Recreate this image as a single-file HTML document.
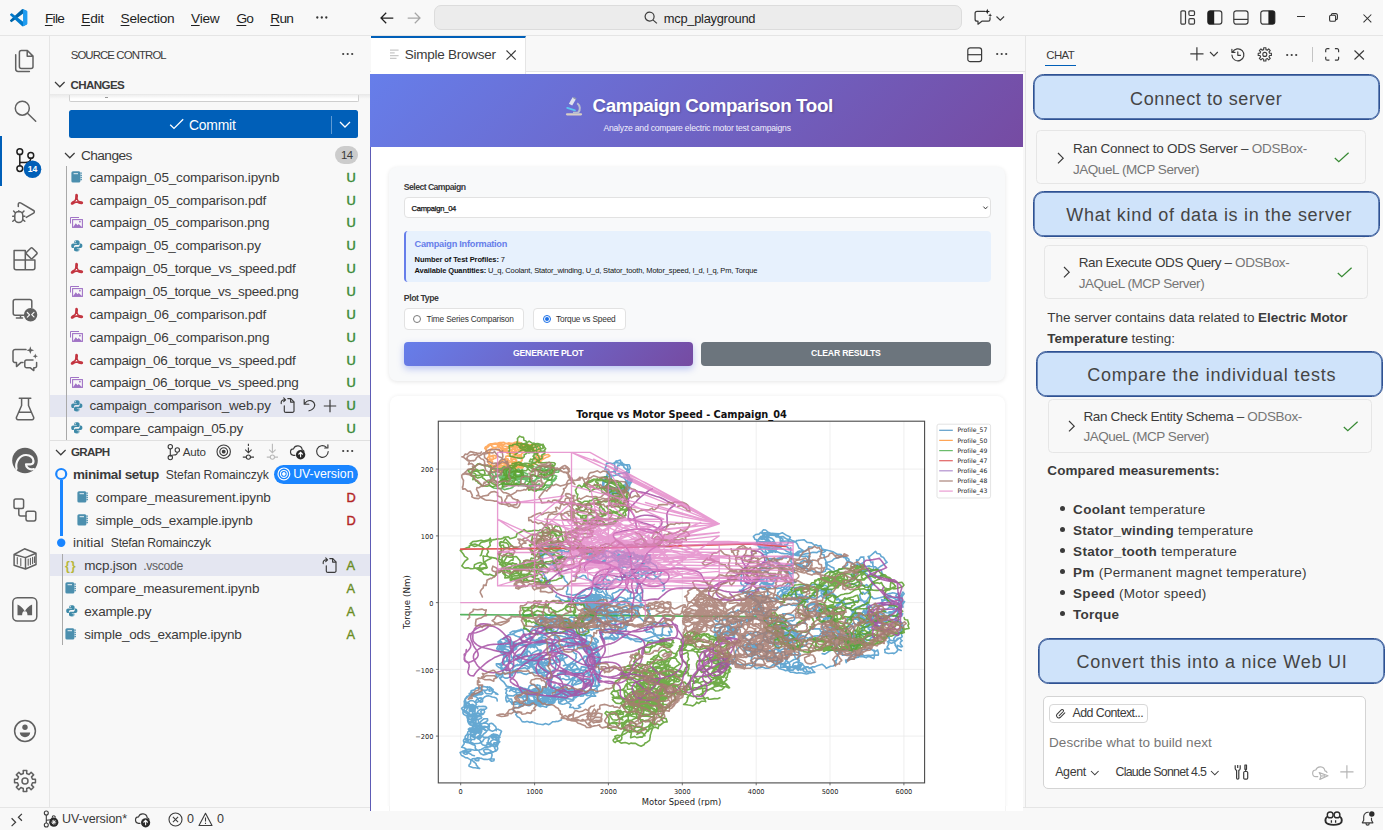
<!DOCTYPE html>
<html lang="en">
<head>
<meta charset="utf-8">
<title>mcp_playground - Visual Studio Code</title>
<style>
*{box-sizing:border-box;margin:0;padding:0}
html,body{width:1387px;height:830px;overflow:hidden;background:#fff}
body{font-family:"Liberation Sans",sans-serif;font-size:13.5px;color:#3b3b3b;position:relative}
.abs{position:absolute}
.t{position:absolute;white-space:pre;display:block}
svg{display:block;overflow:visible}
#win{position:absolute;left:0;top:0;width:1383px;height:830px;background:#f8f8f8}
/* ---------- title bar ---------- */
#title{position:absolute;left:0;top:0;width:1383px;height:36px;background:#f8f8f8;border-bottom:1px solid #e5e5e5}
#title .mi{position:absolute;top:9px;height:18px;line-height:18px;font-size:13.7px;color:#1e1e1e;white-space:pre}
.mu::first-letter{text-decoration:underline;text-decoration-thickness:1px;text-underline-offset:1.5px}
#cc{position:absolute;left:434px;top:5px;width:528px;height:25px;border:1px solid #dcdcdc;border-radius:7px;background:#ececec}
/* ---------- activity bar ---------- */
#act{position:absolute;left:0;top:36px;width:50px;height:771px;background:#f8f8f8;border-right:1px solid #e5e5e5}
#act svg{position:absolute}
/* ---------- side bar ---------- */
#side{position:absolute;left:50px;top:36px;width:320px;height:771px;background:#f8f8f8;overflow:hidden}
/* ---------- editor ---------- */
#ed{position:absolute;left:370px;top:36px;width:656px;height:775px;background:#f8f8f8;overflow:hidden}
/* ---------- chat ---------- */
#chat{position:absolute;left:1025px;top:36px;width:358px;height:771px;background:#f8f8f8;border-left:1px solid #e5e5e5}
/* ---------- status ---------- */
#status{position:absolute;left:0;top:807px;width:1383px;height:23px;background:#f8f8f8;border-top:1px solid #e5e5e5;font-size:13px;color:#3b3b3b}
</style>
</head>
<body>
<div id="win">

<!-- TITLE BAR -->
<div id="title">
<svg class="abs" style="left:9.8px;top:9px" width="17.4" height="17.4" viewBox="0 0 100 100">
<path fill="#0065A9" d="M96.46 10.8L75.86.88a6.23 6.23 0 0 0-7.11 1.2L1.3 63.58a4.17 4.17 0 0 0 0 6.17l5.51 5a2.78 2.78 0 0 0 3.55.16l83-61.54A4.17 4.17 0 0 1 100 16.67v-.24a6.25 6.25 0 0 0-3.54-5.63z"/>
<path fill="#007ACC" d="M96.46 89.2l-20.6 9.92a6.23 6.23 0 0 1-7.11-1.2L1.3 36.42a4.17 4.17 0 0 1 0-6.17l5.51-5a2.78 2.78 0 0 1 3.55-.16l83 61.54A4.17 4.17 0 0 0 100 83.33v.24a6.25 6.25 0 0 1-3.54 5.63z"/>
<path fill="#1F9CF0" d="M75.86 99.13a6.23 6.23 0 0 1-7.11-1.21c2.31 2.3 6.25.67 6.25-2.59V4.67c0-3.26-3.94-4.89-6.25-2.59a6.23 6.23 0 0 1 7.11-1.2l20.6 9.9A6.25 6.25 0 0 1 100 16.41v67.18a6.25 6.25 0 0 1-3.54 5.63z"/>
</svg>
<span class="t mu" style="left:44.90px;top:10.00px;line-height:18px;font-size:13.7px;letter-spacing:-0.666px;color:#1f1f1f;">File</span>
<span class="t mu" style="left:81.30px;top:10.00px;line-height:18px;font-size:13.7px;letter-spacing:-0.298px;color:#1f1f1f;">Edit</span>
<span class="t mu" style="left:120.60px;top:10.00px;line-height:18px;font-size:13.7px;letter-spacing:-0.279px;color:#1f1f1f;">Selection</span>
<span class="t mu" style="left:191.00px;top:10.00px;line-height:18px;font-size:13.7px;letter-spacing:-0.230px;color:#1f1f1f;">View</span>
<span class="t mu" style="left:236.40px;top:10.00px;line-height:18px;font-size:13.7px;letter-spacing:-0.783px;color:#1f1f1f;">Go</span>
<span class="t mu" style="left:270.30px;top:10.00px;line-height:18px;font-size:13.7px;letter-spacing:-0.736px;color:#1f1f1f;">Run</span>
<svg class="abs" style="left:316px;top:16px" width="12" height="3" viewBox="0 0 12 3"><circle cx="1.3" cy="1.5" r="1.15" fill="#333"/><circle cx="5.8" cy="1.5" r="1.15" fill="#333"/><circle cx="10.3" cy="1.5" r="1.15" fill="#333"/></svg>
<svg class="abs" style="left:379.5px;top:11.5px" width="14" height="12" viewBox="0 0 14 12"><path d="M13.3 6H1M6.2 0.8L1 6l5.2 5.2" fill="none" stroke="#1f1f1f" stroke-width="1.25"/></svg>
<svg class="abs" style="left:406.5px;top:11.5px" width="14" height="12" viewBox="0 0 14 12"><path d="M0.7 6H13M7.8 0.8L13 6l-5.2 5.2" fill="none" stroke="#a6a6a6" stroke-width="1.25"/></svg>
<div id="cc"></div>
<svg class="abs" style="left:644px;top:11px" width="14" height="13" viewBox="0 0 14 13"><circle cx="5.6" cy="5.6" r="4.5" fill="none" stroke="#3b3b3b" stroke-width="1.2"/><path d="M8.9 8.9L12.9 12.4" stroke="#3b3b3b" stroke-width="1.2" fill="none"/></svg>
<span class="t" style="left:663.80px;top:10.00px;line-height:17px;font-size:12.9px;letter-spacing:-0.279px;color:#1f1f1f;">mcp_playground</span>
<svg class="abs" style="left:974px;top:8px" width="20" height="18" viewBox="0 0 20 18">
<path d="M11.2 3.3H3.1a2 2 0 0 0-2 2v5.9a2 2 0 0 0 2 2h0.9v3l3.9-3h6.4a1.7 1.7 0 0 0 1.7-1.7V9.2" fill="none" stroke="#3b3b3b" stroke-width="1.25" stroke-linejoin="round"/>
<path d="M13.3 0.8l.75 2 2 .75-2 .75-.75 2-.75-2-2-.75 2-.75zM16.1 5.2l.55 1.5 1.5.55-1.5.55-.55 1.5-.55-1.5-1.5-.55 1.5-.55z" fill="#1f1f1f"/>
</svg>
<svg class="abs" style="left:996px;top:15.5px" width="9" height="5" viewBox="0 0 9 5"><path d="M0.5 0.5l3.8 3.7L8.1 0.5" fill="none" stroke="#3b3b3b" stroke-width="1.1"/></svg>
<svg class="abs" style="left:1179.5px;top:10.3px" width="16" height="15" viewBox="0 0 16 15">
<rect x="0.9" y="0.9" width="4.6" height="13.2" rx="1.2" fill="none" stroke="#3b3b3b" stroke-width="1.2"/>
<rect x="8.9" y="0.9" width="5.6" height="4.6" rx="1.2" fill="none" stroke="#3b3b3b" stroke-width="1.2"/>
<rect x="8.9" y="8.7" width="5.6" height="5.4" rx="1.2" fill="none" stroke="#3b3b3b" stroke-width="1.2"/></svg>
<svg class="abs" style="left:1206.5px;top:10.3px" width="16" height="15" viewBox="0 0 16 15">
<rect x="0.8" y="0.8" width="14" height="13.4" rx="2.4" fill="none" stroke="#3b3b3b" stroke-width="1.2"/>
<path d="M3 0.8h4.2v13.4H3A2.2 2.2 0 0 1 .8 12V3A2.2 2.2 0 0 1 3 .8z" fill="#1f1f1f"/></svg>
<svg class="abs" style="left:1233px;top:10.3px" width="16" height="15" viewBox="0 0 16 15">
<rect x="0.8" y="0.8" width="14.2" height="13.4" rx="2.4" fill="none" stroke="#3b3b3b" stroke-width="1.2"/>
<path d="M0.8 9.4H15" stroke="#3b3b3b" stroke-width="1.2"/></svg>
<svg class="abs" style="left:1260px;top:10.3px" width="16" height="15" viewBox="0 0 16 15">
<rect x="0.8" y="0.8" width="14" height="13.4" rx="2.4" fill="none" stroke="#3b3b3b" stroke-width="1.2"/>
<path d="M12.6 0.8H8.4v13.4h4.2a2.2 2.2 0 0 0 2.2-2.2V3A2.2 2.2 0 0 0 12.600.8z" fill="#1f1f1f"/></svg>
<div class="abs" style="left:1297px;top:16.4px;width:7.5px;height:1.1px;background:#333"></div>
<svg class="abs" style="left:1329px;top:13px" width="9" height="9" viewBox="0 0 9 9">
<rect x="0.6" y="2.2" width="6" height="6" rx="1.3" fill="none" stroke="#333" stroke-width="1.1"/>
<path d="M2.4 2.2V1.9A1.3 1.3 0 0 1 3.7.6h3.200A1.500 1.500 0 0 1 8.400 2.100v3.200A1.300 1.300 0 0 1 7.100 6.600H6.600" fill="none" stroke="#333" stroke-width="1.1"/></svg>
<svg class="abs" style="left:1362.5px;top:13.5px" width="9" height="9" viewBox="0 0 9 9"><path d="M0.5 0.5l7.8 7.8M8.300.5L0.500 8.300" stroke="#333" stroke-width="1.050" fill="none"/></svg>
</div>

<!-- ACTIVITY BAR -->
<div id="act">
<div class="abs" style="left:0;top:100px;width:2px;height:50px;background:#005fb8"></div>
<svg class="abs" style="left:0;top:0" width="50" height="771" viewBox="0 36 50 771" fill="none" stroke="#616161" stroke-width="1.5" stroke-linejoin="round" stroke-linecap="round">
<path d="M21.4 50.5H27.4L33 56.1V66.4a2 2 0 0 1-2 2H21.400a2 2 0 0 1-2-2V52.500a2 2 0 0 1 2-2zM27.200 50.700V56.300H32.800"/>
<path d="M15.700 54.800V69a2.400 2.400 0 0 0 2.400 2.400H29.400"/>
<circle cx="22.300" cy="108.200" r="7"/><path d="M27.500 113.300L35.700 121.200"/>
<g stroke="#1f1f1f"><circle cx="19.800" cy="151.700" r="2.900"/><circle cx="30.800" cy="155.400" r="2.900"/><circle cx="19.800" cy="168.600" r="2.900"/><path d="M19.800 154.600V165.700M30.800 158.300c0 3.200-2.500 4.300-5.500 4.300h-5.500"/></g>
<circle cx="32.500" cy="169.300" r="8.800" fill="#005fb8" stroke="none"/>
<path d="M18.300 206.500V204.200a1.500 1.500 0 0 1 2.300-1.300l13 7.600a1.500 1.500 0 0 1 0 2.600l-7.300 4.300"/>
<path d="M14.800 215.400a4 4 0 0 1 8 0v3.200a4 4 0 0 1-8 0zM14.800 216.200h-2.100M22.800 216.200h2.100M14.800 219.600l-2 1.700M22.800 219.600l2 1.700M15.300 212.800l-1.700-1.800M22.300 212.800l1.700-1.800M18.800 211.700v-1"/>
<path d="M14.100 250.500H25.300V269.700H16.100a2 2 0 0 1-2-2zM14.100 260.100H34.900V267.700a2 2 0 0 1-2 2H25.300"/>
<rect x="27.400" y="249" width="8.400" height="8.400" rx="1.300" transform="rotate(45 31.600 253.200)"/>
<path d="M23.500 315.200H15.200a2 2 0 0 1-2-2V301.500a2 2 0 0 1 2-2H29.800a2 2 0 0 1 2 2V307.500M20.500 315.400v2.400M16.400 318H22.500"/>
<circle cx="30.600" cy="314.800" r="6.700" fill="#616161" stroke="none"/><path d="M27.300 312.500l2.300 2.300-2.300 2.300M34 312.300l-2.300 2.300 2.300 2.300" stroke="#f8f8f8" stroke-width="1.200"/>
<path d="M26 349.400H15.200a2.200 2.200 0 0 0-2.200 2.200v8.800a2.200 2.200 0 0 0 2.200 2.200h1.300v4l4.300-4h2.200"/>
<path d="M36.600 362.400v3.600a1.800 1.800 0 0 1-1.800 1.800h-1v2.800l-3.400-2.800h-3.800a1.800 1.800 0 0 1-1.800-1.800v-4.200a1.800 1.800 0 0 1 1.800-1.800h6.400"/>
<path d="M30.300 346.300l1 2.900 2.900 1-2.900 1-1 2.900-1-2.900-2.900-1 2.900-1zM35.300 353.600l.7 1.900 1.900.7-1.900.7-.7 1.900-.7-1.900-1.900-.7 1.900-.7z" fill="#616161" stroke="none"/>
<path d="M19.300 398.200H30.800M21.600 398.200V405.500L16.500 417.200a1.800 1.800 0 0 0 1.600 2.600H32a1.800 1.800 0 0 0 1.600-2.600L28.500 405.500V398.200M18.700 412.300H31.400"/>
<circle cx="25" cy="460.500" r="12.800" fill="#616161" stroke="none"/>
<path d="M16.500 468.800c-1.500-7 3-13.800 9.500-13.800 4.700 0 7.500 3 7.500 6 0 2.200-1.600 3.300-3 3.300h-4.500c0 3 2.600 5.900 7.800 4.700" stroke="#f8f8f8" stroke-width="2.200"/>
<rect x="14" y="498.900" width="9.600" height="9.600" rx="1.800"/><rect x="26" y="511.300" width="9.800" height="9.600" rx="1.800"/><path d="M18.800 508.500V514a2 2 0 0 0 2 2H26"/>
<path d="M14.100 554.500L24.500 548.800L36 553.200V564.500L25.500 569L14.100 565.300zM14.100 554.500L25.500 557.600L36 553.200M25.500 557.600V569"/>
<path d="M17.300 557.500v6.500M20.800 558.500v7M28.200 559v6.300M30.400 558.200v6.200M32.600 557.400v6.200M34.500 556.700v5.800" stroke-width="1.100"/>
<rect x="12.800" y="597.800" width="24" height="23.200" rx="4.500"/>
<path d="M17.500 615.300V604.600c3.300 1.500 5.800 4 7.300 6.800 1.500-2.800 4-5.300 7.300-6.800v10.700h-4.600c0-2.700-1.100-4.200-2.700-4.200s-2.700 1.500-2.700 4.200z" fill="#616161" stroke="none"/>
<circle cx="25" cy="731" r="10.400"/><circle cx="25" cy="727.300" r="2.700" fill="#616161" stroke="none"/><path d="M19.800 732.600h10.400a5.200 4.600 0 0 1-10.400 0z" fill="#616161" stroke="none"/>
<path d="M23.21 770.55L26.79 770.55L26.68 773.49L29.13 774.50L31.12 772.34L33.66 774.88L31.50 776.87L32.51 779.32L35.45 779.21L35.45 782.79L32.51 782.68L31.50 785.13L33.66 787.12L31.12 789.66L29.13 787.50L26.68 788.51L26.79 791.45L23.21 791.45L23.32 788.51L20.87 787.50L18.88 789.66L16.34 787.12L18.50 785.13L17.49 782.68L14.55 782.79L14.55 779.21L17.49 779.32L18.50 776.87L16.34 774.88L18.88 772.34L20.87 774.50L23.32 773.49z" stroke-linejoin="round"/><circle cx="25" cy="781" r="3"/>
</svg>
<span class="t" style="left:27.72px;top:128.00px;line-height:11px;font-size:8.6px;font-weight:700;color:#fff;">14</span>
</div>

<!-- SIDE BAR -->
<div id="side">
<div class="abs" style="left:-50px;top:-36px;width:0;height:0">
<span class="t" style="left:70.70px;top:48.00px;line-height:15px;font-size:11.4px;letter-spacing:-0.892px;color:#3b3b3b;">SOURCE CONTROL</span>
<svg class="abs" style="left:342.00px;top:52.00px" width="13.0" height="4" viewBox="0 0 13.0 4"><circle cx="1.20" cy="2" r="1.1" fill="#3b3b3b"/><circle cx="5.70" cy="2" r="1.1" fill="#3b3b3b"/><circle cx="10.20" cy="2" r="1.1" fill="#3b3b3b"/></svg>
<svg class="abs" style="left:54.20px;top:80.60px" width="11.60" height="6.80" viewBox="-1 -1 11.60 6.80"><path d="M0 0L4.80 4.80L9.60 0" fill="none" stroke="#3b3b3b" stroke-width="1.2"/></svg>
<span class="t" style="left:70.60px;top:77.00px;line-height:15px;font-size:11.6px;letter-spacing:-0.641px;font-weight:700;color:#3b3b3b;">CHANGES</span>
<div class="abs" style="left:69px;top:95px;width:289.500px;height:6.700px;background:#fff;border:1px solid #cecece;border-top:none;border-radius:0 0 2px 2px"></div>
<div class="abs" style="left:50px;top:94px;width:320px;height:5px;background:linear-gradient(#dddddd99,#dddddd00)"></div>
<div class="abs" style="left:105px;top:97px;width:3px;height:1px;background:#999"></div>
<div class="abs" style="left:69px;top:110.300px;width:289.300px;height:27.700px;background:#005fb8;border-radius:2.500px"></div>
<div class="abs" style="left:331.300px;top:116px;width:1px;height:17.500px;background:#5f9ad3"></div>
<svg class="abs" style="left:169px;top:118px" width="16" height="12" viewBox="0 0 16 12"><path d="M1.200 6.800L5 10.400L14.200 1.200" fill="none" stroke="#fff" stroke-width="1.300"/></svg>
<span class="t" style="left:189.00px;top:116.00px;line-height:18px;font-size:13.9px;letter-spacing:-0.210px;color:#fff;">Commit</span>
<svg class="abs" style="left:338.80px;top:121.20px" width="12.00" height="7.00" viewBox="-1 -1 12.00 7.00"><path d="M0 0L5.00 5.00L10.00 0" fill="none" stroke="#fff" stroke-width="1.3"/></svg>
<svg class="abs" style="left:63.80px;top:151.80px" width="11.60" height="6.80" viewBox="-1 -1 11.60 6.80"><path d="M0 0L4.80 4.80L9.60 0" fill="none" stroke="#3b3b3b" stroke-width="1.2"/></svg>
<span class="t" style="left:80.90px;top:147.00px;line-height:18px;font-size:13.7px;letter-spacing:-0.542px;color:#3b3b3b;">Changes</span>
<div class="abs" style="left:335px;top:145.800px;width:23.200px;height:17.800px;border-radius:9px;background:#cccccc"></div>
<span class="t" style="left:341.00px;top:148.00px;line-height:15px;font-size:11.4px;letter-spacing:-0.536px;color:#3b3b3b;">14</span>
<div class="abs" style="left:50px;top:395.200px;width:320px;height:22.300px;background:#e4e6f1"></div>
<div class="abs" style="left:66px;top:166px;width:1px;height:274px;background:#a9a9a9"></div>
<svg class="abs" style="left:71.10px;top:171.00px" width="12" height="12" viewBox="0 0 12 12"><rect x="0.400" y="0.200" width="9" height="11.400" rx="1.600" fill="#4c8fae"/><path d="M9.400 2.100h1.500M9.400 4.300h1.500M9.400 6.500h1.500M9.400 8.700h1.500" stroke="#4c8fae" stroke-width="1.300"/><path d="M2.600 2.700h4.400" stroke="#e8f1f5" stroke-width="1"/></svg>
<span class="t" style="left:89.50px;top:169.00px;line-height:18px;font-size:13.5px;letter-spacing:-0.163px;color:#3b3b3b;">campaign_05_comparison.ipynb</span>
<span class="t" style="left:346.40px;top:169.00px;line-height:17px;font-size:12.8px;letter-spacing:-1.150px;color:#388a34;-webkit-text-stroke:.45px #388a34;">U</span>
<svg class="abs" style="left:70.70px;top:194.14px" width="12" height="11" viewBox="0 0 12 11"><path d="M5.300 0.600c.9-.3 1.200.9.800 2.600-.3 1.400-.2 2.400.9 3.500 1 .9 2.300 1.200 3.600 1.300 1 .1 1.200 1.300 0 1.400-1.400.1-3.300-.5-4.700-1.500-1.400.3-2.800.900-3.800 1.700-.9.800-1.900.4-1.500-.5.500-1 1.700-1.500 3.400-2.300.700-1.400 1-2.600.9-4.200-.1-1.200 0-1.900.4-2z" fill="none" stroke="#c3343f" stroke-width="1.500" stroke-linejoin="round"/></svg>
<span class="t" style="left:89.50px;top:192.00px;line-height:18px;font-size:13.5px;letter-spacing:-0.161px;color:#3b3b3b;">campaign_05_comparison.pdf</span>
<span class="t" style="left:346.40px;top:192.00px;line-height:17px;font-size:12.8px;letter-spacing:-1.150px;color:#388a34;-webkit-text-stroke:.45px #388a34;">U</span>
<svg class="abs" style="left:70.30px;top:217.18px" width="13" height="11" viewBox="0 0 13 11"><path d="M0.500 6.500V0.500H9" fill="none" stroke="#a173c6" stroke-width="1"/><rect x="2.600" y="2.600" width="9.800" height="7.800" fill="none" stroke="#a173c6" stroke-width="1.100"/><path d="M3.200 9.900l2.600-3.600 1.700 2 1.300-1.200 3 2.800z" fill="#a173c6"/><circle cx="9.900" cy="4.700" r="0.900" fill="#a173c6"/></svg>
<span class="t" style="left:89.50px;top:214.00px;line-height:18px;font-size:13.5px;letter-spacing:-0.189px;color:#3b3b3b;">campaign_05_comparison.png</span>
<span class="t" style="left:346.40px;top:214.00px;line-height:17px;font-size:12.8px;letter-spacing:-1.150px;color:#388a34;-webkit-text-stroke:.45px #388a34;">U</span>
<svg class="abs" style="left:71.00px;top:239.62px" width="12" height="12" viewBox="0 0 12 12"><path d="M5.700.2c-2.300 0-2.500.9-2.500 1.700v1.200h2.600v.5H2.100C1 3.600.2 4.400.2 5.800s.7 2.300 1.700 2.300h1V6.700c0-1 .8-1.800 1.800-1.800h2.400c.8 0 1.500-.7 1.500-1.500V1.900C8.600.9 7.600.2 5.700.2zM4.300 1.100a.55.55 0 1 1 0 1.100.55.55 0 0 1 0-1.100z" fill="#3e8aa8"/><path d="M5.900 11.400c2.300 0 2.500-.9 2.500-1.700V8.500H5.800V8h3.700c1.100 0 1.900-.8 1.900-2.200s-.7-2.300-1.700-2.300h-1v1.400c0 1-.8 1.800-1.800 1.800H4.500c-.8 0-1.500.7-1.500 1.500v1.500c0 1 1 1.700 2.900 1.700zM7.300 10.500a.55.55 0 1 1 0-1.100.55.55 0 0 1 0 1.100z" fill="#3e8aa8"/></svg>
<span class="t" style="left:89.50px;top:237.00px;line-height:18px;font-size:13.5px;letter-spacing:-0.206px;color:#3b3b3b;">campaign_05_comparison.py</span>
<span class="t" style="left:346.40px;top:237.00px;line-height:17px;font-size:12.8px;letter-spacing:-1.150px;color:#388a34;-webkit-text-stroke:.45px #388a34;">U</span>
<svg class="abs" style="left:70.70px;top:262.66px" width="12" height="11" viewBox="0 0 12 11"><path d="M5.300 0.600c.9-.3 1.200.9.800 2.600-.3 1.400-.2 2.400.9 3.500 1 .9 2.300 1.200 3.600 1.300 1 .1 1.200 1.300 0 1.400-1.400.1-3.300-.5-4.700-1.500-1.400.3-2.800.900-3.800 1.700-.9.800-1.900.4-1.500-.5.500-1 1.700-1.500 3.400-2.300.700-1.400 1-2.600.9-4.200-.1-1.200 0-1.900.4-2z" fill="none" stroke="#c3343f" stroke-width="1.500" stroke-linejoin="round"/></svg>
<span class="t" style="left:89.50px;top:260.00px;line-height:18px;font-size:13.5px;letter-spacing:-0.283px;color:#3b3b3b;">campaign_05_torque_vs_speed.pdf</span>
<span class="t" style="left:346.40px;top:260.00px;line-height:17px;font-size:12.8px;letter-spacing:-1.150px;color:#388a34;-webkit-text-stroke:.45px #388a34;">U</span>
<svg class="abs" style="left:70.30px;top:285.70px" width="13" height="11" viewBox="0 0 13 11"><path d="M0.500 6.500V0.500H9" fill="none" stroke="#a173c6" stroke-width="1"/><rect x="2.600" y="2.600" width="9.800" height="7.800" fill="none" stroke="#a173c6" stroke-width="1.100"/><path d="M3.200 9.900l2.600-3.600 1.700 2 1.300-1.200 3 2.800z" fill="#a173c6"/><circle cx="9.900" cy="4.700" r="0.900" fill="#a173c6"/></svg>
<span class="t" style="left:89.50px;top:283.00px;line-height:18px;font-size:13.5px;letter-spacing:-0.307px;color:#3b3b3b;">campaign_05_torque_vs_speed.png</span>
<span class="t" style="left:346.40px;top:283.00px;line-height:17px;font-size:12.8px;letter-spacing:-1.150px;color:#388a34;-webkit-text-stroke:.45px #388a34;">U</span>
<svg class="abs" style="left:70.70px;top:308.34px" width="12" height="11" viewBox="0 0 12 11"><path d="M5.300 0.600c.9-.3 1.200.9.800 2.600-.3 1.400-.2 2.400.9 3.500 1 .9 2.300 1.200 3.600 1.300 1 .1 1.200 1.300 0 1.400-1.400.1-3.300-.5-4.700-1.500-1.400.3-2.800.900-3.800 1.700-.9.800-1.900.4-1.500-.5.500-1 1.700-1.500 3.400-2.300.700-1.400 1-2.600.9-4.200-.1-1.200 0-1.900.4-2z" fill="none" stroke="#c3343f" stroke-width="1.500" stroke-linejoin="round"/></svg>
<span class="t" style="left:89.50px;top:306.00px;line-height:18px;font-size:13.5px;letter-spacing:-0.161px;color:#3b3b3b;">campaign_06_comparison.pdf</span>
<span class="t" style="left:346.40px;top:306.00px;line-height:17px;font-size:12.8px;letter-spacing:-1.150px;color:#388a34;-webkit-text-stroke:.45px #388a34;">U</span>
<svg class="abs" style="left:70.30px;top:331.38px" width="13" height="11" viewBox="0 0 13 11"><path d="M0.500 6.500V0.500H9" fill="none" stroke="#a173c6" stroke-width="1"/><rect x="2.600" y="2.600" width="9.800" height="7.800" fill="none" stroke="#a173c6" stroke-width="1.100"/><path d="M3.200 9.900l2.600-3.600 1.700 2 1.300-1.200 3 2.800z" fill="#a173c6"/><circle cx="9.900" cy="4.700" r="0.900" fill="#a173c6"/></svg>
<span class="t" style="left:89.50px;top:329.00px;line-height:18px;font-size:13.5px;letter-spacing:-0.189px;color:#3b3b3b;">campaign_06_comparison.png</span>
<span class="t" style="left:346.40px;top:329.00px;line-height:17px;font-size:12.8px;letter-spacing:-1.150px;color:#388a34;-webkit-text-stroke:.45px #388a34;">U</span>
<svg class="abs" style="left:70.70px;top:354.02px" width="12" height="11" viewBox="0 0 12 11"><path d="M5.300 0.600c.9-.3 1.200.9.800 2.600-.3 1.400-.2 2.400.9 3.500 1 .9 2.300 1.200 3.600 1.300 1 .1 1.200 1.300 0 1.400-1.400.1-3.300-.5-4.700-1.500-1.400.3-2.800.900-3.800 1.700-.9.800-1.900.4-1.500-.5.500-1 1.700-1.500 3.400-2.300.700-1.400 1-2.600.9-4.200-.1-1.200 0-1.900.4-2z" fill="none" stroke="#c3343f" stroke-width="1.500" stroke-linejoin="round"/></svg>
<span class="t" style="left:89.50px;top:352.00px;line-height:18px;font-size:13.5px;letter-spacing:-0.283px;color:#3b3b3b;">campaign_06_torque_vs_speed.pdf</span>
<span class="t" style="left:346.40px;top:352.00px;line-height:17px;font-size:12.8px;letter-spacing:-1.150px;color:#388a34;-webkit-text-stroke:.45px #388a34;">U</span>
<svg class="abs" style="left:70.30px;top:377.06px" width="13" height="11" viewBox="0 0 13 11"><path d="M0.500 6.500V0.500H9" fill="none" stroke="#a173c6" stroke-width="1"/><rect x="2.600" y="2.600" width="9.800" height="7.800" fill="none" stroke="#a173c6" stroke-width="1.100"/><path d="M3.200 9.900l2.600-3.600 1.700 2 1.300-1.200 3 2.800z" fill="#a173c6"/><circle cx="9.900" cy="4.700" r="0.900" fill="#a173c6"/></svg>
<span class="t" style="left:89.50px;top:374.00px;line-height:18px;font-size:13.5px;letter-spacing:-0.307px;color:#3b3b3b;">campaign_06_torque_vs_speed.png</span>
<span class="t" style="left:346.40px;top:374.00px;line-height:17px;font-size:12.8px;letter-spacing:-1.150px;color:#388a34;-webkit-text-stroke:.45px #388a34;">U</span>
<svg class="abs" style="left:71.00px;top:399.50px" width="12" height="12" viewBox="0 0 12 12"><path d="M5.700.2c-2.300 0-2.500.9-2.500 1.700v1.200h2.600v.5H2.100C1 3.600.2 4.400.2 5.800s.7 2.300 1.700 2.300h1V6.700c0-1 .8-1.800 1.800-1.800h2.400c.8 0 1.500-.7 1.500-1.500V1.900C8.600.9 7.600.2 5.700.2zM4.300 1.100a.55.55 0 1 1 0 1.100.55.55 0 0 1 0-1.100z" fill="#3e8aa8"/><path d="M5.900 11.400c2.300 0 2.500-.9 2.500-1.700V8.500H5.800V8h3.700c1.100 0 1.900-.8 1.900-2.200s-.7-2.300-1.700-2.300h-1v1.400c0 1-.8 1.800-1.800 1.800H4.500c-.8 0-1.500.7-1.500 1.500v1.500c0 1 1 1.700 2.900 1.700zM7.300 10.500a.55.55 0 1 1 0-1.100.55.55 0 0 1 0 1.100z" fill="#3e8aa8"/></svg>
<span class="t" style="left:89.50px;top:397.00px;line-height:18px;font-size:13.5px;letter-spacing:-0.189px;color:#3b3b3b;">campaign_comparison_web.py</span>
<span class="t" style="left:346.40px;top:397.00px;line-height:17px;font-size:12.8px;letter-spacing:-1.150px;color:#388a34;-webkit-text-stroke:.45px #388a34;">U</span>
<svg class="abs" style="left:71.00px;top:422.34px" width="12" height="12" viewBox="0 0 12 12"><path d="M5.700.2c-2.300 0-2.500.9-2.500 1.700v1.200h2.600v.5H2.100C1 3.600.2 4.400.2 5.800s.7 2.300 1.700 2.300h1V6.700c0-1 .8-1.800 1.800-1.800h2.400c.8 0 1.500-.7 1.500-1.500V1.900C8.600.9 7.600.2 5.700.2zM4.300 1.100a.55.55 0 1 1 0 1.100.55.55 0 0 1 0-1.100z" fill="#3e8aa8"/><path d="M5.900 11.400c2.300 0 2.500-.9 2.500-1.700V8.500H5.800V8h3.700c1.100 0 1.900-.8 1.900-2.200s-.7-2.300-1.700-2.300h-1v1.400c0 1-.8 1.800-1.800 1.800H4.500c-.8 0-1.500.7-1.500 1.500v1.500c0 1 1 1.700 2.900 1.700zM7.300 10.500a.55.55 0 1 1 0-1.100.55.55 0 0 1 0 1.100z" fill="#3e8aa8"/></svg>
<span class="t" style="left:89.50px;top:420.00px;line-height:18px;font-size:13.5px;letter-spacing:-0.250px;color:#3b3b3b;">compare_campaign_05.py</span>
<span class="t" style="left:346.40px;top:420.00px;line-height:17px;font-size:12.8px;letter-spacing:-1.150px;color:#388a34;-webkit-text-stroke:.45px #388a34;">U</span>
<svg class="abs" style="left:280.00px;top:396.90px" width="16" height="17" viewBox="0 0 16 17" fill="none" stroke="#3b3b3b" stroke-width="1.150" stroke-linejoin="round" stroke-linecap="round"><path d="M7.800 1.600h3l3.200 3.300v9a1.500 1.500 0 0 1-1.500 1.500H5.800a1.500 1.500 0 0 1-1.500-1.500V8.800"/><path d="M10.600 1.800v3.300h3.200"/><path d="M1.200 6.600V5.400a2.600 2.600 0 0 1 2.600-2.600h1.600M3.700 0.900l1.900 1.900-1.900 1.900"/></svg>
<svg class="abs" style="left:302px;top:398.40px" width="15" height="14" viewBox="0 0 15 14" fill="none" stroke="#3b3b3b" stroke-width="1.150" stroke-linecap="round" stroke-linejoin="round"><path d="M2.200 1.500V6.200H6.900M2.400 6c1.600-2.600 4-3.900 6.500-3.400 2.800.6 4.400 3.400 3.500 6-.7 2-2.700 3.400-5.400 4.200"/></svg>
<svg class="abs" style="left:322.500px;top:398.60px" width="14" height="14" viewBox="0 0 14 14"><path d="M7 0.800V13.200M0.800 7H13.200" stroke="#3b3b3b" stroke-width="1.200" fill="none"/></svg>
<div class="abs" style="left:50px;top:440px;width:320px;height:1px;background:#e0e0e0"></div>
<svg class="abs" style="left:54.60px;top:448.60px" width="11.60" height="6.80" viewBox="-1 -1 11.60 6.80"><path d="M0 0L4.80 4.80L9.60 0" fill="none" stroke="#3b3b3b" stroke-width="1.2"/></svg>
<span class="t" style="left:70.90px;top:444.00px;line-height:15px;font-size:11.6px;letter-spacing:-0.635px;font-weight:700;color:#3b3b3b;">GRAPH</span>
<svg class="abs" style="left:166px;top:442.500px" width="15" height="18" viewBox="166 442.500 15 18" fill="none" stroke="#3b3b3b" stroke-width="1.100"><circle cx="170.300" cy="446.200" r="2.200"/><circle cx="177.300" cy="449.500" r="2.200"/><circle cx="170.300" cy="457.100" r="2.200"/><path d="M170.300 448.400V454.900M177.300 451.700c0 2.300-1.700 2.800-3.500 2.800-1.900 0-3.500.3-3.500 1.600"/></svg>
<span class="t" style="left:182.70px;top:444.00px;line-height:15px;font-size:11.6px;letter-spacing:-0.165px;color:#3b3b3b;">Auto</span>
<svg class="abs" style="left:215.60px;top:443.70px" width="15.40" height="15.40" viewBox="-7.70 -7.70 15.40 15.40" fill="none" stroke="#3b3b3b" stroke-width="1.1"><circle r="6.70"/><circle r="3.89"/><circle r="1.34" fill="#3b3b3b"/></svg>
<svg class="abs" style="left:241.500px;top:443px" width="13" height="17" viewBox="0 0 13 17" fill="none" stroke="#3b3b3b" stroke-width="1.100"><path d="M6.400 0.800V3M6.400 4.600V9.500M3.200 6.600L6.400 9.800L9.600 6.600M0.800 14.100H4.200M8.600 14.100H12"/><circle cx="6.400" cy="14.100" r="2.100"/></svg>
<svg class="abs" style="left:265.800px;top:443px" width="13" height="17" viewBox="0 0 13 17" fill="none" stroke="#b9b9b9" stroke-width="1.100"><path d="M6.400 0.800V9.500M3.200 6.600L6.400 9.800L9.600 6.600M0.800 14.100H4.200M8.600 14.100H12"/><circle cx="6.400" cy="14.100" r="2.100"/></svg>
<svg class="abs" style="left:290px;top:444.500px" width="16" height="15" viewBox="0 0 16 15"><path d="M5 10.300H3.900a3.200 3.200 0 0 1-.4-6.400 4.500 4.500 0 0 1 8.700.9 2.600 2.600 0 0 1 1.800 1.500" fill="none" stroke="#3b3b3b" stroke-width="1.150" stroke-linecap="round"/><circle cx="10.600" cy="9.800" r="4.700" fill="#2b2b2b"/><path d="M10.600 12.300V7.600M8.500 9.500l2.100-2.100 2.100 2.100" fill="none" stroke="#fff" stroke-width="1.100"/></svg>
<svg class="abs" style="left:315px;top:443.500px" width="15" height="15" viewBox="0 0 15 15" fill="none" stroke="#3b3b3b" stroke-width="1.150" stroke-linecap="round" stroke-linejoin="round"><path d="M13.200 7.600a5.800 5.800 0 1 1-2-4.500M12.900 0.800V4H9.700"/></svg>
<svg class="abs" style="left:342.30px;top:449.40px" width="13.0" height="4" viewBox="0 0 13.0 4"><circle cx="1.20" cy="2" r="1.1" fill="#3b3b3b"/><circle cx="5.70" cy="2" r="1.1" fill="#3b3b3b"/><circle cx="10.20" cy="2" r="1.1" fill="#3b3b3b"/></svg>
<div class="abs" style="left:59.800px;top:480px;width:2.900px;height:55.500px;background:#1a85ff"></div>
<svg class="abs" style="left:54px;top:467px" width="14" height="14" viewBox="54 467 14 14"><circle cx="61.200" cy="474" r="5" fill="#f8f8f8" stroke="#1a85ff" stroke-width="2.200"/></svg>
<span class="t" style="left:72.90px;top:466.00px;line-height:18px;font-size:13.5px;letter-spacing:-0.368px;font-weight:700;color:#3b3b3b;">minimal setup</span>
<span class="t" style="left:165.80px;top:467.00px;line-height:16px;font-size:12.2px;letter-spacing:-0.124px;color:#3b3b3b;">Stefan Romainczyk</span>
<div class="abs" style="left:274.200px;top:465px;width:84px;height:18.700px;border-radius:9.500px;background:#1a85ff"></div>
<svg class="abs" style="left:277.30px;top:467.40px" width="13.80" height="13.80" viewBox="-6.90 -6.90 13.80 13.80" fill="none" stroke="#fff" stroke-width="1.2"><circle r="5.90"/><circle r="3.42"/><circle r="1.18" fill="#fff"/></svg>
<span class="t" style="left:293.20px;top:466.00px;line-height:16px;font-size:12.3px;letter-spacing:0.016px;color:#fff;">UV-version</span>
<svg class="abs" style="left:76.80px;top:491.00px" width="12" height="12" viewBox="0 0 12 12"><rect x="0.400" y="0.200" width="9" height="11.400" rx="1.600" fill="#4c8fae"/><path d="M9.400 2.100h1.500M9.400 4.300h1.500M9.400 6.500h1.500M9.400 8.700h1.500" stroke="#4c8fae" stroke-width="1.300"/><path d="M2.600 2.700h4.400" stroke="#e8f1f5" stroke-width="1"/></svg>
<span class="t" style="left:95.70px;top:489.00px;line-height:18px;font-size:13.5px;letter-spacing:-0.144px;color:#3b3b3b;">compare_measurement.ipynb</span>
<span class="t" style="left:346.60px;top:489.00px;line-height:17px;font-size:12.8px;letter-spacing:-1.250px;color:#b32424;-webkit-text-stroke:.4px #b32424;">D</span>
<svg class="abs" style="left:76.80px;top:513.80px" width="12" height="12" viewBox="0 0 12 12"><rect x="0.400" y="0.200" width="9" height="11.400" rx="1.600" fill="#4c8fae"/><path d="M9.400 2.100h1.500M9.400 4.300h1.500M9.400 6.500h1.500M9.400 8.700h1.500" stroke="#4c8fae" stroke-width="1.300"/><path d="M2.600 2.700h4.400" stroke="#e8f1f5" stroke-width="1"/></svg>
<span class="t" style="left:95.70px;top:512.00px;line-height:18px;font-size:13.5px;letter-spacing:-0.252px;color:#3b3b3b;">simple_ods_example.ipynb</span>
<span class="t" style="left:346.60px;top:512.00px;line-height:17px;font-size:12.8px;letter-spacing:-1.250px;color:#b32424;-webkit-text-stroke:.4px #b32424;">D</span>
<svg class="abs" style="left:56px;top:537px" width="11" height="11" viewBox="56 537 11 11"><circle cx="61.200" cy="542.700" r="4.200" fill="#1a85ff"/></svg>
<span class="t" style="left:72.90px;top:534.00px;line-height:18px;font-size:13.5px;letter-spacing:0.005px;color:#3b3b3b;">initial</span>
<span class="t" style="left:110.80px;top:535.00px;line-height:16px;font-size:12.2px;letter-spacing:-0.294px;color:#3b3b3b;">Stefan Romainczyk</span>
<div class="abs" style="left:50px;top:554.400px;width:320px;height:22px;background:#e4e6f1"></div>
<div class="abs" style="left:61.600px;top:554.400px;width:1px;height:91px;background:#a9a9a9"></div>
<span class="t" style="left:65.00px;top:558.00px;line-height:16px;font-size:12.5px;letter-spacing:0.933px;font-weight:700;color:#b7b73b;">{}</span>
<span class="t" style="left:84.30px;top:557.00px;line-height:18px;font-size:13.5px;letter-spacing:-0.179px;color:#3b3b3b;">mcp.json</span>
<span class="t" style="left:143.20px;top:558.00px;line-height:16px;font-size:12.2px;letter-spacing:-0.317px;color:#5f5f5f;">.vscode</span>
<svg class="abs" style="left:321.50px;top:557.30px" width="16" height="17" viewBox="0 0 16 17" fill="none" stroke="#3b3b3b" stroke-width="1.150" stroke-linejoin="round" stroke-linecap="round"><path d="M7.800 1.600h3l3.200 3.300v9a1.500 1.500 0 0 1-1.500 1.500H5.800a1.500 1.500 0 0 1-1.500-1.500V8.800"/><path d="M10.600 1.800v3.300h3.200"/><path d="M1.200 6.600V5.400a2.600 2.600 0 0 1 2.600-2.600h1.600M3.700 0.900l1.900 1.900-1.900 1.900"/></svg>
<span class="t" style="left:346.60px;top:557.00px;line-height:17px;font-size:12.8px;letter-spacing:-0.547px;color:#6a8c1f;-webkit-text-stroke:.35px #6a8c1f;">A</span>
<svg class="abs" style="left:65.40px;top:582.10px" width="12" height="12" viewBox="0 0 12 12"><rect x="0.400" y="0.200" width="9" height="11.400" rx="1.600" fill="#4c8fae"/><path d="M9.400 2.100h1.500M9.400 4.300h1.500M9.400 6.500h1.500M9.400 8.700h1.500" stroke="#4c8fae" stroke-width="1.300"/><path d="M2.600 2.700h4.400" stroke="#e8f1f5" stroke-width="1"/></svg>
<span class="t" style="left:84.30px;top:580.00px;line-height:18px;font-size:13.5px;letter-spacing:-0.144px;color:#3b3b3b;">compare_measurement.ipynb</span>
<span class="t" style="left:346.60px;top:580.00px;line-height:17px;font-size:12.8px;letter-spacing:-0.547px;color:#6a8c1f;-webkit-text-stroke:.35px #6a8c1f;">A</span>
<svg class="abs" style="left:65.50px;top:605.00px" width="12" height="12" viewBox="0 0 12 12"><path d="M5.700.2c-2.300 0-2.500.9-2.500 1.700v1.200h2.600v.5H2.100C1 3.600.2 4.400.2 5.800s.7 2.300 1.700 2.300h1V6.700c0-1 .8-1.800 1.800-1.800h2.400c.8 0 1.500-.7 1.500-1.500V1.900C8.600.9 7.600.2 5.700.2zM4.300 1.100a.55.55 0 1 1 0 1.100.55.55 0 0 1 0-1.100z" fill="#3e8aa8"/><path d="M5.900 11.400c2.300 0 2.500-.9 2.500-1.700V8.500H5.800V8h3.700c1.100 0 1.900-.8 1.900-2.200s-.7-2.300-1.700-2.300h-1v1.400c0 1-.8 1.800-1.800 1.800H4.500c-.8 0-1.500.7-1.500 1.500v1.500c0 1 1 1.700 2.900 1.700zM7.300 10.500a.55.55 0 1 1 0-1.100.55.55 0 0 1 0 1.100z" fill="#3e8aa8"/></svg>
<span class="t" style="left:84.30px;top:603.00px;line-height:18px;font-size:13.5px;letter-spacing:-0.205px;color:#3b3b3b;">example.py</span>
<span class="t" style="left:346.60px;top:603.00px;line-height:17px;font-size:12.8px;letter-spacing:-0.547px;color:#6a8c1f;-webkit-text-stroke:.35px #6a8c1f;">A</span>
<svg class="abs" style="left:65.40px;top:627.70px" width="12" height="12" viewBox="0 0 12 12"><rect x="0.400" y="0.200" width="9" height="11.400" rx="1.600" fill="#4c8fae"/><path d="M9.400 2.100h1.500M9.400 4.300h1.500M9.400 6.500h1.500M9.400 8.700h1.500" stroke="#4c8fae" stroke-width="1.300"/><path d="M2.600 2.700h4.400" stroke="#e8f1f5" stroke-width="1"/></svg>
<span class="t" style="left:84.30px;top:626.00px;line-height:18px;font-size:13.5px;letter-spacing:-0.231px;color:#3b3b3b;">simple_ods_example.ipynb</span>
<span class="t" style="left:346.60px;top:626.00px;line-height:17px;font-size:12.8px;letter-spacing:-0.547px;color:#6a8c1f;-webkit-text-stroke:.35px #6a8c1f;">A</span>
</div>
</div>

<!-- EDITOR -->
<div id="ed">
<div class="abs" style="left:-370px;top:-36px;width:0;height:0">
<div class="abs" style="left:370px;top:36px;width:656px;height:36px;background:#f8f8f8;border-bottom:1px solid #e5e5e5"></div>
<div class="abs" style="left:371.400px;top:36px;width:154.400px;height:38px;background:#fff;border-right:1px solid #e5e5e5;border-top:2px solid #005fb8"></div>
<div class="abs" style="left:370px;top:72px;width:1.400px;height:2px;background:#fff"></div>
<div class="abs" style="left:525.800px;top:72px;width:497.500px;height:2px;background:#fff"></div>
<svg class="abs" style="left:389.500px;top:49px" width="10" height="11" viewBox="0 0 10 11"><path d="M0 1.200H8.600M0 3.900H4.700M0 6.600H8.600M0 9.300H6.500" stroke="#c8c8c8" stroke-width="1.300" fill="none"/></svg>
<span class="t" style="left:404.70px;top:46.00px;line-height:18px;font-size:13.5px;letter-spacing:-0.252px;color:#3b3b3b;">Simple Browser</span>
<svg class="abs" style="left:506px;top:49.800px" width="11" height="11" viewBox="0 0 11 11"><path d="M0.500 0.500l9.200 9.200M9.700.5L0.500 9.700" stroke="#3b3b3b" stroke-width="1.150" fill="none"/></svg>
<svg class="abs" style="left:967px;top:46.800px" width="16" height="16" viewBox="0 0 16 16" fill="none" stroke="#3b3b3b" stroke-width="1.200"><rect x="0.800" y="0.800" width="13.800" height="13.800" rx="2.400"/><path d="M0.800 7.700H14.600"/></svg>
<svg class="abs" style="left:995.50px;top:52.30px" width="13.0" height="4" viewBox="0 0 13.0 4"><circle cx="1.20" cy="2" r="1.1" fill="#3b3b3b"/><circle cx="5.70" cy="2" r="1.1" fill="#3b3b3b"/><circle cx="10.20" cy="2" r="1.1" fill="#3b3b3b"/></svg>
<div class="abs" style="left:370px;top:74px;width:653.300px;height:736.500px;background:#fff"></div>
<div class="abs" style="left:369.700px;top:74px;width:1.700px;height:736.500px;background:#5d5bb5"></div>
<div class="abs" style="left:370px;top:74px;width:653.300px;height:73px;background:linear-gradient(135deg,#667eea 0%,#764ba2 100%)"></div>
<svg class="abs" style="left:564px;top:95.500px" width="20" height="20" viewBox="0 0 20 20">
<path d="M3 18.300H17" stroke="#d9cfc4" stroke-width="2.200" stroke-linecap="round"/>
<path d="M13.200 7.300a6.200 6.200 0 0 1 .8 9.500H9" fill="none" stroke="#b9bfd0" stroke-width="2"/>
<path d="M8.600 1.300l3.300 1.900-3.700 6.400-3.300-1.900z" fill="#dfe3ee"/>
<path d="M9.700 0.700l2.900 1.700-.8 1.400-2.900-1.700z" fill="#8f96ad"/>
<path d="M3.200 11.800l7.800 2.500" stroke="#5cc6f2" stroke-width="1.800" stroke-linecap="round"/>
</svg>
<span class="t" style="left:592.60px;top:94.00px;line-height:24px;font-size:18.8px;letter-spacing:-0.364px;font-weight:700;color:#fff;text-shadow:1px 1px 2px rgba(0,0,0,.22);">Campaign Comparison Tool</span>
<span class="t" style="left:603.40px;top:123.00px;line-height:11px;font-size:8.6px;letter-spacing:-0.202px;color:#f1eefb;">Analyze and compare electric motor test campaigns</span>
<div class="abs" style="left:389.200px;top:166.800px;width:616.200px;height:214px;background:#f8f9fa;border-radius:8px;box-shadow:0 1px 4px rgba(0,0,0,.10)"></div>
<span class="t" style="left:403.80px;top:182.00px;line-height:11px;font-size:8.7px;letter-spacing:-0.561px;font-weight:700;color:#3a3a3a;">Select Campaign</span>
<div class="abs" style="left:403.800px;top:197.400px;width:586.800px;height:21px;background:#fff;border:1px solid #e2e2e2;border-radius:4px"></div>
<span class="t" style="left:411.60px;top:204.00px;line-height:10px;font-size:7.6px;letter-spacing:-0.254px;color:#111;-webkit-text-stroke:.25px #111;">Campaign_04</span>
<svg class="abs" style="left:983px;top:206.300px" width="5" height="4" viewBox="0 0 5 4"><path d="M0.400 0.600L2.500 2.900L4.600 0.600" fill="none" stroke="#222" stroke-width="0.900"/></svg>
<div class="abs" style="left:403.800px;top:230.800px;width:586.800px;height:51px;background:#e7f1fd;border-left:2px solid #667eea;border-radius:4px"></div>
<span class="t" style="left:414.60px;top:238.00px;line-height:12px;font-size:9.2px;letter-spacing:-0.250px;font-weight:700;color:#667eea;">Campaign Information</span>
<span class="t" style="left:414.60px;top:255.00px;line-height:10px;font-size:7.5px;letter-spacing:-0.098px;font-weight:700;color:#111;">Number of Test Profiles:</span>
<span class="t" style="left:498.80px;top:255.00px;line-height:10px;font-size:7.5px;letter-spacing:-0.133px;color:#111;"> 7</span>
<span class="t" style="left:414.60px;top:266.00px;line-height:10px;font-size:7.5px;letter-spacing:-0.115px;font-weight:700;color:#111;">Available Quantities:</span>
<span class="t" style="left:486.10px;top:266.00px;line-height:10px;font-size:7.5px;letter-spacing:-0.132px;color:#111;"> U_q, Coolant, Stator_winding, U_d, Stator_tooth, Motor_speed, I_d, I_q, Pm, Torque</span>
<span class="t" style="left:403.80px;top:293.00px;line-height:11px;font-size:8.7px;letter-spacing:-0.417px;font-weight:700;color:#3a3a3a;">Plot Type</span>
<div class="abs" style="left:403.800px;top:307.900px;width:120px;height:22.400px;background:#fff;border:1px solid #e2e2e2;border-radius:4px"></div>
<div class="abs" style="left:533.200px;top:307.900px;width:92.400px;height:22.400px;background:#fff;border:1px solid #e2e2e2;border-radius:4px"></div>
<div class="abs" style="left:412.900px;top:315px;width:8.400px;height:8.400px;border:1px solid #7a7a7a;border-radius:50%;background:#fff"></div>
<div class="abs" style="left:542.800px;top:315px;width:8.400px;height:8.400px;border:1px solid #1a6fe8;border-radius:50%;background:#fff"></div>
<div class="abs" style="left:544.700px;top:316.900px;width:4.600px;height:4.600px;border-radius:50%;background:#1a6fe8"></div>
<span class="t" style="left:426.60px;top:314.00px;line-height:11px;font-size:8.3px;letter-spacing:-0.177px;color:#333;">Time Series Comparison</span>
<span class="t" style="left:556.00px;top:314.00px;line-height:11px;font-size:8.3px;letter-spacing:-0.185px;color:#333;">Torque vs Speed</span>
<div class="abs" style="left:403.900px;top:341.500px;width:289.400px;height:24.500px;background:linear-gradient(135deg,#667eea 0%,#764ba2 100%);border-radius:4px;box-shadow:0 3px 7px rgba(102,126,234,.42)"></div>
<span class="t" style="left:513.00px;top:348.00px;line-height:11px;font-size:8.7px;letter-spacing:-0.223px;font-weight:700;color:#fff;">GENERATE PLOT</span>
<div class="abs" style="left:701.200px;top:341.500px;width:289.400px;height:24.500px;background:#6c757d;border-radius:4px"></div>
<span class="t" style="left:811.10px;top:348.00px;line-height:11px;font-size:8.7px;letter-spacing:-0.212px;font-weight:700;color:#fff;">CLEAR RESULTS</span>
<div class="abs" style="left:389.600px;top:395.700px;width:615.400px;height:430px;background:#fff;border-radius:8px;box-shadow:0 0 4px rgba(0,0,0,.07)"></div>
<svg class="abs" style="left:395px;top:400px" width="612" height="412" viewBox="395 400 612 412" fill="none">
<path d="M460.7 421.2V782.9M534.6 421.2V782.9M608.4 421.2V782.9M682.3 421.2V782.9M756.2 421.2V782.9M830.0 421.2V782.9M903.9 421.2V782.9M438.3 469.1H924.6M438.3 535.9H924.6M438.3 602.6H924.6M438.3 669.4H924.6M438.3 736.1H924.6" stroke="#ebebeb" stroke-width="0.800"/>
<clipPath id="axc"><rect x="438.3" y="421.2" width="486.3" height="361.7"/></clipPath>
<g clip-path="url(#axc)" stroke-linejoin="round" stroke-linecap="round">
<path d="M497.2 701l-.1-1.5-1-1.6-2-.7-1.9-.2-1.9-.8-1.9-.4-1.9 .3-2 .9-1.2 1.3-1.5 1-1.6 1.2-1.2 .7-1.5 1.1-2.4 0-1.5-1.3-2.1-.6-1.8 .6-1.2 .9-1.3 1-1.2 .9-.5 1.4 1.1 1.4 2.1-.2 .7-.8-.1-1.8-1-1.5-2.5 0-.7 1.4 1.9 1.3 2.7 .1 1.9 .5 .9 1.2-1.5 1.1-2-.4-1.6-1 1.4-1.1 1.7-.5 1.9-.3 1.2 1.9-1.3 1.2-1.7-.5-.8-1.3 1-.9 1.9-.5 2.1 1.2 1.2 .6-.5 1.9-.8 1.3 .4 1.1-.1 1.6-.2 1.5-.7 1.2-1.6 .8-1.4 .4-2 .6-1.7 1.1 .4 1.1-.2 1 .1 1.1 .5 1.4 .8 1.6 1.1 1 2.2 .5 1.8 .4 2.5-1.2 2.6 .4 1.9-.1 .9 1.3-1.5 1.6-2.2 .5-1.3-1.2-.8-.9-1-1.2-.7-1.3 .6-1 1-1.4-.5-1.4-.8-1-2-.4-1.7 1.1 .6 1.5 2.3-.3 2.4-.9-.1-.8-.6-1.1-2.1-1.2-2.1 .1-2.6 0-1 1.3 .5 1.1 2.2-.2 1.7-.9-.2-1.6-1.8-.7-1.7 0-1.9 .7 .8 1.4 2.1 .8 1.6 .5 1.4 .8 1 1 .2 1.5-.3 1.1-.6 1.3-2.1 0-.4-1-.7-1.6 2-1.1 1.9 .6 .7 1.3-.1 1.5-1.7 .7-2-.9-.8-1.5 .2-1.4 2.3-.9 1.6-.4 .5-1.3 .3-1.7 .9-1.1 .9-1.7 .6-.9 .2-1 .6-1.4 .8-.6 1.7-1.3 1.9 0 1.8 .7 .6 1.7-.6 1.2-1.4 1.4-1.2 .7-1.8 .5-1.5 1-1.4 1.1-.9 1.3 1.8 .3 1.8-.2 1.8-.8 .6-.8-1.1-1.2-2.1 .3-2.1 .6 .1 1.4 .9 .6 .7 1.2 .4 1.8 1.3 1 2.3 .5 1.8-.9 1.8-.9 1.9-1.4-.2-1.7-2-.1-1.7 .2-1.5 1.3-1.7 1.5-1.5 1.5-2.2-.1-2.3-.2-2.2 0-2.3 .2-.9-1.3-.9-1.1-.1-.9-.4-1.5 0-1.7-.2-1.5 .8-1.3 .5-1.1 .3-1 .2-1.5 .9-.9 1.4-1 2-.1 .7 1.5-1.1 1.4-1.8 .3-1.7-.7 .7-1.9 1.8-.8 1.8 .7 .6 1.4-2 1.1-2.4 .2-1.1-1 .3-1.3 .9-.8 2.6 .3-.4 1.4-1.7 .8-1.5-1.3-.4-1.4 1.9-1.2 1.4-.3 1.9 .6 .2 1.4-2 .1-1.6-1.4-.2-1.1 1.6-.5 2.1 .3 2.1 .7 1.1 1 .2 1M495.5 693.8l2.4 .6-1.6-1.3-1.7-.9-1.7-1 0-1.2-1.9-1-1-1-2.1-1.1-1.9 .2-2.3-.7-2.2 .2-1.2 1.2-1.9 0-2.3 .2-1.3 1.7-2 .5-1.6 .6-.4 1.7-.9 1.3 .9 1.4 1.3 .3 2.4-.5-.7-.9-2.1-.6-.9 1.2 .7 .9 2.5 .1 1.7-.3 2.3-.4 1.3-.8 .6-1.6 2.5 0 .5 1.1-1.5 .9-2 0-2-1-2.1-.4-2-.5-2.3 .4-1.8 .4 1.4 .9 1.4 1.1 2 1 1.8 .3 1.5 .8 .8 1.2 .3 2 1.9 1.3 2.2-.5 .2-2.3-.7-1.2-2.2-.2-2.6 1-.5 .7-1.1 1.6-.7 .9 .8 .7 .8 1.4-1.1 1.6-1.7 1-2.2 .1-2.1-.9-.2-1.1-.4-1.5-1.9-.7-1.2-.9-.2-1.7-.6-.8 1-1.2 1-1.7 1.8-.7 2-.2 1.7-.7 2.1 0 2.5-.5 1.4-1.3 2-1.5 1.7-.3 1.1-.9 2.5 .1 1.7-.7 .2-2.2 2-.6 1.6 1 1.4 1.4-1.2 1.5-2.1 .3-.5-1.2 1.6-1.1 2.2 .3 .6 .7-.5 1.6-.1 1.1-1.3 1.5-2.4-.3-2.5-.1-1.2-.9-.5-1-.8-1.4-1.8-.5-1.4-.8-2-.7-2.6-.1-1 .9-1.2 1.2-2.3 .6-.3 1.1-1.2 1.2-.8 1.6-.2 .7-1.2 .9-1.2 1.6-1.3 1.1-.3 .8-.9 1.4 .2 1.6 0 1.2-.3 1.5 1.3 .8 1 1.1-1.7 .8-.7 1.2 .3 1.8 .4 1 1.8 1.1 2.1-.1 2 1.1 1.5 1.3 .9 1.4-.5 1.5-2.2 .8-1.9 .1-1-1 1-1.5 1.1-.7 1.1-1.2 2-1.5 2.3 .1 2-.5 2.7 .4 1.1 1-1.1 1.6-1.9-.2-1.9-.2-2.7 0-2.1-.8-1.9-.4-1.6 1-2.1-.2-1.7-1-.8-1.5 .2-1.2 .1-1.1-.9-1-.7-1.3 .9-.8 2.3-.9 1.6 .4 1 1.3-.8 1.8-1.1 .8 1.6 .8 .9 1.5 1.3 1.2 .4 1.4-1.1 1.1-.9 1.5 1.2 1.1 1.7-.1 2.4 0 2.5-.5 .2-.7-.6-1.1-1-1.7 .3-1 1.6-1.1 2.3-.1 1.6 .6-.5 1.7-2.2-.2-1.8-.9 1-1.2 1.8-.2 2 .8-1.5 1.4-2.3 .7-2.3-.3-1.7-.8 0-1.2 .4-1.3 1.2-1 .9-1.5 .7-1.5 1-1 1.6-.9 2.3 .1 2.6-.1 2.5 .2 1.1 1.4-1.3 1.3-1.8 0-1.3 .6-1.5 1.6 .5 1.7 2.2 .8M468.3 739.4l-1.7 .8-1.4 1.3-1 1.4-.1 1-.8 1.1-.7 1.1-.9 1.2 2.2 .5 1.9 .9 .7 1.1-.8 1.2-.6 1.3-1.7 1.1-.3-1.4 .7-1.2 1-.4 .9-.8 3.2 .3 1.9 .2-.1 .9-2.1 .9-1.9-.3-.3-1.6 1.6-.7 2.3 .1 2.2 .3 2.1 .6 1.8-.1 2.6-.1 2.2-.6 1.8-1.1 1.9-1 2.1-.2 2-.2 1.6-.9 .8-.9 .1-1-.9-1.3-2.1-.3-1.5 .2 .3 1.2 1.8 .7 1.9 .5 2.4-.4 2 .1 1.6-.7 1.7-1.3 1.1-1.1-1.5-1.3-1.2-.9-.6-1.4 .7-1.2-.6-1.3-1.9-.4-2.3 .4 .3 1.3 2.6 .4 .8-.7-1.7-1.1-1.9-.2-1.3 .6-.3 1.2 1.8 1.3 1.2 .8 1.8 .7 1.3 1.2 1.4 1.2-.3 1.6-.6 1-.3 1.5 .5 1.9-.3 1-1 1.3-1 .6-1.7 .4-2.1 0-2.2 .8-1.3 .9-2.5 1-2.2 .5-2.6-1.1-.8-1.1-.7-1.1-.7-1.4-1.8-.3-1.3-1.2-.3-.9 .2-1.6-.7-.9-2.3-.7-1.4-.9-2.4-.9-1.4-.9 .6-1.5 2.1-.9 1.3 1.3-1.3 1.4-1.9 .5-2.4-.4-1.9-.3-.2-1.7 .9-1.2 2.3-.4 1.2-.9 0-1.3 .3-1.1 .9-1.2 2.1-.3 1.7 1 1 1.1 1.6 1 2 .5 1.5-.1 2.3-.9 1.4-1 .7-1.3 1.6-1.2 1.3-1.2-.6-1.9-1.3-.7-1.9-.5-1.9-.4-1.9 0-2.8-.3-2 .4-1.8-.5-1.3 .7-1.3 .9-.3 1.3-1.5 1.2 .1 1.2-1.1 1.6-.9 .8-.7 1.3 0 1 .9 1.4 1.3 1.3 1.3 1.5 1.9 .3 1.5 .4 2.2 .9 2.7-.2 2.1-.2 2-.9 1.6-.8 .7-1.4 .9-1.4 1.4-.8 2.3-.5 1.5 1-.9 1.3-.5 1.2 .4 1.2-.1 1.7-1.2 1-2.3 .7-2.3-.9-1.3-1.4-.5-1.7-.2-1-1.1-1.1-1.4-.7-2-1.4-2.4 0-1.5-.9-.4-.8 .9-.9 2-.7 1.4-.6 2.2-.7 1.4-1.3-.3-1.3-2.3-.4-1.8 .2-.5 1.5 1.5 .9 2.4 .3 1.5-1.6-.1-.8 .1-1.4-.3-1.1-.3-1.9 .2-.7-.4-1.2 1.7 0 2.1-.7 1.8-.3 1.6 .3 1.5 .8 1 1.1 .5 1.3-.5 1.3 0 1.3 1.4 1.5 2 .6 2-.7 1.5-1.2 2.2 0 1.3 .7 1.3 .6 .8 .8-.8 1.7-.6 1.8-1 1.6-1 1.3-1.8 .7-1.4 1.3-1.8 0-1.7 .8-1.2 1.9 0 .8 1.3 1.1 .5 1.2-1.5 1-2.5 .4-1.6-.8-.3-1 1.5-.9 1.9-.1 2.1 .2M474.4 755.7l-2-.4-1.5-1.1-1.5-.6-1.9-1-1.7-.9-2.3 .5 0 1.2 1.8 .9 1.9-.3-.5-1.5-1.6-1.5-2.1 0-1.3 .7-1.6 .7 .8 1.9 .8 1.3 2.2 1 1.8 1.2 1.8 .1 1 .7 1.5 .8 1.9 .7 1.5 1.4 1.3 1 1.3 1.3 .4 1.5 1.2 1.1 .3 .9 1.7 1.2-1.9-.3-2.5-.4-1.9 0-1.4-.5-2.1-.8-.9-.5 .3-1.3 1.2-1 .4-2.3 0-1 1.6-1.6 2.5-.3 1.8-.1 2.2 .8-.2 1.5-2 .1-1.7-.8 .9-1.5 1.5-.8 2.5 .4 1.3 .1 2.5 1.2 1.7-.1 2.1 .2 2.3-.5 2.1-.1 2.3 .1-.3 1.7-2.2 .5-1.6-1 .6-1 .4-.8 .6-1.8 .4-1.3-.3-1.5-1.2-1.4 .4-1 0-.7-1.7-.8-1.3-.8-2.8 .3-1.7 .8 .5 1.1 .6 1.1 .8 .7 2.8 0 2 .2 2.2-.8 2.3-1.1 .7-1.2 0-.8-.7-1 .4-1.4 .6-1.9-1.1-.8-2.2 .3-.3 .9 2 1.3 2.4-.9 1.2-.7 .1-1.7-1.4-.8-2.5 .2-.4 1.1 2 1.7 1.8-.4 .3-1.6 1.4-1.4-.7-.8 .6-1.5-.1-1.9 1.2-.8-.9-1.1-1.4-1.2-2.5-.6-1.6-.5-1.8 .8-1.2 .9-2 1.4-2.2 .4-2.6-.2-1.5-.6-1.8-1.2-1-1.4-.5-.5-1.3-1.8-.8-1-1-.7-2.1-.6-2.5-.3-2.1 .8 .4 1.3 .8 1.1 .4 1.5-.1 1.7-.2 1.1-.1 .9 .5 1.8 1.7 .2 1.8 0 .8-1.5-.4-.8-.1-1.3 1.3-2 .9-1.2 .1-1.3-1.4-1-2.2-1.1-1.9 .9-.7 1.7 2.2 .7 2 .1 2.3-.9 2.2 .1 1.4 .8-.4 1.3-.2 1.3-1.8 .6-1.5 1.3 1.3 1.6 2-.5 .9-1.1-.4-1.4-.2-1.8 .6-1.2 .6-1.4-.6-.9-1.2-1.3-.6-.5 .1-1.5 2.1-1 1.1 1.8-1.3 1-1.4 .3-2.2 .4-2.3 .4-1.9-1.3-1.7-.6-2.1-.1-1.4 1.1 1 1.5 2.1-.1 1.4-.7 .4-1.3-1-1 1.1-1.2 1.7-.1 2-1.1-.1-.9-1.8 0-1.2 .8-.7 .8-1.1 1.4 1.9 1.2 1.4 .4 1.1 1.6 2.3 .1 2 .2 1.1-.7-.9-1.1-2.3 .3-1.8 1.1-1.8 .9-2.2-.1-.7-1.2 .1-1.1 .4-.6 .4-2 2.4 .2 1.6-.1 2.5 0 2.1 .5 1.9-.5 2.1 .2 2 1.6 .9 1.1-1.3 1.3-2.3-.3-1.7-1.1 .5-1.4 2-.6 2-.8 1.2-1.1 .5-1.5 1.9-.6 1.8 1 1.2 1.5 1.2 1 .5 1.5 .1 1.1 0 1.4M542.8 644.1l-2.6 1-2.6-.2-3.1-1-1.9 .5-1.4 2.6-.9 .6-1.2-1.6-2.7 4-1.7-.1-1.4 1.7-1.7 4.1 .8 .1 .9-1.4 4.7 2 3 .8-1.5-.3 2.8 .4 3.5-2.5 2.3-.2-.1-.1 2-1.8 .2-2.3-1.8-.1-1.6-2.8-2.4-1.8-3-.3 1.4-.4-3.5 .1-3.2 1-2 0-3.3-.9-3.6-1.6-2.5 .5-.7 .6-2.2-1.1-3.9-2.6-2.5-1.1-1.4-.7-.2-1.1 3-1.4-.2-.6 2.3-1.3 3.4-.5 3.9-2.4 1.6-.6 1.5-.3 3-1.3 1.9-.7 2-.5 1.6 2.6 2.8 1-.1 1.5-1.4 2.2 3.4 2 .5 1.6-.8-1 .2 1 2.3 1.8 2.9 .9 1.9-.4 .8 .2 3.1-.3 2.5-1 .3-1.8-.9-1.4-3.9 .6-.3 1.1 0 1.1-.1 3.1 3.7 .2 1.4-.9 1.5 1.6 1.8 1.1 1.5 .6 4.8 0 1.5 .1 3.4 2.1-1.2 .9 1.6 2 1.8 1.3-2.2 2-.8 4.1 2.4 2 1.7-.9-.4 .7 1.5 2.7 1 1.5-2.5 1.4 3-1.1 2.6 .6 1.8 3.2 1 2.5 2.5 .2 1.8-2.5 2.7 1 4.7 .9 1.8 0 1.3 1 2 1.5 3.3-4.3 2.6-2.7 .7 .6 .9-.3 1.1-2.3 2.8-2.4-.5-1.5 .1-1.1-1.1-2 .7-.7-2.7-1-2.1-1.6-2.9 .4-1.3-1.9-2.3-.1-1.2-.8-1.5-.3-1.8-1.8-1.6-1.9 .5-3.3 .1-1.2 3.8-.8 .7-.6 3.3 1.2 2-.5 1.9 .8 2.9 3-1.3 2.5 .6 0 2.1 .8-1.1 1.5-1.2 1.2-2.8 1.5-1.3 .8-2.1 1.4-3.7 .5-2.2 .2-.4 2-1.6 .7-1.2 .1-2.3 2.4-2.4 .9-.7 .1-.8 2.2-1.2 .9-1.7 2.2-.2 1.1 1.3 2.7-.8 .5 .8 1.2 2.5-.9 2 .7 2.5-1.8-.1-.1 .2-1.7-1.5-1.1-.3-.3-3.2-4.2-2.8-.4-2.7 2-1 1.3-3 1.4-2.4 1.7-.4 2.9-2.5-2.4 .5 2.6-3 .6-.2 3.1 1.2 1.3 1.4-1.4 .1 2.7 3.1-.8 2.5 1.3 5.3-.7 1.7-1.7 .3 .3M598.3 683.3l1.4 2-.2-.8-1.1 1.7-2.2 2.1-3.6 2.3-.1-.3-2.4 2.2-2 .8-1.3 .4-2.4 .8-2.9-.1-2.4 1.1-3.5 1.7-.6-.8-3.5-.9-2-1.6-2.2 .6-1.6 .5-2.4 1.9-2.2 .1-2.7-.8-2.6 .9-.5 2-.5 1.7-2.1 1.3-3.8-.5-3.7 0-1.5 1.9-4.9-2.8-.5 1.8-.7-3-2.6 .7-1.8-3.9-1-1.2-1 .9-3.5-.8-3.3 1-2.5 1.5-4.1-.7 .8-1.5-.9-.9-.8 .4-.8-2.1-.6-3.1 0 .8 2.9-1.7 1.9-1.9 1.1 .5 2.2 .9 1.4 .1 2.4 1.3-.2 2.7-.6 1.9 1 1.5-1.1 1.9-.7 2.1 2.3 1.2-1-.4 2.4 3 1.2-.8 1.8 .2 2.8-2.9 3.9 1 3.1 .3 4.4-.7-.6-3 .2 .1-.2 .1-3.1-2.2-3.3-.9-2.3 .6 .5 2.7-.3 1.3 3.4 1 2.6 .2 3.8-2.8 .5-1.3-.3-1.5-1.8-2.8 0-.9-.1-.8-1.5 .1 1.5-.6 2.4-2.5 .8-1.9 1.5-.7 .2-.7 .3-2.8 .9-2 .6-3.5-.5 .1-.9-.6 .8-2.3-1.1-1-.6 1.1-3.5-1-1.3-.7-3.2-2.8-.3-1.5-3-.7-.7-2.2 1.4-1.9 1.9-1 2.3 1.3 1.4-2.2 3.3-2.3 1.1 1.7 .1 .2-1.9 3.2-.4 .5-.6 1.2-1.1-1.4-3.6-1-3.4-.6-.3-1-4.3 .1 .6-1-4 .7-4.3-.2-2 1.7-1.6 .8 .1 2.2-1.7-.6-2.4 .4-2.3 .3-3.3 2-.3 1.8-.1 .8 .1 2-.4 3.5-1.1-.7-.9 2.2-2.9 1-2.5 0-2.8-1.8-2.9-.9-2.3 2-.9-1.1 0-2.7 .9 1.1 2.4-.2 3.6-.9 2.4-.3 2.7 .3 2.7 .5 2.8-1.1 3.2-2.4 .5 2 3-.3 3.6 1.6 2.4 .5 1.3-.6 4.1-1.3 2.3-.2 2.5 1 1.7-1.3 3.5 .9 2.2-.8 2-.1 2.7 .1 3-.7 1.2-.6 2.5-1.3 .3-2.9 .6-2.3-2.2-2-.9 1.7-.8-.1-1.5-.8-3-.6-4.3 .4-1.8 1.4-3.1-1.8-3.6 1.3-3 .7M574 689.2l-2.3 1.4-2.8-1.4-3-.2-2.7 .2-4.7-.4-1.4 1.6-.3 1.1-1.2 2.6-2.1 .9-.7 .6 1.1 2.8-1.2 .2-.2 2.1-1.1 1.8-2.3-1.1-1.9-1.2-2.5-.9-.3-3.2-1.8 .9-.2-3-.5-.9 2.8-.9 .6-1.6-.4-3.2 .2-.9 .7-.5-.1-1.6 .8-2.7 1.2-1.2 1.3-.1 2.5-.9 .7-3 2.6-.9 .7 .2 1.7 .1 3.7-2.2 2.6-.1 1.4-2 1.1-2 3 .2 1.8 .8 3.2-1.2 1.3 .3 5.4-.1 .6-2.7 1.3 0 3.8 .5 .7 .6 2.2 .1 2.6 .4 2.4 1.5 2.7 1.9 0 1.6-.4 1.1 .1 2.1-.9 4.5-2.5-.8-.4 1.8-.9-.8 .7 2-4 1.5 2.1 1.7 .9 3.6 1.9 2-1.8 1.4-1.4 1.6-3.4 .4-3.3-2.4-.3 2.8-2.7 .3-2.1-1.5-2.9 2.8-2.1 .5 .4 1.5-3-.3-5.3-.9-2.7 .5-1.8-.1-2.5 .6 0 3.5 1.4-.6 3.9-2.6 1.1-.8 2.4-1.7 1.5-2.5 1.3-1.1 1.2 1.1 1.9 1.8 2-1.4 2.7-.7 2.6 .8 1.9-.9 2.6-1.6 4.6 .3 3.9-.3 1.1 .3 3-.5-.6-2.1-.2-1.7-.6-3-1.4-1.1 .5-2.8-.6-2.8-2 1.1-.4-.6-3.1-.3-2.7 .5-.6 1.8-.1 0-3.8-.1-1.7 1.9-1.3 .1-3.1 1.2-.6 .1-3.8-.4-.1 .7 .2-1.1 .9-1.7 .2-1.3-1.4-1.2 1.8-.4 1.3-1.2 2.9-2.1 1.4-2.1 1-.9 3.3-.5-.2-2.1 2.7-.8-.2-1.7 2.7-1.4 3.7-2.1 .2 .9 2.2-1.5 4.1-.7-.6-2.2-1.8-.1-1.9-.4-.7-2.1-1.6-2.3-1.3 .1-3 2.3-1.9 2.2-.4 1.9-.1 1.6 2.1 .5-.3 .8 2.1-.3 3.6 1.1 2.5-3.6-.5-.5 3.4-1.6 2.1-2.3-2.9 .9-2.7-1.3-1.9-1.1-3.3-3.2-.3-1 .4 .9-1.1-1.8 .4-2.9 1.1-1.5 1.3-1.7 1.6-1.7 2.7-.2 2-1.6 .7 .1-.3-1.4 .5 .2-2.5-2.5-1.9-.1-1.1-1.1-2.6-2.3-1.8 .9-2.5 .2-1.6-.4M547.8 622.8l-2.4-.2-.8-1.5-2.4-1.9 3.1-1.4-.1-1.2 4 3 1.9 1.3 2.6 2.5 2.7-2.1 .5 .2 3.8 .2 3.5-.6 2.2-.7 1.7-1.1 2.1 .9 1.7 1 2.9 .7 1.1 1.1 .7 .9 .3 .7 .6 1.1-.3 1.8-1.8-.6-1.1 1-.9 1.9-.5 3.1-1.7 1.7-1.4 2.6-.2 1.1-1.1 .6-.9 .6-2.3 .6-5.3 1-2.7-3.9-1.4 .6-1.3-.4 .6-1.7-.7-.8 1-2.4 0-1.1 1.2-.2 1.2-1.6 .7-2.6 .9-3.6 .6-.7 0-1.1-2.4-.7-.5-1.2-3.4-1.1-1.9 .4-2.4-.4-3.2-1.9-1.7 1.7-1.5 1.8-2.2-.7-.1 2.3-.7 2.7 .5 1 1.9 .7 2.4 1.4 1.1-1.4 4.4 .3 2-.1 2.3 .3 2.3-.1 3.5 .4 2.5 1.6 3.2-.8 1.6 .8 3.1 0 2.2-.1 2-.5 4-1.3 2.6-.6 2.9-1.2 1-.9 1.6 .8 2.6-1.4-.2-1 2-2.5 3.4-.1 2.3 1.4 1.2-2.5-2.9-.9-1.1 .2-1.7 .7-4.5-1.3-1.1 .6-2.7 1.3-1.7-.5-.7 2.7-.7 2.3-.8 1.6 .1 1.7 1.9 1.9 .2 1.6-.2 .4 .5 1.9 .9 .9 1.5 .7 1.3 3.5-1.3 2.3-.2 .7 1-.3 1.9 2 .2 1.6 .1 1.3-.3 2.5 .6 .5 .6 .4 1.6 4.4-1.8 1.9-2 .9-.8 .4 .9 2.3 .2 1.6-1.6 3.1 .8 .5 3.7 .8 3.8-.1 .5-2.1 1.4-.3 2.7-1.5-.1 .1-.5-3 1.9-1.8-2.3-.6-.4-3.3-2.9-2-.9-.5 .3-.3-3.1-.8-2 .4-3.8-2.3-.6 1-1.7-1.2-1.1-1.7-2.9-1.6-4.2-2.2-2.7 2.4-.2 0-2.7-1-.9 3.8 1.8 1.1 2.7-.8 2.1-.1-1.4-3.3 .3 1.1-3.7-.6-2.1 .3 0 1.2 .5 2.1 .9-.1 2.4-1 2.4-1.9-.5-1.7-1.2-.5-.7-.5-2.9-2.8-.7-1.3 .2-2.2-1.5-2.4-3-.3-3.1-.8-3.5 1.7-3.3-1.4-2.7 .5-1.7 .3-1.7 1.2-2.4 .8-1.9 .3-2.7-.8-3.5-1.5-1.4-.7-.3 1.6M506.1 666.3l-2.2 2-2.4 .2-2.5-.9-2.5-2.1-.2-1.6 3.8-.1 .8-.3 1.9-1.6 4.4-.6 2.1-.6 .9 .7 2.3-2.9 1.2-1.5 2.5-1.1 2.9 1.6 3 .7-1.2 2.9 .6 2.9-1.5 .3-2.3 1.4-.2-1.3-3.5 1.6-2.5-2.7-3-.1 .1-3.1-1.3-1.4 .2-1.4-3.9-1.3-1-2.5-1.5-.5-.9-1.4-2-1.6 .5-1.9 4.2 1.1 2.5-2.9-1.4-1-.7-1-1.2-1.1-2.1-2.9-2 1.5 .4 2 .7 .9 .4 1.9 .9 1.1 .9 1 .9 .8 2.3 3.2 .8 1.7 1.4 1.1-.2 1.4 .4 1.9-.2 1.7-1.8 1.5-.8 1.5-1.8 1.6-1.8-.9-3.6-.5 2.7 .7 1.2 .3 1.3 3.3 3.9 2.4 2.5 0 .8 .4-.2-.4 1.5 .5 3 .1 4-2.3 3.1 0 4.3-1.1 2.2 1.6-.1-.8 2.1 0 1.4-1.9 4-2.6 1.3-.6 2.4 .7 3.5-.1 3 1.7 2-.5 1.6 .6 .6-2.7-2-1.9-3.2-3.5-1.8-2.3-1 0 .4 1.3-3.6 2-3.2 .4-2.8-1.4-2.2-.8 .2 1.1-.9 2.3 1.1 .1-1.2 3.4 0-.4 2.3 1.5 1.6 1 1.4 1 1.2 1.1 1.9 2.4-.5 2.5 2.2 .5 2.8 .4 1.9 2.9 3.4-2.5 2.1-2.2-.9-.5-.1-.9-2.9 0-3.8-2.5-3.1 2.7-2.3 .9-1.5-1.6-.3 .1-1.5-2.7-2.4-1.3-.2-.6 .7-2.8 1.2-2.4 2.7 0 1.7-1.9 .9 1.1 2.2-.2 2.1 .6 .5-.5 1.2-2.6 2.3-1.4 1.5-1.3 3.7-3.3-.4-.7 1.3-1.7 1.9 1 1.1 0 .9-5.2-1.1 .2 1.4-1.5 2.8-1.9 .8-.6 3.9-.9 1.4 .2 1.5 0 4.7-.7 3.6-1.3 .2 0 2.4-1.7-.2-3.4-1.7-.9-.2-.1-1.7-.8-1.5-4.1-1.5-1.1-1.3-1.7-.4 .5-1.3-1.4-1.8-3.1-1-1.7-1.9 .3-3-1.8-.2 1.9-2.1 1.5-2.4 .7-2.1 1.4-1.4 0-.7 .9-4.7-1.1-1.6-1.3 3.3-1.5 1.5-1.5 2-.5 3.7 1.3 .7 2.5-1.6 2.4-1 1.3-1.7 .3-2.2 1.6M588.1 675.5l1.8-.4 2.9-.9 3.7 .1 2 1.8 2.4 2.4-1.2 .5-2.7 .1-1.3 .1-2.6 1-2.2 .7-2.6 2.1-2.3 3-.5 1.2-1.4 1.8-2.4 1.1-3.4 .3-.6 1.5-1.2 .6-.3-2.1-3.4 2.8-3.5 1-2.2-1.3-2.5-.3-.8 .5-5-.7-1.7 1.1-3.4 2.6-1.6-.3-2.5 1.2-2.7 1.3-3.3-.1-.9-2.2-2-1.9-1.8-1.1 0-1.6 2.1-.2 2.7-.6 4-.3 4.6-2.3 3.2-.5 2.4-.4 2.2 1 1.7-.5 .5-1.2 2.4-.9 1.7-.2 2.1-1.9 .6-.6 2-2.2-.1-.5 .8-1.7 2.7-.9-.1-3.8 2.5 .8 3.4-2.3 3.9 3.8 .6-1.4 2.1-1.1 3 .7 2.1 .5 3.3 2.4 1.4 .8 1.1 1.7 1.1 .8-.7 2.1 .8-.2 0 2.8-3 1-3.7 0-.7-.5-3.5-.8-1.2-.5-2-1.2-2.7-2.7-2.9 .6-1.6 .4-1.3-.1-3.2-1.9-4.1-.6-.2-2.4-2.3-.3-1.4-.5 0-2.2 .6-1 .5-2 .6-.7 1-2.3-.8-1.2-.3-1 3.4-1.6 .3-.4 2-.9 2.7-2.7 1.2-2.2-.4-.3 .1-3 .5 0-2.1-.9-2.2-2.3 1.3-1.4 .6-1.3-1-1.6-.3-.8 2-1.8 3.5-2.3 1-.5 1.9-1.3 0-2.8-1.8 .7 .7-2.8-1.4-.9-.6-.4-1-.7-2.2-.5-2.7-.8-2.9-.8-3.9 .2 2.1 2-2 1.4 2.4 1.1 3 1.3 1.9 1-.8 2.4 .6 .4 1.8 1.7-.7 .2-1.8 .8-4.8 0-2 1 .2 1.1-2.4-.3-1.8-1-2.5 1.4-2 1.1-3.2-2.6-2.3 1.9-1.4-.6-.1 .7 .3 2.2 1.9 2.2 1.4 .7 .5-.6 4.6 1.9 1.3 .3 2.4 1.9 2.7-.3 2.7 2.3-.9 .8-2 .6-3 1-1.3 2.6-3.8 .5-.4-2.3-.6-3.1 2.1-.4 1-.5 2.6-.7 1.8 .9-1.1 1.5-1.4 2.4-3.7-.3-2.2 1.4-2-1.2-2.4 .1-2.2-1-2.2 .4-1.4-.8-1.3-1.3-3.5-.3-2.9 .3-2.4 .9-2.9 .9-1.1 1.2-2.7-.3-2.4 1.1M530.2 632.7l.2-2.1 1.9-2 2.3-2.5 1 0 1.5-1.2 1.2 .1 .8 1 2.8-1.1 2.4 1.4-.3 4.2-1 .8-3.3 1.8-3.1-1.1-1.7-2.6 1.5-.9 2.2 0 .4-1.6 2.7-4 .9-.9 .6 .5 .6-1.8-.9-2.6-2.4-.2-2.5 2.7-.8 1-1.7-.7 1 2.1-.8 2.7 1.6 .4 2.7 .9 2.5 2.4 2.5 .6 1.2-2.7 3-2 .6 .1 1.9-3.2 2.4 .4 3.2-1.7 3.9-1.3 1.8 1.3 2.2 .9 .5 4.3 .8 .8 1.4-.9 3.2 .7 2.6-1.2 2.7-.5 1.1-.4 2.9-1.4 2.9-2.8 .7 .5 1.2-1.3 2.6 .6 3.5 .4 .7-2 3.2 .3 4-.9-.5 1.8 .1 2.1 1.6 0-.1 2.5-.9 1-1.8 1.8-.6 1-3.3 .9-2 .8-2.5-.4-1 1.7-2.6 .7-2-.9-.1 2.3-1.7 2.6-2.1 .7 2.5 2.8 .7 3.4-1.1 .2 2.5-.4 .7 1 .8 2.8 1.9 3.5 0 .2 3.3-1.9 2 .3 .7-.9-1.7-3.5-.6-1.4-2.4-.6-2.5 1-4-1.4-1.9-.7-4.2 1.5-1-.1 .5 .9 1.4 1.7 3.8 1 3.1 .6 1.6 0 1-1.1 0-2.1-1.6 .7-4.1-1.9-2.1 .7-.5 1.9-1.2 2.2 1.8 1.7 .7-.3 5.1 0 2.1 .4 2.1 .5 .4-2.9-2.9-2.7-1.1 .2-1 .1-2.2 1.3 .5 1.7 2.7 2.5 .2-1.5 3.4 1.8 2.4 .5 3.1-1.7 1.1-3 .8-1.3 .1-1.7-1.8-1.8 .1-2 .1 .1-1.1-.1-1.6-2.4-3.5-.8-2.9-.1-1.6-.3-4.7-1.1-2.5 1.4-2.1 1-.1-2.8-2.8-1.3-.9-2.2-3.2-2.9 .2 .6-1.3-1.5-.3-2.1-3.8-2.5-1.9-.4-1-1.4-1-.7-.1-1.2-1.6-2-4.6-.1-3.2 1.5-3 .2-2.1 1-1.3 1.9-.8 0-.2 .9-1 2.8-1.6 1.2 .9 .8 2.4 2.8 1.3 .2 1.1 1.5 .5-.3 1-1.2 3.2 .9 3.6-3 .5-.9-2-1.6-2.1 1.4-4.4 1.9-1.1 1.6-1.1-.6 2.7 .1 1.6 1.1 2.4-.1 2 .8 2.1-1.1M579.6 689.9l-1.4 1.7-3.2-1-2.2 1.6-2.7 1.4-3.3 1.2-2 3.1-.7 .6-1.3 1.4-1.6-.7-.3 1-1.2 3.4 2.7 .7 1.9-.3 3.2-1.2 2.5-1.7 3.1-.5-.1-.8 .4-2 2.2-2.8-.9-2.8 .3-1.3-1.2-2-2.1 .4 .1-1.7 1.9-2.7 1.2-1.4 3.3-2.7 .1 0-.9-1.8 3.5 .8 4.4-.8 3-.6 3.5 1 1.4 1.3 .3-2.8 3.8-.6 1.5-2 1.4-2.5-1.2 .1 0-.5 .3-1.5-.4-1.3-.2-2.8 0-1.7 1-.9 .7-1.5-1-1.3-.7-2.4 .3-2.2-.7-1.1 1.1-1.2-1.2-1.4-.4-.9-.9-1.5-.7-1.3-.4-3.6 1 .8-.8-1.8-3.4-.8-3-1.9-3-1.2-.7-1.5-1.9 .1-2.2-1.8-.8-1.7-1.7 .1 .5-1-1.1-4.6 .7-1.9 .7-2.6 1.2-.6 .9-.3 .4 .2 3.6-1.8 3.4 .3 2.8-2.1 .3-1-1.5-1.5-4.4 .4-2.1-1.3-1.9-.8-1.5 .7-2.7-.2-3.7-.3-3.7-.8-.8 .3-3.5 2.4-1.1 2-1.5 .9 .2 1.3-.2 .7 .7 2.1 1 1 4.2 .1 2.1-.6 2.9-2.2-.1-.6-.6-1.5-2.8 .3-1.4 .4-3.2 .4-1.7 2.5 4.8-.3 2.6-.1 .4-2.9 .3 1-1.2-3-1.9-1.3-3.1 .3-2.5-.9 0-.6-1.8 1.7-2.8 1.7-3.9 3.2-.3-1-.9 0-2 2-.4 1.8-2.3 1.3 .7 1.9 .7 2.1 1.9 1.8 4.8 .8 1.8-.1 2.8 .8 2.2 .3 1.5 1.1-.2 1.6 0 .8-.2 2.2-.8 2.3-.4 1.3-2.1-.7-3.9-.6-.8 .5-3.6-.4-1.2-1.4-3.4-.8-4.2-1.2-2 .1-3 2.2-1.8-.3-1.7-.3-2.5 .5-2.4 1.2-2.7-.9-2.9 2.4 0 2 .6 2.2-.8 2.4-.2 .9 1.5 2.9 1.3 .1 .6 2.2-.1 1.4-2 1.7-3.4-1.2-1.9 1.1-2.3-.1-.8 0-3.4-2.5-1.8-2.5-3.1 .1 0-2.3-1.4-1.9-2.9-.6-3.1-.4-2.3-1-.6-1.4-.5-4.3-1 .1 .8-1.8 1.7-1.3M537.3 684.8l-.6 2.1-.8 1.6-2.3 .5-2.4 1.5-2.4-.9-.9 .7-3.5 .3-2.4 .9-3.3-2.1-1.5-.8-5-.4-1.2-1.5-2.7-.1-2.2-.7 .7 .2-.4-.3-2.6-3.8-2.8-2.2-1.5-2 1 .2 1.3-.9 .9-1.4 0-4 .4-1-2.3-2.3 .6 1.3-1.2-2.1 1.2-.1-.5-2.7-1.5 .1 1.2-1.3 3.4-2.4-1.1-2 .9-2.1 2.7-.8-2.8-2.6 1.1 .6-1.7-3.2-1.2-3.6 .9 0-1.4-2.4-.8-2 .3 0-2.2-1.2 2.1-2.5 .7-.2 1.9-.4 1.1-1.2 3.5 1.3 2.8 1.3 1.1 1.6 2.9 1.2 2.7 .8 1 .1 2.4-.8 2.6 1.5 3.7 .3 .9 .9 2.4 .3 3.8 1.5 1.7-3.3 1-.9 1.4-.8 .2-1.4 1-1.6-1-1.3 4.1-1.8-1.2 0 1.1-1.1 2.7-1.9 2.3-1 3.5 .3 1 1.6 1.4 1 1.8 .9-.7 2.9-1 2.8-4 1.5-2.8 .2 .7 0-1.7-.6-3.1-2.6-1-1.2-4.9 1.1-4.2 0-.9-1.5-2.9-.8-1.1 1.4-1.5 2.4-3.3-.1-1.6 2-1.1-.8-1.2 0-2.5 1.7-1.9-.6-1.8 1-3.5 1.6-2.5-.1-2.8-.5-2.9-.2-2.8-.4-1.5 2.9 .5 1.2 2.3-.3 2-.1 2.2 0 4.3 .7 1.4 2 2.4-2.4 1.7-.5 .2-.8 .8-1.3 .9-.7-2.3-2.6-3.4-.9-3.1-1.2-2.7 1.5-1.1 1.1 .5 3.1-.3 .3-1.2 2.3 .3 1.7 4.2 .8 .6-.3 4.3 .7 2-1.9-.1 .1 3.4-2-.2-2-4-.9-.9-1.7-1 1.6-1.6 .7 1.8 2.5 1.3 0 3.2-2.4 .1-1.2 .4-.2-1.7-1.2-1.4 .3-3.8-.4-3.3 .8-.5 .9-.2 3.1 2 .7 2.1 1.2 2.9 .4 .5-1.9 3.9-1.6 3.2-2.6 1.4-.9 1.5-.7 .2 0 .1-1-.8-1.3-1.9-4-2.4-.6-2-.7-1.6-1.1-2.8-.4-1.1-1.4 2.4-1.5 4-.6 .4-.1 3.3-.9 1.3-.5 1.9 1.7 .3 2.5 .8 1 1.4 2.8 .5 .5 3.4 1.3 1 1.1 4.4 .5 2.3-1.2M555 684.9l-1 1.3-1.4 2-.1 .6-1.3 4-1.4-.2-2.5 .9 1.8 1.7-2.3-.7-1 2.7-2.1 2.4-1.1-.3 .7 2.1-2.3 .2-1.7-.2-2-.8-.4-2.1-2.5-2 1.2-1.1 1.1-2 .2 0 3.2-.8 2.9-.4 1.9 .1 4.5 2.2 .5 .5-1 3.8-2.1 .8-2.9-1.4-3.1-2-1.8-1.3-.4-1.7 2.4-.4 1.7-1.9-1.6-1.8-.1-.3-.5 .2-.7-3.5-2.2-.4-1.8 .3-1.9-.5-2-.2-2.7 1.5-.8 2.8-2.1 0 .5 2.3 1.7 1.6 2.8 2.4 1.9-1.3 2.8-.8 1.6 .6 2.3-2.2-.7-1.2-1.9-1.8-2.5 1.3-1.3 .8 1.8 1.2 .7 1.7 1.7 .8 1.8-1.2 2.3-.5 1 .3-2.3-3.9-2.3-1.1-2.4 .2 0 2.2-3.8-.1-2.7 .8 .3 2.2-.7 .7-1.1 .8 1.3 3.9-.1 1 .7 1.5 1.6 .2 3 .4 1.3-2.2 3 .6 2-1.3 2.7-.2 1.8-1.3 1.6-2.2 2.8-1.7 2.1-.5 1.9-.5-1.2-2.5-.5-1.7-1.1-.7-1.2-1.1 1.2-1 .3-1.2 .2-3.6-1.4 0-2-1.8-1.1-1.9-1.2-1.2-1.5-.5 .3-3.9 .5-1.5 1.9 .8-.7-1.2-.6-.8-.7-1.6-.4 .9-2.1-2.5-3.1-1.6-1.5-1.2-3.4-2.3-1.5-1-1.5-2.6-.6-.3 1.3-2.6 1.3-1.3 2-1 2.9-1.3 2.2-.2 1.1 .5-.5 1.7-.6 2.1-.1-.5-1.1 3.1-2.2 1.9-.7 2-3 .9-.8 .6-.4 2.4-3 2-1.1-.2-4.9-2.1-2.3 .7-.7-1.2 .5 .4 1.5-1 2.9-2.5 1.5-.5 2-1.8 1.9-1.2 1.3-2.1-1.2-2.2-1-1.7-4.3 .6-1.6-.5-3.1 3.6-1.3-.7-2 .9 1.2 2.1 3 .4 4.1-1.7 1.9-1.8-.8-1.8-2.4 1.5-2.5 .4-2.8 .4-1.3 2.5-.1 .2 .4 1.7 3.2 1 .3 1.3 1.4 2.1 1-.3 3.4-.2 4.2 .2 2.3 1.5 2-1.3 2.1-.9-1.6-2.5-3.2-1-3.9 3-1.5-1.6 1.9 3.9 1.9 2.3 2.5 1.6 1.9 .1 3.7 2.4 2.2 .2M561.6 719.8l-3.8 1.7-1.8-.3-.5 .6-2.7-.1-2.2 1.8-1.8 1.2-3.3-1.1-2.2 1-2.7-.3-2.2-.3-2.1-.4-4.2-1.7-2.2 .5-2.3-.8-.7-.2-2.1 .6-2.6-.4-2.5-3.7-2.3-1.2-1.6-2.1 1.1-1.4-2.6-1.7-1.4-1.8 2.2-2.5 3.2 .6 1.6-2.8 1.6 .1 1.9 .1 1.5-.9 1.7-.1 2.5 .6 2.6-.1 1.5-1.1 2.2-.4 4.6 2.1 3.2-2.2 2.5-1.4 3.3 .6 2.4-.6-.6-.6 2.4-.2 3.7-1.4 2.2-2.6 2.8-2.4 .9-.3 2.2-.8-.2 .5 1.9-3.7 .5-2.8-3.2 2.1-3.5 1.2-.6 2.4 .6-.5-2.1 1-2.6 2-1.9 1.5-3.4 2.6-1.4-.3-.2 .6-1.5 1.8-2.1 .9-2 .3-3.4 .6-4.3-1.5-1.6 .3-2.2-1.7-.9 1.7-2.4-.3-2.3 1.9-2-3.6-1.2-1.6-.3-1.1 1.6-2.3 2.5-.6 .8-.3 1.5-1.3 3.7-.7 3.7 1.2 1.6 .4 .1-.1 1.1 2.6-1 3.3-1.5 1.2-.8 .2-1.1-.5-.9 1.3-4.3 3.5-1.3 .1-4.2-1.5-1.9 2.1-2.6 .4-.3-3.6-3.2-1.2-2.6 .9-1.1-.6-1-3.1-3.1-.3-1.3-2.4 .3-1.4-1.6-1.8 1.1-2.8-1.5-1 2.3-1.7 3.1 .3 2-.3 1.2 .2 4 1.8 3.4 2.3 1-2 2.5 1.5 2.7 3.6-.3-.3-.2 2.7 .9 .1-2.8 2.7-2.3 2.5-1.1 1.2-4.1-.2-2.4 .6-3.2-.3-.6-1.2-2.3-2.4-2.3 1.5-.8-1.6-.3-2.6 .6-2.3 2.8 .1 4 .4 1.8-1.2 2.5-.1 2.4-.4-.2 .2 3.1 2.1 3.2 .6 .9 .2 1 0 1.6 1.7-1.3 .5 3 .9 1.6 .2 1.9 3.4 2 .9 3.8 1.8 1.8-.7 4.1 1.2 .8-1.6 .8-.2 3.7-1.3 1.5-1 1.4-.6 1.1-3.5-2.5-.4-.1-2.5-2.4-1.3-1.1-.8-3.7-1.6-1.4-2.4-.1 .5-2.2-1 1-1.4 1.8-.7 2.2 2.4 3.2 .4 3.1 .1-.1 1.6 2.9 .7 .2 .4 3.1 .7 1.2 1.2 2.1 1.7-.2 2.1 3.4 1.6 .5 .7 1.1 1.5 3.3 2-1.3 2.8 1.7 .1 1.7-.1 1.3 1.4 4-.5 1.5-.9 .8 0-1.5-1.1-.9-.6 2.2-1.4 3.1-1 2.1-3.6 3.2-2.1 3.1-1.7 1.6 .3 2.1-.1-1.6-1.4-1-3.6-.3 .2 .4-1.5-2.6 .2-2.6 1.7-.5-.1-2.7-.5-2.6-2.5-2 .3-3.5 2.1-4.4 .7-2.2-1.2-.4-.3-2.3 1.3-4.3-1.4-3.5-1.7-3.1 1.4-1.5-1.5-3.4-.2-1.7 1.7-1.4 .1-3.7 2.3-.2-.3-3.1 1.4-2.6 .4-2.9-1-2.5 1.1-2.8 .3-2.4-1-2 .4-3-1.4-1.5 1-1-.4 .2-2.1 2.6-1.4 3.4 1.4 1.5-.8 3.9 1.3 3.2 .9 3.2 .7 2.2-.7 3.4-.3 .4 1.5 3.2-.8 1-1 1.2 .3 3.6-1 4.3-.6 3.5 .4 .5 1 3.5 1 .9 .3 3.4 .7 4.6 .6 .8 .5 3.3-1.3 .6-.8 2.7-1.7-3-.5-2.2-.6-1.4 3.1-1.3-1.4-4.6 .9-5.2 0-2.6 1.4-2.7-.9-1.7-.5-1.7-.9-.1-.8-3.3-.5-2.5-.6-3.3-.1-2.9 1.8-1.8-1.4-3.8 .8-1.3 .5-1.7 1.7-.9 2.2-.6 1.8 .3-1 .6 3.3 .2 2.4 2.1 .2 3.6 .6 2.2 .2 1.7 1.5 2 .6 3.4-1.1 3.3-.8-.2 .2 .9-4.1 2.5-1 .6-2.1 2.6-1.5-.8-2.7-1.6-.9-1.9 .1-2.8-1-2.3-.7-2.9 .8-2.6 .7-1.2 0-3.2-.7-3 1.2-2.5-.1-.5 .3-3.6 .2-2.3 1.4-3.5-.5-1.8 1.1-2.4-1.2-3.4 .4-3.2-1.2-2.4-1.3-1.7 1.1 1.7-2.2 1.6 .3 3.2 0 3.7-.7 3 1.4 1.7 1.6 1 1.7 1.4-1.2 3.2 1.2 2 2.7 5.2-.9 1.3-.5 3.3 2.2 3.3-.4 4.2-1.3 .6 2.4 2.4-.4 2.8-.5M553.2 569.3l1.7-1-.3-.7-.9-3.2-.7-.8-.5 .1 1.3-2.6-.7-2.5-1.1-1.7-1-2.2-1.6-2-.4-.3-1.7 .1-2.5-1.8-1.2-1.6-1.9 .5-1.9 .8 .3 3.3-.6 .3 2 1.9-1.7 1.7 .2-.2 .9 2.6 .2 2.2 2 1.2 2.5-.6 3.1 1.8 3.3 .4 2.2-.5 1.3-2.7 1.1 .3 3.3-3.4 .8-.9 1.5 .7 1.8-2.2 2.3 1.2 3.7 .9 4.2 .2 .3-1.3 1.8-1.5 3.5 .2 2-1.2 3.1-.5-.5-.8 1-1.1-2.6-2.3-2.1-2.1-2.5 .8-.9 0-2.9-.8-1.2-.2-1.9 .5-2.1-.6-3.5-.4-1.2-.4-1.9-1-3.3 .2-1.4-.5-4.4 .5-1.7 1.6-1.9-.5-.5 .8-2.5 1.1-3.2 .5-2.9 1.4 .2 2.5 1.3 .4 .3 .3 2.5 .2 1.8 0 3-.9 1.8-.1 .6 1.8 2.5-2.6 3.1-1.8 5.9-.2 1 1.2 2.4-.2 .8 .7 1.6-3 3.7-.5 2.1-1.1 2.7-.3 1.8 .8 1.8 .9 1.6 .1 2.2 .1 3.4-.2 1.6 2.8 2.1 2.7 .4 1.1 2.1-1.4 .7 2 3.8 2.4 1.1-.3 2.2-2.1 .7-.7 .5-2.9 1.2-1.7 1.8-.1 1.4 .6 3.1 .8 .8 .1 2.3 1.6 .3-.3 .8 1.2 2.4 .8 .6 2.7 .6 2.6 .6 1.3-1.4 2.1 3.9-.2 2 .4 1.4-.7 2.8 .8 1.1 .2 2.5-1.2 3.6-.7 1.7-1.4 .2-.5 .2-1.4-2.2-.2-1.6-2.5-.2 .9-3.2-.2-1.4 2.4-3.4-1.2-2.5 0-3.3-.6-2.5 .9 2.1-2.9 2.3-1 3.1 .1 2.3 .4 .8-.5-2.3 1.9-.7 .4-2.4 .5-3.4-1.9 .1-1 3.7-.1 2.8 .3 2.1 2 1.7 1.6-1.3 .8-2 1.7-1.4-.3-2.9-.8-2.6-.3-1.5-.4-1.1-2.9-1.9 .3-.9-1.6 .5-2.3-1.4-1.1 3.3-1.6 1.3 .3 1.9 .6 3.7-.1 2.2 2.3 2 .5 2.6-1 1 .2-.1 2.3-1.2 2.6-2.1 2.4-2.4 2.6-3.4-1.3-2.3 .4-1.8-.1-2.5-2.2 0-.6-2.8-2.1-1.9-.5-2 .1-3.2 .6M609.4 638.1l.5-1.8 1.5-1.3 1.9-2.8 .3-.2 3.6-1.4 2.7-2.9-2.5-.7-1.1-1.2-.4-.6-2.7-1.1-2.3-1.1-1.9-1.5-1.9 2.4-2.1 .2-1.2 1.4 1-.5-.8 .5 .2 .9 .6 1.6 1.3 2.4 3.1 2.3 2.6 1.7 1.6 1.6 1.3 1.2 2.1 1.7 1.8-1.2-3.1 .2-3.6 .1-1.9-.7-.4 .2-3.7-.3-2.8 2.5-.7-2-1-2.1-1.4-2.6 .2-.2 1.2-.7 1.2-.9 3.7-1.6 2.5-.5 2.3 .1 1.5 2.7 2 .2 2 2.5 .1-.6 .9 .1 3.8-.2 1.3 3.1 3.1 .6 1.7 .1 3.3 2 2.5-.5 2.9-.5 1.5 .3 2.2 .1 3.8 .3 3.5-1 3-1 .7-.1 3.6-1.3 3-.6 2.2 0 1.9 1 1-2.1 1 .7 4.1 .8 2.6-.6-1.8-3.7 .7 .5 2.7-.1-1.5-3.4-.8-2.1-2.3-2.5-1.8-1-1.7 .3-3.5 1-1.9-1.1-3 1.3-3.4-1.7-2.5 1.8-1.5 .6-.1 .4-.3 .9-1.3 2.5 .7 1.1-2.6-.3 2.3 2.5 4-.6 3.1 2.2 0 .5 3.2 .7 3.9-.2 1.4-1.5 .1-4.4 1.4-2.6-.3-.4-1.7-2-2.1-.9-1.9 .1-2.9-1.5-1.4 1.9-1.8 2-.9 1.4 .7 .8 1.7 2.2 .6-.9-.2 3.9 2 1.4-.5-.8 .7 1.9 1.5 1.9 3.5 2.2 2.1 1.3-2.4-1.1-1.2 1.3-3.7 0-3.5-.1 0-1-3.8 1.4-5.2-1-1.5 .6-.8 1-3.7-.7-1.5 .2-2.6-2.1-3.4-1-2.4-1.9 0-.9-2.3 0-1.7-1.3-3-2.6-2.5 .3-.3-.6-3.9-1.1-1.6-1.2-2-2-.3-.6-.8-1.1-2.7-2.1 .6-1.2-1.5-1.3-.5-2.6-.8-.9-1.2-2.9-.3-1.7-1.2 .2 1.1 .9-4.3-1.9-1.8-1.5-1.2-.1-.1-3.1-1.6-2.5-1.6 0-2.5-1.2-2.4-1.6-2.8-.9-2.2 1-2.2 1.8-1.4 1.1-1.4-2.8-.9-.8-1.7-1.5-2.3-.5-2.7 .4-1-.7 0-2 1.1 2 2.2-.2 1.5 3 2.5 3.2 2.5-.1 .2 .1 2.2-2.3 4.1-1.8 3.6 1.3M630.1 597.9l3.8 .1 2.9-1.8 .1-.3 1.1-.9 2.1-1.1 1.3-1.2 1.3-.6 .1-2.1-1-2-1.4-2.9-1.4-1.6-.5-.5-1.5-.4-3.5-1.7 .1-2.2-3.4 .4-1.9 .2-3.4 .6-1.6 .1-2.9 .5-2.8-1.1-1.7-.6-3.2 1.9 .3 1.1-1.5 2-.8 .5-3.3 2.8-.9-.3 .1 1.9-.7 2.5 1.6 2.9-1.7 .6 .1 2.5-1 0 2 1.9 .1 2.1 .6 .7-1.8 1.8 1.8 1.2-1.3 1.2 2.7-.8 3.8 1.7 2.2 3-.6 1.2 1.4 1.9-.3 1.3-1.5-.6-4.6 .3-2.7 .2-1.7-.8-.4-1.2-.6-1.3 .1-3 2.3-1.1 2.1-1.9 2.6 1.8 4.3-.3 2.5-1.3 1-.6 2.4 .4 3.6-.9 .2-2.8 2.4 1.6 2.8 1.7 1 .9 2.3-.4 3.5 2.2 .6 1.3 .5 3.8-1.3 .9-1.2 .5-.6 .1-3 1.9-3.1-.7-3.5-.5-2.2 0-2.2-1.4-2.5 .7-.8 .3-3.2-1.3-4.5-1.1-.4-2.4-1.4 1.6-5.9-.3-.9 1.4-4-1.3-1.6 .7-1.6 .4-2.3 1.9 1.3 2.1 2.3 .9 2.6 2 2 .2 2.4-.4 3.2-.1 .5-1.7 3 2 2.4 1.3 3.3 0 2.4 .4 5.2-.8 1.7-.1 2-1.8 3-.3 .8 .3-.1-1.8 .1 .7-1.1-3.7 .1-.6-4.2-.7-3 .4-4.3-.8-3.2 .6-1.8-.1-.4-.7-4.4-1-.4-1-2.2 1.7-2.2 .2-4-4-.2 .9-1.9-1.2-.3-3 1.5-1.1 1.7-1.6 2.3 .9 3 1.3-.4 2.4 .3-.7 2.4 1.8-2.7 1.2-.2 1.9-2.9 1.9-1.8 2.5-1.5-.2-1.2-1-1.7 1.2-2-.4-1.2 1.3-1.9 .2-.2-2.4 2.4-2.2-1.3-2.8 .1-1.1 .8-2.2 .9-1.1-.6-1.1 1.8 0 .5-2.7 0-1.5 2.9-.9 3-.4 .2 .2 1.1 .1 3.1-.7 5 1.9 3.6 1.6 3-.4 .1 .6 2.1 2.2 3.9-.9 2.6 .1 2.1 .2 1.8-.2 .3 0 2.3 2.3 1.4 1.2 1.8 .9-1.2 2.2-.2 0 1.2 .7 1 3.7 1.5 1.8-.5 1.9 2.1 1.2M540.4 580.6l1.6-.3-1.9 2.5 .5 1.6 3.7 .3 3.7 .7 1.6-1.6 .3-1.9 .2-1.6-1.7 .2-1.4-.3-1.2-2.9-.5 1.2-1.3-4.2-.6-.1-.5-2.1-3.2-1.5 2.5-.9 .7-.5-2-.5 1.2-2.1 2.9-2.8-.5-.7-1.4-2.1-2.1-.1 1.8-2.8-1-2.4 .9 .6 1.7-1.8 .3-1.6 0-2.3-.7-1.3-1.6-1.4-.5-2.2 2.8 .1 3.7 1.2 1.4-2.2 2.6-1.4 4.2 1.9 .6 1.1 2.1 .5 1.4 2.1 .2 2.1 1.4 1.5-.6 .9 .1 3.6-1 .4-1.3 .8-1.1-.6-.1 1.8-.2 1.3-1.8 1.5-.3 4 .3 1.7-.2 1.2 1.6 1.2 1.1 .8 .1 1.9 2.5 3.4 2.4-.1-.5 .3 1.9 4 1.7 1.4 1 1.5 .4 .7-.3 .2-.4 1.9 .2 2.5-.9 2.6-.4 .1 .2 2.7 .6 .2 2.8-.1 2.4 .9 4.5-.9 2.7 0 .1-.3 .9-.8 3.2-2 2.6-2.5 3.1 .6 2.7-1.4 1.9 .6 2 .1 1.3 .4 2.6 .9 4.1-3.7 .4-1.8-1.5-1.4-.1 .8 .4-2.6 .4-1.8-.1-1.7 1.7-.4 1.4-1.2 .6-2.5 1.1-1.4 1.5-.2 1.6-.6 3.6-4.1 .6 .8 2.8-1.3 .3 .4 2-2.2-.3-2.8-1.9-.8-.9-.2-4-1-3 1.3-1.8 .6-3.3 1.5-1.3-3.9-4 2.8-2.1-1.9-1.7-1.2-.8-.2-3.6 0-.5-3.3 1.8-1 3.5 .8 2.3-1.1 3.2-1 0 3.2 1.7-.6 3.5 1.6 4-2.3 2.2 0-2.1-2.3-2.7-1.8-3.6-.5-2.9-.6 1.3 1.2-2.5 1.7-1.7 1.2-1 1.7-3.5 .3-1.5 2 .5 1.7-.1-.5 .7 2.9 1.5-.3 2.5 .3 3.3-.3 2.3-.8 .5 .9 1.3-4 .2-2.4-1.6-2.6 .5-2.3-2.9 .7-2.6 .2-1.4 0-3 2-1.7-2.5-4.1 1.3-.1 1.5 .1 .6-1.5 3.7-1.6 .9 1.1 .6 2.3 .2 2.2 .4 1.5-1.5-.4-1-2.2-2-3.4 .7 .9 1 .9 2.8 1.5 .7 2.6 .2 2-.5-.3-1.9-2.1-2.1-1.9-2.5-3.5-1.1-1.3-1.1M556.6 594.8l-.8 1.8 3 1 2.7 2.6 0-.4 .9 .3 3.8 1.3 4.1-1.6 1.6 .4 .9 2 2.3 .8 2.4 1.4 3.1 0 4-.5-.3-2 .8-1.3 1.7-.1-.2-1.8 .6-2.5-2.2-1.1-3.1 .7-3.4 .8-1 .5 1.1 2.2 2.1 1.2 2.6 1 .2 1 2.8 1.4 4.6-1.1 2.4 1.9-.4 1.4 1.1 1.2-2.2-.5-2.8-.5-1.6-.8-3.6-.1-.7-1.2-.5 .3 1.2-1.5-.3-1.7 4.4-1.1 1.6 1.1 1.5 1.6-.3 1.4-.2 .1-3.4 1.9-2-.8-1.1-3.1 1.4 .4 3.6-1.9 .7 .2 4.9 1.1-.8 1.5-2.4 .7-1.9-.3-.4-1.8-3-.3 .2-3.2 2.3 1.3 2.4 .4 2.1-1.1 2.8-.4 .1-.3 .9 2.7-1.5 2.4-1.6 .8-4.7-2.7-2-1.9 .6 .4-.1-2.9 2.3-.8 3.7 0 1.6-1.7 4.3-.6 1.9 .6 1.2 1 1.2 2.2-.4 2.8 .5 1.3-2 2.5-.8-.5-5.2 .6-2.2-1.2-2.7-1.1-1 .1-1.1-.7 1.2-1.1 2.3-1 1.7-1.9 2.5 1.3 .9-1.9 3.5 1.3-.6 .6-.9 .7-2.6 .8-3.4-1.8-3.4 .6 .2-2.2 1.5-3.6 2.4 2.2 5.5 .1 .8 2.3 .2 .9 2.3 1.3 .8 1.9 0 2.1-2.9-.9-.8 3.1-2 2.1-1.4-1.2-1.4 1.6-3.7-1-3.8 .5-1.4-2.3 .5-1.7 0-1.8-1.3-.7 .8-.5-1.1-3.2 3.3-.7-.2 .6 2.2-.3 2.2-1.2 2.1-.6 2 2.7 2.3 .3-.5 3.6-.4 2.2 1.2 .2-.1 1.2 1.5 .1 1.3 .5 4.9-1.7 1.5-1.1 1.8 .2 2.1-2.9 .7 .5 .1-3.7-.5-2-.2-.7-.7-1.6 .9-1 2.5-.8 2.9-1.3 1.4-1.5 3-.1 2.6 .2 1.8 .5 .7 1.5 3.7 .6-1 2.6 .1 2.7 .3 .1-2.8 1.2-2.8 1-3.9 1.9-1.7 1.4-2.5-.7-1.3 .1-1.1-2.4-2.5-.9 .5-.3-3-3.4-1.7-.3-3.2-1.2-2.3-3.2-1.2 1.2-2.2 .1-1.2-.7-2.4-1.9-1.3 .3 .5-.3 .8-2.9 3.2-1.6 1.5 .4 .4 .7M651.6 573.9l-4.6-.9 .7-.9-2-.8-2.7-1.5-1.8 .1-1.2-1.5 1.5-1.9 3-.1 3.1 .3 2.9 1.9-1.6 .4-.5 1.3-1.2 1.5-1.8 1.9-3.2 1.8-3.5-1.4-.2 2.1-1.9-.3-3.8-.3-2.3-1.2-.9-2.2 1-1.9 3-.9 2.3-.7 2.8 .4 1.1-2.7 1.8-.8 2-2.6 1.9-.3 1.6-.1 1 1 2.5-1.6 1 .9 2.3 1.4 2.4 1.6 1.1 3.2-.3 1.2 1.7 .4 .9-.3 1.9 1.9-1.3 1.2 .1 1.9-3.9 2.2-2 1.4-1 .5-3.6-.8-3.5-1.9-1.4-2.5-1.1-.5-2.4-1.7-1.6-1.4-4.1-1.1-.7-1.6 1.3-2.6-1.3 1-.2-.7-1.1-.6-1.4-2.7-.7-1-1.9-2-1.7-2.9-2.5-.2-2.8-.2-1.8-.2-2.1-1.9-1.1-.8-1.8-1.8 2.2-1.1 3.1 1.8 2.8 1 1.6 0 3.1-.8 1.4 .5 2.7 .3 1.1 2.3 3.4-.6 1.8 2.4 3.2 2.5 1.6 1.1 1.4-.8 3.5-1.1 .7 2.2 1.3-1.6-.7-2.2-.4-.8 .4-1.7-2.9 1-3.2 3-.7-.5-4.8-2.8-1.7 1.5-1.1-1.4-2.4-3.4 2.2 4.5 3 .9 2-1.1 1.8 .6 1.9 .2-.5 2.1-1.3 3.2-3.4 2.4-1.9-.4 1.2 3.4 .1 .7 .9-.8 1 2.1-2.5 2.4 .6 1.3-4-.9-1.2 2.2-1.7-1.2-2.1 1.9-1.3-.3-4 0-3-3.8 1.4-2.2-2.4-1.9-1.4-.6 .3-1.7 1.7 .1 3.2-2 2.4-.8 .9 .1 2.1-.6 1.6 2.5 .7 1.7-2.7 .9-2.4 .7-1.9-1-1.7 .5-.6-1.3-2.2-3.1-1.9-.8-.8-2.2-2.3 .3 .1-1.5 2-1.9 1.2-1.6-.6-.4 3.3 .5 2.4-.3 3.5 .1 .2-.2 2.8 2.9 .4 .1 3 .8 2.7-.2 .9 1.3 2.4-.2 .6-2.9 1.5-1.4 3.3 1.1 1.9-1.8 2.6 .9 .1 1.2 .3 1.5 .3 2.2-1.8 1.9-2.1-.7-2.2 2.8-1.7 .7-2.4 .4-1.8 .4-.8-.1-1.8 3-2.6 3.2-2.6 2.1-.8-2-2.4 .8-1.7-.1-.9 3.5-2 2.1-1.2-1.6-3.8-.1-1.7 .1M662.6 591l2-1.3-.3-2.3-.6-3.3 .2-.3-2.3-1.3-1.7-2.4 .9-.5-1.6-.2-.7-1-2-1.4-2.2-1.7-.7-.4 1.4-2-.3-.2-2.5-1.5-.1-.8-3.9-.2-1.5 .6-3 1.5-1.5 1.3-.2 3.2-1.3 .5-1.9 1.1-2.4 1.2 1.6 2-2-.1 1 1.1 .7 3-1.7 3.5-.4 1.4 .3-.6 .1 1 1.3 2.2 .8 .6 1.4 1.1 1.8 3.1-1.3 0 .9 3.6 .2-.7-.8 1.6 .6 1.7-3 3.6-.8 1.3 1.3 .9 0 .3-1 1.4 2.4 3.4-.3 2.2 1 .9 2.9 2.7 .8 .7 2.2-.9-.3-1.2 2.2-1.2 1.4-1 .1-1.6 .3-1.9-1.9-1 1.4-2.2-2.4-.3 .7-1.6 .7-1.7-2.6-.2-3.7-1.8-4.1 .7-2.9 0-1 .4-2.7 .4-.9 2.6-2 .7-.5 .1-1.8 .1-2.8 .1-3.4 1.5-.7-.6-5.4 2.1-.7-.3-2.2 1.4-1.3-1-2.5 .1-1-2.1-.9-1.3 .9-3.4 .8-2.6 .4-1.3 4.5 1.2 0-3.5 .6 1.3 3.6-1.4 2.9-2.9 1.7 .1 3.2 .9 3.2 2.2 .5-2.4 .2 .8 3.4-.5 2.5-.4 3.4 2.2 2.8 1.6 2.2 2.8-1.5 3.1-3.9-.1-3.7 .5-2 .6-3 .7-2.2-2.6-3 1.1-2.6 .9-1.9-.3-2.8 1.8-.5 .7 .8 .1-1 3.2-1.1 .8 2.3-.3 .9 2.3 0 3-3.3 .1 1.5 1.8-.3 1.2 2.3 3.1 2.4 .7 1.8 2.5 3.7-1.6 1.1-.6 1.6-1.7 1.3-1.2-1.1 .1-2.6 0-1.7-1.4-1.9 .9-1.1-.1 .2 4.9-.9 1.1 .4 2.5-.6 .5-1 .3-2.5 1.1 1.5 1.3 .2 .7-.2 1.8-3.9 2-1.7-.8-2.6-.7-3.8 .5-4.2-.8-1.6-1.8 2.9-2-.2-.2-2.3-2.9 .6-.9 .1-1.6-1 .6-3.7-2.5 .5-2.4 .2-.2 .6-3.3-.1 .6 1.8-2.4-3.4-.5-1.8-.2-1.7-2.8-1.7-.6-.3-1.1-1.2-2.4-.7-1.9 1.4-1.8 .9-1.7-2.6-1 .4-.1 1.2 .2 1.6-2.8 1.2-2.1 4.9-.6 2.5 1.4M573.6 576.3l2.9 .3 .6 1.5 3-1 2.7-1.8 2.5 .5 1 2.1 2.3 1.3 2.9 1.6 1.7 2.4 1.1 .8 2.9 1 2.9-.7 1.8-.1 3.7 .3 1.7-1 2.8-.5 1.3-.6-2.4-2.4-2.4 .1-2.1-2.5 .8-.5-4-.7-1.1 1-.7 1.3-2.5 3.3-.7 .4-.8 4.1 3.5 1.6-.3 .9-2.2 1.4-.9 2.4 .9 1.3-2.6 .8-3.4 .3-.3 .2-2.6 .5-2 2.2-3.6-.1-1.4 .3-1.6 .8-1.8-.5 .2 1.4 .1 1.2 1.7 3.1 3.2-.4 1-.6 2.1-1.4 2.5 .1 2.5-1.2 1.7 .9 2.6-1.9 1.2 1 2.5-.2-.9 1.4 0 2.5-3.8 1.9-2.8-.7-2.9 2.8 2.8 .9 .2 3.3-.5 .5 2.6-1.7 1.3 .4 3 1.2 1.3 .7 3-1 2.2 2.1 3.1-1.6 2.7 2.3 1.6 .7 .8 0 .6 2.8 .7 .9-1.3 .6-.9 .2-3.8 2.4-4.8 0-4.2-3 1.2 .1-4.2-.6-2.5-1.1-2.5-1 0 .1-.1-.8-2-1.6-1.2-2.1-2.1-1.1 0-1.1-1.3-1.3 1.4-.8 1.2-1.7 1.2 1.3 4.3-.8 4.5-.7 2 2.5 2.1 .9-.1 1.2 1.6-.5 2.2 .2 1.2-.5 2 1.5 4.1 1.8 .4 1.7 2.7 2.7-.5 .4 .9 1.3 1.3 1.6-1.3 1.7-.2 3.3 .6 1.9-.6 .3 2.4 2.4 2.4 1.6 6-1.9 .7-1.5-1-2.4-.7-1.9 2.3-.1 .8-2.9-.7-1.1-1.2-.8-1.6-2.8-2.2-.4-1.2 .2-3.2 1.3-3.2-2.7-.9 2.1-4 .2-1.6-1.6-3.4-.4-.2 .6-5.2 1.3-.7-.9-1.8 1.8-2.7 2.7-2-1.4 .9-2.6 .4-.8-.1-2.3 .2-1.7 1.2-1.3-.8-1.1 1.4-2 .7 .5 .1-.6-1.6-2-3.7-2.2-3.1 1.8-.8-.8-2 1.2-.2 .3 2.3 2.3 1.8 .8 .9 1.4 2.7 1.1 .5 2 1.5 1.7-.9 .1 .9 .5-1.8 .5-1.3-1.7 .1-.4 .1-2.2 1.8-2.8 .3 1.4 .3-3.3-1-1.3 .4-2-2.3-.5-1.6 0-2.4 1.3 1.4 1.3 1.1 1.3 .5 1.8 3.2 3M606.6 471.4l1.2 .6 0 1.2-.8 3.2-1.6 1.2-1-.8 1.9 0 1.6-4.6 .3 1.2 3-1.5 2.8-.2 .4-2 2.3 .6-.6-.2-1.1-2.6-.4-1.9 0-2.7 1.7-2.1-.8 1.6 4.2 .9 2.3-.9 .8 1.3 3 1.2 2 1.6-.1 1.8-.7 1.2 .1 .8-.6 1.9 1.1 2 .5 1.2 1 2.1 .2-.8-1.5 2.9-.1 3-1.4 0-.8-1.2-.1 3.4-2 .6 1.3 2.4-1.9 .8 1 2.4-1.7-.8-2.7 2.2-3.2-.7-2.3 1.9-3.4 .8-1.2-.5 .2-2.4 .5-2.9 .6-1.3 .9 .2 4.1 .5 2.4-.5 3.2-.2 .6 1.1 2.7 1.8 3.6 1 1.1-2.5 .2-1 .3-3 2.1-3.2-.3-.8 .7-.7-2.4-1.6-1.7-1.5 1.2-.2-2.7-1.4-1.3-2.4 2.2-2.2 2.1-1.5-3.7-.1-2.1-1.9 .1-1.3-2.3-.8-.6-3.1-.7-2-2.2 .7-3.2 1.7-.3 .2-1.5 1.1-3.1-.7-3.5 .4-.2 2.9-.6 .5-.8 2.8 2.1-.4 1.4 .9 1 2.1 .1 2.3 3 1.3-1.6 1.6 .9 3.2 .2 2-2.7 .3-2.5 3.7-1.1 1.6-3.2-.8 .2-3.2 .2-2.4 .5-2.1 1.6-.3 1.3-.6 .3-1.3 4.5-2.1 2.9 .2 1.6-.3 2.7-1.6 1.2 0 3.7-.8 3.7-.3 2.4 .2-.4-3 1.5-1.5-1-3-.2-.5-5-.2-2.4-1.1-2.3 1.9-1.6-.3-.7 3 0 1.3-1.8 1.2 .1-.9-.2 3.1 1 2 2.3 .4 2 1.4 2.2 .8 1.4 .6 1.8-.9 4 2.9 1 1.6-1.5 .4-1.8 2.6 .3 1.6-.4 1.7-2 1-3.8 1.1-3.1 1.1-.5 1.2-.9-.1 .4 1.5-4-.8-2.5-.1-1.6-2.3 2.1-1.6-1.7-2.5-1.2 .1-1.7-1.4 .2 0 .1-2.4-2.1-.8-1.6 1.5 .2 3.5 3.3 2.9-.4 .1 1-1.1 1.7 2.1 1.8-.3-.2 1.9 2.7 .3 2.3-.4 .7 1.4 2.5 1.1 2.4-3.1 2.6 .5 .5-4.1-.3 .6 1.7-1.1-.3-1.9 2-3.1 .6-.7-.9-.1-1.7-1.6-2-2.6 .3-.4M823.9 590.5l1.6 .3 4.6 1.2-.7 2.8-.6 1.1-2.5 1.2 1.2 1.1-1.8 .3-3.5-1.5-1.1-1.6 2.3-1.2 .2 1.1 1.1-3.2 4.4 .6 .9 1.5 1.2-.8 2.7 .9 1.8 3 1 2.7 1.5-.7 2.8 1.1 1.7 .1 .8 .6 .9 1.9 1 1.3 .8 3.3 1.7 .4 2.6 1 2.3 3.8 2 .4 1.6-.1 .5-.2 3 2.2 1.7 .6 2.1 2 1.5 .9 .3 2.2 1.2-1.2-.6 2.5 .1-1.1 3.9 .7 4.1 4.3 2.9-1.1 1.9 1.1 1.6-.3 3.1-.8 1.4 .3 .7-1.1 .5-2-.1-2.3-.5-1.6-2-1.1-2 2.1-2.4-1.6-2.8 .7-1.2 1.3-2 .1-1.4 1.1-2.3 3.8-1.2 1.7-2.4 .9-1.2 0-1.3 .8-1.8 1.3 1.3 2.1-2.2-.2-1.3 2.2 .2 0-4.6 2.6-3.1 1.2-1.9 2.4-2.3-.9-3.5-1.1 0-.1-2.1-1.3-4.7-.3-1.9 1.2-1.1-1.9-2.8 .8-3.3 .1-1.2-1.1-4-1.1-2.2-.8-1.7 3-1.5-.4-3.2 .4-2.6 .7-2.6 1 3.4 1 1.7 .8 2.8 2 3-1.4 1.6-.4-.6-.8 0-2 3-2.2-1.4-2.6-2.3-1.1-.9-2.4-2 .2-3.2 0-1.9-.1-1.9 .1-.5 1-2.1 3-1.9 2.3-.7 .2-.7 3.1-2.1 0-3.1 1.4-.3 .3-2.6 .9-1.5 .2-1.3 1.4-4.3-1.1-1.8-1.1-3.4-1.2-1.9-1.7 1.8-3.2-1.9-2.8 2.4 .8 3.7-.4 2.1 .9 .8-.5 4.6 .4 1.1 2.3 1.4-.8 2.6 1.7 2.4-.1 1.9 .9 .6 .7 2.1 .8-.4 2.3-1.4 2.9 0 1.4-1.6 1-3.7 1.4-1.3-.5-1.2 2.3 .6 2.2-.5 1.2 1.6 1.6-.6 2.1-1.2 .8-.1 .1 0 1.7-4.4 .7-3.8 2.4-2.2 .8-2.5 1.5 .2 1.2-3.1 1.7 3.2 .2 2.2-.2 3.3 .2 1.5 .3 3.9-1.5 2.4-.9 3.1-1.4 2.7 3.3 3.3-.4 1.1 1.9 2.1-.6 1.4 2.4 2.1 2-1.7-.2-2.3 .7-3.5-1.4-1.4-2.7-1-1.6-2.6 1.6-2.9 .6-2.7-2.6-1.6-1-4.9 2.3-1.4 1.9-3.1 .7-2.6-1.2-.7 0-3.1-1.1-1.5-2-2.6-.9-.6-.3-1.2-3 .6-1.9 3.2 .8M747 591.4l-.1-.2 1 .9 1 .5 1.3 2.1 1.2 3.3 3.4 2.1 1.1-1.4 1.5 3.1 3.5 1 2.7-.6 .8 .6 2.6-.6 1-.4 3.9-.7 1.6 .1 3.1-.3 0-2 3-.8-.6-.8 2.3-2.7 2.4-2 4.2 1.4 2.5 .3 2.2-.2 3.4-.2 2.3 .7 3.6-.4 .9 1.9 3.2 .1 2.2 1 2.1 .8 2.3-.5 3.4 .7 .8-.4 1.8-.6 3.1-2.3 1.4-1.1 .6-1.6 3.3 0 1.2 1.8-.6-1.8-2.6-2.7-3 1.6-.9 2 2 1.4 1.3 .3 2.7-1.3 .9-.2-1.1-2.9-.2-1.5-2.5-.7-1.4 1.7-1.4 .2-.8 .6 5 .7 2.6-.8 .3-.7-1.1-3.3-1.8-1-1-.3-1.6 .8-2.8-.1 .3-.7-2.6-.8-4.2 0-2.1 .6-2.6 1.3-2.8-1.9-3.8 1.7-2.3 .2-1.2 .9-4.6 .6-1.3-.1-2.9-.6-1.7 2.6-2.5-1.3-1.9-.1-1.1 2.5-1 .5 .5 1.1 .3 .2 6 .7 1.6 2.4 1.8 .2-.1 2.1 1.4 .6 4.2-1.6 2.7-1.2 3.9 2.8 3.1 1.4-.2 1.3 .9 .2-.1 .5-1.2-.3-5.1-2.4-3 .9-.7-1.9-2.6-1.3-.5 .8 2.3 .2-1.7-1.9 1.1-3.3 .4-2.1 1.4-.1-4 .6-2.9-1.4-2.2-.2-1.5-.4-5.5 .4-1.9 1-1 1.1-1.7 1.2 .5 1.3-1.5 1.5 .8 2.4-1.5 .3 .4 .5 2.9 .2 1.4-2.3 .6 .2 2.3-2.8 1.6 .4-.1-3 1.8-.5 1.1-.2-1.1-1.4-.4-2.1 2.4-1.1 1.5-2.1-1.5-1.7-1.2-1.4-2.7-2.9-1.7-.8-1.7 .2-.5 1.5-1.8-1.7-3.1-1-4.4-.7-1.4-1.3-3-2.4-2.4-1.4-2-.4-3.4-.2-.5-1.2 1.1-.5 .2-1.7 .1-1.6 2.1-1.8 1.1-.3 2.9-.9 1.3 2.5 2.3-.1-.6 .9 1.2 1.4-1.7 1.6-.2 .2-2.6-.2-2.4-.1-1.4-.3-1.1-1.4-.8-1.1 .2-1.3 .7 .4 3-3 2-1.6 .6-.4 2-.7 4.3-.1 3.3 .4 1.3-1 5-1.8 1.1 .9 2-.2 1.7-.5 3.8 1.4 1.6-3.1 1.4-.5 3.3-2.8 2-.7 1.5 1.1 4.3-1.3 1.7-1.4 1.3-.6 .1-2 3.9 .5M746 622.6l.8-1 5.3-1.6 1-1 3.2-1.8 1.8 2.1 3.7 1.3 2-.1 1.9 1.2 3.2 2.1 .6 .5 2.1-1.4 2.6 .7 .9 2.4 1 .4 4.7-.4 3.1 .6 3.2-.4 2.4-1.4 4.3 .3 2.3-.2 1.2-2.2 1.9 0 2 .6 2.2-.2 2.2 .6 .2-.1-1.4-2.9 2.6-2.5 1.5-.5-.9-2.9-.3 .3-2-2.5-.6-1.2 .8-1-.2-2.4 1.7-2.7 1.9 .1 2.4-.4 1.5-.6 2.2-.3 1.1 1.8 1.5 .9 1.7 1.8-.6 1.8-3.3 .3-2 .3-3 .7-3.1-1.7 .6-3 .8-.3 1.7-2.8 1.2-.8 3 .4 1.7 1.8 2.6 1.6 1.5 1.9 .8 1.7-2 .9-1.9-.2-3.8-1.4-1.1-2 .2 .8 1.8 .4 1.1-4.3 2.1-.6 2.9 .2 2.1 3 2 .7 2.8 .9 1.3 1.5 1.4 2.6-.3 1.1 .3 .2 0 2-2.5 .5-4.1 1.9 0 2.6-2.4 1.1 1.5 .9-.3 1.6 .2 2.9 1.7 2 1.3 .9 1.9 .6 .7 .5 4-.9 1.1 4.2 1.6 .2 .3-.2 1.7 2.2 .9 1 4.3 .6 1.2-1 1.1 1.6 3.2 .4 3.2 1.5 2.3-.4 3.9-.4 2.5 1.9 3.1 .3 1.3-2.9 1.6-1.7 .7-.3 2.4-2.5-1-2.8 1.8-.7 .8-2.1-2-1 .8-1.3-.6-.5-.1-1.7-.2-2.4-1-1.6-2.8-2.1-1.5-1.8-.6-.2-2.4 .4-.8-1.8-3.5-.1-2.9 1-.8 .6-1.2-.9-1.8 1.1-2.1 2.3-1 1.7-.1 1.2 .6 .6 3 1.1 2.2 .4 2.4-2 3.1 2.1 1.5-.1 1.8-3 3.4 .2 .9-1.7 4-.7 1.5 3-2.4 1.6-.6 .8-1.2 1.7-2.9 .6-.7-.5-1.7-1.3 .3-3.4-1.1-1.4-.5-1-.7-1.5 2.3-1.8 1.3-1.6 .1-1.2 1.8-3.7 1.8 1.5 3.4 .1 3.3 .7 .7 2.4 3.4 1.1 2.3 .6 3 1.3 2.2 1.4 3.1 1.1 2.6 1.6 1.2-.6 0-1.6 4.4 .6 2.1 1 2.5 .4 2.3 1.7-1.3 1.5 1 3.1-.6 .2-.7 1.2-.7 2.8-.4 1.2-.8 2-2 .2-1.6 1.5-1.4 1.8 .7 3.3 .1 .7 1 2.1-.4 .3 1.4 2.2 1.2 2.1 1.6 .3 1.9 .7M763.3 637l.1 1.6 2.5 3 3 1.4 2.5 .1 4.7 0 1.8 0 .7-1.6 1.3 .3 3.9 .6 3 .3 3.1 .6 .9 1.4 .5 2 1.9-.4-.2 2.3 1.4 3.9 .3 .8 1.2 1.2 2 .7 1.1 2.4-.8 2.7 1.2 0-.6 1.6-.6 2.4 .4 2-1.3 .9-.4 2.2 1.5 1.1-.6-1 2.7-2.1 1-2.3 .3 0 .7-1.3-3.9-1.9-1.8 .2-3.2 1.2-1 2.6 1.6 1.1-.1 1.6 1.7-1.1 3.2-.3 1.3-2.5-1.4-.1-.2-2.7-.9-2.7-2.5-1.3-.1-.1-.6-2.2-2.4-1.8-4.2 .5-1.7 3.5-1.1 0-.3 1.1 1.3 1.8 2 1.3 1.7 2.5-.4 1.4 2.3 1.3 2.3 1.2 .8-.6 1.8 .8 3.8 .6 2.9 .5-.2 1.1 2.2 1.3 5-.8-1.7 2.2-2.4 .5-4.4-1-3.5-.2-1.3 .4-2.5-.6-1.4-.3-2.5 0-2.6-2-.2-2.3-.8 1.1-.4-2.3-1.7-2.2-2.2 .4-2.5-1.7 1.6-2.3 .2-4.1 .3-1.2 0 .5-1.7-2.6-.1-3.1 .2-.4 3.3-1.5 2.2 .4 2.9 .1 2.6-1.6 1.6 .7 2.2-1.3 2.4-1.7 1.6 .6 2.6-2.1-.4-1.9-1.2-1.4-1-.7-.2-.2-2.6-2.1-1.6-1.8-2-.3-2.2-.4-1.6-.7-3.8 1.3-2.1 .7-1.5 .7 .8 1.9 2.6 .1 1.9 2 4.9 0 1-1.3-.8-2.4-2.5-2.7-3 .8-.3 1.3 1.1 3.4 2.8 .7 1 .5 2.8-2.7 1.2-1-3-.9-3.3-1.3-3.2 2.1-2.6 1.5 1.9 2.2 4.1 0-.4-1.5 2.9 1.4 2.2-.9 2.8-1.3 2.9-1.7 1.3-1.9-.3-1.9-4.3 1.1-2.6-2.7-1.8 .4-3.8 1-1.6 1.2-1.8-.6 1.5 2.7 0 1.5 3.5 1.5 3.6-1.7 2.3 .4 2.7-2.1-.8 .8-2.7-2.9-.4 .1-1.6-1-.1-.6-2.3-2.4-2.4 0-1-.8-2.3-1.9-2.1 .8 0-1.9-2.8-2.4 1.6-2.8-1-1.5 .2-.2 3.4-.6-1.4-4.9 4.4 .1 5.1 1.3 1.4 .2-.3 .3 1.3 2.1-.1 1.8-2.3 1.5-.9-.6-3.1 .7-2.6-.7-1 1.8-2.9-.6-2.5-3.1-1.3 0-.8-.7-3.2 .3-3.2-.1-2-2.1-2.8-.8 1.4-2M887.2 602l0-1.8 0-3.8 2.7-.9 3.6 2.7 2.7-.9 1.8-.4 2.8-.3-.5 .4 1.5 2.7 1.1 1.6 1.7 .2-1.5 2.2-1.7 2.5-2.1 .7-1.3 .8-2.8 2.6-2 .7-1.9 2.3-4.9-.5-1.7-.8-2.2 2.5-3.3-1.1-2.9 .2 .5-.9-2.7 1.4-1.4 2.2-2.5 .4-2 1.9-1.3-.2 .7 .9-1.7 2.1 .6 2.6-.5 1.4 2.4 2.1 2.9-.6 2.6-1.2 1.6 1.1 2.3 1.3 3.8 2.8 1.7 1.1 .7 2.5 2.4 .6 1.3 .8 1.5 1.5-1-.4 1.6 2.5-1.2 1.7-.4 2.6 .5 .5-1.7 2.9 2.2 1.8-1.8-.2-2.7 .8 .5 2.8-.3 .1 3.4 1 4.9-.5 .6 .7 2.1-1.4 .7-.4 1.4-2.4-.7-1.8 .1-2.4 3.7 1.7 1.3-.6-2.1-2.7 .1-1.6 1.8-1.4-1-.5-.9-2.4-3.1 .8-1 1.5-1.8 1-3.7-.9-3.3 1.6 3.9 1.4 3.1-.9 1.6-1.5 3.4-2.6 2.2-.9 .6-1.2-.1 .3-.9-2.8 .1-1.6 .4-1.9-.8-.6 1.4 .3-.3-1.3 1.7-2.6-2.1-1.6-2.5-1.3-.7-1.6-2.3-1.9-.4-2.1 .1 .7-.1-.9 1.4-2.8 .1-.3 .5-1.9 .1-2 3.4-1.5 0-.8 .3-2.6 .8-1.6 .7-1.1-.7-2.5-.9-2-2.3 1.3 1.7-2.5 0-1 2-3.9 1.4 1.7-2 2.5-.2 1.7-3 1.6 .5 1.2-1.4 2.8-1.7 2.5-1.8-.1-.6 2.6-2.4-1.1-1.7 .1-.5-.3-2.6 2.4-2.5 .7-3 1-1.5 .3-1.5 1.8-1.9-.5-3.5 2.8 1 1.2-1.9 1.9-2.5 1.4 0 1.9-2.5 1.4-2.9-1.3-1.8-.3-1.3 1-2.6-2.1-.7-1.5-1.9-.4-5.6 1.3 1.2-3 .1-2.4 2.1-3.1 5.3 1.9 3.3 0-.7 1.5-.3 .7 .5 1.8 2.3 1.3 3.3 1 2.9 1.1 .3-.4 3.6 1.4 2.4 1.4 3.5-1.8 2.1-.2 2.8 0 1.8-2.7 1-.7 2.4-2.7 .6 1.3 3.2-1.1 2.7 .6 3.2 .6 2.2-1-.1-.6 .8-1.2-3.3-.1-1.3 .1 .2-2.1 1.7-1.7 .6-4.4 2.4 1.4-.7-3.2-1.1-.7 2.4-.9-1.8-2.2-2.2 .2-1.6-2.3-2.2-2.2 .6-1 1.2-1.3 .9-.5M720.7 629l-.8 3.9-1.3 0-2.1-1.3-2.2-.8 .4-2.1 .7-2.7 .2-.8 3.4-.7 3.7-.1 2.9 1.5 .9-.1 1.9 3.5-1.3 3.7-.8 1.1-.6 .4-4.4-.6-1.6 .8-5.2 .8 1.1-3.3 3.7-2.3 .7-1.2 1.3-1.3 2.7-.6 1.7-.2 3.2-.1 2.1-.2 1.8 1.6 3 .7 2.1 1.3-.5 2.1-.5 .3-1.6 .4-2.9-1.6-3.4-.2-.1-.2-.1 .1 .6-2.9 2.5 .8 3.7 1.2 .3 1.1-1.4 2.2-4.2-.9-2.3 1.1-1.8-.1 .6-1.8 4.1-3.7 1.6 1.2 1.4 0 2.4 1.3 0 2.7-1.7 1.1-2.5 .2-3.3 .8-1.4 .2-4.5-1.2-1.5 1-3.2 3.1-2.9-.4 .2 .9 .5 0 0-1-.5-4.6 .9-1.4 2.5-.6 1.9-2.9-1.7-.3 1.6-1 3 0 2.7-.9 3-1.4 .8 2.4 1.3 1 1.9 2.1-.5 2.1 .2 3.8 1.5-.4-.2 1.7-4.4 .3-2.1 1.1-2.2 1-2.8 .2-2.7-.7-2.3 .3 .9-3.2 1.4-1.1 .1-1.6 1.5-.6 2.3 .4 2.7-1.8 1.6-2.1 2.5 .1 4 1.7 2-2.8 .6-1.5 3.3 .5 .6-.7 .8-2.2-1.7-1 .7-1.8-.1-1.5-3.4-.7-4.2-.8-.9-2.6-3.2 1.4-2.2 1.6-3.1 .6-2.2 .7-1.9-.2-1.3 1.6-3.3-1.5-.7-1.2 1.2-1.7 4.4-1.4 1.2 .1 3-.1 2.5-.4 2.1-1.9 1.8-1.8 2.8 .4 3.2-1.8 1.1-.7 4.5 2.4 3.5-1.2 2.7 1.1 1.2 .4 3.8-2.2 1.6 1.3-.3-1.4 3.3-1.3 .2-2.2 2.5-1.2-1.7-1.1 1.7-.6 .5-1.3-2.7-.2-.5-2-2.6-.9-.4-1.1-3.2-2.2-3.5 .3-3-.2 2.3 1.1 2.6 .5 1.6 1.1 3.1 2.3 1.3-1.1-.1 1.3 2.4 3.1 1.2 1.1 1.4 .7 .1 1.9-.7 1.6 .5 0 1.5 2.1 .8 1.2 .1 .6 .9 2.8 1.9 1.7-.9 2 2 1.1 3.1 2 .8 2.7 1.6 0 1.1 1.6 1.3 1.6 0 .5 2.9 2.1 3.2 .4 1.9 1.9-.5 1.3 1.3 1.4 2.1 .4 1.1-1.2 1.9 2.1 1.9 1.5 2.3-1.2 2.1 .2 1.7-2.6 .1-2.6-.8-1.4-.9-1.5 0-.8-2.4-.4-2.5-1.8-2.2 .6M780.3 539l-.2 1.3 1.1 4.3 .3-.2 0 2.1-2.6 1.5-2.5 .1-2.8-.4-1.8 2.7-2.7-2.7-1.6-.7-2.8-2.8-1.2-.3 .5-.3 1.1-1.5 1.4-2.8 2.5-2.9 0-1.1 1-.4 2.5-1 .8 .5 2.4 .6 2.4-.1 .9 2.6 1.7 0 1.6 1.2 .7 .3-.7 1.7-1.8 1.9-.7 1.7-1.2 .5-2.7 .8-.3 1.9-2.9 .5-1.6 1.3-2.9 0-3.2-.9-3.7-.9-2.3-.5-.8-.8-.3-1.9-1.7-.9 .4-1.2 1.9-2.4 1.2-1.1 2.6 .7 2.8-2.4 1.6-.6 1.1-.9 2.5-.9-2.3-1.8-3.8-.1-1.1 .9 .3 1.1-2.6-2.3-1.8 1.7-3.3 .4-2.2 1.8-.1 .5 .6 .5 .8 1.9 1.7 .6 1 4.6 4.5-2.4 2.2 1.1 1.2-.4 2.1-1.2 2.4 1.7 1.2 .3 2.9 1.4 2.1 .2-.6 .9 1.8 1 2.8 .9 2.2 1.2 2.3 .6 1.7 1.5 3.4 1.2 2.3 .9 2.4 .9 .8 1 3 .6 2.2-.5 3.7-1 .9-.4 4.1-.5 2.8-.9 1.1-.3 4 .4 1.6-1.2 1.6 0 1.3-.9 2-.2 1.7-.5 3.3 .7 1.1 .2 4.1 1.4 3.9 2.4 1.4-.3 2.2 .4 .1 .6 2.4 2.3 1-.4 2.4 3.7 1.9 .4 2.8 1.4 2.8 2.8 2.7-.5 .7-.6 2.1-.1 3.7-1.6 .3-2.7-.5-2.6 .2-.3-3.2 .1-1.9 3.1-2.2-.3 .3 2.2 .7 2.9 .8-.4 1 0 1.4 2.6 .5-.4 4.9-.3 3.3-.6 1 .6 5 .3 .9 .8 1.7 2.3 2.6 .2 .9 .7 .6 2.7 1 .9-1.2 1.1-.8 .5-2.7 0-2.4 .6-3-.8-2.8-2.1 1.3-3.5 1.5 .3 .9-3.1-1.1-2.2 .1-3.3 0 .5-1.7 .4-1-2.1-1.4-2.9 1 .4-.7-.8-1-.8 2.1-.6 3-2.6 2.3-2.1 1.5 2.2 3 .5 1.1 2.1-.1 .4 2.2 .7 1.1 1.4 1.1 2 .6 .4 .3 1.1 1 .1-2.9 1.9-4.1 2.4-3.2 2.6-1-.1-.9 1-3.9 .2-3.1 .5-1.6-.9-1.5 1.8-2.4-1-1.9 1-1.6 .7-2 1.3-1.5 1.5-1.9 3.6-3.4 .8-.5 1.2-2.1 1.9 1.9 1 2.8 .5 1.2-.4 3 2M822.2 653.6l2.7 .5 1.6-1 2.5-1.7 3-1.4 1.6-.2 3.2 1.5 2.1 .5 1.3 .3 1.8 .6 .3 2.5 5.1-.5 3.8-1.1 2.1-2.5-1.3-.9-1.2-4.1-1.6-.7-.3-1.2-.8-2.2-2.4-.4-3.4 .5-2.6 1.6-1.2 1.3-1.8-.7 .1 2.3 2.1 2.4 1.2 2 1.2 .7-1.2 .8-2.2 1.3-.6 3.6-1 3.5-.3-.4-1.3 .8 1.8 1.7-1.8 1.9-1.6 1.1-2.6 .2-4.2 2-.7-.6-.5-.9-3.1-2.5-4.8 1.5-2.4 1.2-2.1-.1-2.9 1.2-3.9-1.2-1.8 2-3.2 1.3-3.2-1.3-3.1-.6-1.3 1.9-3.6 0-1.4-3.2-1.7-.1-3.7 .5-2.4-.2 .3-1.2-.1-2.8-4.2-.3-.2-2.1 1.6-1.2-.4-1.3-1.5-1.8-.3-2.1-2-1.6-1-2-3.8 1-2 2.2-.8 2 .3 2.9-.5-1.6 1.9 3.4 4.1 .5 2.1-.7 2.2 1 4.3-.2 .2-1.8-2.3-.9-1.9-1.3-3.1 .5-3.4-.2-2.4 .1-1.6-.9-1-.8-3.2 .8-2.7-.5-2.8-1.7-3 1.1-1.2-1.2-1.2-2.1-1.7-2.8 1.5-.4 2.5-3.2-1.1 0 2.2-1.8 1.8 .4 2.2-.4 2.6 .6 2.5 .5-.9 3.3-2.3 3.6-2.5-.9-2.8 1.2-3.6-1.3-4-.6-1.4-.5-.7-1.6 1.5-1.5 2.2-1.2-1.7-1.9 1.8 .1 .3-1.9-.1-.8 1.9-2.3 .5-.6 3.6-2.4 3.7-1.3 3.5-1.2 2 .9-.9 3.1 .8 2.8-1.7 .7-1.2 2.1-3.6 1.7-1.9 1-3.6-.6-1.3-.3-1.6-.6-1.2 .2-3.5 .6-2.8 1.3-.9 0-2.2 1.3-1.7 1.6-1.3 1.8-.6 2.3-.3 1.3 .5 2.5-1.5 2.5-1.9 .1 1.3 1.4 .1 1.5-.1 1.3-.8-1.4-3.3 2.3-2.7 1.6-1.8 1.9-2.9-2.4-2.6-1.3-.9-2.5 .2-2.4 1.2-1.2 2.1-.9 1.8 1.5 2.3 2.7-.5 .6-.4-1-.8 2.4-2.3-1-1.7-1.9 .5 3 .4-1.9 2.6-2.1 1.7-.1 4.3 1.4 3.5 .2 2.4 .7 1.3 1.6 3.2 1 2.1 0 2.7-.4 2 1.2 1.3-1.1 4.5 1.8-.1-4-1.5-1.7 .6-3 .2 .1 .2-1.8 .1 .4 .3-2.5 1.4-2.4 2.6-2.9 1-1.2-1-3.7M827.6 568.9l-2.3 .5 .1 1.9-3.2 1-3.8 .1-2.7-.6-1.8 .3-1.2-1-2.8-.8-2.4 1.2-.5-2.8-1.2-.7-4.2 .1-2.6-2.3-3-1.4-1.7-.6-2-.3-.5-.8-1-1.4 .5-2.2-.1-2.9-.5-4.1-.3 1.5 0-.8 .4-1.9-.1-3.2-1.3 1.4-1.3-1.2-3.2-3-1.8 1.4-4-1.2-3.2 .4-1.5-.4-3.8 1.5-1.5-.7-2.6 .8-2.3 1.5-2.2-.5-3.8 1.7 1.6-.5 2.3 1.5 1.2 1.6 5.2 .8 5.3-1.2 2.2-.4 0-.9 1-1.4-.3-1.9-1.3-.6-1.4-.9-3.1 1.5-2.5-.1-.2 3.3 .4 .2 3.8 2 3-3.8-.1-1.2 .9 1.3 .8-2.1-.5-.6-2.7-2.6-.6-2-2.3 1.1-2-2.6-1.9-.5-3.4-.3-3.1-1.9-1.3 1.5-1.4 1.9 .1-.1-.8 1.9 .4 1.7 1.3 2.3 2.8-.4 2.8-.1 1.5 .5 1.3 .9 4-1.7 1.9-1.8 1.5 1 2.3 1.1-.5-1.2-2.2-3-.5-1.7-2-1.8-2.3-.8-2-.7-.6-1.6 1.4 .1 4.6-.1 3 .4 1.2 .2 3.1 1.1 3.1-.2 1.8 1.4 1.8 1.1 2.2 1-1.1 3.7-1 1-2.4 1.3-2.4-.7-2.1 .9-1.7 .3-3.7-1-1.9-1.7-1.4-.7-2.5-1.1-3.4-1 .6-1.3-1.1-.7-.6 0-3.1-2.1 1.9-1.8 1.1-1.1 3 .4 2.3-1.9 1.8 1.1 3.3 1.2 1.4 1.8 .8 .2 2 0 1 1.1 1.7 3.5 2.4-.4 .6 .2 3.2-.6 5.2 1.7 3.6-1.2 0-.6 1.7-.2 1.4-.2 4.3-.4 .4 .1 2.8 2.5 1.4 .1 3.1 .4 3.1 2.5 1.3-.7 1.9 1.3 2.8-.4 .7 1.8 .7 1.7 2 .4 1.4 1.5-1.6 1.2-2.3 .3-.3 1.4 2.9 1.1 0 2.6 1.2 2.3 .8 1.8-.6 1.2 .4 2.5 0 2.2 1-.9-.3 1.5 .8 .5 2.1 .9 1.7 1.6 1.8 .8 3.7-1.6 2.4-.8 2.6-.7 1.2-1.7 2-.6 2.6-1.8-.3-3.4 1.3-.8 .5-.6-.3-.8-1.4-1.2-3.2-1.6-2.9-.2-3.4 1.8-1.1-.1-2.6 .8-2.4 2.4-2.9 .9-1.3 0-.8 1.9 .9 .5-.9 1.5 .9-1.3 3.9 2.5 2.3 1 .2 1.4M746.1 567.2l-2.5 1.5-1.5 1.4-.3 2.4 0 .2-.3 2.6-.5 .9 1.1 1.6-.8 0-.4 3 0 2.7 1.4 1.8 1.4 .1 0 .6 .5 1.7-2.7 2.4-2.1 .1 1.8 1.9 1.2 .7 4 .3 3 1.5 2 .3 2.5 .5 3.8 .9 2.2-.6 2.1-.1 .2 1.5 2.3-.4 3 .3 2.9 1.9 3.6-.9 2.1 .3 3.9 .7 1.2 .2 3.6-.7 1.5 .5 1.7 .1 3.6 .8-.4-1.1 2.2 .3 3.1 .8 3.1 2.8 4.2-1.2 2 .2 .5-1.5 2.5-.9 1.7-3.4 2.6-.3 1.2-1-.1-.6-.2-1.5 .7 .2 3.1-1.1 2.8-1.7 3-.2 3.6 .6 4.2-1 .3 3.5 1.6 1.8 .1-.6 1.7 1.4 2.1 1.4 .9 1.4 1.3 1.8 .7 1.3-1.4 1.5 0 .7 .2 1.5-.9 .7-1.5 2.6-1.7 1.9-.9-.8-3.3-1.6-1.1 0-3.1 1.1-4 .5-2.2 1.7-1.1 1-2.7-1.1 1.3-.1-1.6 3.6-1.2 .6 1.7 2.5 2.2-1.1 2.9 .7 .1-.2-1.4-1.1 .3-1.9-2.6-2.9-.8-.6-2.2-.7-2.5 1.6-3.4-1-1.5-.6-.8-1.3-3.9-2.2-.8-2-3.3-.7-3.4 2.1-.3-.7-3.2 .4-3-1.6-2.4 1.4-3.5 .2-2.2 1.1-3.7 2-.8 1.1-3.7 .2-2.9-.1-1.6 2.1-2.2 .5-2.2 1.7-2.6-2.4-.6-1.6-3.4 1.3 .3-2 2.9-1.8 3.3 .2 0 .1 .2 2.2-4.2 1.6-2.8 0-1.7-2.4-.9 .8-.6-2.1 1.8-1.9 3-2.2 1.9-.4 .8 .5 .2-3.6 1.9 1 2.9-2-.1-2.5 2-1.9-.6-2.3 .2-1.5 0-1.7 .4-2.5 1.7-1.5-3.1-1.2 .4-1.6-.2 1.3-.1-2-.1-2.8 2.5-.8 2.6-1 3.8 1.6 .5 1.5-1 0-1.3 1.3-.9 2.4-3 0-4 .5-2.9-.7-.6-1.3-2-1.2 .8-1.7 1.7 0 2.7-1.7 3.6-.4 1.9 2.9 2.5 .7 .1 1.9-2.7 1.4-.4-.1-1.3 .4-3.4 1.6-1.9 1-1.4 1.7-3-1.8-.6 .9-4.4 2.5-2.7 .2-3.9 1-5.5-.1 1.1-2.2-.3-1.3 2.7-2.5 1.5-1.9 3.9-.5 3.2-.5 .5-2.1 1.6-1.1 2 .1 2.6-.9 .8-2.2M873.9 650l1.4 1.5 2.3-1.5 .9 3.4-.2 1.8-4.3-.3-3.2 .7-2.5-.4-4.5 .5-1.1-1.1-.6 .4-1.4 .8-3.8-.1-3.1-1.1-2.1 1.1-3 2.5-1.1 1.5-2 .4 .6 2.5 1.9-3 4-.6 1.9 0 .8-.9 2.1-.6 1.4-.2 .5-2.7 1.1-.3 2.1-4.4 2.3-.6 1.1 .6 2.1-.3 1.5-1.4 3.9 2 1.8 1.6-.1 .6-.3 4-.5 2.2-4.2-1.8-2.2-.1-1 1.1-3.3-1.1-3.5 .1-3.5-2.8-1.1 .2 .5 .4 .1-1.4-1-3.5 1.7-1.2-.1-1 2.9-2.1 .5-1.9 1.6-1.5-1.8 .6 .9-1.8-.8-2.5-.3-1.8-.4-1.5 3.6-.6 2.2 0 3.6-1.6 3.6 3 .6 .4 1.4 .4 .1 .4-3.2 .9-.8 1.5-2.3 1-3 1.1-2.4 1.4-2 1.1-2.2 .5-2.3 .8-2.8 .4-3.6-.7-1.1-.8-3.1-3.4-1.1-2.1-.1 .6 2-.7 .8-2.7 .7-2.2-.2-.4 3.3 0 2.5 2.8 3.4-.6 .6 2.1-2.7-.5-3.2 .4-1.9-1.1-2.4-1-1.1-2.1 .6-2.2-1.1-2.3 3.1-2 3.3-.2 1.7-.2 .5 2.6 1.8 1.7-.4 .3 .3 2.3-4.7 .2-1.6 .3-2.9 1.8-2.8-.3-3.1-1.5-.5 .3-.6-2.3-1.5-1.2-1.8-1.4-2.3 .4-3-2.4-2.2 0-2.7-.6-.2-1.9-.8-2.3-.5-.8-.6-2 3.3-.8 .6-.2 3.1-2.1 2.2 1.7 2.2 1.3-2.6 1.4-.2 1.2-3.9 .1 .2-1-1.1-1.6 1.5-1.2 .5-.6 2.5 .7 2.1 2 .7 1.2-.2-.6 .5 2 2.1 3.4-1.2 .7 1.1 3.6 .8 1 1.2 2.8 .9 .5-1.8 2-2.3 .1-2.6-.1-1.3 1.5-2.1-1.4-1.9-1-4.5 .1-.9-2.6-.1-1.9 3.4 .5 2.4-.3 4-.1 1.6 0 .6 1.9-3.3 2.5-.5-.1-1.6-1.3-2.7-.9 1.5-1.5 1.6-2.5 2.4-1.2 .4-1 4.3 2.1 2.3 2.1 .5 .5-1 .1 1.3-1-2.5 3.4-2.3 2.8 .5 1.8-1.9 1.3 1.3 2-.3 1.2-1.5 .7-1.2 1.8 .4 1.5 5.2 .9 1.8 2.1 1.6-1 2.8 .3 2.7-.2 1-.7 4.6 1.4 .6 .4 .7-1.9 1.3-4.1M869.6 595.6l.2-.7-1.1-2.6-.4-1.2-.2-1 .6-3.4-2.2-2.1-2.4 1.7-1.8-1.5 .1-.5-2.5-1.3-2.5-2.2-.4-1-1.6-1.3-1 .1-2-2.7-1.3-.2 1.1-1.8 3.7-1 2.4-1 2.6-1.2 1.3 .7 3 .6-.2 .6 1.2 1 .9 .4 .7 1.8 3 2.3 .4 2.2 2.4 2.1 .6 1.1 .4 1.2-1.8-.5-1.2 1.7-.8 1.7-.7 2.7-2.7 1.5-2.8 2.3-1.5-1.8-2.7 1.5-.8 1.2 .6 1.9 .4 1.7-.6-.6 3.1 3 1.7 2.4 0 .7 1.4 .2 1.7 .6-1.4 2.4-.2 .8 .1 1.7 .9-.1-1.3 2.4 1.3 1.8 3.2 3.5 1.6 1.4 1.6 2.2 3.4 .7 2.2 .8 1.7 .2 2.3-.9 2-1.6 .8-.9 2.3-3.8 1.4-1.4 .6-1 2.8-.4 .1-1.3 2.9-1.3 2.2-1.8 1.8-.2-.5-.7 1.7-.5 1.2-2.5-.2-2.6-1-.8-2.6-.9-1.6-.6-2.1-.4-.9-1.1-3.7-.8-1.4 .3-2.3-.4-2.3 2.2-1.2 1.4-1.2 1.7 .1 2.4 1.4-.3 3.1 .1 4.1 1.1 1.6-.3 1.1 .1 .7-3.7-3.4-1.1-3.8-.9-3.2 .6-2.2-.9 .7 2.3-3.9 3.8 .7-.2-2 1-2.5-.6-.9 1.9-1.1 1.1-3 2.1-2 2 .3 1.5-.7-.1-4.3 .9-2.6 1.5-3.4-1.9-2.6-1-.4-2-1.4-2 0 .4 2.5-1.9 3.1-1.6 1.8-.3 1.8-.8 2.2 0 1.3-2.4-.4-1.2 2.2-1.6 1.7-3 3.3-.6 1.3 1.6 1.6 .3 4.8-1 2.9-.7 1.8-.8 2.5-2 3.4-.8 1.7-.5 2.2 .1 3.2 .9 2.2 2.1 2.4-1.3-.7 1.3-.6 1.3-.8 2.5-.9 1.3-.2 1 0 1.6 .5 2.8-1.5 1.1 0 1.5-.8 1.6-3.4 1-4.6 .1 1 1.9-.9 1.5-.9 .6-2.5-.2-2.1 .9-.9 1.7-2.9 1-3.1 1-3.4-.9-.6 .9 .6-.5-5.5-1.7-.4-1.8-1.2-2.3-.6 .3-1.7-2.1 2.7-.3 .5-.7-.4-3 3.5-.9 1.2 .1-.5-1.3-3-1.9-.5-2.2-4.8-.9-3.8-1-1.2 1.1-1.6-.1-5 2-1.5 1-4.2-.4-2.2-1.1-1.6-.2-1.6 1.8-2.7 .1-2 2.2M762 555.4l1-.9 3.1-.4 2.4-1.3 1.1-2 3.8-.4 2.1 1.9 1.6-.6 4.5 1.7 1 0 1.9 .4 2.8-.1 2.5 .6 4.7 0 3.6 .8 .7-1.5 .1 2.2 4.5 .8 2.7-.5 1.2 .2 2.6 .1-2 1 1.9 2.3-.3 .9-2.2 2.5-.8 2.9-.4 .5-1 .3-4.3-.2-1.6-3 .1 .2 .4 .3 .8-1.9 3.2-1.9 3 1.3 1.2-1.8 4.2 1.5-1.7 1.2-.6 1.3-1.3 1.4-.7 .9-3.2 .6-1.1-.8-3.4-1.9-2.8 .6-3.2-1.2-1.2 0-3.3 1.1-1.7 1.2-3.9 .8-3.8 .5 .5 .7 1.2 0 .5 2.8 2.2 .3 2.2 1.5 2.2 .9 0-.3 3.4 .8 1.9-1.6 .1-1.5 .3 .1-2-2.5-1.2-2.8-2.5 .5-.1-.9-2.3 .9-3.3 .5-1.3-1.3-3.6-1.3-2.9-.7-3-1.2 0 .2-.8-1.2-2.6 .4-.9-2.3-2-.8 .3-2.2 .1-2.2-.8-.8 .4-1-.8-1.4 .8-4.1 .6-.9 .2-1.5 1.1-.8 1.5-.7-2.3-2.4 1.1-1.1-1.4-.7-1.2-2.1-3.7 .7-1.4-.5-3.1 3.7-.6 .9 4.5 .6 4.1 .2 .8-.2 1-.9 .3-1.4-1.4-1.3-1.4-1.8-1.7-1.8-1.1-3.2 1.4-1.6 2.1 .3 3.9 3.3 1.9 .5 .8-.5 2.8 .2 4.2 .4 3.1-1.1 1.9 1.1 2.7 1.7 1.8 .6 1.7 .9-1.1 1.9 3.6 1.9 .8 .2 1.8 .6 1.7 2.3 2 4.3 1.1 .3 1.1 .8 1.6 1.1-1.4 .2-.9 1.4-4.9 2-1.3 .5-1.1 .5-1.9 1.2-2.4 .4-1.4-.7-1.3 2-3.5-.4-2.9 1.5-3.7 .5 0 1.8 1.3 1.5 .8 1.9 .4 1.9 2.4 1.2 1.9 2 1.9 .6 1 1.2 2.9 .1 .6 2.7 1 .3 .8 1.9 1 2.6 .2 .9 2 1 1.2 1.2-4.2 .5-3.1 .2-2.2 2.4-2.1 1.6-2.3 .1-1.3 1.3-1.7-.6-1.5 .5-2.7-.9-3.2-2.4-3.9-2.1-.9-.9-1.6 .5-3.6 .7-1.6 1.3 .8 2.2 1.3 1.5 .5 .3 2.4 .9 2.8-.9 3.1-.5-1-1.3-1.6-.9 .1-1.5-1.1 .5-1.7-2-2.7-2.2-2.4-.4-4.6 2.1-.8 1.8-2-.7-5.2-.2-2.7-.1M725.6 619.9l2.8 1.6 2.1 .7 1.1 2.2 4-.7-.3-2.2 4 .4 3.3-1.5 2.9-.3 .3-.2 5.5-1.1 1.9-2.2-.2-2.3 2.5 .8 1.1-.8 2.4 .2 3.8 1.1 1.8-.1 3.4 .5 2.4 2.5 .8-1.1 1 1 4.2-1.2 1 .1 2.9 1 2.2 .1 1.8 2.7 1 1.4 .1 3.6-1.3 1.3-1.6 1.8-1.1-.2-4.2-.8-1.9-3.3-.5-1.3-.1-.4 .6-3.1 2.1 1.6 3.1-.3 1.6-.1 1.7 4.3 1.2 3.5 2.6-1.8-2 .8-3.8 2.2-.7 1.4-.9 1-2.5 .9-2.7 .1-.1 1.8-2.5 .2-2.4 2.9 3.5-.2 3.6 .6 1.7-3.6 2.1-1-2.7-.4-2.7-.4-4.1 1.9-1 1.7 0 2 .6 2.5 2.1 .8 2.6 1.2 .9 2.7 1.2-1 1.2 1.4-.4 1.2 0 2.2 1.7 .2-3 2.1-1.9 1.6-.4 1.7-2.2 1.5-.7 1.2-2.9-.3-2.4 .8-1.4-.4-2.4 1.1-2.6-1.3-4.2 1.1-.8 2.1 0 1.5-1.1 3.8 2.2 1.8 2.2-1.1 1.8 0 1.8-.6 3.3 1.3 3 0 4.2-3.4 3-.3 3.6-1.1 1.8 .5 3-.6 .6-.6 .8-1.5 2.1-2.8-1.9-3-.7-1.8-.5-2-.7 0-1.9 .4-2.7-.3-.5-1.1-3.1-1.8-2.4 1.9-4.4-.1-2.2 .4-.5 1.5-2.1-1.6-2.8-1.3-2.6 .2-1.4-1-3.5-1.1-2.2 .1-2.4-.7-3.3-.1-2.7 .9 1 2 2.1 2.8 2.1 3.6 3.9 .1 1.6-1 .8-1.6 .5-1.4 .2-3.5 1.4-1.8-2.8-.7-.6 .1-1.7-2.3-2.9-2.8-2.1-1.8-1.1-1.2-2.5-.4-.9-2.5 2.4 1 4.3-2.4 1.5-1.3 2.6 .8 1.2-1.1 3.9-.7 3.2 2 2.7-.9 2.2-1.4 1.3-1.8 1.5 1 2.1 .7 3.8 1.4 1.3 .8 3.4 .3 1.1 .3 2.1-.9 4-.7 1.4-.4 1-.6 2.3-.5 .9-2.7-.1-2.6-1-1.4-2.5-2-2-1.8-3.9 1.9-.1 0-.8 4.2-1.3 .8-2.1 .1-2.2-.2-2.1 1.4-3.7 2.9-.8 1-1.5-1-3.9 3.4-.3 .5 1.2 .2 1.4 1.4 1.1 .8-1.1 1.7 1.3 .2 1.4 3.5 2.3 .2 2 .6 2.6-.7-.6-2.3-.4-.8-.5-2.2" stroke="#4c9acb" stroke-width="1.600" stroke-opacity="0.860"/>
<path d="M491.4 464.6l.8-1.7 .4-1.1-1.4-1.1-2.2 .3-1.4 .8 1 1.3 1.1 1.1 1.5 .7 1.5 1.1 1.9 .6 2.5 .6 1.7-.2 1.6-1.3 1.8-.2 2-.5 2.3-.5 2.1 0 .5 1-1.8 1.1-2.1-.8 0-1.4 2.2-.5 1.7 .8-.6 1.4-1.8 .5-1.6-1.3 .7-1.4 .7-1.1 1.2-1.3 .7-1.3-.4-1.3-2.6 .1-1.4 .9-1.9 .9-1.9 .6-1.2 1.2 1 1.3 1 .9 1.2 1.4 1.5 .7 2 .5 2.7-.8 1.5-.9 1.9-.9 0-1.3 .2-1.1-1-.7-1.6-.8-2.6-.5-.6 1.4 1.1 1.1 2.3-.1 1.3-1.2 .7-1.5 .8-1.1 2.3 .1 2 1.1-.5 1.5-2.1 0-1.2-.5-1.5-1.2-.6-1 .6-1.8 1-1.1 2.1-.5 1.8-.4 2 .2 .9 1.2-1.1 1-1.9-.1-1.9-.4-1-.6 0-1.3 .7-1.5-.2-1 2-.8 1.8 .1-.7 1.2-.6 1.3 .6 .9 1.6 1.2 1.3 .9 2-.7 .1-.6-2-1.3-2.4 .5-1.4-.7-1.5-1.5-.9-1.3-2-.8-.4-1.3 1.4-.9 2.5 .5-.4 1.5-.7 1.6-1.7 .9-2.2 .1-1.8 .4-1.6-1-1.8-1.5-2.6 0-.9-1.4 .4-1 .8-.9-.4-1.4-1.1-1.3-.9-1.5-1.9 .4-2.6-.1-2.1-.1 1.4-.7 1.9-.1 2.5-.2 2.3 1 1.4 .2 .4 1.7 1.7 .2 2.1 .4 2.3 .2 2-.7 2.5 .3 1.9-.1 2.4 .2 1.9 0 2 .6 1.6 .9-.4 1.6-2.6 0-.8-1.1-.2-2.2-.7-1.1-2.4-.2-2-1.1-1.9-.2 1.3-1.2 2.3-.6 2.3 .3 2.1 .7 2 1.3 1.4 .5 2.5 .5 2.1 1-.6 1.4 .6 1.4-.8 1.3-2.5 .2-1.7-1.2-2.5 .3-1.5-.5-2.4 .2-1.2 1-.5 .9-1 1.1-2.3 .3-2.3-.5-2.2-.1-.7-.9-.5-1.5 .3-1.8 2-1.1 2-.5 1.5-1.2 .3-.8 2.5 .3 2.2 .4 2.1-.5 1.8-.2 1.9 .1 2.2 .3 2.2-.1 2.6 .2 2 0 2.1 0 2.1 1.1 .9 .7 1.1 1.4 .5 1.4 0 1.6-2.1 .1-2.4 .1-2.1-.7-.5-1.2-.6-1.6-1.5-1.4-1.7-.4-2.3 0-2-.5-2.4 .5-.5 1.1 .7 1.3 1 1.3 2.2 .1 2.2 1 2-.6 2.1-1.3 1.6-.9-.2-1.6-1.9-.7-2-.2-2.2 .2-1.9-.8-1.7 0-1.8 .7-2 0-2.3 .9-.3 1.1 .7 1.5 .6 1 1.4 1.3 2.1 .2 1.6-.9-.3-.9 1.7-1.6 2.1-.4 1.5-.8 2.2 .5 1.1 .4 2.5 .1-.3 1.7 .1 1.3-2 .4-2.5-.2-1.5-1 .4-1.1 1.3-1.1 2-.7 1.8 1.1 1.6 1.4 .7 1.6 1.1 1.5 1 .6 .4 1.5 1.5 1.1 1.9 .2 1.7 1.2-.5 1.2-.9 .7-1.7 .6-1.8-.7-.7-1.1-1.1-.8 .3-1.9 2.2 0 1 1.5 .2 .8-1.8 1.6-1.2 .7-.5 1.4 1.1 1.2 2.1 .1 1.2-1.1-.1-1.5 1.7-.4 1.7-1 1.7-1 1.8-.5 2.2-1.2-1.8-1.4-1.9 .3-2.2 .6-1 1.2-.4 .5 .5 1.8-1.8 1.1-1.9 .7-2.2-.2-2.5-.7-.8-1.8 2-.9 1.6 .8 1.3 .8-1.1 .8-.4 1.4-1 1.6-1.5 1.1-1.8 1.1-1.7 1-2.7-.5-.1-1.1M486.5 451.9l-.3-1.4-.5-1.1-1-1.1 .8-1.3 1.5-.9 1.4-1.4 1.7-.8 2.2 0 2.4-.5 2.3 .5 1.8 .8 .7 1.7 .5 .8 .8 1.6 1.4 .7 2.5 .7 1.6 .3 2.1 1 2.1-1.2 1.6-.7 2.1-.5 1.2-.7 .2-1.8-.6-.9 .1-.9 1.8-.9 2.5-.5 1.7 .6 1.3 1 1.2 1.9 1.8 .6 1.8 .6 1.9 .3 1.6-.6-1-.7-1.7-1.2-1.9-.2-2.3-.5-1.8 .1-2.2 .2-2.2-.2-2.3-.1-1.9 .6-1.9 .5-2-.3-.2-1.2 1.8 .4 2.3 .9-.4 .6-1.8 .9-1.8 .5-2.1 .1-2.5 .6-2-.2-2.5-.8-1.9-.3-.7-1-.3-1.4-.1-.9-2.4-.5-2.3 .9-1.3 1.1 .6 1 2.1 .8 1.4 1.2 1.3 .8 2.3 .9 1.4 .5 2.2 .1 1.7-.7 .7-1.2-1.2-1-1.7 .2-.6 1.7 1.6 .5 2-.7 1.3-1.2 1.4-1.2 2-.5 2.1 .7 2.3-.4 2.2 0 2.4-.1 1.7-1.4-1.6-1.2-2.2-.6-2.1-.1-2.4-.6-1.4 .2-2.3-.5-2.4 .7-1.7 .7-2.2 .8-1.9 .5-2.1 .8-2 1-2 .3-1.9 .9-1.3 .7-.6 1.3-1.3 1.6-.2 1.1 .2 1.5 .6 1.2 1.6 .6 1.9 .5 1.1 1.5-1.6 1.1-2.4-.6-.8-1 .5-1.5 2-1 2.3-.2 1.8 .7 .2 1-.5 1.1-2.2 .5-1.5 .3-2 .5-1.9 .2-1.2-1 .7-1 1-1.3 1.1-1.1-.3-1.4-1.4-1.2-1-1.5-.9-.9 .1-1.2 .4-1.3 1.4-.8 1.7-1.7 1.5-.4 2.5-.6 2.6-.5 1.5-.7 1.9-.5 2-.1 2.2-.1 1.8 1.1 1.9 .6 2.2 .1 2.3 0 2.5 .1 2-.3 2 .2 1.8-.2 2.2 .1 2.2 .7 1.8 1 2.3 .1 1.9 .9 1.2 .8-1.3 1.2-1.6 1.2-1.4 .5-1.4 .9-1.5 .3-1.4 1-2 1.3-.8 1.4 .1 1.3 1.1 1.2 .2 1.4 0 1.2-1.8 1.3-.5 1-.7 .8-.2 1.5 .2 1.6 0 .8 2.2 .7 1.8-.5 .5-1.3-1.7-.5-2.2-.3-1.8 .1-2.8-.3-1.6 .4-.8 .8 1.9 1.1 2.3 .2 1.6-.5 1.9-.4 1.8-.8 0-1.5-1.5-1-1.9-1.4-2.1-.2-1.6 .6-1.1 1 .5 1.1 1.2 1.7 1.8-.3 1.7-.7-.6-1.5-2.4-.5-1.8 1.3 0 1.6 .8 .8 .5 1.1 .3 1.1 1.6 1.3 .3 1.3-1.1-1.3-1.5-1.5-1.1-.6-2.3-.4-1.3-.8 .2-1.7 .7-1 1.4-1.5 1.2-1 .7-.7 1.6-1.1-.7-1.3-1.1-1.3-1.5-.7-1.7-.4-1.7-.4-1.7-.4-2 .4-.4 1.7-.6 1.2-1.8 .9-1.8 .9-1.9 .6-1.2 1.2-1.3 .9-1.5 1.3-.9 1 1.9 .6 1.6 .8 2.3 .2 1.7 .6 1.8 .7 2.1 1.3-1.5 1.2-1.9 .5-2 0-2.7-.1-2.1-.7-2.1-1-1.2-1-.8-1.2 .5-.9 1-1.1 2.5-.4 2.3 .2 1.1 1.2 1 1.4 2.1 1.2 2.2-.6 2.3 .2 2.2-.2 1.4-.4 2 0 1.2 2.1-.1 1.3-2.2 0-2.1-1-1.4-1.3-1.6-1.1-2.2-.4-2.2-.1-2.3-.5-.1-.9 .1-1 .8-1.4 1.3-.9 2.5-.2 2.2-.2 .1 1.2-.1 1.5-1.3 .7-1.9 .5-1.5 .6 .1 1.3 2.1 .7" stroke="#ff9f4a" stroke-width="1.600" stroke-opacity="0.860"/>
<path d="M539.1 483.6l.2 1.6-1.8 0-1.8 1.7-2.1 1.1-3.1-1.3-2.1 .2-2.7-.6-1.3-2.3-3.3 .2-2.6 1.7-2.2-1.1-2.2 1.3-2.2-1.2-1.7 .3-2.4-1.2-3.3-.5-1.2-.5-.4-1.2 2.2-2.9-1.6-2.7-3.3-1-2.6 1-2.8 1.6-.8 2.4 3.5 2.6 2.4-1.1 1.5-1.5 4.1 1 2-.3 2.3 .5 4.8-2.1 .6-.8-1.3-.4-1.7-1.4-1.8 .9-3-1.5-3.4-.8 .4-3.7-1.9-.3-.1-.9 3.1-2.3 3.4 .1 2.9 1.5-.3 2.3-2.3-.4-2.5-.6-2-.1 3.3-1 1.9-.9 .7 2.3-.4 1.6 .8 .7-2.2 2.2-3.1-1.3-.9 1.6-2.7-1.1-3.5 .2-2.9-.7 .3-.5-.8-2.8 2.4-.1 3.5-2.5 1.8 .9 3.3 .5 1.3 1.9 0 3.1 .7 2.1 1.3 .9 1.5-.5 4.5-.8 2.6 0 2.8-.8 1.6 2 4.6-.9 1.6 1.9 3.5 1.4 1.9 .7 2.9-2.9-.1-1.7-1.5-.5-2.5-.4-2.5 1.6-1.5 1.2-3.3-.4-2.7 .5-1.3-.1-2.6-.8 .6-2.8 1-.5 3.4 1.1 1.3 3-.3-1.2-2.2-.2-2.6-.4-2.4 0-1.8 .6-3.1 1.4-3.9-2.2-1.7 2.2-1.9 1.3-2.9 .8-.3 3.4-.8-.3 1.3 .9 .2 2.1 1.7-1.1 1.2-1 2.5 .1 3.7 .8 3.4-.8 1-1.7 3.3-.4-2.3-2.1-.4 .2-.5-2.1-1.6-1.8-2.4 .6-1-2.8 1-.3 1.3-2.9 4.2-2.2 .5-.2 .9 .4 .4 1.5 1.2 3-1.6 .8-2.6 .4-1.5-.2-2.3-1.4-3.6 2-1.8-3-1.5 .7-2.3-1.3-3.3 2.1-1.5 2 1.2 2.9 2.9 0 3.2-.2-.6-3.1 1.2-.8-.6-.9-.7-1.5 2.2 1.1 1.3 .5 3.7-3.1 3.1 1.1 .2-.1-.9 2.5 .2 .8-2.4-1-3.3-2.2-2.3 .4-.5-.4-3.1-.7 0-1.8-2.2-.1-2.5-.6-3.1-.2-1.6 .3-.7-.4-2.8 1.3 .7 3.2 .8 1.3 1.1 1.4 .9 2.7 1.4-2.4 5.1 1.3 4.7 .1-.9-.4 2.7-3.1 .8 1.2 3.2-2.1 1.8 .9 1.6 1.9-1.1 1.7M552.2 479.2l-.4 1.5-3.3-1-3-1-1.1-2.9-.6-1.5 1.3-1.3 2.6-1.1-2.1-1.6 3.5-1.6 1.1-1.1 2.8-.4-.1 3.5 2.2 1.6 3.2-.1 1.9-2.9-1.8 .5-3.7 .8-3.1 .3-3.7-.7-3.8-1-2.6 1.1-1.7-.4-.5 1.5-2.8-1.6-.6-2.8 2.4 .6 3.3 .5 1.9 1.4 2.7-2.5 1.8 .3 .4 2.5 2.9-.3 .5 4.1-1 2.1-2.7 2.3-3.6 1.1-1-1-2.3-2.7 .5-2.4 1.4-1.9 3 1.5 3.2-.2 1.7 3.5 2.8-.8 2.9 1.1-2.1 2.4-1.8 2.2 1.5-1.2-2.2 2-.3 2.6 .4 .3-1.5 .5-1.5 2.5-2.3-.6-2.5 2.7-1.8 0-3.9 .3-2.9 .3-1.8-2.9-2.3 .6 .9-1.7-1.9-1.1 .5-4.2-1-1.8-.6-2.5 .9-1.3 3.5 .5 3.5 .9 2.8 .1 1.4 .6 3.7 .7 1.7-.8 1.7 2.2 3.5 1.4 4-2.6-2.2 2.6-2.7 1.6 .8 1.3-2.9 1.6-2.2-.3-2-.1-1.9 1.6-3.6-1.4-3.6-.8-3.4 .6-1.6-.9-1 1-5.1-.1-.8 .9-5-.8-.5-.3-1-.5-2.4 .6-2.6 2.5-2.2 .9-4.3 .8-1.4 .7-2.1-1.2-3.6-.2-1.9 .1-3.4-.5-2.8-2.2-1.7-1.4-.5-1.6 1-1.5 2.4-3.3-1.5 0-.8-2.8 .2-.8-1-1.3 2.3-.8 3.6-.6 2.3-.2 .9-.1 3.1-1.3 1.2-2.2 1.6-1.3 1.6 .6 2.6 .5 4.4 .8 2.7 3 5.1-.7 2.1-1.4-.8 1 .4 2 .3 1.8 1.3 .8 3.3 .8 .5 1 .1-2.7-3-1.3-1.8-1.3-.4 1.2 .3 3.4-1.5-.9 .7 2.4-.4 1.3-.8 .8-.6 1.3 .9 3 .3 .3 3.5 .5 .1-2 .6-1.2 1.5-1.4 .6-1.4 .7-.9-2.9-.2-2.9 1-4.4 .5-2.3 .9-1.1-1.1-2.9-.7-2.2 .1-.9 .6-2.4-1.1-2.3-1.3-.5-1.1 2.3-2.4 3.6-1.5 1.9-1.1 2.8 1.6-.8 2.3 3.5 .9-.7 2.1 3.1 1.2 4 .6 2.2 .6 1.5 0 .2 1.1 2.3 .9 2.5-.4 3.3-.3 1.2-2 2.9-1" stroke="#52b152" stroke-width="1.600" stroke-opacity="0.860"/>
<path d="M515.1 454.5l1.8-1.2 3.6-2.4 .4-.5 1.8-.4 2.2-1.5-.5-.2 .8-1.7 2-1.9-1.1-3.6-2.3-1.1 .1-.9-.4-1.8-1.8-.2-2-1-2.3 2.4 .3 1.6-.6 2.4-.5 2.3 2 .6 1 1.6-.1 .6 1.1 .6 5.1-.2 1.8-.1 2.6 1.7 2.4-.4 1.6-2.1 2.7 .2 1.4-1.5 .4-.2 2.3-.4 2.3-.9-.5 1.2 .4 2.9-2.6 .2-3 .9-1.3 .7-3.2 1.3-4.1 1.4-1.9-.5-2.6-2.1-.4 .1-.3-3.1 1.4-1.4 2.7 .5 1.7 0 .1 1.6 2.1 .4 .8 2.3-.3 1.8-2.2-.5-4.7-1.4-2-.8-1.9-1.6-1.5-1.7 2-1.8 2.2-.8 1.2-.6 3.7 2.1 .9 2.2 .6-.4-1.4 1.8-2.9 2-1.9-2.9-2.1-1.4-.8-1.9-.1-1.6 2.3 .7 2.5-.5 3-2.3 4.1 2.7 1.8 1.1 .2 .2 1.3 3.4 .3 3.8 .9 .9 1.4-1.2 2.4-.7 1.9 .2 2.3-2.8-1.4-1.6-.7-1.7-.7-.3-5.1-1.5-2.7 .3-1.4-.9-2.8 2.8-1.6 1-1.3 .2-1.6 1.2 1 1.6-.4 .8-.9 3.2-2 1 .2 1.6-1.1 1.4-2.5 .6-2.9-.5-3.2-.7-2.5-.7-2-.4-.2-1.5 .2-.8-1.2-2.4 .7-1.8-.5-3.6 1.2-.5 2.5 .3 0-1.1 1.8-.5 2.8-.1 1.2-.8 2.7 1.2-.4-.8 2.7 .1 2.6 1 1.7 2 .7 2.7 2.1 2.2 3.6 1.2 .6 2-.8-.4 2.2-1 2.5 3.4 .8 2.4-.8 .9-2.2 1.5-2 .9-2.7-.4-2.5-.7 1.2-2.5 .1 .8 4.7-1.5 1 1 2.6 2 .5-1.7 2.5-1.1-.1-3.5 2.8-1.6 0 .2 .2-2.5-1.2 .2-2.8-.3-.6-2.8-.2-1.2-1.5-1.9-1.3-.4-4.6-.1-.7 1.2-.4 1.7 .2-1 1.2 2.1 .9 3.9 1.2 1.2-2.1 2.5 1.8 1.3-.6-.2-.9 1.5-1 3.1-.6 1.9M510.5 478.1l-3.6 .7-1.2 .6-1.4 3-1.7 2.1-.2 1.4-.3 1.4 2.6-.6 2.4-.8 1.1-1.6 2.5 .2 1.9-3.2 1.7 2 3.2 .9 1.1 .3 2.1-.4-2 .8-3.4 0-3.7 .5-1.3-2.4-3.2-.1-.8-.7-.2-1.2 .4-2.4 1.3-.8-1.6-.9 0-1.9-.1-3.7 .7-1.1 1.4-1.1 .8-1.3 1.9-.2 2.9 .1 2.3-2 1.1-.6 3.5-1 .8-1.2 .5 2.8 1.5-.3 2.4 .5 1.6 2.4 2.9 2.7 2.8 .6 1.6-1.7 4.8-.3 .6 .2 2.5 1.4 4.6-.9 2.7 .5 .2 2.5 1.8 1.3-.4 .3 1.3 1.6-1.3 2.1-.4 1.1-3.8 1 .2-.4-2.4 2.8-1.2 3.4-.8 .8-2.3 1.5-1.6 .4-2.2 .4-1.2 1.6-2.9-.8-1.2-1-3.2 .7-1.2-3.7-.3-1.6-.2-.2 3.4-2.8-.6-1.1 1.1-4.7 .8-1 1.7-.7 3 2.4 1.5-.9 2.4-1.6 2.8 .1 4.7 .6 1.1-.1 .4-.1 1.5-.9 1.1-.8 1-1.3 2.4-1.8 .8 .1-1.7-1.1-1.5-4.1-1.8 .4-3.2 .8-2.2 1.1-3.2-.7-2.7-.2-3.2-1.6-2.5-1.5-2.5 .7-2.7 2 0 .1-2 .8-3.2-.8-1.6-1.2-2.2 .6-3.3-1.7-.4 2.7-1.9-.9-1.4 2.6-2.3-.5 .6 2.4-2.3 2.2 .3 2.9-2.2 .3-1.7 2.9-.7 1.4-2-.7 1.6 2.1-.1 1.2-.3 1.9 3 .7 1.5 .4 3.7-.4 1.7-1.1 .8-2.7-.5 .2 2-2.1-1.2-1.2-2.9-.2-1.3-2-2-.8-1.7 .5-2.9-.2 .3-1.8-1.1-1.2 .4-2.2 1.7-.9 2.2-1.5 2.2-1.8 2.6-.5 2.2 1.9 1.2 2.4 .8 .6-.7 1.7-1.5 1.5-1 3.1-1.2 1.5-2.7 2.4-3.2 .2-.9-1.4-2.5 .3-2.9 1.8-1.1 .9-1.9 2.3-.6 .9-.9-.7-3.1-1.2-.8-1.5-3.1 .3-3.5-2.8-1.3-1.1-.9-.3 0-2.3-1.1-1-.6-.8-.7-.3-2.7-2.4-3.6-.2-3.1 1.1 3.7 1 .5 .5 .9 .8-.2 2.5 2.1 1.1 2.8-.8 2.4-2 5 0 1.9-1.1 .7-2.6 .4-2.3 .1-3-2.2 .5 1.1-1 .5 0-4.1 .2-2.9-.6-3-.8-2.2-.8-1.2 .7-1.3 1.4-2.5 2.1-3.1 1.4-2.3 1 .6 .8 1.9 2.3 1.3 1.6 3.7 1 1.8-.8 1.6 .3 2.6-1.2 2.1 .4 1.6-1.1-.8-3.1-1-.7-4.6 .8-2-1.3-3.1 .3-1.3 1.1-1.7 3.7-.2 .9 2.8 1.5-.3 2.8 1.3-1.4 1.8 2.8 .7-.5 1.7 2.5 2 .8 1.1 1.6 2.3 .4 3.3 .3 2.2-.6 3.1 1.5 3.1-1.4 2.6 .4 .8-1.2 3.5-1.4-1.1-3.3 1.8-.1 2.2-1.3 1.7-3.2 .5 .4 2-2.9 1.4-.3 2.2-1.3 2.3-.7 3.1 1.4 2.7 .5-.2-.5 .6 3.5-2.6 .5-3.2-.1-.1-2-.8-1.8 1.8-.3 4-1.5 1.4 1.8 1.1 .9 .2 3.7-1.3-1.1-3.6 1-2.4 .1-.8-1.5-1-1.1-.2-1 2.9-2.4 2 .5 2.6-.9 4.3 .3 .8-.3 1.6-3.2 2.4-.8 3.2 .1-3.7-2.8-.9-.3-3.4-.2-1.7 .1-2.7 1.8-4-.9-1.4 .3-3.7-1.1 1.5-.2 3.4-.9 1.6-.4 .8 .4 2.4 1.1 1.8 .7 4.1 1.9 2 1.2 1.5 1 .3-1.2 1.8 2.1 1.3 .3 3.1 .6 .6 1.5 2.5 2.1 2.7 1.7 2.5-.1 .5-2.3 1 1.6 2.6 .1 1.6-1.3 1.4-.6-1.6-4.3-.3 .8-.1-2.6 2.9-.7 1-2.1-1.1-1.1-4.4-.3-3.5 0-2.5 .3-4.2-.3-1.2 0M517.7 549l-1.1-1.4-2.7-.3-1.4-1.1-1-.7-.8-.9-2-2.4-3.3-3.6-2.6 3.6-2.4-.3-1 1 .4 2.8 3.6-.7 .4 2.2 4 .8 1.2 1-.4-3.3 0-.7-1.8-2.1-4.1-.5-1.4-.8-1.5 2.8 1.5 3.3 .4 0-.6 2.1 .3 2.6-2.3 2.7-.2-.5 .6 2.6-1.3 1.6 3.5 1.5-.6 2.1 2.5-.2 4.2 .8 3.5-3 1.6 .3 .5-2.8-1.4-3.6-2.3 0-.8-1.8-3.2 2.2-1.5 2.1-1.6 .7-.9 1.9 .8 1.5-1 1.7 2.8 1.4-2-.8-.3 2.6 .4 2.2-1.7 2.6 .1-.3 2.2 2.1 2.3 2.1-.4 .5 4.4 2.3 .8 1.1 1.8 1 2.6-.9 4.3-.3 3.3-.1 1.5 2.1 1.7-1.6 1.1-1.7 1.4-.4 .4-2.4 3.6-3.1-.1-1.2 .3-1.9 1.4-3.1 .6 1.1-1.5 .3-.7-2.2 .4-1.8-3.8-1.4-2.6 .4-1.4 1.2-3.2 1.7-1.3 .7-1.1 1.6 1.4-.2 2 1.9 1.6 1.2 3.3-.7 1.5-1.9 3.4-1.7 .8 .2 .1-1.8 2.6-.9 2.7 .2 3.3-2.3 2.2 2.8 0 1.9 .4 0-.2 1.4-4.1 1.4-1.9 2.6-1.9-2.4-3.2-.3-1.7-.6 .1-1.3 1.2-1.9-1.5 .5 2.6-1.4 .9-1.5 4.2-2.1 .3-1.6 0-1.1 4.4-1.6 1.8-1.8 1.7-.9 2.1-1.9 1.8-1.4 .6-.1 1.9-1.4 2.3 .2 1.9-1.2 1.3-2 1 0-.9-1.8-.6-2.5-.9-1.3-1.2-2.5-.4-.2-2.1-3.3-1-.3-3.4-.9-.8 1.5-3.7 0-2.4-2.1-.7 1.6-3.3 .4-1 .7-2.1 1.4-2.4-.4-.5 2.3-.4 2.5-.8 1.7 1.7 2.5-1.3 1.2-2.1 .3 1.2 1.4 .2 2.1 .1 .9 2.1 1.7 .2 2.2-1.5 1 1.7 0 1 1.6 .4 1.5 .3 4.7-2.8 2.3-1.3 1-2.2 0-.2 1.3-1.5 1.1-3.1 .6-2.1 1.2-.6 1.5-1.5 3.2-.3-.4 0 2.3 .4 1.9 .3 1 2.1 2.8 2.5-1.7 2.5 .7 2-.4 1.8 .5 2.6 .2 2.1 .1 2.2 .8 4.5 0 3.3-.6 2.4 .2 1.7-2.1M480.3 555.6l.8-.3 .8-3.3 .4-1.4 1.6-2.1-.4-.7-.3 .8-1-1.8-3-1-4.2-1.8-3.3 .7-.3-.9-1.3 0 2.6-2.2 2.4-.4 .9 .2 4-.9 1.1-.2 2.7 .8 4.9-1.3 1.5-1.6 1.2 3.4-1.7 .7 .6 3.3-1.2 .8-1.1 1.6-.9 .3 .4 1.8 1 1.7-1.7 2.6 .7 1.7 1.9 1 1.6 1.4-3.5 1.5-.3 .2-2.4 1.4-1.3 1.5-3.9 2.7 .2 1.4-.2 .3 1 3.6 .3-.3 1.7 1.5 1.2 1.8 4.8 .8 1.1-.6 4.6 2 2.1-1.4-.4-1.7 3.8-.8 2-1.3 2.5-1 1.3-2 1.4-.4 2.3-.1 3.1 1.4 2.7-.8 2.7 2.4-2-.9-3.1 2.4-2.4 .2-.8-3.1-1.7 .9 .5-2.3 1.3 .6 2.2-2.4 .8-.5 3.4 .8 1.1 2 .8 2.8-.1-1.1-1.1 2.3-1.6 1.2-3.3 1.2-1.8 1.4-1.3 1.6-3.9 .2 .5-1.9-.2-.5-2.3-2.5 1.7-.9-.2-2.4 .5 0-2.2-1.6 2.8-2.1 3.4-1.9 2.7 .2 .8-1.5 2.2 1 2-.1 .5 1.1 2.6 3 2.7 .7 2.3 .2 2.8-.3 2.3-.6 4.5 2.2-.3-.4 2.1 .9 .5 2.9 3.2 .4 2.6 1.9-.3 1.9 1.3 .6 1.7 .6-.3 2 3.4-.1 1 .2-1 1.8-3.9 .2-2.6-.5-2.2-1.3-2.3 .7-2.3 .2-2.2-1.3-2.1 .2-1.7 .4-2.6-2.7-.3-1.1-3.7-2.3-1.3-1 .2-.7 .4-2 .3-.7-.8 0-.3-3.4-.9-.2 1.3-.2 3.5-2.4 3 .4 1.4 .2 2.5-.1-.2 1.2-2.8 .1-2 1.9-3.2-2.1-1.4 .7 1.8-1.4 3.4-1.4 3.1-1 .2 .8 .9-1.1 4.4 2.5-.2 1.3 1.8 2 1.6 1.6 1.2-.4-1.6 3.1-1.6 2.8 .7-.3-2.1 .7-2.9-.7-1.9-1.1-3.1-.2-4.8 .9-1.5-1.5-2.8-.1-2.4-.1-2.6 .9-1.5-.9-3-1.6-2.7-1 0-.6-.2-2.6-2.9-2-.6-1.5-1.1 1.2-1.9-.9 1-.1-1.6-2.8-1.6-1.8-1.4-1.2-5.1-1.1-1.5-.3-3-1-3.5 .5M561.8 555.7l-2.3-1.3-2.5-1.4-1-1-2.1 .4-2.3 0-2.3-1.8 .3-.3 .5-3.4 1.9-2.2 .1-1.6 4.1 .2 1.7-1.8 3.2 2 .3 .2 1.5-1.1 .7-2.3-1-1.3 .5 0-1-3 .2-1.3-1.2-.3 .6-1.6-.5-2.6-.9-1.9-1.3-2.8-1.5 1.2-1.7-1.1-1.7 2.3-2 1.9 .9 .4-.8 1.1 1 .7 1.8 1.5 1.9 1.5 2.8 1.3 2.3-1.3-2.8-2.3-1.5-1.1-3.4-.2-2.1 1.7-1.7 .7-2.6 1.4-2.1 .6-2.5-.2-1.6 1.2-.6 3.1-1.6-.8-2.2 2.2-1.1 2.6 .8 2.2-.4 1.3 1.2 .7-1-2 4 2.4 2.8 1 2.5 .1 .9 1.3 2-2 2.7 .4 1.7 1 3.8-.4 2.3-.9 1.9-5.1 2.1-1.5-2.7-1.3 .2 1-2.6 .2 .3-.9-.5-2.7 1.1-2.5 .4 0 1.2-1.3-1-.8-.5-1.7-2.4-1.8-1.7 1.1-3.2 .2-2.7 .8-2.2-.3-4.1 .2-.8 2.1-.6 1.5-1.6 .3 1.7 1.5 2 1.6 .6 2.7 1.9 1.7 3.4-.4 1.8-1.7-1.2-1.1 .1-3.5 .3-1.1-.2-2.7-.3-.3-1.1-1.3 1-1.9-1.4-2.3-.5 .8-3.8-1.5-2.2 2.6-2.2 .3-1.3 .9-4.1-.5-2.6 .6-4 .5-1.4 .3-1.1-1-1.2-1.2-2.6 2-2.6 1.2-2.3 1.3-.6 2.8-2.6 1-3.5 .9-1.8-1.9-4.7 .6-.8 1-2.4 .6-3-.1-2 .5-2.7 .5-2.7 .4-2.7 .7-2 .6-4.1 .7-2.2 2.7-3.5 1.3-1.4 .1-2.6-1.3-2.3 .9 .2 1.3-2 .2-2.7 1.3-4.4 1.7 1.4 1.5 1.2 1.5 .4 .5 1.3 2.4 1.4 .7 1.2 .8 .7 1.1-2.6 1.8-2.2 3.1-1.2 2-.1-.1 2.5 2.2 .8 .1 2.5-.2 .6-.2 1.9 .9 2 .2 2.9-.6 3.4-.3 2.6 .4 4.6-.7 1 .1-.8-2.6-1.3-.9-4.3-1.6-3.3 1-2.4 1.2-.5 2.9 .6 0 3.9 1.9 1.1 1.1 4.9-2.5 .7 .3 2.1-1.1-.5 .7-.1-1.6-.9-2.5-.8-1.3-1.6-1.6 0-1.9-.3-3.5M561.7 570.8l-.8-1.5 3-3.3 .9-.4-3-1.9-.7-1.8-1.4-.2 1.4-2.3-1.8-1.6 0-.3-2.8-1.6-2.2-1.1-2.6 1.1-1.7-.2-2.7-1.6-.8-1.8-3.4-.7-2.8-1-2.1 1.3-1.1 2.8-2.1 3.1-2 .8-1.8-.6-.9 2.6-4.1-.3-2.5 .8 0 2.5-.4-.4-.3 1.4-1.9 2.8-2.3 .9-.2 3.2-.5 1.4-.6 0-.8 .4 .9-.3 2 3.4 .8 0 3.4-1.7 .9 2.3 1.7-.7 1.3 1.1-1.7-2.3-2.3-.9-1.3 .5-5 1.2-3.1-.1-2.7 1 .4 .8-1.9 2.2 .4 .9 2.8-1.1 2.6-.6 3.5 .3 1.4-1.5 3.8-.5 1.3 .1 1.1-2.2 1.7-1.2 1.4-2-.9-1.8-2.1-2.7-.9-1.9-1.2 2.4-4.5-1.3-.9 2.4-.9 1-2.6 1-.9 0-4.7 3.1-1 .9 2.3 1.2 .7 2.9 3.3 1.6 2.4-.9 1.5-.5 4.1-1.9 2.2-1.1 1.4 .4 1-.1 2.3-.5 3.4 1.6 .8 1.1 3.5-.3 1.3 2.6 2.5 1.8 4.8 0 .2 .5 .7-2.2 4.3-.6 4.2-.7 2.8-1.6 2.4-.4 1-1.6-1.6-1.4-1.2-3.1-1.1-1.3-1.6-.7 .4-1.1-.4-.8-1.8-2.2 2-1.7 3.4-.7-1.4-2.2-.1-2.3-.5-2.2 2.1-.5 1.8 1.4 1.4 .2 .5 2.9-1 .9-4.6 2.6-2.5-1-2.8 .4 .2-.7 1.5-3.2 1.3-.4 1.7-2.9 3.2 .6 3.1 0-1.7 1.3-3.4 .2-2.1 2.7-4.1 .8-.5-1.3-4.1 1-2.8 .1-.7 .9-3.5 1.2-3.3-.1-1.8 1.9 .5 .3 .4 3.9 .8 1.9 .2 .5 2.6-1 .9 .3 3.2 .6 2.2 .5 .6-1 1.7-2-.4-1.2-1.6 1.1 0-1.3-2.8-2.8-2.4-.2-1.9-1.4-1.3 .5-1.2 1-5.1-1.8-1.4-.3-2.1 1.5-3.2-.4-3.8 1.1-1.8-1-3.1 .5-2.6-.7-2.8-1.2-3.5 .8-1.4 0-1.4 .5-2.8-1.2 .8-1.7 1.9-3 .7-2.1 3.3 .8 2.7-.3 1.7-.1 1.7-.3 .9 .4 3.3 4-.2 3.2-.7 1.6-2 1-2 .3-2.1 1M621.2 500.4l-.5 1.9 .7 .9 2 1.5-.3 1.3 2.9 .3 1.6 2.4-1.2 2.3-2.9 1.4-.5 1.9-2.6 .9-1.9 .9 .6 .5-1.6 2 0 2.4-1.2 .3-.5 1-2.2 1.8-2.6-.1-3.8 .4-.9 .1-2.1-.8-4.6 1.3-2.1 0-3.1-.2-2.4-2.5-3 1.4-1.6-.8-.2-2-1.2-2.3-.6-.7-1.6 .9-2.9-.6-.4-2.4-1.9-.8-1.4-1 .6-1.7-1.6-3.6 2.7 1.1-.4-.8 3-3.4-.3-2-.4-1.7-3-1-.5-1.8-.2-2 .8-2.8-1.4-.6-.7-2.7-.4-.9 .3-.1 1.7-3.4 1.3-1.3 1.3 .1 1.6 2 3-2.8 2.4-1 2.5-1.2 3-1.2 3.1-2 2.5 1.6 2.4-.3-.9 0 2.2-2.9 5-.8 1 3.9 3-1.8 3.2 2.2 .8-.5-.9 2.4 4.4 2.1 3.3 .5 2-.1 .3 2 1.1 2.3-1.2 .5-.9 2.2-1.3 .9-.6 1.9-1.5 1.7-.4 .9-2.3 2.9-1.3 .7-3.3 .2-1.2 .2-.8 2.8-2.4 1.2-1.2 1.4 1.6 1.9 2 .5 3 2.6 2.4 .9 2.1 .7 2.3 1.1 2.3 .3 2.7 1.9-.6-.2-1.7 .9-3.5 .6-2.1 .9-2-.6-4.8 .3-3.2 .5-1.3-.5-3-.6-2.9 .9-2.3-1.8-2.2 .2-2.2-1.4-2.4-2.4-2.3 .9-2.3 .7-4-.1 .2 1.9 .8 .9 2 1.9 2.7 1.1 1.7-1.2 1.2-.1 4.1 .6 2.5 .1 2.6-1.4 1.4-.6 .3-2.6 .8 .2 1.1-.6 .4-2.6 1.2-1.5-1.6-2.9-.4 1.1-2.8-4.8-1.6-1.2-3.3 .3 1.6-1.3 .8-.9 2.1-.3 1.3 .3 1.9-.6 3 .6 1.5-.9 2.6-1.1 3.9 .2 2.1 1.2 3.6 1.4 .2 1.3-.3 0 .6 .9 2.8 2.6-1.6 1.3-1.6 1.3-.9 .9-1.7 1.4-1.3-.7-4.1 1.6-1.7-.3-2.9-.4-1.6 2.4-3.2-.3-.5-.6-2.1-2.1-.6-1.8 .3-2.5 0-.1 .7-2.1 .4-1.7-2.1 .2 .4-2.3-1.5-1.5-.7-2.1-3.2 .5-2.5 2.2-1.5-.4-1.6 2.4-2.1 2.1 .2 1.6-.9 1.1 1.8 .1-.4 .4-2.8 2.5-1.7 .1-3.3-1-.3-2.5-1.4-1.9 2.5-.4 2.9-2.2 1.9-1.5 3 0 1.4 .7 .7 1.3 .8 1.4 1.4 2.2-.8 1.2-.2 2.5 .8 1-1.5 1.8-.5-.4-2.6 2.8-1.6 2.8-1.1 .3-.8 2.1 1.2 .3 2.3-.2 1.3 1.4 .9 1.8 2.8-.9 4.3 .6 1.1-2.7 4.2-1.4-.1-2.6-.7 .2-1-1.1-2.2 0-4.3 1.7-1 0-2.6 2.1-2.9 2.1 .4 .6 3 .7 1 .4 3.1 .9 3.9-.1 1.7 .8 2.2 0 4.3-.5 1.9-.6 1.5-.6M594.3 484.3l.9 1.4 4 .3 1.4 2.3 3.6-1.2 1.3 1.3 2.2-.3 1.7-.1 .9 1.2 3.6 2.1 3.5-1.9 3.1-1.6 .8-.1 1.4-.4-3.3-1.1-.4-.3-.3-2.3-.7-2.6-2.2-.5-4.1 1.6-2-.7-3.8 .7-2.5-1-1.9-2.5-1.4 0-2.5 2.1-3.8-1.6-2.5 1.2-4.2 1.8 .2 2.3-2.5-1.3-1 .9 3.1 1-2.5 1.4 2.3 1.1 2.6 2.1 .5 2 3.7-2.1-.2 .1 3-1 1.6-3.2-.8-1.7 1.2-.4-2.8-1.6 1.7-3 1.1 1.9 3.9-.2 2.5 .1 1.2-.7 3.5 2.2 2 1.2 1.8 .7 2.3 1.8 2.3 1.5 .5 2-.9 2.9 1.9 .6-1-1.5 1.5 3.7 .6 .7-2.2 1.7-1.6 .7-.1 1.5-2.3-.1-.6 1.6 3.2 3.1 1.8 .1-.4 2.3 1.4 1.2 2 1.9 1.9-.1 4.4 .7 1.4-2 .1-1.6-.8-.5 0-2-.5-1.2-.2-1.7-3.7-2.8-.6-2 .3-.7 .1 .2-3.5-.7 .9-2.1-.2-1.6-1.1-1.5 1-1.3 1.6-2.7-1.5-2.1-1.5-1.7-2.4 .2-5.1 .9-1.6-.9-2.9 1.3-2.1 2.6 .2-.6-.5 1.4-1.4 2.6 1.5 1-.3-.2 2.1 1.8 .6 .6 4.6-1.6 .3-.5 1.7 0 .2-.3 .2-1 .1-1.5-3.7-1.4-.6-.5-.9-.3-2.8 .9-1.6 0-2.5 1.5-3.6-.5 2.6 1.7-.1 1.9 .2 .8 1.2 .5 1.9 .7 3.3 2.1 2.7 .8 1.6 1.4 .1 1.7-.9 1.5-.4 2.9-.6 1 2 1.8 2.1-.3 1.3 .3 3.1 .7 2.2 2.4 3.2-.4 2.6-.8-.4 .5-2.1 2.1 1.2 4.1-2.5 1-1 .6-4.3 2.4-.6 .5-3.1 1.3-1.2 1.1-.7 .8-4 .1-.5 1-3.1 .1-1.2-2-2.5-.7-1.2-.2 .7-1.1-.3-1.9 .5-1.5 2.1-1.1 2.3 0-.1-1.7 4.3-.5 2.1-.1 1.8-2.1 2.3 1.4 3.1-1.3 2.1-1.2 2.2-.1 4.1-1.4 3.6 1.4 .4-2.1-2-1.1-.8-1.1-1.2-3.1-3.3-1.9 1.3-1-1.6-2.2-1.4-1.7 .6-3.3 1.1-.8-1.9 .3-3.8 1.1-2.8 .7-2.8-.4 .1 1.5 1.7 2.7 .5 1.1 3.1 1.7 2.3-1.8 2.9-1.5 2.7-.4 .5-1.9 2.1-1.7-1.3-.8-1.7-1.3-.2-.2-1.4 1.8-3-1.1-3.4-.6-2.4-.9-3 .6-2.5-1.6-.2-.1-2.1 2.2-.8 1.4 1.7 3.3 1.8 0 .8 .7 3.4 .1 3.4 .4 3.2-1.2 1-2.1 .8-2.5 .7-.4 1.6-1.6 .3-1-.1-.8-2.7-1.2 1.9 1.1 1.3 1.2-.1 1.2 1.4-.1-1.9 2 .8 .9 1.7 1.4-.7 1.3 .7 3.1-.9-.9 0 3.3-.6 .3-2.9 2.5M658.9 708.3l1.5-.5-2.2-1.9-.8-4-3.5 .3-2 1.4-.4 .4-2.3 1.4 .2 3 2.3 .1 3.3 1.9 2.4 1.1 2-.4 3.6-.2 1.9-.3 2.5-3.1 1-1 .7-.1 .3 1 .3-2.7 .1-.7 2.5-2.4 3.4-2.3-.4 .6 0-1.4-.5-2.6-.5-2-3.2-.3 .4 1.8-3.6 1.5-2.6 .7-4.1 1.1-1.4 1.7-2.2 .6-1.4-.5-2 0-.8 .2-2.5 .3-4.1-.1-1.7-.1-2.7-2-3.3 1.2-1.3 .4-3.3 0-2.6-3.2-2.5-2.8-1.5-.3-1.6-2.3-.9 .3 .5-1.9-1.9 .6-2-1-2.4 .3-3.2 1-3.6 0-.9 1.2-.9 1.4 2.3 1.6 .8 1.8-1.8 .1 2.2-.1 2.5 1.4 4.5 .1 1.9 .2 .1 2.5 2.7 .4 2.8 .6 1.9-1.9 2.5 .5 3.7 .5 .6 1.2 2.9 1.1 4.3-1 2.5-1.6 1.8-.5 1.9-1.9 2.4-.7 1.2-.2 1.7-1.6 3.1 2 1.9-2 2.6-2.1 1.2-1.7 2.8 1 1.7-1.3 1.2 .9 2.9-1.4 2.3-1 .7-.5-1.8-3.3-2.2 .4 0-1.7-3.4-.4-2.8 1.3-2.8 3.5 1.6 1.7 1.7 1.2 .8-1 4.2 2.4 2.3-2.1 3.3-.1 1.7 .1 2.5-.9 3.5 .4 .1-2.1 .5 .6 .3-2.7 2-1.5 2.2-5.2 2.1 .4 5.7 1.4 1.4 .5 1.7 1.5 .2 .9 .7 .9-1.3 2.4-3.3 .2-2 .8-3.4 .9-.2-2 .8-3.1-.2-1.5 1-1.2 .2 .4 4.2-1.5-.3-.5 1.5-2.8 1.9-1.5 2.1-.7 2.4 .8 1.6-.8 2.4-.3 2.1-2.9 2-1.2 4.7-1-.1-.7 .3 0 1.1-3.1-.4-.5-1.3-.1 1.1-1.6 .5-2-2.8-2.1-4.9 .4-3.3-2-.8 .1-1.7 .6-1.8 1.1-3.8-.2-3 .2-.2 .5-1 2.3 .3 3 .8 3 .6-.4 2 .7 1.4 2.4 4.1-.9 .9-1 2.7-1.9-.1-1 3.3-.1 2 1.3 4.1-1.4 3.5-.6 3 .4 1.2 .8 .5 1.7-.9 1.4-1 1.7-2.6-.5-2.9-1.6 .1-1 3-1.7 2.6 .7 1.5-2.3-.7 1.1 .3 2.7-.5 1.6 0 1.5-.6 2-1.2 2.1-2.6-.8-.7 1M681.3 647.8l-1-1.6 3.6 0 2.2-2 2.3 .6 2.8 .6 1.4 0 3.7 3.5 3.3 .8 4.2-1.1 1.3-.5 3.3 .7 3.3 .9 2 .7 2.4 1 2.1 1-1.2 3.1 .8 2.5-2.6-.5 .8 1-2.6 1.5 .4 2.6 2 1.3 3.3 1 .6-.7 2.5 1.4 2.7-.7 2.8-4.2-.3-.5-1.4-3-1.3-2.6-1.3-.3-3.2-.6-2.5 1.9-1.4 .2-2 1-4.8 .9 1.3 2.8 1.8-.2 .3 1.9 2.4-1.7 2.7 .3 .1-2.4-1.4-.9-1.9 .6-2.4 .9-1.6 2.1 2.4 0 2.5-.2 1.4-.3 .2-.8 2.2-2.3-.1 .3-2.8-1.2-1.4-1.7-1.3 3.4-1.9 2.9 1.9 1.9 2.2 .1 1-.2 3.1-.6 .7 .7 .3 .3 2.3-1 .8 0 .4-1-1.4-1.5-.5-.9 1-1.6-.3-1.1 .1-2.3 1.1-.6 2.8-.7 2.5 4-.3 1.1-.4 .5-3 1.9-2 1-2.3 1.7-2.3 .9-.7 1.7-.6 .4-2.5 .1-2.6 2.7-1.7-.8-2.6-1.8-3.6-.3-2.6 2.5-1.7 1.6-.8-.3-1.9 0-1.3 3.3-2.2 2.7 0 .6-.7 1.6 1.8 .1 1.5 1.4-2.2 1.5 3.3 2.1 2.7-.9 3-1.1 1 .9 2.8 1.4 3.8-1 1.6 .1 2.4 .2 3.2 .8 .9 1.9 1.3 1.6 4.5-.3 3 1.4 .8-.1-2.8-3.2-1.6-1.5-3-1.5-.3-1.9-2.6-.8-2.9-1.1-.7 .2-1.1-2.9-1.8-2.4-.8-.5 .7-1.1 2.7-2.2 3.2 1.5 .9 2.1 1.6-.2-.7 2.8-3.2 .5-2 .2 .4-.6-2.5-2.1 2-3.7-1.3-.7 1.8-1.1 2.2-.8 2.1-2 2.6 .3 2.7 2.3 3.1-.7 1.5 .6-.4 2.1 .7 2.3-1.9 1-.7 2.4-.4 2.2-1 .3-.2 .6 1 1.5-.4 .2-1.8 1.6-3.6 1.9-3.2 1.5 .1-.9-2.4 0-.8-2.4-1.5 .2 1.6-.4 2.4-2.4 3-.8 .3 1.1 1.4 4.1 .1 .4 1.5 .4-2.5 1.7-2.3 .1-2.8 .5-1.9 .5-4.5 2.2-2.5 1.7-1.7-2.8-2.7 .5-.1 2.9 .8 1.5-1.7 2 2.5 2.5-.3 1 2.3-.4 1.8-.5 .3 1.5 2.3 .2 4-.7 3.1 .1 2.2-.9M617.2 735.5l.2 0 4.3-.3 3.7-1.6 1.8-1.5 2.2-1.3 1.8 .2 1.3-1.9 1.3 0 1.6-1.7 .4-1.4 .3-1.9-1.7-1-1.9-1.6-2.4-1.3-2.9 1.5-1.2 1.1-1.6 .9-2.5 .8-.1 1.7 1.5 2.3 1.3 2.1 3.5-.4 1.2 1.9 1.4-.2 .6 1.4-.6 3.2-.1 1.3 4-1.4 2 1.2 4.3-.7 1.5 .2 2.4-3.1 2.7-3.5 .5 .8 .8-1.1 .3-2.5 3-2.8 3.7-.1 .5-1.3 3.8 1.9 .2-.4 3.4-2.6 1.9-.5 1.6 .1-1.1-3.4-2.7-.6-.1 0-3.5-.5 2.3-1.6 1.6-2.5-.5-2.5-1.2-2.9-.3 0-1.3-1.7 1.4-1.3 0 1.8 1.8-2.4 2.9 .1 2 2.2-.1 .5-2.6 .4-1.6 .2-4.3-2-.5-2.2-.5-.8-.6-.6-3.2 .3 .9-3.3-.2-1.4 2.6-.4 .6-.1 3.6-.2 3.8-.8-1 1-.4 3.3-2.2 .5-.4-.2-3.8 1.3-.4-.9-.3-1.4 .5-1.5 .4-1.5-1.4-1.7 1.9-1.3-.2-1-.6-1.9-1.2 .8-1.4-1.4 2.9-3.9 1.2 .2 2.3-2.1 4.6-.6 1.7 2.2 2.5-1.4 2.4 .5 2 .1 3.6 2.4 1 1.7 .6 2.2 1.4-.2 0 1.5 1.5 .9 2.4 .2 3.2 1.5 1 0 2.9 1 2.3-.4 1.7 2.8 3.7-.4 2-.3 2.2 1.2 .7 2.2-.7-.6-3.5 .1-2.9 2.3-2-1.3-1.3 2-2.4 1.7-2.6-.7-2-.2-1.5-.2-3.2-.4 1.6-.8 1.6-1.9 1.4-4.7-1.1 .6 1.6-1.4 1.6-2.1 1.6-2 1.2-1.5-.9-2-2.4-.1-1.2-2.9-2-1.2-1.9-2.3-3.4 .7-1.5 1.4-2.3 1-1.2 .3-1.4 .7-.9 .4-.3 2.2 0 1.9 2.6 3.3 2.7 0 1.5 .4 2.3-.6 2.7-1-.5-1.4 2.8-1.7 4.3-.4 1.3 .8-.8-.4 1.5-1.9 3.7-.3 3-.8 .8-1.5 2.5 .7 1.7 0 4.3-1.4 2.4-1.6 3.3-.8 2-.1 1 .6 2.8 .9 1-1.2 2.3 1.8 3.1 2-3.4 .6-.5 .9-2.2 2.2-2 .2-.9 .7-3.5 .3-2.5-2.1-2.2-.3-1.9 1.3-1.3-.2-4 2.1-.7 .9-2 1.5-1.2 1-2.8-.4M652 645l-.2 2.4 .7-.2-1.8 1.5-1.2 3.3-4.4 .3-.7-2.5-.3-.9-1-.7 .5-.4 2.4-2 1.4-1.9 .6-1.6 4.1 .6 2.9-.4 1.7 1.1 3.7 1.1 3.4 0-.3-1.8 1.5-2.1 1.3 .5-3.4-1.8-2.7-.2 .6 3.9-.6 .2 2.4-1.8 2.2 3.3 2.1 0 3.4 .7 2.2-3.5 1.3 .6-1.5-1.2 1-.7-1.4-.6-.2-.6-2.5-.7-3.6 .3-1.4-.7-1.2-.5-1.1 .9-2.6 3.9-.8 1.3 2.6 1.1 3.3-.2-.9 2.1 2.3 0 3 0 1.1 .5 2.8-2.5-3.6-1.9-2.1-.2-3.2-.2-3.6 .7-.3-.1-4.4 1.7-.9 1.4-2.5-.6-3.1 1.8-.8-.4-.8-.1-1.4-.2-3.2 .7-4.3 2 .6 1.8-.5 2.6-1.1 .5-1.3 1.2-1.4 0 .8 2.9-.4 1-1.1 1.9-.5 .2 3.3 1.5 2.5 .4 3.9 1.1 2.2 .5 3-.7 3-1.7 1.6 .7 2.6-.5 .4 .4 2.6-.5 3.5-1.9 2.2 1.7 4.5-2.1 1.3-1.2 1.6-1.8 3-.5 .6-.6 1.5-1.5 .1-1.4-.6-.5-1.7 .3-1.6-.3-1.9-1.6-4.1 .8-2.3-2.6-3.1 .8-3.1 2.2 .1 1.5-.8 2.1-2.1 2.2-.9-.7 .4 1.9-1.1 1.5-1.9 1-2.1-.4-.1 .5-2.5-.6-.8 3.1-2.6 0-1.6 1.3-2.7 2.8-1.2 1.5-3.1 .3-.5 1.6 1.6 3.8-.3-1.1-2.2 1.8-1.4 1.5-1.4 1.5-2.6-.3-1.3-1.6-2.6-.5-2.3 .3-2.5 .3-1 1-3.7 2.4 .3 1-1.4 .7-.1 .9-.6 4.5 .9 2 .6 .8 1.3-.2 1.6 1.1 .4 3.2 1.1 .3 2.1 2.4 .9 1.7 .7 2 1.5 .5-.3 1.3-.3 2.2 1.6 .7 3.6 .4 3.5-.7 .7-1.5 .1-1.5-2.3-2.6-1.4 .7-3.2-1.8-1.9-.7-1.5 2.4-2.4 1.4 0 .5 1.4 2.1 .4 .8 1.5 2.5 1.5-.7 3-1.5 2.3-1 0-2.5 .1-.4-1.7-.5-.7-2.3-2.6-1.8-2.4 1.2-4.1-2.1-3.7 .1 .8 .9-2.6 .2-1.7 1.2 2.3 2.6 1.4 1.1 2.2 .3 2.5 .1 4.6 2.1 0 2.1 1.6 1.2 1.3 .7 2.6 1.5 2.8 2.9-3.5 1.3M716.7 641.3l0-3-.1-1.1 2.5-.6 1.5 1.6 3 2.7-.5 .2 .2-.5-1.8 .8-3.2 .9-.2-.3-1-2.2-1.1-1.6-1.3-.4-1.3-1.6-2.7 .4-1.5 1.3-1.8-.9-3-2.1-2.2 .8-1.9 3-1.4 1.2-5.2-.6-1.1-.5-4.4 1.3-.9-2.4-3.3-1.1 .2-1.3 1.9-1.8 2.9-1.7 2.8 .5 3.3-1.2-1.8 3.2 3 0 3.9 .4 4.3-1.1 1.6 2.1 1.9 1.8 2.9 1.9 1.5 .3 2.1 .4-1.4 2.9 .5 2.4-.5 .5 .3 .8-.1 2.3 .3 1.1 3.3 .5 1.9 .4 1.2 1.1 2.2 1.2 2 1.1 3.9 2.4 2.7-2.3-.6 2-1.8 .6-1 .3-1.2 2.2-.3 1.8 1.4 1.3-.3 2.1 2 1.6 2 2-1.1-.5-1.6 2.3 .2 2.4-1.7 .9-1.5-.3-1.8 2.8-2.8 1.8 1 1.6-3.2-.1-1.7 1-1.9-2.4-3.4-.5-1.2-1.7-1.7-.7-.2-1.2 .4 .2-1.6-3.1-2.4-2.4-1-1.5-.3 .5-.4-1.6-1.2-4.1 0-.6-1.7-.3-.2-1.9-1.9-3.1 .7 .6-1.2-1.9-.6-1 .3-1.1 1.3-2.3 1.8-2.3 .1-1 1.9-.1-.1-1.7 2.7 1.1 4.6-.4 .5-.8 3.4-1.6-.6 .4 1.1 .7 5.2 1.5 2.6 1.3 2.2-.4 3.1-3.1 2.3-2-2.5-1.1 .2-.8-3.5-2.9-3.2 3.7 .1 .1-2.7-2.3-2.5-.8-3.6-1.5-2.8-.8 .2-1.1-2.6-.4-2.8 1.6-3.2-.8-3.3-1.9-.5 2-2.3 1.4-1.4 .5-.2 1.6 .7 .9 3.1 .2 .9 2.2 2.5-.8 3.4 1.4 5.2-.1 .6-1.2 .3-2 3.7 .2 1.5 .6 3 .3 2.3-1.4 2.1 1.7 1.1-.6 3.4 2.2 1.7 .8 1 1.7-2 .9-.9 2 .3 1.9 1.4 2.9 .1 .9 1-.4-.7 2.3 0 2.9-.3 3.5 .1 1.4 .8-.8-1.5 .6-.1 1.1-2.2 3.4 .8-.6-3.7 1-2.3 1.4 .1 2.1-1.3 .5 1.4 2.6-.3 .8-.5 1.4 1.4 1.7-1.1 1.8 .2 1.6 .3 1.4-1.5 1.7-1.4 .1-2.9 1.5-.4-2-3.7-1 .1-1.2 .4-1.9 2-.4 1.7-1.3 .1-1.3 3.4-.1 2.1 .9 1 3.6 4.3 2.3M640.7 678.3l-1.2-2.4-3.4 .3 .1-3.1 0-1.2 3.6-1 3.1 1.7 1.8-.5 2.1-1 1.4-2 3.7-1.6 2.3 .3 3.3-1.5 2.5 .7 .7 1.1 2-.5 2.6-.4 2.3 2.8 2 1.5 1.9 .6 2.3 1.6 3 1 2.4 .3 2.8 1.8 .9-1.1 1.6-1.8 1.2-.1 1.6-1.7 1.4-3.1 .2-.9-.2-.1 .4-2.6 .2-.6-2.6-.4-2.3-2.5-2-.8-.6-3.3-1.2-1.8 .5-1.1 4.8-1.8 1.7-.5 .7 1.8-.4 2.3 1.1 2.5-1.4 1.7-.6 1.6 .2 .6 .9 3.7 .5 .5-2.3 .1-.6 .2-1.2 2.8-1.2 2.5-1.3 1.6-1.5 .9-3.7 1.2-2.1 0-2.8-.9-2.7 .6-1.9-1.7-3.9-.7-2.8-.9-3.4-.7 0-.9 0-.5-2-.3 1.2-2.7 5.1 .8 2.1-.6 2.6 .5 .3 3.3-1 .4-2.7 .5-2.4-.4-.5 .1 2.1-1.5 1.1-2.5 2.5-1.3 .1 1.2 3.3 1.4 1.7 .5 1.8 3.2 0 2.2 .9 .5 1.1 3.3-2.3 .4-2.9 2.2-.7 1.8-3-2.1-4.3 .8-3.2 1.2-2-1.3-.9-.1-3.4 .2-1.3-.9-3.2 .2-2.4 1.9-2.4 0-2.3 .4-2.7 .1-2.1 3.2-.9-1.6-4-.1-1.1-2 .6-1.5 3.6 .1 1.5-.3 3.4-.8 3.4 1.8 0 1.6 .8 .5-.3 1.7-3.1 2.3-.4 .9-1.1-.3-1.9 1.7-.3 1.8 .7-.7-1.9 3.1-2.9 2.8-1.3 1.1-.1 .8 1.1 1.8 1.5 2 .3 .4-1 2.6 .2 2.1-1.5 1.2-1.1 1.8-1 .2-2.1 1.9-1.4 2.4-1.5-.3-2.5 2.8-.9 0-2.1-3.3 .6-1.8-3.1 .7 1.1-2.8 1.7-1.2 2.2-.5 1.5 1.8 1.3 1.2-.3 1.1-.3-.6-2.7 .7-.4-1-2.2-.7-5.1 1.6-.9-.2-1.6-1 0 2.8 .8 .8 .4 .7 1.5 2.1 4.3 .4 2.7-1.6 3.3 1.4-1.9-2.3 2.1-1.2 3.3-.3 3.3-.7 2.5 .9 2.9 .7 .9 .5 4.1 2 2.7 .4 1.2 1.1 2.3-.8 2.7 .2 1.5 2 2.2 .5-1.6 .8-1 .3-2 2.5-4.1 1.8-3.1 1.1-1.3 .5-3 1.8-1-.5-3.2 .5-2.3-1-3.6-1-.9-.4M624.4 728.4l-1.7-1.7-.8 1.7-3-.1-2-3.4-1.9-1.7-1.6 .2-2.6-.1-2.2 0 .5-4.3-.5-1.5-1.4-1.5-.8-1.5-1.4-1.2 1.4-1.9 2.8 1.3 2.2-.9 3.5 .2 3.4-1.8 2.2 2.5 3.2-1 2-.1 2.4 1.3 2.3-2 3.9 .4 1.2 0 1.5 .1 3.9 1.7 .4-2.6 1.2-2.8 1-1.3-1.4-1.3-.8-.6-1.6-2.7-.3-2.4-.6-1.3-.3-1.6-.7-2.2-1-1-2.4-1.2 .5 .2-2.1-3.6-4 .6-1.3-.2-.1-2.6-1.5-1.1 1.1-.5 1-2.5-1-1.2 .2-2.9-2-.4-1.8-1.5 0-1.6-1.8-1.3-.1-.4 3.3-2.5-.7-2.8 2.6-1.4 2.1-1.2 1.8 .2 4.3-.6 3.4 1.8 .5 .8 2.5 .4 .9 .7 1.3 .2 1.4 3-1.1 1.9 .8 .8-1.8 1.8-1.4 2.8-2.3 .3-2.6 .2-1.7-1.3-2-.3-3-.7-1.4 .4-3.9-1.3-4 .9 2-3.9 2.9 0 1.7-1 2.7 .2 2.6 2.6 2.9-1.2 1.7-1.3 3-.4 2.8 1.2 2.4 .4 1.7-3.6 1.9 .2 2.8 .4 2.6-1.4 2.1 1.1 2.1 1.8 2.5 1.2 1.8 1.3 3.7 1.3-1.6 1.9 0 2.4 2.2-.7-.2 1.4 1.3 1.4 1.2 1.7 3.7-.6 1.7-1.9 4 0 1.1-1.3-2.2-1.2-3.6-1.6-3.1-1.9-1.7-2.4-1.4 2.2 3 3.4 2.8 2.2 2.2-.1 1.8-2.7 .5-.4 2.9-1.7-.1-1.9 2.1-.3 .3-.6-2.7-1.1-3.5-1.3-2.5 1.6-2.5 0-2-.8-2.8-2.7-1.3 1.2 0 2.4 .2 1.9 2.2 .5 2.1 1.2 2.7-.6 3.3-2.1-2.7-1 .8-1.2-3.2-1.4-1.9 .2-1-1.2 1.5-3.4-2.5-.9-3.3-1.3-.9-1.1-1.5-4.2 .1 .1-2-.8-1.6-2.6-4.5 1.7-.9 1.5-1.2 .6-1 .8 2.7 0 .3 .6 1 3.2 1.4-.1 3.9 1.9 2 0 2.5-.7 .6 1.2 .9-.2 2.2 1.6 4.7 1 2.9 1.7 2.9 1.2 2-.2 2.4 1.9 1-1.2 3 1 1.3 .8-.3 2.6 3.2-.1-.6 .7 0 2.1-.5 2.1-.8 2.2-1.6 1-1.8 2.6-1.6 .2-1.4 2.4 .1-.3-.5 .7-1.5 2.3-2 .1M627.6 666.2l2.5 .5 2.2 2.2 2.1 0 3.8 .8 .2 1.9 1.7 1-.8 2.6 .1 0 3.2 2.7-1.3 .9-1.5 1.2 .3 3.3-.5 2 .1 0 2.5 1.4 2.3 1.5 3.7 .2 .9-.2 2.1 .2 2.6 .5 2.3 .1 1.9 1.7 1 1.4-.1 2.7 1.7 .6 1.2 2.1 3.3 .2 2.1 .6-.1-.8 0-2.4 .9-3.4-1.1-.2-1.4-3.1 .6-.1 1.1-.8 .8-2.3 .5-1.6 .1-2.2 0-.4 1.1-1.6 1.2-1.7-1-3.3-3.5-.3-1.6-.4-5.4-.2-2.9 2.1-1.5-1.1 0 2.2 .8 2.6 2.5 1.3 2.5 .7 2.8-.4 2.2-.2 1.3-1.6 1.8-1.2-2.1-2-.4-2.1-.4 .4-.8-2.6 1.1-1.5-2.3-3.1 .1-.7 .7-2.2 3.1 .7 .8-2.5 .6-1.2 .8-1.4 1-1-.4-.4 3.8 0 .6-.1 1.2 .8 .7 1.8 2.2 2.1 1.3 1.2-.6-.5-1.5 1.5-1.1 .6-3 2.1-1 1.6-2.7 .5-3.7 .8 0-.5-.7-.7-1.2-2.7-.8-1.7-1-1.8-.3-1.7 2.5-1.1 .9-.1 2.2-2.2-.4 .5 1.6-.6 4-.6 .3-.7 1.7-.7 .2-2.2 2-3.2 2.2-.3 2.1-.5 3.7-2.9 1.1-2.6-.3 .3 3-.9 1.8 0 1.8-.3 2-1.4 1.7-1.4 1.7-1.2 .3-1.1 2-.8-1.8-1.7-2.8-3.2-2.1 .6-3.1-.9-.9 2.6-3.5 1.8-.3-1-1.3-.1-2.8 2.6-1.1 2.2-.3 1.7 1.5 2.4 2.5-.4 3.4-1.3-.7-1.3 .9-1.9 .3-2.8 .8 0 .9-.4 2.5 .2 2.5-.4 2.1 0-2.3 1.9-1 .9-3.1 1.6 .4-.2-3.5 1.6-2.2 2.5-2.9 1.9-3.2 .9-.9 2 .1-.9-.3 .4 .3 .6 1.8 1.2 2.1-.3 3.1-.4 .5 .6 1.5 .4 3.4-.6 .7-1.3 2.7 .1 1-2 .3-2.2-.8-1.4-1.5-1.4-.5 0-5.3-2-2 .1-.6 .3-.6 1.1-1.2 2.2-2.6 1.8-1.2 .1-.4 .9 .8 .2 1.1 3 2.7-1.2 3.4 2 3 0 3.2 .1 1.5 1.2 2.1-.4 2.8 .7 3.3-.8 2.5 3.9-.4-.8 0 1.4 2.1 1.5 1 3-.5 3.5 1.1-.6M616.4 730.3l-3.7-.1-1.1-.5-2-1.8-1.4 .3-.7-1.9 .7-.8 2-1.4 1.6-1.3 2.4-.8 4.4 1.3 3.4 .6 1.9-.8 .1 1.4 2.3 .9 3.5-.8 3.7 1.2 1.1 .8 3.2 0-.8 .6 2.7-.1 3.2 2.4 2.6-.4 1.8 1.1 2.2-.8 2.3-1.4 3.9-.9 2.4 1.5 .5-2.5 2.1-1.3 3.3-2.7-1-.8-1.4-1.4-.1-.2-.1-1.5-1-1.5-.3 .5-2.5-2.9-3-.2 1.7-2.2-.6-2.2 .8 0 .1-2 1.7-1.8 3.5-1.8 1.3-.6-.4-3.1 1.6-.5 2.1-1-2.2-.9-2.5-.9-2.8 .7-2.5-.9-2.4 0-1.1 .2-3.1 1.6-1.2 2.9-1.2 1 .8 1-1.2 .6-2.7 2.2-1 .8-.1 0 .2 3.1 .5 1.1-.6 2.6-1 .4 4.5 0 3.6 .3 .6-2.9-1.2-.9-2.2-1.1-.6-1.2-1.7-.4-2.4-.6-4.6-1.7 .5-2.5-.8-1.4-.5-.8-.4 0-.2-4.1 .9 1.7 .6-3-1.4-2.2-.5-1.3 .9-.7-.8-2.7 1-4.8 1.4 1.6-2.5-1.3 0-1.9-3.8 0-2.2 .1-3 2.1-.9-.9-1.2 1.8-1 2.4-2 1.6 1.6 .4 .6 1.1-.5 .7 .6 3.2 .6 .8-.6 .5 1.5 2.9 4.4 1.1 2.5 .9 3.4 1.6 2.3 .6 3.7 1.3 .6-.3 2.7-.6 1.6-1.4 2.5-.6 2.5-.4 2.6-.6 1.6-.1 3.4-2.7-.8-1.9-.8-.1-.2-1.6-2.8-1.7-2.9 0-4 2-1.8-.4-1.6 1.4-1.6 2.7-1.8-.3-1.7 .1-1 .5-1.8 .8-1.4 1.7-.3 1.7-2.8 2-3.5-1.3-1.2-.4-.6-2.1-.4-2.9-.4-.8-.5-.2 1.5-2.6 .4-.1 4.1-2.8 3.6 .7 2.8-1.6 3.3-.1 2 .7 2.3-1 1.9-.4 3.1-.9 1.5-.9 .6-.9 2.5-1.5-1.4-2.3-3.2-1.2-.6-.7-.5 .6-1.3-2.2-.1-.8-.8-3-2.9-2.6-.5-2.1-.4-1.5-2.6 1.9-1.7-.8-5.3-.2-.3 1.9-.6-.5-2.3 1.9-4 1-2.9 .2-.1-.3-2.5 0-.2-.3 2.5-1.7 1.4-.7 1-1.4 1.2-2.3 3.6 0 2.4 .6 1.6-.5 1 1.9 3.5 2.3 .6 1.5M636.9 734.3l3.3-1.6 .4-.8 .7-.9 .3-2.3 .1-1.7 .4-1.6 .5-1.5-.4-2-1-.1-.7-1-.5-2.6-2.9-1.2-.8-2.5-.9-1.2 .7-1.7 .4-2.1-1.5-1.1-2.4-1.4-.3-1.1-.4-.7 .3-2.1 1.5-1.8 2.7-.2 2.3-.8 2-.4 1.5-.8 3-.9 1.6 .6 3.3 0 2.1-.1 2.7-2.3 3.4-1 1.7 .2 2.7 1.6 1.1 1.3-2 .6-1.7 2.3-.3 1.5-.9 2.8-1.2 .1-.1 2.7-1 1.4-.6 1.3-.9 1.7-1 .4-2.1-.1-2.8 .8-1 1.4-3.1 .9-2.3-.3-2.4 .6-2.7 1-3.8 1.4-2.7 1.4-2.1 1-2.5-1.4-.7 .7-1.7 1.6-2.7 .3 1.4 1.2-.1 1.3 .8 1.3 1 .7 0 3.3-1.3 1-.9 1.6-1.2 2.4-.9 .3-1.2 1.5-2.8 1.2-1.7 .2-1.3 1.1-.2 .9 1 1.3 1.1 .7 1.2-1.4 3.7-.6 1.5-1.3 .3-1.6-.4-1.8 1.2-1-2.7 .7-2.6-.3-2.6 1.2 .4-.2 .3 1.6 1.3 .7 .4 1.5 1.6 1.2 2.4 1.8 4-.6 2.4 .8 1.4 .6 2.1-.8 1.5 .3 2.9 0 3 1.9 2.6 .9 2.9-1.5 1.3-1.9 1.2-.2 1.6-1.2 1.5-1 .4-2.8 .2-.5 0-1.6 .7-2.2 .5-1.8 .8-2.1 1.1-1.8 .2-.8-2.3-1.7 1.1-1.4 2.3-.4-.1-2.7 .3-1.7-1.2-1.2 .5-2-1.5-1.5-2.2-1.1-.3-1.3-1.6 0-.3-2.8-.1-.3 1.7-2.9-.5-.6 3-1.6-.2-1.7 .4-2.3-1.8-.3-.3-1.9-1.7-2.1-1-1.7-.2-.9-1.4-2-.3-.6-.1-4-.8-.5-.6 .3-.5-3.2-3.4-.3 0 1.3-.1 1.9 0 2.3-1.2 1.4-.3 1.9 .2 1.8 1.3 2 1.2 1.1 .4 1.4 .5 .7 .5 2.1 1 1.5-.3 .5 1.7 2.6 1.5 .7 1.4 2.9 1.2 .6 .9 .9 .7 1.9 1.5 1.1 3.6-1.2 1.1-.9 .3-1.5 2.9-.6 1.9-1.2-.8-1.3-1.6-3-.8-1.1-.4-2.2-2.2-.1-2.5-1.8-2.8-1.5-1.7 1.6-1.6 1.2 .5 2.8 2.1 2.1 3.3-.5 2.9-1.5-1-2.2-.7-.8 .3-1.4-2.3-.1-.6-.3-2.8-.3-2 .9-2.4 1.5M655.5 679.6l-2.7-.1-.9-.4-2.2 1.1-3.9 .4-2.3 1 .4 3.1-1.7 .6-1.5 2.7-2.3 1.4 1.6 1.3 .4 .3-.2 2.9 2.2 0 1.8 1.9 2.1 1.2 2.7 .4 .9 1 1.2 3 1.4 1.5-1.1 1.2 .2 .8-2.4 .1-2.7 1.1-3.4 1.9-2.1-2.9 .7-1.6 .5-1.6 2-1.4 1.2-2 1.6 0 2-.7 2.8-.9 3.4 0 2.5 .3 1.2-1.6 1.7-1.8 2.4-2.1-3.4-.6-2.5-1.4-1.2-.9-1.1-.6-1.6-2.4 .8-1.5-.9-1.3 1.6-1.3-2.3-2.1-1.2-1.8-1.4-.6-2.7 1.7-1.2 .6-.9 1.7-2.2 2.4 1.1 1.3 1.2 1.4 1.1 .5-.1 3 0 .7 1.9 .9 2.9 .8 1.2 .5 1.3 .9 .5 1.1 .8 2.5 1 2.1 .8 1.4-.4 1.8-.4 1.7-2.3 1.5-2 .4-2 1.1-3 2.1-1.7-.2-2.8 .3-1.9 .5-2.3 .6-1.9-1.7-2-.7-2.4-.4 .1-1 .3-3 1-1 2.4-.1 1.9-.2 2.4-.3 2.1-1.2 3.5 1.5 2.1 .4 .4-.2-.7 2.8-.7 3.2-1.9-.5-2.2-.8-3.4-.4-2.2-.7-2.2-.4-2.5-2.2 2.8 .5 3.8-.5 1.4-.7 1.1-.8 1-2.1 1.7-1.4 .2-1.3-1.5-1.9-.4-1.1 1.6-1.2-.2-1-1.5-1.8-1.4-.9-1.7-1.2-1.2 1.8-1.6 1.2-1.2 1-.3 .3-3 2.2-1.3 2-.3 .6 1.6 1.6 1.9 1.1 1.1 1.1 1.5 1.1 2.8-.1 1.9 1.8 1.7-.7 3.2 .1 3.3 0 2.4 .8 2.3 .3 3.9 1.3-.5-1.8 1.4-1.5-.9-.5 2.1-.9 .5-2.3 1.3-1.1 .3-2 1.2-2.1-.7-2.2 .1-1.9 0-1.4 1.5-.8 .8-1.1-.3-1 .3-2.5-.9-2.5 .9-.3-1.5-.7-1-.5-1.1 1.1-2.8-2.4-2.3-1.7-2.7-.6-2.2-2.1-1.9-.9-2.7 1.7-1.7 1.6-2.5 .9-.7 .8-2 1.2-.5 3-.7 .3-1.5 2.1 1.2 2.7 2.2 .7 1 1.2 1.6 .9-.4 1 0 1.3-.5 1.1 1.2 2.2 0 2.6-.2-.9-3 2.2-2.8 .1-2.3 1-2.9 1.4-2.7 2.3-.8 2 .7 .9 1 .5-.6 .8 .8 3.1 .8 .1-.8 2.9-1 .4-1 1.4 0 .5M655.5 671.4l-.8-.4-3.4 .6-1.2 1.1-1.5 0-1.5 1.3-1.6 1.1-1.2 1.8-.1-1.2-.9 2.4-.1 1.3 1.4 2.3 2.5 .9 2.2 1.6 .6 .3 .2 1.7-.1 2-1.4 1.2-1.8 .6-3 .4-1.3-1.9-.7-.9 .4-.8 1.4-2.3 3.4-2.7 1.9 .2 2.4 .3 3.1 .4 2.8-.9 1 0 1.8 1.8 2.7 .3-.3 .7 .2 3.5-1.4 .5-1.5 .3-1.2 3-.6 2.5-1.3 2.4-2.2 1.2-.5 .6 1.7 1.3 .4 1.7-1 1.6-.6 1.2 .5 .3 1.6 2.7 1.7-.6 1.5-1.7-.1-1.4-.3-.8 .2-1.9 .7-1.7-1.1-1.6 .3-2.2 .5-1.6 .1-1.4-.2-.6 1.1-2 .9-2.1 .1-1.3 .7-1.3 .9-2 3.6-.6 3 1.4-.9 1-1.6 1.2-1.3 .9-3.4 1.8-.7 1.1-2.2 2.3-1.5 2.5 .2 1.1-1.8 1.3-1.4-.3-.6 1.6-.2 1.2 .5 2.9 .4 .5 2.3 .6-.2 .6 .1 2.8 3.4 .5 .9-1.8-.4-.2 1.1-.8 .2-2.6 0-1.1-.9-1.6-.1-2.6-1.1-1.8-3.2-.9-.7-1.1-2.6-1-2-1.5-2.6-2.2-2.1-1.3-2.4 .8-1.9 .2 .2-1.7 .7-2.3 1-1.9 1.3-3.2 .2-.7 .9 .3 1.1-1.6 1.7-1 3-1.2 .9-.6 .4-.9 4-1 1.5-1.7 2.2-1.7 2.9-.6 3 2.9 .1 1.2-.1 1.7-2.9 .2-.1 .7 .4 .6-1.6 2.1-1.5 1.4-.9 1.9-3.9 1.5-1.3 .1-1.9 0-.5 2.1-.5 2.7-3.5 .1-.5 2.4-1.5-.1-.5 2.1-2.3 1.5 .6 2.3-.7 2.4-1 1.4-2.5 .5-.8 1 .5 1.1-1.9 1.9-.7 1.9-1.6 1.6 .9 1.6-.9 2.2 .5 1.1 1-.5 1.5 1.3 2.6 .8 2.6 1 3.3-.6 2.9-.7 1-.8-.5-1.1 2.8-1.5-1-1.8-.9-.2-2.6-1.7-3 .1-2.1 1-2.8-2.1-2.4 1.2-1.8-2.1-3.4 .5-3.1-.2-1 1.4-1.3 2.2-.1 .7 .7 1.7-.6-.3-1.5 1.3-.7 1.6 1.4 2-.7 2 .3 2.2-.5 0 .6 1.3 .6 1.1 1 3-.6 1 1.4 .3 .7 2.7 2.3 .5 2.1 1.3 1.5 1.4 2.8 .1 2.2 .2 2.1 2.8 .4 .3M668.3 666l-2 1.2-2.6 .9-2-.1-4.3-1.4-1.2 0-1.8 .7-1 1.9-1 .8-.5 .9-.9 2.4-.7 .7-1.5 2 1.7 1.6 1.7 .7 2.4 2.4 2.3 .5 3.6 .2 2-1.3 3.9 .9-.5 1.9 1 1.1-1.3 2.6-1.1 1.2 0 .7-1.3 1.8-1.2 3-1.8 0-1.9 1.7-1.4 2.5-2.2-.2-1.9 1.5-.4 .8-3.1 .4-1.8 .7-3.3 .1-2 1.4-1.6 .9-1.5-.7-3.4 .8-2.6-1.5 .7-.1 .6-2.3 2.2-.8 1.2-.5 1-1.7-.4-1.3 1.4-4.3 1.2-.3 .8-1.7 .1-1.3 0-.8 .4-1.5 1.2-1.2 1-2.1 3.6-.5 2.7-.5 .6-1.3 1-3.3 0-1.6 1.3 .1 .4-.7-.5-1.6 1.4-2.1 1.3-.9 .5-1.7 1-1 2.6-1 1-1.9-.2-2 .9-1.2-1.6-.9-.7 .4-2.5 1.5-1.2 1.7-2.8 1-.3 1.6-.3 2.8 .4 1.6 .3 .4 1.3 1.5 .7 1.4-.5 1.1 1.3 2.2 1.3 1.9 1.4 .2 .7 2.7-.1 .3-1.3 1.2-2.2-.4-2 1.4-2.7 .8-2.1-.8-2.7 .3-1.1-2.4-3 .7-.6 2.2-.7 1.6 1.1 1.5-.7 3.2 .8 .7 .8 1.4 .7 1.5 3 1.8 .7 1.5 1.4 1.5 .8 .7 1.6 1.7 2.7 .2 .9 1.2 1.5 .3 2.7 .2 .9-2.2 1.6-1.5-1.3-1.9 .5-2.3-.3-2.3-2.1-1.5-1.7 .7-3-.4-2.1 .9-1.9-.2-2.8 .3 .4 1-1.1 1.5-2.9 2.1-.1 0-1 2.3-2.4 2.4-.9 .4-3.3 .1-1.4 .9-2.8 .8-.7-.6-.4-1.2 2.3-1 2-2.5 2.3-1.1 2.6-1-.4-1.6 .1-1-.9-1.5-1.6-.8-2.7 1.8-.3 .9 1 .8 1.2 1.8 .5 1.6-.5 1.8 .6 1 2.2 2-1 1.5 .5 1.4 1.8 .5 1.6 1.2 3.1 1 2.1 1 1.8-.9 1.2-1.1 1.3-1-.5-.8-1.4-1.6-2.5-.6-3.3-1-1.7 .2-3.2 .6-2.3 1.3-1.5 0-.9 1.4-1.8 .5-.2 1.5 .1 2.7 1.7 1.4 .5 .3 2.5-.6 2.4 1.5 3 .8 1.9 .5 3.5-.1 3 .6 3.7 .2 .5 1.6-1.2 .5-.9 2.9-.8 1.5-1.3 0-1.1 2.6-.3 1M832.8 632.9l.1 1.3 2.4 1.1 1.6 2.7 2.1 1.2 1.5 1.7 2.1-.3 2.1-.5 .7 .6 2.4 .6 4.1 .2 .2 2.9 1.2 2.1 3.4 .7 2.5 .8-1.7 1.6-2.7 0-3.1 .3-2.5 .2-2.6-.6-3.2-.4 .2 .5-4.2 .7-1-1.8-2.9-1.5-2-4-2.3 .2 .3-1.7-2.6 .5-3.7-1-1.4 1.2-3-.8-4.1 0-3.1 .4-1.9 2.9-1.4 2.6-1.7 1.4 .4 1-.4 3.3-1.4-.6 2.9-.1 2.3-1.2 3.4-.6 4.3-2 .9 1.3 2.1 0 1-.2-.7-1.3 1.8-1 .7-3.4-.1-2.3-2.2-1.3-.7-1-1.2-1.1-3.5 1.7-2 .6-.2-1.4-2.6 .3-1.7-.1-3.6 .3-1.7 2.1-2.2-1.7-2 4.3 .3 1.5-3.3 1 1.1 1.8-.1 1.6-1.7-.8-5.2-1.7-.9-1.3-2.7 .6-1.5-1.6-3.2 .2 .1-.8-1.6-1.5 1.5 .5-1.5-2.3-1.4-2.2 .5-.9-2.2-.8-2.9-2-.3-2.5 .1-2.7 1-.9 2.2-.5 1.3-2.1 1.7 1.1 5.1 3.3 .2-.4 2.5-1.3 2.1 1 1.8 .4 4.4 .4 1.6 .6 4.5 .3 3.4-2 .1-.7 1.3-.9-.5-2.1 2.4 .8 2.5-2.3-1.6-1.7 .9-1.7-.9-1.1-.5-1 .4-.4-3-2.9-3.3-.6-4.2 .1 .1-1.1-2.5-1.5-2.2-.8-.1-2.3 .9-2.7-.8-2.1 1-.9 3.2-1.8-1.3-.5 2-2.2 3.1-.7 3.6-1.8-.2-1.5 1.4 .5 1.8-2-.5-.8 3.3-1.5 1.7-2.9 .8-.4-1.2-2.4 2 0 1.2 0 3.4-3.9 2.2-2.5 .9 .1 3.2-.1 .7 3.6 3.3 .4-.7 1.4-2.9 .5-2.9 1.9-2.9 .7-2.4 1-.4-1.6-2.8-1.3 .8-3.1 .2-.8 2.1-1 .1-1.2-.4-.8 2.4-1.1 1.1-3-.3-.6 1.5-1.4 2.9-2 1.7 .7-.4-.9 2 .2 2.2 1.7 3.7 .9 1-.1 1.2 1.6 1 2.4 .7 .8 1.1-.4 3.3 1.7 2.6 1 2.3 .5 2.9-1.6-.1-2.3-2.3-1.3-.4-2.3-.7 0-3.7-.4-2-.1-2.6 1.7-1.1 1.9-2.2 .9-2.2 .6M885.6 611.6l-1.9-.7-2.7 .8-1.8-.2-1.9 .9-1.9 .3-1.4 2.5-.1 1.2-.2-1.2 3.4 1.5 4.7-.4 1.4-.7 .7 .8 3.1 2.1 2.7-3 2.2-.6 1.2 1.3 3.5-.8 1.9-1.7 1.6-.5 2.6-1.9-1.8-1.4-1.7-1.1-1.6-1.6-2.8-1.4-1.7-.4-4 .2 1.9-1.8-.7-1.1-3.5-3.5-.7-1.8-1.9 .4 .4 .4-.1-4.5 1-1.7 .7-1.3 3-1 2.2-.9 1.9-1.6 1.5 1.3 1.5 .1 3.9-1.1 2.4-.7 1.4-1.7-.9-1.4-1.2-1.4-3.6 .6-2-1.1-1.2 .1-3.5-1.9-2.3-.5-1.1-1.2-1.5-.5-.7-.3-1.7-1-3.6 1.4-2.3-.2-2.1-1.1-1.1 1.5-3.3-1.8-3.9-.5-.2 1.6-1.8 .5-3.7 1.9-2.2 .1-.9 1.1-3 1.8-1.7 .6-1.1 1.3-1-1-1.8 1.1-5.1 .6-1.2-.3-3.9-3.1-2-.2-2 0-3.4-.8-2.7 0-1.2-1.4-.9-.8-1.3-.4-3 1.4-2.8-1.3-1.7 2.4-1-1.6-1.7 .8-1.8 .1-.7 2.9 .3 .4 2.9 2 5 .9 1.1-2 .8-.5 1.9-1.7 1.9-1.9 1.4 2.2 3.8-.4 2.7 .1 5 .2 2.5 .3 1.6 .8 1.9-1.7 .5-1.9-.1-2-1-2.1-2.3-1.3-2.6-.3-1.6-.9-2.2-2.7-3.1 .6-1.6 1.4-3.3-.6 .3 1.9-1.4 2.6 .4 4.3 .8 .9 2.9 .5 2.4 1.4 2.8 .5 .1-1.6 2.8-.1 2-1.5 1.6 .6-.3-2-4.3-2.2-2.2 1.2-2.5 1-.8 .8-1.5 1.6 3.9-.4 3.3-1 3.8-1.1 .4-2.4-.2-2.3-.1-2.2-4 .1-2.1-.6-2.9 4.3 1.1 .8 2.5 .6 2.8 .9 3 .3 2.4 1.2 2.9 .4 2.1-.9 .6-2.5 3.5 1.3 3-3.1 1.2-.4 1.3-1.1-1.3-1.7-1.4-.7 1.9 .2 1.3-2.4 .9-2.9 2.1-.5-1.4-1.2-2 .8-2.8 1.5-1.8 .4-2.1 2-.7 2.1 .4 1.7-.8 2 1.9 2 1.7 2.8 2.3 .1-.8-.4 .6 1.8 .3 2.5-.4 .1-1.1 1.9-1.3 1.4 2.4-.3-.5 1 1.3 2.7 1.1 2.5 1.6 1M828.3 606l.8-.2 2.4 .3 2.6 1.6 .4 3-3.9 .7-.4 2.7-1.7-2.8-1.7-1.4-.7-1.7 .5-1.4 3.7 .6 3.8-1.4 1.8 1.6 2.2 1 3.4-.2 .6 1.9 2.1 1.5-.1 1.9-1.5 1.4-.8 1.1-.7 1.4-.9 1.9-2.6-.7-1.9 .9-3.1 1.1-1.9 1.8 0 2.7-.2-.7 2.4 2.1 2.9 .1 1.6-.3 2.2-.6 1.1 3.1 3 2-1.9-.5 4.7 1.4 1.3 3.6 .4-.4 1.4 2.9-.2 1.7-2.9 .8-.7-.1 1.5 1.8-.2 1.2-1.1 2.2 .6 2.3-.5-2-3.5 1.5-3.5-1.3-.1-3.9 .5-1.4 .8-2.6 3.3 1 .6 1.8 2.3 .9 1.1 1.4 2.7-.5 .1 2.3 1.7 3.2-1.4 .1-3.6-.1-.3-.6-3.5 .3-3.5 1.6-3.8-1.5-1.2 1-2.1-2.3-4.8-.8-1.6 1-2 .8-3.8 0-1.2 .5-1.5-2-1.3 .3-.4-4.5-2.9-1.7 .7-2.4 1.7-.3 3.6 1.6 3.9-1.6 1.7-.9 2.1-.2-.3 1.1 2.3 1.7 1.2 1.6 .8 1-.5 3.5-2.9 2.2-.2 1.5-1.8 .6-2.3-1.3-4.3 1.7-2.5-.4-1.6-1.6 .3-2.4 .6-1.5 .3-2.6 .9-1.2 3.7 0 3.3 .3 0-1.2 2.5 3.7-2.4 1.2-2.6 2.5 1.2 2.3 3.3 .7 2.7 .5 4.1-.8 2.4-1.9 2.2 1.8 2.3-.1 2.6-1.7 .4-1.4 2.2-.4 4-2 1.6 1.4 2.1-1.6 2.9 .9 .5 0 3.7 0 4.5 .7-.1-1.5 3.2-.6 4.9-.5 3.5-2.7-1.3 .4-.1-3.3 .3-2.3-2.2-1.5-2.8-1.4-1.8 1.7-.5-.5-3.3 .7-2.9-1.4-2.5 1.6-2.6 .7 1.1 1-2.6 3.8 .7 .5 .5-.1-.7 1 .4 2.1-2 1.3-2.8 .7-2.9 0-1.4 .8-1.2-1.3-.1-1.7 3.8-2.6 2.2-2.1 1.7 .3 3.2-.4 .9 .5 2.7-.2 3.8-.3 1.4 .3 1.7 1.3 2.7 .5 4.1-.1 3.9 1.3 1.3 .1-1.4 1.1-3.2 2.4-2.3-.4-3.9-.5-.4 .9-.7-1.6-3.6 1.1-3.8 .1-1.2-1.5-2.3-.3-1.4 0 1.2-1.7 .4-1.6 2.9-.3 2.4 1.4 1.5 2.1M782.9 602.7l1.7-.4-1-2.9 2.2-1.4 .9-1.3 2-1.4 2.1 .5 2.7-3.7 1.7-1.1-.4-2.3 2.8 .6 3.5-2.1 1.3 .3 .9 .8 2.2 .3 2.9 .8 1-.2-1.5 1.7-1.9 1.3-4.5 1-.8-2.4 0-1.2 2.7-.5 1.9-.1 3.5-.1 3.3 1.3 1.8-.8 1.2 .8 2.1 0 1.6-1.1-1.3 2.3 .1 2.9-2.7 2.1-1.9-1.7-.6-.3 .9-1.6 2-2 1.3-2.1 3.5-.7 3.8 1.9 1.3 0 1.3 2.7-.3 2.4 0 3.6 .5 .6-1.1 1.7-1.5 2.3 .9 1.8 2.7 1.2 1.9-.8 2.4-.5 1.3-.4 .6-1.8 1.4-3.8-.1-2.6-2.4-1.2-2.2 1.8-2.4 1.1-.3 .3 .8 2 .4 .2 3.6 1.7 2.3 .2 1.9 .5 3.4-.2 .5-.9 2.5-2 1.4-1.9 2.7 1.4 2.2-1.6 3.5-.7 3.1-1.5 1.5-.3 .7 2.9 .5 1-.3 2.4 0-.7-.8 1.6-2.3-.4-4.9 .8-2.9 .6-3.9 .9-.9-.7-1.6-1.4 .1-1.2 2.9-1.3 4.2-1.6 2.9 1.9 1.8-.2 .2 2.2 1.1 2 .5 .5-1.7 1.2-1.4 .2-.3 1.7-3.4 .4-2.5 .4-.9 1.9-4.1 1.1-1.9 1-1.9-1-3.2-2.5-2.5-2.1-2.5 .2-3.8 1-2.9 1-2.5 1.3 2.5 1 1.5 2.2 3.1 .8 1.4 2.3 1.5-.5 3.4-.3 1.4-3.5 .1-1.4 1.7-1.1 2-1.3 2.7-.7 2-2.7 3.2 2.4 1.2 .1 3.4 1.7 .9 .6 3 0 3.8-1.4 3.3 .2 5 0-.7 .1 3-.9 1.2 2.9 2.9 1.6 2 .6 1.1 1 2.2 1.6 1.1 1.3-.2 1.7-1.2 .8-2.9 1.3 1.5 .4-4.4 1.2-.9 0-1.2-2-1.3-3.1-1.5-1.8 2-1.7 1.4 1.6 4.7 .2 1.5 3 1.1 2.3 2.4-.2 .4 .4 .8 1.7 1 1.4 .4 2.5-2.1 .9 .5 2.9 2.8 1.9 .5 0-1.6 1.1 3.8 1.3 2.6-.6 2.7-1.1 1.4-.5 5.8 .8 2.5-1.3 1.4-1.4-.1-1.3 1.1 .4 1.6-.8 3.2-.4-1.2-3.2 1-1.2-.3-.8-.7-2.3-.2-1-1.7-.2-1.2-.3-.7-1.8M858.1 622.9l2.3-.4 1.8 .4 2.2-2.9 .2 .6-2.5-1.7-3.9-1.6-3.3 .5-2.6-.8-.9-1-1.6 1.4-5.1-.8-1.9 2.4-2.1-.5-1.6 .9-2.7-.5-2.3-.8-.5-2-.5-3.9 .8 .9 3.5-.7 2.8 1.4 .3 .8 1.8 2.8-.6-.1-2.1 1.8-3.3 1.3-1.9-.3-2.6-.4-3.3 1.1-2 .6-.4 .6-1.3 .6-3.6-.6-3.5-2.4-1.2-1.1 1.8-1.6 1.1-3.8 2.9 .1-.1 0 1.2-2.4 2.1 2.3 2.2 2.1 1.4-.1 3.8 1.6-1.4 .5-1.2 3.2-2 1.7-1.6-.9-3.5-.4-3.6 .6-.6-3.1 1.4-2.6-.1-1.9 1.9-1.6 2.3 .4 .2-1.5 3.5-.3 1.5 1.8 3.2 1.7 1.7 1.9-.8 1.3 1.4 2.8 1.5 1-1.6 2.4 1 1.1 1.7 1.9-1.4 1.4 2.1 .5 4.5 .1 3.5-1.1 1.5 2.2 2.6 2.4 1.3 1.3 2.5-3.3 2.6 .4 1.9 1.3 3.7-1.8 3.1 .9 3.9 2.1 1.4-.4 1.5 1.7 1.1-.9 2.5 1.7 2.3 .2 3.6 1.5 3.5 1.6 .6-1-2.2 3.3-1.8 1.4-1.8 1.3-3 0-.2 .3-1.8 .5-3.2-.6-1.8 .5-1.1 .9-4.6 1.2-2.8-1-1.6-.7-2.8-1.2-1.3-1.9-1.3 .8-3.4-1.1-1.2-1-1.7-.5 .2-2.9-1.1-1.3 .6-2.1-2.2-.3-.2-2 1-2.1-.4-2 1.5-.9 1.8-1.7 .4-1.7 1.3-.7 .1-3 1.3 .9-1.5 .4 .3-3.9 .3-.1 1.6-1.5 1.1-1.8 1.6 .5 2.2-.2 2.7-.1 2.4 1.9 2.5 1.6 1 2.6 1.3-.9 .4 1.2 2.2 1.8 1.5 1.5-1.1 2.4-1.3-.8-2.3 2.1-3.7 .3-1 .3-3.9 2.6 .5-1.9-.8 2.8-1.4 2.3 2.5 1.8-.3 .8 1.8 1.9 .6 1.3 .1 1.4-.1 3.9 2.1 1.6 1.2 1.6-1.9-.7-2 1.7-3.7-.2-2.4-.9-2.7-2.4-1.3-1.9 1.7-.4 1.9 0 3.5-.7 1.2 1.6-.8 2.6-.6-.5-1.7 2-2.4 1.5-4.9-1.4-1.2 .1-1.8-3.1 1.2-3.2 2.4-.6 2.6 .4 2.4 1.7 2.3-2.2 3.5-1.2 3.3 1.3 1 2.1 1.6-.1 4 1.2M773.5 633.8l-1.4-.7-3.1-2.3-1.9 .6-.4-2.2-2.4-2 1.8 .1 1.6-.1 .7-2.3 1 .1 1.8-1.1 .6-2.8 3.1-.3 1.7-1.5 1 .3 .5-3.7-2-1.9-.8-1.4-3.8 .7-.4 1.3 .5 4.7 0 .6 .5 1.7 .3 1.4 .9 2.2 2.4-.3 4.1-.1 3.2-2.9 3-1.1-.1 .1 .9-1.7-1.1-.2-3.4-2.1-1.1-.6-1.6-1-3.1 .9-3-.6-1.7 .5-2.3-.1-2.4 2.1-3.6 0 .9 2.6 2.5 2.8 .9 .5 .2 2.6 3.5-.4 2.5 3.1 .9 .1 2.4 2 1.9 .6 3.7 1.8-.2 2.6 1.1-.3 3.7-1.1 1.8-1.2 2.5 1.6 2.8 2.7 2.2 1.4 0 3.4 .2-.2-.3 .5 1.9 3.3 .3 .9-2.1-.9 .2 .6-3.6-1.7-2.1 .1-1.7-.8-2-2.8 5-3.2 2.1 1.2 3.5 .8 1.1 2.1 .8 .4-.5 1.7 .4 1.3-1.7 2.9-3.7 .7-3.3-1.3-1.1-1.7-1.4-1.2-3.5-.6-3.3-1.6-1.4 .7 0-2-.3-.4-.6-1-.7-1.4-1.4-2.9-.2-.2-1.9-2.6-.8-2.1 1.5-1.7-.3-2.3-2.2 .6-.2-2.3 1.2-1.7 2.4-2.5 1.9 .3 4.8 1.1 2.8 2.2 .2 .8 .7 .5-2.6 1-.6 .9-4.7 .8-1.5 1.2-2.1 4.6-.2 2 1.6 .6 1.1 3.8 2.3 .3 .6 .3 .6 .7-.5 3.5-.8 .8-1.5 1.1-3.5-.9-1.9-3.9 .5-1.5 .6-2.3 1.9 .5 1.1-1.7 .5-1.9 4.2 .1 2.5 3.4 2.4 .8 .5 0 .3 1.6-2 2 1.3 1.6 .7 1.5 2 .8 3.9 1.5 1.9-1.1 2.1-.5 2.2 2.7 2.7-.4 .3 1.2 4.3 .7 2.1-1.5 1 .6 4.5-1.2 3.1-.3 1.3-2.2 2-1.7 1.6-1.6 .7 0 0 .1 2.2-1.9 3.8-2.4 2.8-1.4 1.2-.6 .7 1.1 .7-1.4 1.2 .4 4.4-1.7 2.1 .7 3.5 1.1 .4-.1-.1 1.5 1.7 .5 1.7 2.1 1 1.2 1.8 1.7 1.7 1.1 .4 .4 .5 .7 1 .7 .3 1.2-1.3-.6-1.3 .5-1 1.9-4.1-1-2-1-1.8-.1-2.9 .8-2.2-1.2M876.2 627.5l1.8-.8-1-.8-2.1-1.3-.6-.1-2.1-1.8-2.5-1.1-3.3 .9-1.2 .8-2.3 2.4-3.4-1.2-1 1.3-1.2 2.8-.2 1-.9 .9 .1 .7 1.1 1 2.2 1.1 2.5 2.5 3.1 1.3 1.3-1.6 3.6 .6 2.6-1.4 4.2 1 2.8 .3 2 2 1.9 1.9 .5-2.8 2.4-.2 .8-1.8 .9-2.6 .7 .6-1.4-2.5-1.8-.9-2 .1-2.9-1.4-2.9 1.7 .1 1.3-1.5 3.7-.3 .4 1.6 2.3 .1 2.3 1 1.5 .9 .4 3.6-.7 2.4-2.6 2.1-3.2 3.1 .6 .6 0 .7-.3 3.1-1.5 .7-.1 3.2-.7 3.5-.4 1.5-.6-.5-1.6 .2-2.8-1.5 0-2-1.9-1.7-1.2-1.9-.7-.9-.6-1.6-.7-3.2-1.2-2.3-1-1.2 1.7-3.7 .8-1.3 1.6 .5 3-2.4 3.2 .7 .1 2.7-1.1 3.6-.3 2.1-1 1.8-.6 3.7-1.9 .5-4 1.1-.4 .9-.4 .2-1.6 .6-3.6-1.6 .9-.1-1.2-4.2-.6-3.1-.4-1.8 1.7-1.7-.1-1.5 .3-1.9 2.3-1.5-.8-2 1.4-2 1.8-2.2 .8-2.4-.6 0 2.3-3 .4-.8 .9-3.7 2-.5 .1-.3 2.6 2.3 1.4 0 1.8-.8 1.4-.4 1.8-2 1.4-2.1 1.7-1.7 2.8-2-.8-3.5 1-2.6-.8-2.2 2.1 1.6 2.6-2.2-.3-1.5 2.8-.6 0-2.9 0-3.1 .4-2.4 1-2-.6-1.2-1.6-2.6-.4-2.8 .3-2.1-.8-3.9 1.4-.2 2.4 1.1 .1 2.2-2.7 1.9 .4 2.9 1 4.6 1.1 3.6-1.5 .6-1.3 1.9-.3 1.2-.2 4.5-.3 .9-1 3.8-2.7 2.7 .9 3.1 3.6 1.9-.9-.5-2.2 3.6 .1-.9-1.1 .6-3.1-1.8-1.2-1.2-2.9-1.4-.7-1.8 .5-1.3-2.7-2.3-.1-2.1 1 0 2.5-1.2 1.8 .3 3.2-.6 .6 3.6 2.2 1.4-.6 3.2-.1 1.8-1.6 2.1-.7 .7-1.2 .5-2.2 1.3-.5 1-1.2 2.9-.6 1.8-1.6 .4-3 1.5-2.2 4.6 .4 1.7-1.2 2 .6 .8-.8 2.7 2 1.8-.6 3.1-.4 3.1 1.6 2 1.1 1.2 .9M797.1 627l-.4-1.6 1.3-2.2 1.4-1.8-.3 1.4 2.4-2 2.1-.8 1.6-1 1.3-2.2 2.3 .2 .3-1.4-.1-2.7-1.1-2.2-.3-3.1-.5 0-3.5-1.6 .5-2 1.6-2.2-3.1-.6-.9-2.9-.4-.7-1.4 .9-2.9-1.4-1.2-2.9-.3-2.6-.6-1.1 1.5-.4 3-.1 1.9-2.2 3.5 .6 2.4 .9 5 .8 1.9-.1 3-2.1 .9 .6 1.9-1.8 1.3-3 1 0 3-.9 .6-2.5 .5-1.1 2.4 .1 1.1-1.1 2.5-1.8 1.9 1 1.3-.3 2.6-.9 3.7 1.8 1.4 2.2 .9 2-.7 .6 .6 2.7 2.7 .5 1.3 1.1 3.5 0 .6 .4 3.8-1.9 4.7 0 .7 0 2.7-.4 .8 2 3.8-.1 1.8-2.3 1.2-1 .3-1.4 3.7-1.6 2.5-1.4 1.5-.3 .8-3.2 3.2-.8 1.7 .9 2.6 1.2 .7 0 1.8 1 2 2.3 .3 1.5-2 .8-.5 4.5 .6 .3-.7 2-.8 .4-1.3-.3-2.5-.4-1.8 1.6-2.6-1.2-2.9 .7-1.8 0-3.2-.3-2.6-.5-3.1 .2 .3 .8-3.8-1.8-3.7 .3-1.7-.2-2 .6-1.8 .4-2.9 2-2.3 1.4-2.7 .3-2 .2-1 .4-3.1 .6-3.5 2.3-3 .8-1.4-2.6-4.4-.2-3.1 .3-1.8-.9 2.7-3.6 .4-2.8 1.1-.5 .9-2.7-.3-1-.5-2.4 1.7-3.5 1.2 .3 2.7 0 2.7 .4 1.8 .7 2.3 1.2-.8 2 1.5-.1-1 1.7 .6 .9-3.1 .6-.8 1.2-1.6 .2-1.2-.9-2.8-1.8 .6-2.7 .2-1.9 2.3 .1 1.6 .4 3.3 .9 0 2-1.8 2.7-4.2-1.2-1.1-1-1.3-.9 1.2-2.3 2.9-1.5 1.4 0 2.7 1.9 1 .4 0 2.7-.9 2.1-1.1 1.6-4.2 .6-1.5 1.2-3.8-.1-1.6-.5-1.7 0-2.2 .1-3.6-1.8-2.9 .7-2-1.6-2.2 1.6-2.1 .4-2.1-2.6-.1 .7-3.2-1.9-2.4 0-1.6-.3-2.9 .6-3 .2-2.7 3.2-.5 .2-.8 1.3 1.1 .1-.2 2.1-2.4 .2-2.2 3.7-1.1-.2-2.4-.5-.5 2.5 1.3 3-2.4 1.1-2.3 0M818.7 603.5l1.7 .4 3.5 .9 .4 .9 1.5 1.2 1.7 1.9 1.7 1.3 .2 2.5 4.2 1.8 2.2 .8 1.7-.7-.8 1.1 .7 2.5-.5 1.3 .8 .7-2.8 1.2-2.7 .8-.1 1.8 .2 .8 2.3 .7-.1 1.8 2 2.3 4.6-.2 1.4-.7 2.5-1.4-.3-1.8-1.7-1.6-2.1-.5-2.4-1.8-2.2 1.5-.8-.7-1.5 3.1-.9 1 .9 .7 2.6 0 .5 .7 1.3 .1 2.2-.3 3.5-2.1 .9-2.4 2.6-.9-.1-1.8 2.8-1.7-.3 .5 .6-1.1 2.2-1.8-.1-1.9 2.6-1.6 .1-2.6-.3-1.4 2.6-.6 1.1-.4 3.9-2.9 3.4-.4-.5-.1 1.6-1.8 1 .4 .6-.1 .5-2.9 1.3-3-.2-2.9-2.2-.6 1.9-.7-.8-1.7 0-.4 1.9-1.7-1.5-3.5 3.2-2.4 1.3 0 3.3-.3 2.1 .8 1.8-1.1 1 2.2 2.4 3.2 2 .6 1.8 .3 2.9-.6 2.7 .7 .3-1.6 1.3-1.1-1.1-.7-.5-1.2-1.3-.8-1.1-1.2-3.1-1.9-.3-2.2-1.1-1.2-1.9-1.9-1-.3-3.2-.3 .6-.9-1.4-.5-2.7-3.6-5 1.3-1.6 .4-3.1-1.1-1.2 .9-1.9 .2-2.5 2.2 .8 1.1-1.3 .9-.5 1.6 2 2.9-.2-.1 2.1-2 5-1.8 2.1-.2 1.4-1.1 1.6-1.2 1.3-2.3 .9-.6-1.7-1.4-1.3 1-3.7-.9-1.8-1.2-3.4 1-1.8 .3-.9-.6-2.7 .9-1.1 .8-1.2 1.3-2.8 .3-.8 2-.9 2.4 1.8 1.2 1.1 1.1 1.8 1.8 1.9-1.1 4.3 .4 1.4-1.9 1.2-1.9 .3 .2-1.9-1.4-2.4-2.7-1.3-.2-2.4 .4-4.1-.6-1.5-.9-3.3-.7-.9 0 2.2-3.6 3.3 .9 1.2 1.5 .9 .1 3.7-1.8 2.2 .3 .6-1.1-2.4 .4-3.3-1-3.6-.1-2.1 2.1-2.6 .6-2.2-.1-4.3 .2-2.6 .5-1.6-.2-1.2 3.4-.8 .8-1.7 .6-1.4 .7-2.8 2-3.1 .3-1 .9-2.8 .7-2-.8-2.1 1.2-1.7 0-2 2.1-1.8 1.8-2.6 .2-2.3 2.7-.1 .4-2.6-1.4 1.1 1.7-2.3 1.8-2.3-.1-.7 2.6-1.4 1.6M524.2 620.9l1.8 0 3 .7 .1-1.2 2.8 2.2 1.5-.7 2.1 1.3 4.6 2.3 2.2-.5 2.5 2.2 .7 2.3 1-.8 .8-.4 3.2-.2-1-1.2-1.3-2.5-.1 2.2-2.5 .5 2.6 1 3.4 1.9-.2-1.5 .7-1.5-1.7-1.3-3.4 .3-.6 .8-2.7-.5 2.2 2.6 .6 1.3-.1 1.6 2.9 1.2 3-.6 3-.6 2.7 1.2 2.3 .4 2.4-1.3 2.3-1.2 1.8-1.8 1.6-1 1.8-1.7 .7-1.4-1.3 .1 .6-3.8-.9 0-.4-1.1-.8-1.5-2-.1-3.7-.6-3.2-2.6-2.2 .4-1-1.3-.7-.8 .4-2.5-3.9-1.6-.9-1.7-2 .2-1.5-.7-3.2 .2-4.1-.1-.8 0-4.4-1.9-2.4-.1-3.3 2.7-.8 .6-2.7 2.1-1.2-.6-.4 2-1.4 .9 1.1 2.4 3.3 .8 1.2 .6 2.1-.9 1.5 .2 3.3-1.4 .4-.7-.9-.1-2.3-.8-.4-1.8-2.9-1.3-1.9 .4-3.2 1.2-2-4.4 2.2 .4 5-.3 2.1 .6 1.3 .5 3-2.2 5.7 .4 .8 .3 4.1-1.3-.5-2 2.3 1.9 1.1-2.8 4.5-2.1 2.8 2.2 2 .1 1.7-2.7 1.2 1.7 2 .8 2.4-1.3 3.4-.4 4.1 .3 .1 1.2 2.1 1.2 .1 2.3 .2 .3-.6 1.6-1.3 2.9-.2 2.7 1.6 2.2 1.6 .9 1.1 2.6 2.8-.4 .6 1.9 .4-.4 2.7 3.3 .1 2.8 .3 1.7 3.1-1.6-.6 1.6 1.4 2.6 .2 1.5-2.6 1.5-.6-.1-1.2 1.5-1.9-.3-2.7-.5-.4-.3-2.1-1.2-1.3-3.7 0-1.5-2.1-2.8-2.3-.8-2.3-1.5-2.3-.6-3.7-.5-3.7 2.7-.5 1 3.2 2.7 4.4 1.4 2-1.2 4.6-.3-1.2-.5-1.2-2.8-3.8-2.4-4 1.3 .2 2 .5 1.3 3.2 .9 3.8-.9 1.1 1.2 1-1.6 3-1 .3-2 4.3-.6 2.9-1.1-1-1 .3-2.4 3-2.2-.3 .9 1.7-1.3 1.4 .2 3.6-2.8 1.5-1.8 2.3 1.8-.3 1.8-3 1 .4 1.4-1.3 3.1-2 1.1-1 2.4-1.1-.9 .2 .1-4.4 3.4-3.7 1 .7 .5-3.6-2.6-1.3 1.4-1.1-2.2 1.8-2.9 2.2-1.3 .4-2.5 2.3-1.3 2.1-.4 1.7-1.7 2.6-.6 3.9 1.3 1.9-.3 1.2-.3-3-3.2-1.2-.1-1.8 .4-1-1.4-2.6-1.8-.6-1.3-.9-3.2-2.2 1-3.5-2.4-2.5 .4-1.5 1.5-4.6-.5-2.5 1.3-1.6 2.1 .3 .7 .5 1.8 3.2 2.1 .2-.2 3.4-.3 2 1.4 .8-.8-.2-2.6-1-2.6-1.1 .6-2.1-.2-2.4-1-2.2 1.2-1.3 .5-1.6 .9-1.8 1.3-1.1 .1-2.7 1.4-5-.1 .7 .4-2.4 1.2-1.7 2-4.1-1.4-.9-1.5-4.6-.9-2.6-1-1.5 1.1-3.7 1.8-1.1 .8-4.2 1.2-1.1 1.4-2.9-.2-.3 1.8 1.4 .7 2.3 .7 .1 2.4-.6 .8 .7 2-2.6 1 .8 1.4-1.1 .9 2.2 .9 2.5 .8 1.7 2 1 .8 3.3 1.2 3.1 .1 .5 .8" stroke="#5a9e2c" stroke-width="1.600" stroke-opacity="0.860"/>
<path d="M460.7 549.2L608.4 547.9L748.8 543.9L785.7 546.5" stroke="#e0524f" stroke-width="1.700"/>
<path d="M460.7 614.6L756.2 616.6" stroke="#3aa845" stroke-width="1.600" stroke-opacity="0.860"/>
<path d="M502.7 638.9l2.3-1.5 2.4-1.4 2.7 1.3 .7 2-.4 2-.2 2 .2 2 .2 2 .6 2 .5 2-2.8 1.1-2.9 1-3 1-3 .9-2.9 1.1-2.7 1.2-2.4 1.5-2.4 1.4-2.2 1.5-2.1 1.6-1.9 1.7-1.9 1.7-1.9 1.6-1.8 1.7-1.6 1.8-1.4 1.9-1.1 1.9-3.4-.4-1.9-1.7-.6-2 .6-2 .5-2 .3-2-.4-2-1.4-1.9-2.4-1.4-.3-2-.3-2.1-.2-2 1.9-1.6 1.7-1.8 1.5-1.8 1.2-1.9 .3-2-.5-2-1.3-1.9-2-1.7 .9-1.9 .6-2 .8-2 3.3-.5 3.2-.6 3-.9 2.9-1.1 2.8-1.2 2.2-1.5 2.1-1.6 1.4-1.9-3.3-.5-3.4-.1-3.3 .2-2.3 1.4-2 1.7-1.5 1.8-.8 2-.5 2-.2 2-.1 2 0 2.1 .6 2 1.3 1.8 2 1.7 2.3 1.5 2.8 1.1 3.1 .8 3.2 .7 3.1 .8 3 .9 3.2 .7 3.2 .6 3.3 .5 3.1 .8 3 .9-.4 2.1-.1 2-.2 2-.3 2-.4 2-.2 2.1-.2 2-2.7 1.2-2.7 1.2-2.9 1-3.1 .8-3.4 .4-3.3-.2-3.2-.7-2.8-1.1-2.4-1.4-2.1-1.6-1.8-1.7-1.3-1.9-1.1-1.9-1.2-1.9-.7-2-.1-2 .5-2 1.3-1.9 1.6-1.8 2-1.6 2.3-1.5 2.8-1.1 3-1 3.1-.7 3.4-.3 3.3-.2 3.4-.1 3.4-.2 3.3-.5 3.1-.7-1.1-1.9-1.1-1.9-1.1-2-1.5-1.8-1.6-1.8-1.7-1.7-2-1.7-2.2-1.5-2.6-1.3-2.9-1-3.3-.5-3.4 0-3.2 .7-2.8 1-2.7 1.3-2.2 1.5-1.8 1.7-1.4 1.9-.6 2 0 2 .4 2 .7 2 .9 1.9 .8 2 1.1 1.9 1.4 1.9 1.3 1.9 .7 1.9 .2 2.1-.8 1.9-1.6 1.8-2.3 1.5-2.7 1.2-3 1-2.6-1.3-1-1.9 .1-2 .8-2 .7-2 .3-2 .2-2M574.9 690.9l2.9 1-1.5 1.8-1.3 1.9-3-1-2.7-1.2-2.3-1.5-2.1-1.6-1.9-1.6-1.6-1.8-1.8-1.7-2-1.7-2.7-1.2-3.1-.8-3-.9-2.9-1.1-2.7-1.2-2.5-1.4-1.9-1.6-1.4-1.9-.9-1.9-.5-2 .1-2.1 .5-2 1-1.9 1.4-1.9 1.4-1.8 1.5-1.8 1.9-1.7 1.9-1.7 2.2-1.5 2.7-1.3 2.7-1.1 2.8-1.2 2.9-1.1 2.8-1.1 3.1-.8 3.2-.6 3.3-.5 3.3-.4 3.3-.4 3.2-.8 2.8-1.1 2.1-1.6-3.1-.8-3.1-.8-3.2-.7-3.2-.5-3.4-.2-3.4 .2-3.2 .6-2.8 1.1-2.5 1.4-2.5 1.4-2.5 1.3-2.5 1.4-2.2 1.5-1.9 1.7-1.8 1.7-1.8 1.7-1.9 1.7-2.3 1.5-2.6 1.3-2.4 1.4-2.2 1.6-2.2 1.5-2.4 1.4-2.4 1.5-2 1.6-2 1.6-1.9 1.7-1.6 1.8-1.4 1.9-.8 1.9-1 2-1.5 1.8-2.2 1.5 .4 2 2 1.7 2.3 1.5 2.6 1.3 2.6 1.2 2.8 1.2 2.9 1.1 2.9 1 2.9 1 2.9 1 3 .9 3.1 1 3.1 .7 3.3 .4 3.4 .1 3.3-.4 3.1-.8 2.7-1.2 2.1-1.6 1.1-1.9 .4-2-.1-2.1-.2-2-.7-2-1.4-1.8-1.9-1.7-2.5-1.4-2.6-1.3-2.5-1.3-2.4-1.5-2.3-1.5-2.3-1.4-2.2-1.6-1.9-1.6-1.4-1.9-.7-2 .3-2 .9-2 1.7-1.7 2.4-1.4 3.1-.9 3.4-.1 3.2 .6 2.7 1.2 1.9 1.7 1.3 1.9 .9 1.9 .2 2-.6 2-1.1 1.9-1.4 1.9-1.7 1.7-1.9 1.7-1.7 1.8-1.4 1.8-.9 2-.4 2 .3 2 1 2 1.4 1.8 2.1 1.6 2.5 1.4 2.5 1.3 2.5 1.4 2.6 1.3 2.4 1.4 2.3 1.5 3.2-.6 3.2-.7 1.8-1.7 1.7-1.7 1.7-1.8 2-1.6 2.3-1.5 2.7-1.3-1.8-1.7-1.6-1.8-1.7-1.7-1.9-1.7-2.2-1.6-2.1-1.5-2.3-1.5-2.5-1.4-2.8-1.1-3.2-.6-3.3-.3-3.4 0-3.4 .3-3.1 .8-2.5 1.3-2 1.7-.8 2 .6 2 1.6 1.7 2.5 1.4 3.1 .9 3.3 .4 3.3 .4 3.3 .5 3.2 .7 2.8 1 2.5 1.4 1.7 1.8 .7 1.9 0 2.1-.2 2 3.4 .2 2.6-1.3 1.2-1.9 .5-2 .5-2 .7-2 1.3-1.8 2.1-1.6 2.8-1.2 1.3 1.8-1.3 1.9-2.4 1.4-2.4 1.4-2.8 1.2-3 .9-3.1 .9-3.2 .6-3.4 .2-3.3-.2-3.4-.3-3.2-.7-3-.9-2.9-1.1-2.6-1.2-2.3-1.5-1.2-1.9 .2-2 1-2 1.8-1.7 2.3-1.5 2.8-1.1 3-.9 3.3-.5 3.4-.2 3.3 .4 3.2 .6 3.1 .8 2.9 1 2.9 1 3 1 3.1 .9 3.1 .7-.1 2.1-2.2 1.5-2.1 1.6-1.8 1.7-1.7 1.7-1.6 1.8-1.4 1.9 3 .9 3.2-.7 2.2-1.5 1.7-1.8 1.3-1.9 1-1.9 .8-2 .7-2 0-2-.5-2-.6-2-.6-2-.8-1.9-1.1-2-.9-1.9-1.1-1.9-1.2-1.9-1.4-1.9-1.2-1.9-1.2-1.9-1-1.9-1-1.9-1.5-1.9-2.3-1.5-2.7-1.1-3.2-.8-3.3-.2-3.4 .4-3 .9-2.6 1.3-2.2 1.5-2.2 1.6-2 1.6-1.7 1.8-.9 1.9 .1 2 .9 2 1.4 1.8 2 1.7 2.1 1.6 2.7 1.2 3 .9 3.1 .8 3.2 .7 3.3 .5 3.3 .3 3.4 .1 3.3-.2 3.1-.8 2.7-1.3 2.1-1.6 1.5-1.8 .9-1.9 .6-2 .3-2.1 .2-2-.1-2-.1-2-.4-2-.4-2.1-.4-2-2.7-1.1-2.6-1.4-2.4-1.4-2.7-1.2-3.1-.9-3.2-.6-3.2-.5-3.3-.6-3.2-.6-3.2-.7-3.2-.6-3.2-.6-3.4-.3-3.3 .1-3.4 .3-3.3 .5-3.1 .8-3.1 .8-3.1 .7-3 1-2.9 1.1-2.6 1.2-2.4 1.5-2.2 1.5-2 1.6-1.8 1.8-1.3 1.8-.7 2-.2 2-.1 2.1 .1 2 .1 2-.4 2-1.5 1.9-2.3 1.5-3.1 .8-1-1.9 1.4-1.9 1.3-1.9 1.7-1.7 2.2-1.6 2.5-1.3 2.7-1.2 2.8-1.1 3.1-.9 3.2-.7 3.2-.6 3.1-.8 3.2-.7 3.2-.7 3.2-.6 3.3-.4 3.4 0 3.3 .2 3.4 .1 3.4 .2 3.3 .4 3 1 2.6 1.2 2.2 1.6 2.2 1.5 2.2 1.6 2.5 1.4 2.5 1.3 2.9 1.1 2.9 .9 3.2 .8 3.2 .6 3.3 .5 1-1.9-1.4-1.9-1.5-1.8-1.3-1.9-1.3-1.8-1.4-1.9-1.2-1.8-.9-2-.4-2 .3-2 .8-2-2.3-1.5-2.1-1.5-2-1.7-1.5-1.8-.7-2 .3-2-3-1-2.9-1-2.8-1.1-2.8-1.2-2.5-1.3-2.3-1.5-3.1-.7-3.4 0-3.4 0-3.4 0-3.3-.3-2 1.7-2.2 1.5-2.3 1.5-2.3 1.5-2.3 1.4-2.5 1.4-2.5 1.4-2.5 1.4-2.6 1.3-2.7 1.2-2.7 1.2-2.8 1.2-2.7 1.1-2.8 1.2 .4 2 .3 2-.5 2-1.5 1.8-2.1 1.6 1.1 1.9 .5 2-.1 2.1-1 1.9-1.7 1.8 1.4 1.8 1 2 .5 2 .1 2-.1 2-.3 2 2.7 1.2 2.4 1.5 1.7 1.7 1 2 .9 1.9 .9 2 1 1.9 1.2 1.9 1.4 1.9 3.3 .6 3.3 .4 3.3 .1 3.4 .1 3.3 .4 3.4 .3 3.3 .4 3.3 .4 3.3 .5 3.3 .3 3.4 .3 3.3 .3 3.2 .6 2.4-1.4 2.4-1.4 2.7-1.3 2.9-1 2.7-1.2 2.6-1.3 .9-2 .6-2 .4-2 .1-2-.2-2 0-2.1-.1-2 .5-2 1.1-1.9 1.9-1.7 2.7-1.2 3.2-.6 2.3-1.6 .6-1.9-.6-2-1-2-1.3-1.9-1.6-1.8-1.7-1.7-1.7-1.7-1.8-1.7-1.2-1.9-1.1-2-.6-2 0-2 1.1-1.9 2.2-1.6-1.3-1.8-2.8-1.2-2.9-1-3.1-.8-3-.9-3.2-.8-3.1-.7-3.2-.7-3.3-.4-3.4-.1-3.3 .1-3.4 .1-3.4 .2-3.4 0-3.3 .1-3.4 .3-3.3 .2-3.4 .3-3.4 .1-3.3 0-1.4 1.9-1.6 1.8-1.7 1.7-2.4 1.5-2.7 1.2-.1 2-.2 2.1-.3 2-.1 2 .3 2 1.4 1.9 2.1 1.6 2.5 1.3 2.8 1.2 3 .9 3.1 .8 3.3 .4 3.4 0 3.3-.4 3.3-.5 3.3-.4 3.2-.7 3.1-.9 2.7-1.1 2.3-1.5 1.5-1.8 .5-2-.6-2-1.3-1.9-1.7-1.8-2.4-1.4-2.8-1.1-3.3-.6-3.3-.2-3.4-.1-3.4 0-3.3 .1-3.4-.2-3.3-.5-3-.9-2.6-1.3 2-1.7 2.1-1.6 2.6-1.3 2.5-1.3 2-1.6 1.7-1.8 3.3 .5 3.1 .9 2.5 1.3 2.3 1.5 2.3 1.5 2.3 1.4 1.9 1.7 1.2 1.9 .4 2-.1 2-.2 2.1-.3 2-.1 2-.1 2 0 2.1 .6 2 .9 1.9 1.1 1.9 1.3 1.9 1.4 1.9 1.8 1.6 2.1 1.6 2.5 1.5 2.4 1.4 2.7 1.2 2.7 1.2 3 1 3.1 .8 3.1 .8 3.2 .6 3.3 .5 3.3 .5 1-2 .9-1.9 .9-2 1.3-1.9-2.1-1.6-1.7-1.7-1.4-1.9-1.2-1.9-.7-1.9 .3-2.1 .9-1.9 1.5-1.8 2.3-1.5-.2-2-.3-2.1-1-1.9-3.1-.7-3.1-.9-2.9-1-2.8-1.2-2.5-1.3-1.7-1.8-1.1-1.9-.3-2 .4-2 1.3-1.9-1.4-1.9-2.9-1-3.3-.4-3.2-.6-3-1-3.4-.2-3.3-.5-3.1-.7-3.4 .3-3 .9-3.3 .5-3.3 .3-.8 2-1 1.9-.9 2-1.2 1.9-1.5 1.8-1.5 1.8-1.2 1.9-1.3 1.9-1.5 1.8-1.2 1.9-1.2 1.9-1 1.9-1.3 1.9-1.4 1.9-1.6 1.7-2 1.7-2.2 1.5-2.3 1.5-2.6 1.3-2.2 1.5-2.1 1.6-2.9-1-.9-1.9 .5-2 1.1-2 1.6-1.8 1.5-1.8 1.6-1.8 1.7-1.7 1.4-1.8 1.5-1.9 1.9-1.6 2.3-1.5 2.8-1.2 3.1-.7 3.4-.3 3.3-.1 3.4 .1 3.4 .2 3.4-.1 3.2-.6 2.7-1.3M650.3 666.4l2.2 1.5 2 1.7 1.8 1.7 1.7 1.7 1.4 1.9 .6 2 0 2-.9 1.9-1.4 1.9-1.7 1.7-1.8 1.8-1.7 1.7-1.5 1.8-1.7 1.8-1.9 1.6-2.1 1.6-2.4 1.5-2.5 1.3-2.7 1.3-2.9 1-3.2 .7-3.2-.6-3-.9-2.8-1.2-1.8-1.7-.6-2 .1-2 .1-2.1-.1-2-.7-2-1.8-1.7-2.5-1.3-2.9-1.1-3.2-.6-3.4 0-3.3 .4-3.2 .6-1.6-1.8 .9-1.9 .5-2 .5-2 .9-2 1.4-1.8 2-1.6 2.8-1.2 3.3-.5 3.3 .2 3.2 .7 2.6 1.3 2.3 1.5 2 1.6 2 1.6 2.1 1.6 2.2 1.6 2.3 1.5 2.4 1.4 2.2 1.5 1.9 1.7 1.8 1.7 1.7 1.8 1.9 1.6 2.2 1.6 2.7 1.2 2.6 1.3 2.4 1.4 2.4 1.5 2.2 1.5-1.9 1.7-3.2 .5-3.3 .5-3.2 .7-3-.9-3-.8-2.8-1.2-2.2-1.6-1.5-1.8-1.2-1.9-.7-1.9-.4-2.1 .4-2 1-1.9 1.7-1.8 2.4-1.4 3-.9 3.3-.5 3.4 0 3.2 .5 3 1 2.8 1.1 2.7 1.2 2.4 1.4 2.2 1.6 1.7 1.7 1.4 1.9 1.4 1.8 3.4 .3 3-.9 2.4-1.4 1.8-1.7 1.3-1.9 1-1.9 .9-2 .6-2 .4-2 .4-2 .7-2 1.1-1.9 .9-1.9 .7-2 .2-2.1-.3-2-1-1.9-1.6-1.8-1.4-1.8-1.3-1.9-.8-2-.5-2 0-2 .6-2 1-1.9 1-2 .4-2-.4-2-1.6-1.8-2.7-1.3-3.2-.6-3.4 0-3.3 .4-3.2 .7-2.9 1-2.9 1-2.9 1.1-2.9 1-2.9 1-2.9 1.1-2.7 1.2-2.7 1.2-2.8 1.2-2.7 1.2-2.9 1-3.1 .8-3.3 .5-3.3 .5-3.2 .7-3.1 .8-3.1 .8-3 .9-3.1 .8-3.3 .6-3.3 .2-3.4-.1-3.2-.6-3.1-.8-2.3 1.5-.2 2 1 1.9 .7 2 .5 2 .2 2 .4 2.1 .7 1.9 1 2 1 1.9 1.2 1.9 .8 2 2.7 1.2 2.8 1.2 3 .9 3.1 .7 3.4 .3 3.4-.1 3.3-.4 3.1-.8 2.6-1.3 2.1-1.5 1.4-1.9 .8-2 .7-2 .6-2 .8-1.9 .8-2 .9-2 1.1-1.9 1.4-1.8 1.7-1.8 2-1.6 1.8-1.7 1.6-1.8 1-1.9 .2-2.1 .3-2 .4-2 .3-2-.3-2-1.1-2-1.7-1.7-2.4-1.5-2.7-1.2-2.8-1.1-3.1-.8-3.3-.5-3.3-.4-3.3-.5-3.3-.3-3.4 0-3.3-.3-3.4-.3-3.3-.2-3.4 .1 .3 2 .3 2 .3 2 .9 2 .8 2 .8 1.9 .7 2 .4 2 .1 2.1-.5 2-.9 1.9-1.3 1.9-1.3 1.9-1.2 1.9-1.4 1.8-1.5 1.8-1.2 1.9-.8 2-.4 2 0 2 1.3 1.9 2.2 1.6 2.8 1.1 3.2 .7 3.3 .3 3.4 0 3.3-.6 3-.9 2.4-1.4 1.5-1.8 .6-2-.5-2-1.2-1.9-1.7-1.8-2.5-1.3-3.2-.8-3.3-.3-3.4-.1-3.3 .4-3.3 .5-3.2 .5-3.3 .6-2.4-1.4-1.1-1.9 0-2.1 .6-2 .4-2 2.9-1 2.7-1.2 2.5-1.4 2-1.6 1.8-1.7 1.6-1.8 .7-2 .1-2-.5-2-1.3-1.9-1.2-1.9-1.1-1.9-.7-2-.4-2 3.3-.5 3.3-.3 3.4 0 3.3 .4 3.3 .5 3.3 .5 3.3 .3 3.4 .2 3.4 .2 3.3 .1 3.4 0 3.4-.3 3.2-.4 3.2-.7 2.9-1.1 2.7-1.2 2.3-1.5 2.2-1.5 1.9-1.7 1.9-1.7 1.5-1.8 1.6-1.8 3.2 .6 3.2 .7 2.1 1.6 1.2 1.8 1.2 1.9 1.5 1.9 1.2 1.9 .6 2 .3 2-.2 2-.7 2-1.6 1.7-2.7 1.3-3.1 .8-3.2 .7-3.2 .6-3.3 .5-3.3 .4-3.2 .6-3 .9-2.8 1.2-2.2 1.5-1.8 1.7-1 2-.2 2 .2 2 0 2-.2 2.1-.6 2-.7 2-1.3 1.8-1.8 1.7-2.1 1.6-2.1 1.6-1.9 1.7-1.8 1.7-2 1.6-2.3 1.5-2.7 1.3-2.9 1-3.4 .4-3.3-.1-3.3-.5-3.1-.8-3.2-.7-3-.9-3-1-2.8-1.1-.4-2 0-2 .4-2.1 .3-2 .3-2 0-2-.4-2-.5-2-.5-2.1-.8-1.9-1.3-1.9 2.2-1.5 2.4-1.5 2.7-1.2 2.9-1 3.1-.8 3.1-.9 3.1-.7 2.9-1.1 2.4-1.4 2.2-1.5 2.2-1.6 2.2-1.5 2.4-1.5 2.4-1.4 2.4-1.4 2.9-1.1 3-.9 2.9-1 3.1-.9 3.1-.7 3.3-.5 3.3-.3 3.4-.1 3.3-.5 3.2-.6 3.3-.4 3.4-.4 3.3-.2 3.4-.3 2.1 1.5 .1 2.1 .6 1.9 1.2 2 1.3 1.8 1.2 1.9 1.1 1.9 .6 2 .3 2-.3 2.1-.5 2-.4 2-.3 2-.2 2 .2 2.1-.1 2 .1 2 .2 2 .1 2.1-.4 2-.5 2-1 1.9-1.2 1.9-1.7 1.8-2.1 1.6-2.5 1.3-2.5 1.4-2.9 1-3.1 .9-3.2 .7-3.3 .3-3.3 .3-3.4-.3-3.1-.8-2.9-1-3-1-3.1-.7-3.3-.4-3.4-.4-3.3-.2-3.4 0-3.3 .3-3.3 .6M652.3 488.9l-2.7 1.2-2.3 1.5-1.9 1.7-2 1.6-2 1.6-2 1.7-1.8 1.7-1.6 1.8-1.7 1.7-1.7 1.8-2.1 1.6-2.4 1.4 .6 2 .1 2-.2 2-.4 2.1 .1 2 3 1 3 .9 3.1 .8 3 .9 3 1 3 .9 3 .9 2.9 1.1 2.6 1.3 2.7 1.2 2.6 1.3 2.5-1.4 2.5-1.4 2.9-1-.6-2-.4-2 0-2.1 0-2-.2-2 0-2 .8-2 1.2-1.9 1.7-1.8 2.2-1.5 2.3-1.5-2.4-1.4-2.7-1.2-2.7-1.2-2.5-1.4-2.5-1.3-2.7-1.3-3.1-.8-3-.9-3-.9-3-1-3-.8-3.3-.7-3.2-.6-3-.9-3 1-1.5 1.8-.4 2-.5 2-1.2 1.9 .1 2.1-.6 2-.9 1.9 1.3 1.9 1.1 1.9 1.4 1.8 1.4 1.9 1.1 1.9 1 1.9 .6 2 .5 2 .4 2.1 .3 2 .4 2 .7 2 3 .9 3 .9 3 1 3 .9 3.3 .5 1.9-1.7 2-1.6 2-1.7 1.8-1.7 1.4-1.8 .5-2-.6-2-1.7-1.8-2.6-1.3-3-1-3.1-.7-3.4-.3-3.3 0-3.3 .4-3 1-2.8 1.1-2.5 1.4-2.6 1.3-2.4-1.5M729.8 593.7l1.8 1.7 1.8 1.7 1.4 1.9-2.6 1.3-3.3 .1-3.3-.5-3.4-.2-3.3 .2-3.1-.9-2.8-1.1-2.5-1.4-1.5-1.8-.4-2 .6-2 1.4-1.9 1.9-1.6 2.3-1.5 2.3-1.5 2.4-1.4 2.9-1.1 3-.9 3.2-.7 3.3-.4 3.4 0 3.3 .4 3.3 .5 3.1 .8 3 1 2.6 1.3 2.2 1.5 2 1.6 2 1.6 2 1.7-2.3 1.4-2.7 1.3-2.5 1.3-2.1 1.6-1.7 1.8-1.9 1.7-3 .8-3.4 .3-3.4-.1-3.3-.2-3.4-.2-3.2-.5-3.1-.8-2.9-1.1-2.1-1.6-1.4-1.9-.3-2 .5-2 1.1-1.9 1.5-1.8 2-1.6 2.3-1.5 1.9-1.7 2.2-1.6 2.2-1.5 2.4-1.4 2.7-1.2 2.9-1.1 3-.9 3.2-.7 3.3-.3 3.4 .2 3.2 .7 2.7 1.2 2 1.6 1.4 1.9-1.5 1.8-1.5 1.8-1.8 1.7-2.2 1.6-2.3 1.5-2.5 1.4-2.5 1.3-2.6 1.3-3 .9-3.3 .6-3.4 0-3.3-.2-3.3-.4-3.2-.6-3.1-.9-3-.9-3-1-2.7-1.2-2.6-1.3-2-1.6-1.5-1.8-1.4-1.9-1-1.9-1-2-1-1.9-1.6-1.8-2.5-1.4-3-.9-3.1-.8-3.3-.5-3.3-.4-3.3-.4-3.3-.3-3.4 .2-3.2 .6-3.3 .5-3.4 .3-3.3 .1-3.4-.1-3.4-.2-3.3-.3-3.4-.2-3.3-.1-3.4 0-3.4 .1-3.4 .1-3.3 .2 .8 2 1.1 1.9 1.3 1.9 1.2 1.9 1.5 1.8 1.6 1.8 2.1 1.6 2.2 1.5 2.6 1.3 3 .9 3.3 .5 3.4 0 3.3-.5 3-.9 2.6-1.3 2.2-1.6 1.6-1.7 1.1-2 .1-2-.5-2-1.7-1.7-2.7-1.3-3.2-.5-3.4 .2-3.2 .6-3 1-2.4 1.4-1.9 1.7-1.2 1.9-1.3 1.9-1.7 1.7-1.8 1.7-1.5 1.8-1.2 1.9-.7 2-.4 2 0 2.1-3.3 .4-2.9-1.1-1.9-1.6-1.3-1.9-1-1.9-.7-2-.3-2-.3-2.1 1.5-1.8 2.2-1.5 2.2-1.5 2.1-1.6 2-1.7 1.5-1.8 1.3-1.9 1.4-1.8 1.4-1.9 1.4-1.8 1.2-1.9 .9-1.9 .6-2 .7-2 1-2 1.8-1.7 1.9-1.6 2.1-1.6 2.5-1.4 2.3-1.5 2.3-1.5 1.9-1.6 1.1-2 .1-2-.7-2-1.3-1.8-1.9-1.7-2.5-1.4-2.9-1-3.1-.9-3.3-.5-3.3-.2-3.4 0-3.4 .1-3.3 .3-3.4 .3-3.2 .5-3.2 .6-3.2 .8-3.1 .8-3.2 .6-1.3 1.8 .4 2.1 1.3 1.8 1.6 1.8 2 1.6 2.5 1.4 2.3 1.5 2.1 1.6 1.6 1.8 1.3 1.9 1.1 1.9 .5 2 .5 2 .2 2 .2 2 .1 2.1 .1 2 .3 2 .3 2 .6 2 .6 2 .6 2 .8 2 1 1.9 1 2 1.2 1.9 1.4 1.8 1.2 1.9 1 1.9 .9 2 .5 2 .1 2 0 2.1-.1 2-.3 2 3 .9 3.1-.9 3.2-.5 3.4-.3 3.4 .3 1.8-1.7 2-1.7 2-1.6 1.9-1.7 2.1-1.6 2.5-1.3 3-.9 3.3-.6 3.4-.2 3.3-.1 3.4 0 3.4 .1 3.4 0 3.3 .1 3.4 0 3.4 .1 3.4 0 3.3-.4 3-1 2.8-1.1 3-.9 2.9-1 2.6-1.4 2.2-1.5 1.9-1.7 1.4-1.8 1.3-1.9M693.9 683.4l-.1-2-.6-2-1.2-1.9 .9-2 1.8-1.7 1.5-1.8 1.2-1.9 3.4 0 3.4-.2 3.1-.7 2.4-1.4 1.7-1.8 .6-2-.4-2-1-1.9-.7-2-.5-2 .2-2.1 .4-2 .5-2-3.4-.3-2.8 1.1-2.1 1.6-1.4 1.8-.9 2-.4 2-.3 2 .1 2.1 .4 2 .4 2 .7 2 1.1 1.9 1.6 1.8 1.7 1.7 1.7 1.8 1.6 1.8 1.7 1.7 1.4 1.9-2.3 1.4-2.6 1.3-2.7 1.3-2.7 1.2-2.6 1.2-2.5 1.4-2.5 1.4-2.5 1.4-2.4 1.4-2.4-1.5-2.3-1.4 .2-2 1.7-1.8 1.5-1.8 1.4-1.9 1.2-1.9 1.3-1.8 .9-2 1.5-1.8 1.3-1.9 1.6-1.8 1.3-1.8 1.5-1.9 1.7-1.7 2-1.6 2.2-1.6 2.2-1.5 2.2-1.6 1.8-1.7 1.5-1.8 .6-2 0-2-.4-2-.6-2-3.4 0-2.4 1.4-1.3 1.9-.5 2-.5 2-.6 2 0 2-.1 2-.2 2 0 2.1 .1 2 .9 1.9 1.6 1.8 2.1 1.6 2.2 1.6 2.4 1.4 3.3-.1 3-1 2.4-1.4 2-1.7 1.8-1.7 1.6-1.8 1.3-1.9 .8-1.9-.4-2-1.2-1.9-1.2-1.9-1.2-1.9-1.3-1.9-1.3-1.9-1.1-1.9-.8-2-.3-2 .4-2 1-1.9 1.4-1.9 2.3-1.5 2.9-1 2.3 1.5 1.8 1.7 1.3 1.9 .9 1.9-2.5 1.4-2.6 1.2-2.8 1.2-2.9 1-2.9 1.1-2.9 1-2.9 1-3 1-2.8 1.1-2.8 1.2-2.3-1.5 .2-2 1.8-1.7 2.8-1.1 2.6-1.3 2.2-1.5 2.2-1.6 2.2-1.6 2.3-1.4 2.5-1.4 2.6-1.3 2.8-1.1 3.1-.8 3.4 .1 3.2 .7 2.3 1.5-1.1 1.9-3.4-.1-3.4 .1-3.4 .3-3.3 .2-3.3 .5-3.2 .7-3.2 .5-.5-2 2-1.6 2-1.6 1.9-1.7 3.1-.8 3.4-.1 2.9 .9 3.1 .9 3 1 0 2-1.4 1.9-1.1 1.9-.9 1.9-1.1 2-1 1.9-1.1 1.9-.8 2-1.4 1.8-1.4 1.9-1.2 1.8-2.2 1.6-2 1.7-1.3 1.8-1 2-.6 2-.5 2 3.4 .1 2.4-1.4 1.4-1.9 .7-1.9 .2-2.1-.2-2-.9-2-1.3-1.8-1.8-1.7-2.2-1.6-2.3-1.5-2.4-1.4-2.7-1.2-2.8 1.1-1.3 1.9-1.8 1.7-2.2 1.5-2.1 1.6-1.7 1.8-1.4 1.8-1 2-.5 2 .1 2-.6 2-.9 1.9-1.4 1.9-1.5 1.8-1.5 1.8-1.2 1.9-.6 2 0 2 .4 2 .5 2.1 .7 1.9 .9 2 .6 2 1.1 1.9 3.4 .2 3.3 .1 2.7-1.3 1.6-1.8 1-1.9 .5-2 .2-2-.3-2.1-.7-2-1.2-1.8-1.4-1.9-.7-2 0-2 .9-2 1.9-1.7 2-1.6 2.3-1.5 2.3-1.4 2.5-1.4 2.6-1.3 2.7-1.2 2.8-1.1 2.8-1.2 2.3 1.5-.3 2-1.4 1.9-2.2 1.5-2.4 1.4-2.7 1.2-2.8 1.1-2.8 1.2-3 1-3 .9-3.2 .7-3.2 .5-3.4 .3-3.3 .3-.6-2 1.9-1.7 1.9-1.7 1.8-1.7 2-1.7 2-1.6 2.2-1.5 2.2-1.5 2.4-1.5 2.8-1.1 3-.9 3.2-.6 3.3-.6 3.3-.5 2.1 1.6-.3 2-1.5 1.8-2.2 1.5-2.1 1.7-2 1.6-1.8 1.7M750.6 556.6l-3.2-.5-3.2-.8-2.2 1.5-.1 2.1 .3 2 .9 1.9 1.4 1.9 1 1.9 1 2 .4 2 .1 2 .2 2 .6 2 1.3 1.9 1.8 1.7 2.4 1.4-1.7 1.8-3.4 .1-2.7-1.2-1.5-1.9 .1-2-.2-2-.5-2-.9-2-1.4-1.8 2.1-1.6 2-1.7 1.8-1.7 1.5-1.8 1.1-1.9 1-2 .8-1.9 .4-2.1 .2-2-.8-1.9 2.8-1.1 3.4 .2 2.8 1.1 2 1.6 1.3 1.9 .8 2 .5 2 0 2-2.5 1.4-2.2 1.5-2.3 1.5-2.3 1.5-2.2 1.5-2.1 1.6-1.9 1.7-1.8 1.7-1.3 1.9-.7 2 1.6 1.8 2.8 1.1 2.9-.9 3-1 2.7-1.2-.5-2-.8-2-1.4-1.8M883.5 587.2l-.9 2 .3 2 1.4 1.8 2.1 1.6 2.6 1.3 3.1 .9 3.2 .5 3.3 .5 3.4 .3 .9 1.9-1.2 1.9-1.1 2-.9 1.9-1.1 1.9-1.3 1.9-1.5 1.8-1.8 1.7-2.1 1.6-2.3 1.5-2.4 1.4-2.5 1.4-2.5 1.4-2.5 1.4-2.5 1.3-2.3 1.5-1.8 1.7-1.3 1.9 3.2 .6 3.2 .5 3.3 .4 3.4 .1 3.4-.3 3.4-.1 3.3-.2 3.4-.1 1.9-1.7 .2-2 .2-2.1-.2-2-.1-2 .2-2 .7-2-.2-2 .3-2.1-.1-2 0-2 .4-2-2.4-1.4-2.6-1.3-2.8-1.2-2.7-1.2-2.4-1.5-2.3-1.4-1.9-1.7-1.6-1.8-1.5-1.8-1.7-1.8-1.7-1.7-1.8-1.7-1.9-1.7-1.7-1.8-1.5-1.8-1.3-1.8-1.2-1.9-1.3-1.9 2.6-1.3 2.8-1.2 2.7-1.1 2.9-1.1 2.8-1.1 2.8-1.2 2.6-1.2-1.6-1.8-1.3-1.9-1.3-1.9-1.4-1.8-1.6-1.8-3.2 .6-3.2 .6-3.3 .5-3.4 .1-2.1 1.6-.2 2 .8 2 1.4 1.8 1.7 1.8 1.1 1.9 1.4 1.9 2.1 1.6 2.6 1.2 3.1 .9 3.1 .7 3.1 .8 3.2 .7 3.3 .5 3.4 .2 2.2 1.5 .8 2 .4 2 .2 2-.1 2 .2 2.1 .4 2 .2 2 .4 2 .5 2 .7 2 .7 2 .5 2 .3 2-3.1 .9-3.1 .7-3.4 .2-3.4 0-3.3-.1-3.4-.1-3.4 .2-3.3 .3-3.3 .4-3.3 .5-1 1.9 .9 2 .9 1.9 1.1 2 1.5 1.8 1.4 1.8 1.7 1.8 1.7 1.7 2.3 1.5 2.2 1.5 2.4 1.5 2.7 1.2 2.8 1.2 2.7 1.1 2.8 1.2 3 .9 1.3-1.9-1.3-1.9-1.4-1.8-1.7-1.8-2.2-1.5-2.7-1.2-3.1-.8-3.2-.7-3.2-.6-3.3-.5-3.2-.7-3-.9-.1-2 .1-2.1 .7-2 .9-1.9 1.2-1.9 1.6-1.8 2.1-1.6 2.5-1.3 2.9-1.1 3.2-.6 3.4-.3 3.3-.2 3.4 .2 3.3 .5-.5 2-.2 2.1 .2 2 .5 2 .9 1.9 0 2.1 .3 2-2.8 1.1-2.7 1.2-2.2 1.5-2 1.7-1.5 1.8-1.3 1.9-1.4 1.8-1.7 1.8-2 1.6-2.3 1.5-2 1.7-2.1 1.5-3-.9-1.1-1.9 .2-2.1 .3-2 .7-2 1.1-1.9 1.3-1.9 1.2-1.9 .6-2 0-2-1.2-1.9-1.4-1.8-1.8-1.8-1.9-1.6-2.2-1.6-.5-2-.8-2 2.7-1.2 2.7-1.3 3-.8 3.3-.5 3.4-.3 3.3-.1 3.4 .1 3.3 .4 3.2 .6 3.2 .8 1.2 1.9 .1 2-.2 2.1-.3 2-.4 2-1 1.9-2 1.7-2.8 1.1-3.2 .6-3.4 .1-3.3-.5-2.7-1.2-2-1.6-1.2-1.9-.4-2 0-2.1 .5-2 1-1.9 1.6-1.8 2.5-1.3 3.1-.9 3.2-.6 3.2-.7 3.1-.8 3.3-.4-.1-2.1 .2-2 .4-2 .6-2 .6-2 .7-2-.5-2-1.5-1.8-2.2-1.5-3-1-3.3-.6-3.3-.4-3.2-.6-3-.9-2.8-1.1-2.2-1.6-1.5-1.8M568.3 604.7l1.7-1.8 1.6-1.8 1.6-1.8 1.4-1.8 1.5-1.8 1.9-1.7 2.1-1.6 2.2-1.6 2.7-1.2 2.7-1.1 2.7-1.3 2.6-1.3 2.6-1.2 2.6-1.4 2.3-1.5 1.8-1.7 1.6-1.8 1.2-1.9 1-1.9 1.3-1.9 1.3-1.9 .8-1.9 .8-2 .6-2-2.8-1-2.8-1.3-3.3 .4-3.4 .2-3.3-.3-3.2-.7-3.1-.9-3 1-2.9 1-2.6 1.3-2.4 1.4-2.7 1.2-2.8 1.2-3.1 .8-3 .9-3 1-2.9 1-2.5 1.3-2.3 1.6-1.9 1.6-1.9 1.7-2.1 1.6-2.2 1.5-2 1.7 1.4 1.8 1.7 1.8 1.8 1.7 2 1.6 2 1.7 2.3 1.5 2.5 1.3 2.9 1.1 3.1 .8 3.1 .7 3.3 .5 3.3 .4 3.4 .1 3.4-.1 3.2-.6 2.7-1.2 2-1.7 1.3-1.9 .7-2 .3-2 .4-2 .3-2 .2-2 .1-2.1 .5-2 .9-1.9 1.5-1.8 1.6-1.8 2-1.6 2.8-1.2 3.1-.8 3.3-.4 3.4-.3 3.4-.1 3.3-.2 .7 2 .5 2 .5 2 .7 2 .8 2 .3 2-.5 2-1.5 1.8-1.9 1.7-2.3 1.5-2.9 1.1-3.2 .5-3.4 .2-3.3-.1-3.3-.5-2.9-1-2.4-1.5-1.7-1.7-.6-2 .8-2 1.3-1.9 1.9-1.6 2.4-1.4 3.1-.8 3.4-.2 3.3 .4 3.2 .6 3.3 .6 3.2 .5 3.4 .3 3.2 .6 3.3 .5-.1 2 0 2.1-.4 2-1 1.9-1.2 1.9-1.4 1.9-1.6 1.8-1.8 1.7-1.5 1.8-1.6 1.8-2 1.6-2.3 1.5-2.4 1.4-2.6 1.3-2.7 1.3-2.4 1.4-2.2 1.5-1.9 1.7-1.4 1.8-1.2 1.9-.6 2-.1 2.1 .8 1.9 1.5 1.8 2.1 1.6 2.5 1.4 2.8 1.1 3.2 .7 3.3 .2 3.4-.3 3.2-.6 3.1-.8 3.1-.8 3-.9 3-1 .7-2 .3-2 0-2 .1-2-.1-2.1-.2-2 .3-2 .6-2 .5-2 .5-2 .3-2 .1-2.1-.1-2-.6-2-.5-2-.6-2-.5-2 0-2 .5-2 .5-2-2.5-1.4-2.4-1.5-2.3-1.4-2.1-1.6-1.9-1.7-2.1-1.6-1.6-1.8-.7-2-3.1-.9-3-.9-2.9-1-2.7-1.3-2.8-1-3.1-.9-3.3-.5-3.3 .1-3.1 .8-2.5 1.4-2 1.6-.8 2-.1 2 1 1.9" stroke="#a650a4" stroke-width="1.600" stroke-opacity="0.860"/>
<path d="M481.4 451.9l-.9 1.5-3.4-.4-2.4-.4-4.3-1-1.2 .9-2.1 2.1-1.8-.6-2.1 3.1-1.3-.3 1.7 .5 3.5 2.7 .2 .6 1.3 .4 .2 .1 4.6-.6 0 .5 2-1.1 1.3-2.5 1.6-.9 1.5-1 1.8-.7 1.6-1.7 2.6-.7 0-.8 .9-.7 2-.8 1.5-.6 3.8 .2 3.3-.5 2 .4 1.4 2.8 2-1.6-.5 1.5 .3 1.6 .4 2.3-.4 1.5-.5 1.3-.4 .4-1.5 1.2-1.2 2.8-3.5-.3-2.4 .5-1.2-.5-2.3-1.4-1.9 .1-.2-2.1-2.8-2.1-.2-2.7-.5-.6 3.9-1.1-.1-.5 2-.1 3.2 .3 1.6-1.3 3.4 4.5 1.6 1 2.8 .9-.4 1.1 .9 0 1.8 .2 1 2.6 1.8-.7 1.1 4.4 .5 2 1.8 1.5-1.2 .6-.1 4.5-.7-.5-.1 2.7 .7 1.6 1.1 .2-.5 1.8-.4 .1-1.6 1.6-3-.8-3 .6-2.2 .8-3 0-.4-1-2.9-1.6-2.4 .2-3.4 .3-2.8 2.9-.6-1-1.6 3.4-2.3 1.2-1.6 1.1-1.8-.3-.5 1.9 1.9 3.5 .2 2-1.9 .9 2.2-.3 2.2 2 3.9 2.3 1.5 .4 3.4 .1 3.5 .4 1.3 .6 2-.3 2.8 2.5 1.9 .6 1.5-.1 3.9 .9 2 1.6 2.2-.7 2 .8 1.8 .8 2.6 .3 1.8-1.9 .9-2.6-.2-.5 .1-.4-2.4-2.5-1.6 0-3.2-1.4-2.5-3.2-.5-.8-3.5-1.5-1.7-.2-1.1 .1-2.2-2.3-.6-1.6-2.6-.7-1.5-2.1 0-1.2-1.4-1.9-1.9-.9-.9-1.4-.1-1 .1-3-2.6-2-1.5-1.8 1.5 .9 .5-.3 0-3 1.3-2.2 2.9-2.2 .3 1 1.9-1.8 2.2-1.1 2.7-1.8 .6-1 4.2 1.9 1 1.3-.1 3.2-1.4 0-2-.1-1.8 2.6-.6 3.2-1-.4-3.5-1.6-1.4-.6-1.6 1.9-.7-.6-5.7-.6-2.1-1.6-.3-1.8-.9-3.9 1.2 .9-.9-1.8 0-2.1-1.6-2.1-1.7-.2-1.1-1-2.3-2.9-.4-.7-3.2 .7-.7-.9-4.3 1.3-2 1.6-.4 1 1 1.9 2 .8-1.5 3.6 .1-.1 3-.8 1.5 1.1 2.2 2.7-.1 2.2-2.8 1.2-.4 2.4-.6 .8-1.1-.5-.7 1.3-3.2-.4-2.5-.7 2.7-2.6 1.6-1.7 1.1-.2 4.1-.1-.8-2.8 2.7-.5-.5 .3 1.7-.3 3.2-2.2 3.7 1.9 4.7-.6-.3 .9 3.4 2.2-.3 .5 3-.1 2.5 1.6 3.9 .2 2.5 .9-1.2 1.3-.1 2.5-5 1.3-2.7 0-.4 3.9-1.5 1.4 0-.1-1.2-.5-1.3 3.1-3.5 1.1-2.9 1.4-1.3-1.3-1.4-1.5-2-2.4-1.6-.9-1.3-.6-.9-1.4 0-.4 .1-1.9-2.6 0-1.8-1.4-3.1-1.3-2.7-.3-.4 1.4-1.1-.3-1 1.2 .1 2.1 1.5 3.1 .1-.2-.3 4.2-.5 2.6-.4 0 .2 .3 .6 1.9-.5-.3 2.2-.3 2.9 2.5 2.6-.1 2 4.3-.5 1.3 2.4 1.4 4.3 .5 2.2-1.4 2.4-1.2 4.2-.6 1.1-.1 0-1 2.5-2.2 3.5-.6 3.2 1.3-.1 2.9 2.2 1.1 1.6 .5 .8 3.1-.4 3M541.7 475.4l-.6 1.9-.1 2.2 .8 1.8-.4 1.4 2.5 .6-2.4 2.1-4.8 .1-1.6-.7-1-2.6-.9 .5 3.1 .3 1.7-2.4 3.6 .6 .9 2.8-1 2.4-.6-1.5-2.1 4.2-3.2-.1-3.1 .9-2.2-1.4-3.2-2.2-1.6-.7-.7-1.6-1-.1-3.3-.1 .5-2.3 .2-2.7 .4-1.7 3.6-.9 3.9 .6 1.9 0 1.1-.7 1.4-.7 1.7-1.2-.3-2.3-1-3.3 2 .2 3.8-3.5-1.1 .9 0-.5 3.5 .3 4.1-.3 2-.1 2.9-1.6-1.9-1.8-1.9 .7-.6 0-2.1 3.1-1.9 .1-1.3 .5-2.1 4.4-.8 0-.3 2.7-.3 2.2 1.5 .5 1.7 .3-.2-.3 3.5 1 3.3-.8 .3-.5 3.2-1 2.2-1.2 1-1.1-.2-1.9 0 .2 1.6-1.4 3-.4 1.4-1.2 2.8-1.9 1.9-.7 2 1.2 2.3 2.1-.6 3-1.1 .4-3.6 0-3.7-1.4-.7-2.1 3.8-.7 .4 1.1 2.8-1.6 .8 1.1 1.1 1.8 1.3 .7-1.1 1-.6 2.3 .6 3 1.1 1 1.6 1.6-.5 .6 4.1-.2 5-.4 .4-2.1 2.4-.3-1.6 .1-1.7-.3-.2 .8-2.8 1.9-3 .2-2.1-.3-2-.4-.6 .7-.8 .2-2 4-2.6 .7-3 .9-4.2-1.8-2.7 1.2-1.9-.1-1.1 1.9-2.6 2.3-1.1 1.6-.6-.7-1.5-.2-2.6 3.3-1.2 1.5-.6 .6-1.2 1.7 1.1 1.6 1 1.7 .8 2.2 5.2-.7 1.4-1.6 3.1 1.8 1.5-2.1 1.8-.3 3.2 .6 2.4 1.1 3.3 .2 3.3 1.2-.2 .6 .8 .8 3.4 3.1 .1 1.3 1.8-.3 1.3 2.4-.2 2.2-2.5 1.5-.1 2-.6 .6 .6 .9-1.1 1.8-1.8-.3-4.9 .1-1.6-1-1-3.2-.1-2.2 .8 .4 1.4 .3 2.8-1.6 2.2 1.6 .4 1.6 3.8-.1 1.2 1.1 3 2.4-.4 .8 .8 2.2 1.4 .2 3.4 2.7 1.6-2.5 4.3 1.4 3.8 1.6 2.8 .3 1-2.6 2.1-1.9 1.1-.5-2.6-.2 1.7-2.1-1.1-.7 .2-3.4 .6-.4 3.7 0 2 .5 2.3-.5 2.6-2.6 2.3 .4 1.1 1.6 0-.2 .6 1.5-1.1 1.9-1.6 1.6-1.2 2.1-2.3 .5-1.2-1.7-3.5-.5-3.3 1.7 .2-2.7 .8-1.6M482.4 597l-.7-1.6-1.5-2.9 .4-1.7 1.5-2 1.1-.9 .3-2.8 2.7 .3 0-.1-.1-1.1 .9-2.4-.1-1.6 3.8-2 .7 .5 1.4-1.1 1.6-.6 1-1.6 1.4-3.6 1.2-.8 1.7 1-1.4-1.7-2.4-2.7-3-1.4-1 2.8 .5 1.8 3.2 1.2 .8-.9 2.7-.4 3.2 .2 .8 1.5 2.8-.1 4.2 1.5 1-1.1 1.3-.2 1.8-2.2 4.4 .6 3.1-.4 2.1-.6 2.4 .7 4 .6 3.3 .6 1.3-.8-.3 3 .8 .2-.3 3.5-.6 .9-2.7 1.9-1.1 .1-2.5 1.8-2.8-.4-2.3 .4-2.8-1.1-1.4 1.2-1.6-.3-1 3.4 0 .4-.5 2.1 2.8 1 2.2-1.7 3.1-2.6-.9-1.2-3.3-1.9-1.8 .6-1.3-1.2-.6 1.5-1.4 .9-.4 2 .3-.9 2.8 1.6 1.9 2 .3-.6 3.2-2.2 3 1.3-1.1-2-.9-1.3-1.5-2.3-2.5-1 1 1.2-3.4-.8-1.7 2.7 0 1.6 2.3 1 1.2 .4-.4 1.2 1.3 0 4.1-1 2.9-.1 2.7-2.5 1.3 .5 2.3-.5 2.6-1.4 4 .6 2.3 2.6 1.6 .9-.2 0-.4 .7-3 .5-2.7-.2-.3 .2-1.1-.7 .5-2.5 3-.4 2.9 .3 3.3 .3 .5 1.5 1.2 .3-2.6 1-.8 .4-4.1 .2-4.2 .9-1.2 1-1.9-2-.3-2.2 1.4 .6 3-2.5 2.9-.7 2.3 1.4 2.6 1.1 2.9 .2 5 .3-.6 .7 .4 2.2 .4 3-4.1 .6-3.4-1.2-4.8 .1 .4-1.4-.2-3.5 1.3 .2 1.1-1.1 4.1-.7 1.5 0 2.8-.2 2.7 2.7 3.1 2.9-.7-.6 3.4-.5 2.7-.4 1.9-2.5 1.6-.8 .5-.1 2.8-2.1 1.7-2.2 4-.4 .5-.6 .1-1.9 1.3-1.4-.8-2.2 .2 .4 .7-2.4 1.5-.9 1.3-1-.4-3.6 1.1 .3-.5-3.8-.5-1.2 .5-1.6 .7-.2 2.1-2.6 1.7 .5 3.3-1.1 4 1.2-.7-3 4.2-2.3 2.1-.3 1.8 .9-.6-4.1-1.2 .3-1.5-3.3-2.1-.3-1.6 .1-1.8 .5-2.3 .1-4.5-.1-2.1 .8-.6 .7 .5 1.3 2.1 2.7 2.4-1.9 2.7 1.3 2.4-.1 2.4-1.8 3.3-.7 1.4 .8 .2 1.3-1.2 2.1-2.4 1.9-2.5 .3M682.2 541.5l-1.7 1.3-3.3-.5-3 .6-1.7-1.1-1.8 .2-4.1-.3-3.2-2.9-3.1 2.1-2.2 1-2.8 3.6-2.5-1.7-.3 .6-2 1.7-4.5-.3-1.1 1.8-3.1-.8-3.2 .6-1.3-1.3-1.9-.1-3.8-1.5 .1 0-5 .9-1.1 .6-2.4-1.6-3.8-.7-2.7 2.5-3.3 .1-2.2-.7-2.1-1.7-4-.1-2 1.3-2.3 .1-1.5 3-3.5-.5-1.9 2.4-4.7-1.8-1 .6-.3-.2-.8 1.7-4.8-.3 .2 2.3 2 2.5 2.7-1.5 1.8-.8 2.4-1.6 1.7-.8 3.1 .8 2.4-.2 3.3-.5 3-.6-.5-.8-1.2 3.9-2.5-.5-2.8-.3-3.3 0-2.7 .2-2.5-.6-2.4 2.8-.7-1.7-1.4 .7-1.3-.7-3.8-.9-1.8-2.1-1-.3-1.4-.4-1.2-3.5-2.4 .4-3.1-2.6-1.5-1.2-2.3-1.3-3.6 1.9-2.8-2.3-2.4 .5-2.9 .6-1.9-1.5-1.5-2-3-2-1.5-.2-2.4-1.1 1.3-2.3 1 .5 2.4 .8 1.8-1.9 2.6-2.4 3 1.8 3.7-.3-.2 0 4.4 1.5 2.7 .7 2.1-.7 .4-.6 4.4-.9 1.7 .1 1.3-.9 2.6-1.9 1.1-.6-.2-1.1-1.8 0-.5-3.2-3.6-1.9 .4-2.1-1.6-2.7-.9-.7-.5-.4 .8-1.8-1.1-.1 .9-1.6 2.4-1.7 1.6 0 2.3-.6 1.8-1.4 3.1-1.4-.2-.9 2.4-.2 2.6-.5 2.6 .1 .1-.5 4.1-2.4 3.1 .9 1.4 1.3 4.1 0 .8-.5 1.4 2.5 2.3-.6 4.2-.7 2.6-.7 3.4-.3 .8-1 1-.5-.2-3.1-.5-2-3.7 1-4.2 .8-1.4 1.9 0 1.1 1 2 1.3 2.5 3.8-.5 1.8-.7 2.1 1 2.2-1.7 .9 .5 2.3-2.5 2.2-1 .1-3.1-2.6-1.6-1.1 0-.7 0-2.6-2.1-4.5-.2-1.1 .8-3.4-.6-2.4-1.8-4.3 .4-2.5 2.3-.5 .7-2.6 .7-2.9-1.2-3.1 .2-1.2 .2-2.3-.4-2.3-.6-4.3 2.2-1.8 1.1-1.5-1.2-1.9 1.7-3.9 1 .7 1.1 1.9 2.8 2.5-.8 4 .9 2.5-.6 3.4-.3 1.5 .7 2.8-.4 1.4-3.1 2.4-.8 .4-.5 3 .2 2.8-1.5 3.2 .7 3.8-1.2 2.7 .9 1.7 .6 2.3 .1-.7 2.7-1 1.4M635.3 532.3l1.9 1.4 2.3 0 1.9 2.2 1.2 1.8-.4 1.3 1.9 1.8-.1 2.4 .7-.8 1.1 1.2 4.1 .7 2.5 0 2.4-.4 2.6-.6 2.9-.9 1.2 0 0-1.2 3.7-1.6 2.9 .5 2.2 .7 1.3-1.2 2.7 1.4 1-1.5 3 .5 3-1 1.1-.3 3.8 1.4-1-3.2 3.6-1.1 .7-.4-1.5-2.7-3.4-1.7-1 .2-3-1.6-1.4 2-3.8 1.5-3.1 1-3.6-1.8 .6 1.4-2.7 1.1-2.2-.3-1.5 3.7-2.1 1.2-2.1-.1-2.8 .1-3.9-1.1 1-2.4 .4-1.5 .8-1.6 2.3-.7 1.7 1.7 1.7-2.2 3-1.9 2.1 .7 .7-1.1 1.1-2.2 .4-1.6 3.5-1.5 3.9 .4 1.7-1.5 3.1 .8 3-1.1 .1 .6 4.1-.4 2.6 .2 .5 2-2.1 3.2 0 .5-2.6 2-.5 1.6-.8 1.2-1 .1-1.4 .4-1.7 .9-2.4 2.3-3.3 1.1 .3 3.2-1.1-.5-.6 1.3-2.7 1-1.3 2.7-3.4-.4-2-.4-2.5 .9-2.2-1.5 .2 2.3-2.6-1.7-2.3-2.9 .3-.4 1-4.4 2.2-1.1 1.4 .6 1.9 1.5 0 1.5 .9 .6-.8 3.3-.3 .3-2.8 .4-2.9 .4-2.8 .7-.3-1.1-4.9 .3-1.4 1-3.8-1.2-3.1-1-2.4-.2 .1 .8-1.3-1.6-.6-1 1.9-.9 4.3-1.9 3.3 .1 1.8 1.4 .8 1.9 1.5 2.1-2.2-.2-2.1-.2-2.1 1-2.3-1-4.1 1.3-4 1-2.4-1.8-2.9 1-2.3-.8-1.4-1.6-2.9-1.7-1.5-1.1-1.6 .1-2.4 2.1-1.3 .5 .1 .4-2 2.1-3.4 1.3-2 .2-3.4 2.3-.6 1.6-2 1.2-2.3 .8-.4-1.4-3.8 1.3-4.2-1.6 0-1.1-1.2-2.8-3.4 .6 .9-2-2.5-.3-.9-2.2-1.5-2.3-3.4-2-.1-1.1-2.1-1.9 .3 .2-1.5-.2-2.2-2.5 1-1.8 1.6 .6 3.1-1.8 2.8-.4 1.1-1.4 3.4-.8 1.8 .7 2 .4 2.6 1 1.5 3.7 1.2 2-.7 .7-2.6 .4-3.4 .7-2.1-.6-1.3 2.4-1.9 2.1-4.3-1.9-1.2-3.7-1.8 .4-3.4-1.6-.6-.5-1.4-1.4 3.5-1.1 2 1.1 2.9 .3 1.2 .8 .6 .4-.1 2.8-1.7-.4-2.5 .7-3.1 .4-3-.6-2 .8M677.7 506.4l3.8-.9 3.2 2.3 .8-.1 1.8 2.8 2.7 .7-.5-2.4-1.3-3.2-1.4-1.2-.4-.4-3.8-1.8-3 .2-2-.3-2.7-.4-2.3 1.7-3-.8-2.1 .5 0 1.7-4.6-.2-4.4 .3-.3 2.1-2.5 1.8-1 .8-1.7 .2-.7-1.7-3.7 1.9-3.1-.3-3.6 .8-.4-.5-2.7 1.4-2.5 .8-1.7-2.4-4.9-.9-3-2.2-.8-1.7-1.7-.7-1.2-2.4 1.9 .4 1-1.4-.5-1-1.4-2.4 .1-2.4-1.1-1.5 .8-1.3-.9-2.6 2.1 1.3 1.3-1 1.5-1.1 .9-1.8 3.9 2 2.7 .7 .6 1.1 1.8 3.6 .9 .5 .9 1.7-1.7-.7-.2 .8-2.2-1-4.1 2.1-2.5-2.3 .2-1.2 .9 1.1-2.2-3.1-.6 .1-1.9-2-1.8 .9-1.9-.5-3.3-2.3-3.4-.4-3.2-.4-.6 1-4.2-.9-2.6-.2-1.6-.4-2.4 .4-1.7 1.2-3-.7-2.4-.3 0-.9-2.4 0-3-.3-.9-2.7 0-1.6 2.2-3.2-.8-1.6 2.6 .3 .6-.7 2.1-1.4 2.4 .8 2.6 1 3.7-.2 4.4 1 2.8 1.5 0-1 3 2.1 0-.2 3.5-.1 2.3 .5 3.3 .3 4.1 .5 0 .2 2 3.6-1.7 1.8-.3 .7 .2 4-2.5 1.7-.9-.9-3.2 0-2.8-2.1 .4-.7-1.5-.3-2.7-1.1-1-.7-4.1-.8-1.2-1.3-2.5 1-1.4-.1-2-2.5-.8 .7-3-.7-3.9 1.4-1 .2-2.9-2-2.2 .4-1.5-1.7-1.4-2.7-.7-1.4 3.6 .4 1.4-2.3 .9-2.1 0-.6 1.5-1.5 2.3-.2 4.8-1.6 2.8 1.8 2.9-1.6 3.6 .6 .2 1.1 2.1 1.7 .5 1.3-.1 2.6 .8 2.1-.9 1 .3 1.5-1.1 1.4 .3-1.7-.1 1.7-.9 3-1.6 1.5 1.4 4.1-.2-1.5 .3 2.1 1.2 .1 .3 2.9-.4 2.1-2.4 1.3 .1 .8-1.9-.2-3.9 1.8-1.2 1.8-1.5 1.2-2.5-1.3-4.1-.6-2.2 .7-3.6 .7-3.5 .5-2.1-1-.1-.2-2.4 2.5-1.1-1.8-3.6-3.1-1.7 .8-1.6-1.7 .2-1.1-1.4-2.3-2.4-1.3-.5-2 .7-.5 3 .3 3.1 1.8 2.7 .3-.9-.6-1.2 .8 .7 1.4-.1 2.3-.5 2.8-.4 1.5 .3 .9M565.6 547.2l-.6 1.9 1.7 .4 5.7-.4 3.2-1 1.8 .9 .7-2 1.8-3.2-1.5-1-2.9-1.7-3.1 1.1-2.2-.1-1 3.1 .9 1.1 1.8 1.4 1.3 2.6 1.9-1.3 1.5-.5 1.8 1.5 2.6 .6 5.2 .3 .9-.1 1.6 1.2 2.5-1.2 2.8-1.6 .8 .8 2.5 3.6-1.2 2.5-3.6-.2-.8 2.3-1.2-1.8-2.5 1.2-1.2-.8-4.1 .6-1.1-1.2 1-2 1.3-.5 .1-2.3 .6-1.1-1-.5-.6-3.7-.8-.1-3.3 0-1.2-.8-2.8-.8-1.4-1.3-1.7-1-4.1-1.5-.8-1.5-2.3-2.7 1 .4 2-2 5.1-.2 1.3 3.1 1.2 1.3-.6 1.1-1.8 2.7-2.4-.5-2-1.2-3.2-1.2-.1-3.1 .4-1.6-.4-1 1.5 .7 3.9-3.4 2.8-.3 2.2-.5 2.1-2.2 2.1 .1 3.5 .2 2.5 1.4 3.8-.4 3.7 1.1 .1 .5-.1 .4-1.4 1.3-1.8 1-3.4-.3-2-.1-2.6 .3-2.5 0-3.7-2.5-.1-.5-.4-1.4 1.4 .2 2.6 .6 3.1-1.8 3.5-1.4 4.7-.4-.8-1.6 1.2-1.4 3 .9 1.4 .3 1.6-2.3-.3-1.8 .7-1.6 1.1-2.4-.9-3.3-1.4-.8-3.8-.4-3.3 .7-1.4-1.5-1.1 .4-.7-.2-2-.3-3.8 .3-2.6 .7-2.7 1-3-2.4-3.9 .4-3.5 1.5-.5 .5-2.2 1.8-2.5-1.9-4.3 1.1-2.2-.5-.4-.6-1.7 1-1.9 .7-1.2 3.1-.4 2 .2 2.6-2.1 1.8 4.9-.1 1.9 .7 .2 2.3 2.4 1.6 3.1 1.5 .8 .9 1.9 1 5-.7 2.6 1.1 2.7-.9 1.8-1.4 1.5-1 2-1.6 2.4-1.2 1.5 .4 2-1.5 .3-.7 2-1.3 2.1 .4 1.1-1 2.1-.4 2.9-1.8 2.9-3 1.7-.5 2.6 .4 1.8 2.4 2.8 2.9-1.2 .7-2.4 .7 0-.9-2 1.8-1.6 1-2.8 1.5-2.6 .4-4.6 1.3-2.1 1.1-2.3-.8-1.2 0-3.3-1-.1-1.7-1.2-1.4-.5-1.3-1.4 0-.3-1.8-2.6-2.6 .9-1.7-.6-1.2 2.2-1.2-1.8-4.1-1.2 .5 0-.7-1.2-1.7 1.9-2.1 .4-1.7-.9-.8 5.5-1.3 2.8-1 3.4 1.8 1.7 .6 .5 2.9 1.9 1.6 2.3-1.2 2.3 1.2 3 1.3 .7-1.2M533.2 553.8l-1.3-1.3 2.1-1.1 2.2-1.3 2.1-1.3 .9-2.4 2.8-3.1 2.8 .9 2-2 1.7-1.3-2.8-2-1.1-2.6-1.6-.7-1 1.3-.9 .7-2.9-2.9-3.3-.3-3-.1-2.2 1.7-3.2 2.1-2.1 .2-1.6 .9 1.5 2.2 3.9-1.3 3.7 3 1.4 .3 2.9-.4-.3-.8 2.6 1.8 2.5 3.1 .5-.7 3.4-2 1.2-.2 2.3-2.6-.6-1-.4-1.7-1.5-.1-2.4-2.6-2.1 2.3-3.6 .5 .3 3.5 1.8 1.5 3.1-.2 1.2 0 .9-3.9 4.7-.2 2 0 0-1.3 1-1.4 .7-1.4-3.4-.9-.4-2.6-2.1-1.4-1.6-1.3-3.3 1.3-.8 .9 1.5 3.3 1.3 1.4 1.5 .3 1.9-2.6 .2-2-1.3-.9 2.1-3.1-1.9-2-1.9-.7-.4 .8-.9-1.2-2.6-2.2-3.4 1-2.7-1.8-2.7 .3-1.8-2.1-2 .5-.1-3 1.4-.3 1.1-.3 2.4-1.5 2.6-1.2 4.4-1.6 .8 2.1 1.8-.5 .7-.8 4.7-1.2 1 .5 3.3-.4 .9-.5 3-.2-1.2-3.9 1.2-.6 2.8 1.8 1-3.5 1.6-2.9 2.4-.7 .8-3 1-.7 1.9-.3 5 .2 .6 2.1-.6 2.8-1 1.1-.4 .4-2.5-1.5-5.4 2-2.4-1.6-1.9-.4-1.2-1.2 1.8-2 .9-1.7 .5 0-.4-1.9 1.5-2.8 1.5-3.3-.9-1.1 .9-.6 1.2-.5 .8-1.3 1.6-2.7 2.8-.6 1.2-1.4 3 2.5-1.5-2.2-1.7-4.3-1.9 .3 .2-1.9-1.3-1.6-1.5-1.2-2.4-1.6 .1 .6-1.2-.1-3.5-2.4-3.1-2.2-.7 .5-3.2-.6-2.1-.3-2.2-.7-4 .4-1.3-1.6-2.8-1.6 3.2 .6 .3-.5 .9 .4 2.7 1.3 1.3 .4 1.7 .3-.7 2.8-1.5 .7-.2 .9-3.1 2-1.4-.5-2.8-.1-1.2-.9-2.6-.3-2.4-.5-2.5-1.5-.6 3.5-.1-.5-1 1-1.8 .3 1.9 1.7-.1 2.8 1.2 1 .3-.5-1.1 1.3 .9 3.2 1.4 3-.2-.2-2.3 .9-3.8 2.1-1.3 1.5-2.1-.6 .6 .3-4 .9-3.4-.2-1 1.6-2.9 1.7-3.4 1.8-2.8 .4 0 1.8-1.4 1.7-.8 1.7 1.8 1.9 1.5 1.1 .7-.9 3.2 2.1 2.5-.5 2.2-.1 .5-1.6 .1-2.1M512.9 549.3l1.9 2.3-.6 1-1.2 2.3-3 .9-4.9-.5-1.4-.8-1.1 1.7-2.2-1.1-1.7-1.7-.9 .3 1.5-1.4-.3-.5 3.9-.9 1.1-1.4 2.3-1.7 2.5 .1 2.4-2.4 2.3 1.5 3.5 .1 2-.2 4.4-3.8 2.7 0-3.1-2.6-2.7-1.3-2.5-.2 2 2.1-.8 1.7 2.2 2.1 .7 2.9-.4-.2 3.4 .7 2.3 0 2.1 .7 .9 1 1.6 2.8 .5 1.4 2.7-.2 .6 1.5 3.4 2 1.7 0 2.1 1.9-.1 3.5-2 0-1.4 0-.9 .8-4.2 .8-2.1 .8-2.2 1.8-3.7 .4-2.3-1.6-.5-2 .7-3.1 2.7-.5 3.5 .8 2.4-.8 .8 1.1 1.6 0 2.4 3.3 1.7 2.3 1.5 1.1 1.4-.9 2.9 .8 1.9 .9 2.7 .9 3.3-.5 2.1 2.1 2.9-2.3 2.4-1.1 1.1-1.7 1.8-1.4 3.6 .7 1.3-.1 2-.7 2.8-.2 1.1-.3 0-1.9-.8-2.3-.1-1.3-.4-.9-.6-.2-.6-2.5-1.5-2.8 .3-2.6-.1-1.7-1.5 .4-3.7-1.8-2-1.7-3.2-.1-1.6 2.1-3.9-2.4-1.8 .5-3.6-.1-1 1.2-1.5-.9-2.3 .6-3.5-1.5-3.5-1.4-2-.9 1.4-2.7 .3-3.4 3.2-.8 3.5 3.6 3.3 .3 2.1 2.2-2.3 1.1-3.6 1.3-4.6-.8 .5-.9-2.1-.9 .4-1.3 1-.7 1.4 1.4 1.3-.2 5.4 .5 1.8 .5 1-1.1 3.1 2.5 2.4-.4 3 0 .2 0 2.5 .4 5.6-.8 1.4 .7 .3 1.6 2.9 1.6 .8-.6 3.8 3.2 1.9 .5 1.8-.5 1.8 .7 1.3 1.3 2.2 1 2.7 .3-1.8 1.3-1.2-.1-3.3 .2-1.7 2.1-1.5 1.4-2-.3-2.4 .2-4.2 .9-1.7-.5-2.1 2.9-1.3-.8-3.6 .4-3.6 1.6-1.7 .2-3.6 1.6-.7 .8-1.8 .1-3.6-.1-3.5-.4 .1-1.6 .7-1.1-.8-1.7-1.7-.9-.5-1.8-.6-3 .4-3.2 .2-2.4-.6 .6 .8-1.8-.8-1.8 2.4 1.2 2.1-2-2.4-2.4-1.6 .2-2.2-2.6-2.1-.4-1.8-.2-.7 2.6 .8 .8-.5 1.2 0 1.9 1.1 .3 2.7 .6 2.5 2.5 4.2-.2 1.4 3.5 2.9-.3 1.5-1.9 2-2.5 2.1 1 1-.2 .3 0 3.1-2.1 4.3-.1M670.6 610l1 1.8 1.6 1.8 1.7 .6 3.4 .2 1.1 .4 2.3-1.9 1.6-1.1 1.3-.4 .8-1.6 2.4-.4-.6-1-2.3-2.1 .5-1.2-.1-.1-1.7-.1-2.3 .8-4.8 2.6-2.3 .6-3.1-1.6-1.2 1.6-2.4-.9-2.6 .6-3.4-.8-3.3-1.5-3.2-.6-1.1 2.8-2.8-.2-1.4-2.4-3.2 .3 2.5-3.2 3.6 .2 3.2-1.4 2.4 .3 1.8 1.3 3.5 1 .3 2.7 2 .4-.6 1.5-.5 1.1-1.2 .7-2.5 1.6-3.8-1.5-.9-.2 .8-2 .5-.1 .9-3.5 .4-.2 2.1 .1 3.9-2.2 1-.3 1.3 .7 2.8 1.5 1 1.5-.6 1-.5 1.4-.4 1.5-.6 2.3-3.3-.6-1.9 .6 .5-.1-3.5 .7-3 .9-2.9 1.8-5.4 1.1-1-.1-2.2 1.2-1.2 0-.3 2.7 1.5 .7 2.5 .9 3.4-.9 2.1-1.9-.7-1.5-2.1-.9-2.8-.9-1 2.2-3.5 2.2 1.2-1.2-1.6 3.3-.2 3.6-1 .5-.8-.8-.9 2-1.7-.8-3.3-1.1-3.3-2.2-3.4 .5-2.9-1.2-2 1.6-1.8-2 .7-.2-1.8-1.3 1.8 .5 .6-2.3-.8-2.8 .5-.1-2.2-1-.5-1.9 4.7-2.6 2.7-.6 2.9 .4 1.9-1.2 3.3 .9 1.4 .3 1.6 2.9-.3 1.9-3.7 1.6-3.6-.1-1.8 2.9-1.9 2.5-2.3 0 .9 2.8 4.2-.2 3.3 1.5 1 .3 2.3-2.1 2.6-.6 3.3-.3 2.4-.4 .8-2.4 3.2 1.3 2.4 1.7 .7-2.2 4 .9 3.4-.3 1.8 .4 1.5-1.7 5.1-1.1 2.2 .6 1.6-.3 .8-1 1.5-1.9-.1-.9-1.8-.5-5.7-1.6-2.8 .2-.6 3 1.5 .2 1.1 2.3 3.1-1 2.1 .6 .1-.4 2.4-3.4-.7 .1-2.7-1.2-3.2-.7-3.2 .8-1.6 .5-.1-.3 1 1.5 1.5 2.6-.3 .2 2.2 .8-1.1 2.3 2.7 1.4 1.7 2.1 2.1 .5 .1 .9-3.3-1.1-1.5 0-1.8 .1-1.6 .6-2.7-.8-3.7 .3-1.9 .2-2.3-1.8-3.7-.6-.8-.1-3.5 1.2-1.7 .2-4.4-.3-2.2 1.4-1-1.5-4.9-.9-2.1-.1-1.7-.9-2.2-.8-1.5 .8-3.1-1.4-2.3-1-2.5 .4-2.4-.9-1.8 1.1-3.5 1.3-1.5 1.4-1.9-.1-.8 2.2-2.7 .2-1.8-.7-2.3-1.1-4.1-1.6 1.2-1.7-1.4-1.3-2.1-.2 2.8-1.3 3.3-.8 2.8 .4 1.6 2.1 .1 .9 0 .1M467.7 619.1l2-1.7-.5-2.2 .4-1.1 .2-.9 1.3-.8 1.7-1 .5-1.5-.1-.6 4.4 .4 4.6-.6 2.4 1.2 1.7-.4-1.2 3.8 1.5 2-2.3 .2-1.2 .8-2.2 1.5-1.4 .1-2.2 .8-1.1 .1-.7 4.3 .2 1.6-.3 .5 4.9 .1 1.9 1.6 1.8-1.6 3.9-.8 2.4 .8 1.7-.7 2.6-.2 1.6-.3 2.1 0 2.4 .8 1.9-.9 3.8-1.9 2.7-1.7-.1-1-1.3-.6-.7 .7-4.2-2-3.1-1.3-1.6-1.1-2.1 .9-1.7 2.9-2.2 1.3 3 2-.3 .9 .4-.2 2.6-.3 4-.9 3.7-.8 1.2-.4 2.5-2.5 1.6 0 .4-2 1.5 .2 2.8 .3 1.8-.4 3.7 .6 1.9 2.3 1.1-.5-1.4-.2-1.3 1.7 1.8 3.2 .4 1.3 2.9 1.4 2.7 0 2.6 .2 2.6 .6 4.2-.6 2.4-1.8 .5-.4 1.1-2.5 2.9 .2 3.1-.1 .9-1.9 2.3-1 2.4-.5 3.6-.6 3.2 .3 1.1 1.4 3.6-1.3 3 .6 .8 2.9 .5 .3 1 2.5 1.2 .7 3.6-.2 3.9 .1 1.8-.3 2.6-1.2 2.7 .1 1.1 1.9 1.1 1 .6 1.4-2-.5-2.1 3.3-3.4 1.5-2.2-.2-1.2-3.6-2.8-.7-.7 .3-.8-2-.2-3 .3-.6-.4-1.3 .2-3 3.8-.6 1.8 .3 2.2-1.4 1.6-1 1.7-1.4 .5-2.2 3.1 .3 2.7-.5-.2-1 1.5-1.5 2.9-1 .7-1.8 3.6-.2 3.9-1.9 .8-1.8 2 .6 3.1 1.5 1.4 1.2 3.5 .9 2.8-.2 3.1 .5 1.1 1.5 .9 1.1 2 1.6 .7-.9 1.8 2 2.1 0 4.4 0 1.9 2.7 1.7 1.9-1.7 .3-1.8 1.5-1.8 2.5-3.2-.9-4.1 1.1-1.1 2.1-1-.8-4.7-1.2-2.4-1.6 .4-.9-3.1-.7-1.8-1.4-3.2-1.5-1.1-1.3-1.8 1.1-3.7-.9-.2-1.7-4.2 1.6-1.6-1.2-2.7-1.2-.8 1.7-2-2-2.6-.6-.4 .3-5.4 1.6-2.2 1.3 .5 2.5 .8 1.4 2 1.3 1.9 .6 1.8-2.4 1.5-3 1.4-1.1-1.2-1 2.1-.1-1.3-3-1.6-1.2-3 .1-1.8 .6-.8 .9-.6 1.8 2.4 1.5 .8-.1 4.3 1.5 1.8 2.5 2.3 0 1.7 .8-.2 2.4-1.6 1.6-1.3 .4-.8 .6-3.5 0-4 2.1-.4-.6-2 1.4-1.1-4.2-2.5-.9 2.1-1 2.8-2.5 1.9 .4 2.7 0 1.8 .1M558.7 603.1l1.2-.1 2.6 .5-1.3-1.8-.9 .1-2.1-1.3-1.7 .4-3.6-.3-1.1 .6-2.2 1.2-3.5-1.5 .8 0-1.7 1.5 .3 .1 0 2.7-1 1.1-.9 3.9-.5 2.4-1.3-.6 1.5 2.3-.2 2.7-.9 2.4 1.9 .7 1.1 2.2 .1 .2-.5 2.3 2.2 2.2 2.8-1.3 2.4 .2 4.1 .1 2.3-1.3 2-2.8 4.4 .1 .1 1.2 3.5-.9 1.7 .5 2.6 .8 3.4 3.3 3.2-.4 2.9 .6 2-1 2.1 .9 1.6-.8 2.3-.5 3.9-.3 .5-2.6 3.5-1.5 2.5 1 1.9 .8 2.1-1.4 3-.9-.2-1.1-.3-.6-1.3-2.6 1.2-2.7 .9-.5-.9-.8 .1-1.8-.4 0-2.2-2-.4-1.5 2.9-3.5 .9-.4-2.1-3.4-3.9-.3-3 .8-.2 .5-2.7 .8-2.8 .3-2.9 .1-2.7 .2-1.9-.4-1.1 .6-4.8 1-1.8-.7-1.2 .5-4.9 0-.2 .4-.9 2.2-.8 3 .8 1.7-.6 1.5-1.3-1-.5 1.7-3.2 .8-2.1 1.6-1.7 1.8-3.2-.9-1.1 1.5-.7 2.2 .6 2.4-1.7 2.1 2.4 1 1.9 1.7 2.9 .5 2.5-.4 1.5-.8 .7-.8 3.7-2.1 2.8 .7 3.6 1.7 4.4-1.7 1.7-1.3 2.2 .6 3.7 .3 2.3-.7 2.1 1.3 2.6 .8 1.8 .9 2.7-.3 .4-1.2 4.7-.5 1.1 .7 .3 .9-.8 1-3.8 .1-1.7 .1-1.9-.9-1.3 1.4-2.4-.4-3.9 .4-3.2-.1-2 1-2.2-1-2.7-1.4-3.4 0-1.5-1.2-2.4-.2-2 1.9-4.1-1-2.8 2-3.7-2.7-.7-.2-2.2 .2-1.8 0-3.1-2-2.1-2.4 .1 1.5-2.4-1.7-2.2-1.1-2.4-1.2-3.3 .7-1.8 .8-2.2 1.1-.3 1.2 .4 1.2 2.8 .5 1.8 .8 3.5 0 2-.8 .9-1 3.5-1.6 3-1.7 2.4 1 .5-2.2 2.7 2.5 2.4-.1 .4 2.6-.5 2.3-4 .5 .7 3.2 3.2 1.1 2.1-.7 1.6-.4 3.4-.2 2.1-.2 3-2 4.4-.8 .8 .7 .2-1.6 .5-1.8 0-.1-2.4-.1-3.2-1.6-1.9 1.4-1.7 .5-.6 1.8 .7 1.6 5.5-.2 1.4-2 3.3 1.3 .8-.7 4.5-.3 1.1-3 1 0 3.1 .1 1.4-1.8 .9-2.8 .1-1.9-1.9-1.3-3-1.7-1.6 .3-2-.5-3.4 .1-.3-2-4.5 .4-1.6-1.9-.4-.9-1.1-.6-1.9-1.4-.8-2.1M536.3 606.4l1.9-1.5 1.4-2 1.8-1.9-2.9 0-1.4 .7-2.2-1-1.9 1.5-1.3 .4-4-.5-1.7 2.3-1.8 1.1-3.7 .4-.3 1 .2 1.7 0 1 .7 1-1.6 .6 .6 4.2 1 1.4 1.6 1.1 3.7 0 .3-.1 3.7 .2 2.2 .4 4.5-1.3 4.3-.8 2.6 2 2.4 1.2 .3 .4 .9 1.5-2.6 3.9-2.1-.7-1.4-1.7-1.8 .2-2.4-1.1-1.5-.3-1.6-3.7 .9 1.1 1.9-1.1 2.1-3.3 .8 2.6 1.3-.1 1.9 .9 2.3 2.3 .3 .5 .1 1.7-1.7 1.5-3.9 .5-1.8-2.6-.5-1.3-1.7-.8-2.9-1.6 0-1-.3-1.9-1.2-1.5-.2-2.6 .1-1.9-.2-1 .3-2.1 1.3-.5 1.2-1.7-.7 0 3.4-1 .1-.1 1.8 1.1 3.3 .9 3.8-.9 1.4 2.2 1.3 .8 .3 3.5-.5-.4 .8 1.8 3.8 .2 2.8 2.3 .3 0 1.6 2.1 2.2-1.2 2.1 2-2.3 2.8 .1 1.2-3.9 .3-1.8 2.3-2.4 1.2-2.4-.7-.3 .8 2 1.4 2.7 .3 2.9 .5 1.7-.9 4.1 .3 2-3.1 1.3 1.3 3.3 1.5 1.5-1.9 3.3 .7 1-.9 1.7-.6 2.2-1.5 .8-1.9-1.2-4.3 1 1.4 .2-2.2 3.7-2.4 2.5-.6 2.6-.8 2.3-1.8 .5-.4 2.2 1.5 2.6-.8 6.1-.9 1.8 2.1 3.2-.5 2.2 1.8 .2 0 3.3-.3 3.1-.5 2 .8 2.2-1.7 2.1 .8 1.7-1.5 3.2 0 3.1-2.6 0-1.1-1.8-2.2 .5-1.4-1.3 .2-2.5-1-1.7-.1-2.3-.6-3.6 2.7-1.9 1.6-4.4-.1-.4 1.3-.8 0-2.1 .7-3.2 3.2-1.8-.4-3.7 .4-1 0-4.2-1.1-2.2 1-1.3-1.1-.9-2.9-2.5-1.1-.3-1.4-.3-.6 2.4-1.4 4.3 .2 2.5 .9 4.2 .3 3.2 .6 1.1 .7 2.1 .2 4-.1 3.4 1.6 .5-.2 2.7 .4 1.3 1.4 1.8 .7 1.6-1.3 4.9-2.1 1.9 .2 4.2 1.8 .4-.6 3.9-1.4 3.3 1.5 3.3 .4 1.8 2.7 3.4-.7 1.5-.6 1.5 .6 1.1-.4 5.3-.4 2.9-1.8 3.3 2.1 3.1 .1 2.5-1.9 1.1-2.4-.4-2.4-3.5-.4-1.6 1-3.4-1.6-2.5 .9-4.8 1.8-.3 1-2.1-.2-4.2 .8-.9-.4-1.4-.6-1.7 2-.4 2.2 1.6 1.2 1.7 1.1 1.8 2.6-1.3 .8 2 1.9 .2 1.3 2.1 .7 2.2 2.4 2 1.9M644.2 653l1.4 .9 4 .4 3.6-1.8 0-1 1.5-.9 3.6 .3 1.3-2.8 4-2.3 1.7 1.8 1.7 1 2.7 1 1.4 2.2 .2 2.8-.6 .6-3.7 .4-1.3 .6-1.7 .6-1.7-1.6 1.3-.6 1.6-1.6 2.6 1.5 1.4-.7 1.4 2.1-1.9 1-2.4 1.4-1.6 1.1-2.4 .4-3.5 .5-2.1-.8-.7 .7-3.6 2.3-1.9 1.9-1.3 2.3-2.6 1.4-1.4-1.6-2.1 3.1-.5 2.1-.6 1.2 1.1 2.7 1.3-.3 2 1 2.7 1.7 3-.4 1.1 .1 1.4 1.7 1 2.2 1 2.4 1.6 .4 3.2 1.2 1.4 .2 1.5 1.6 2.5 1.3 2 1.2 2.4 2.7-.2 .8 1.6 1.3-.2 1 1.1 0 .8 1.4 1.1 .8 2.2 2.5 .1 1.6-1 .5-2.4 1.6-2.3 3.3 1.3-1.3 1.7-3.3 1.1-1 .5-1.8 .8-.3-1.7-3.5 2.2 0-.9-2 3-1.5 .1-.3-.2-.4 .7-3.6 4.3 1.3-.8-2.3-.6-3.7-1.3-2.8-2.2-2.1 .6 1.3-1.2-1.5-.3-1-3.6-1.4 .7-.5-1.4-1.2-.3-2.4-4.7-2-1.1 .9-1.9 0-3 .1-2.4 .8-1.2 .4-3.7 .9-2.3 .5-4.9-.8-1.9-.9-.1-.1-3.2-1.1-3.2 1-1.1 .1-3.5-1.6-2.1-2.7 1.1 .2 1.3-1.5 2.1-1.6 2.3 1.8 1.4-2.1 2.5 .9 2.4-.2 .4 3.1-1.1 .5 .5 2.4-1.1-1.5-3.9 .6-2.1 1.5-2.1 .9-1.9-1.4-3.9-.8-1.5 .5 0-.2-2.8-1.2-3.1-.8 .1-1.9-3.6 .8-4.5 .4-2.6-.2-.9 1.6-2.1 1.4-1.6 1.1-2.2 0-4.5-1.9-1.9-.9-2-.2-.7-2.4-1.8 1.1-.2-2.8 3.4-.8 3.1-.8 4.7 .7 1.8 2.9 0 1.1 .2 1.8-.3 1.3-.1-.1-2.8 .8-1.5 1-1-3.3-2.5-1.6 .4-.4-.5-.6 4.6-.1 .6 2 2.9-.6 3.6-1.5 1.8-.6 3.1 1.6 .8 1 .9 1.7 4-.1 .7 .1 4.2 .2 1.9-.6 1.6-2.9-2-1.8 0-2.9 1-1.2 1-2.3-1.8-2 .7-.2 .2-1.5 3.5-.3 1.7-1.8 3.2 .6 0 3.6-.3 1.6-.2-.1-1.1 1-4.6-2-.9-.3-.3-1.9 .8-1 3.1 .2 1.4-.3 1.4 .2 1 .1 3 1.9 .2 .2-2.8 1.4M479.9 682.1l-2.3 .6 .9 2.6 .5 1 .1 1.2-.4 2.5-1.4 .3-2.5 .9-.5 1.4-.8 .9-2.1 1 .8 3.8-1 0-2.9 1 1.2-2.1 3.1-1.9 .1-.3 .2 .3 1.3-1.1 2-.7 2.8-1.5 2.7-1.4 .2-3 0-1.2 .6-1.4-1.8 .1-3.2-.4 0-4 .9 .7 .4-.7-.7-2.8 2.6 .6 1-.4 5-2.6 2.6 .2 2 0 3.1 0 2.2 2.1-2.7 1.2-.1 2.3-4.1-1.8-3.4 .3-1.7-.2-2.1-1-.9-1.6 2-.7 .7 .8-1.9-3.6 1.9 .6 4.9-2.4 3.9-1.4 1.1 .2 2.7 2.6 3.5 1.2 3.1-2 1.4 2 3.8-1.8 2.8 .2 1.9-1.1 3.2-.7 3.8-.1 1.8 .3 2.1 .1 2 .1 2-.8 1.9 2.7 1.8-.4 2.6 2.9 1.5-.2 3.5 .7 1.9-.3 2.3 2.5 3.9-.4 3.8-.3 .2-2-.2-1.6-1.4-3.3-.1-1.3-1.3-1.8-.5-1-.8-.8 1.7-.6-.1-1.1-.3-.7 1.8-2-1.7-2.7 .5-1.6 1.1-2-.1-.8-2.3 .1-.4-3.1-.5-1.6 1.1-1.1-1.2-.9 .2-2.9 .3-.5-.7-2.7-1.3-2.1 2-.6 1.2-1.9 3-1.7 3.6-.8 2.5 1.7 1.4 1.3 .8 2.2-.4 1.5-1.2 2 .8 .5 2.4 4 0-.6 1-.1 1.2 2.5 .2 1.8 4.4 .7 2.9-.4 2.3-1.1 .8-1 1.7-.1 .6 .4 .7-1.8 1.5-.6 2.9-.5 2.2-.7 3.1-.3 2-.8 1.1-1.8 1.3-2.6 .5-1.5-.7-1.7 2.6-1.5 0-3.5 2.5 .8 .2-.8 0-1.8 3-.8 3.1 .1 1.6-.9-.2-2.5 .9-1.3 .4-2.6 .4-.4 2.4-1.4 1.6 2.9 .7 1 .9 1.4 2.7-.7 2.1 .4 2.1 .5 .3 1.3-1.7 2.6-2.8 1.1-2.1-.6-3.1 1.3-1.3-.2-2.5 .6-2.4-1.3-1.8-2 0-1-1.2-3.2 2.3-1.4 .7 .1 2.8 .4 2.6 0 1.5-2.3 .4 .1 2-1-3.2-.2-1.4 2.4-2.8 1.8-4 0-2 .9-2.1-1.1-1.1 1-1.5 .3-.5-.4-.3-2.8 1.2-2.8 1.7-.6 4.1 2.1 2.1 .1 2.6 1.7 2.3-.6 2.3 2.2-.3 .7 2.6 2 3.3-.2 2-.2 5.7 .3 1.4-2.1-.3-.7-1.7-2.2-2.2-1.2M635.5 704.9l-4.9-.6-.7-1.6-1.6 .3 1.5-2.2-2-2.9 .7-1.9 .4-1.3 2.1 .1 2.6-1.4 2.7-1.1 1.9 .6 3.6 2.4 2.8-.7 1.9 .2-2.1-.1-2.6 1.3-1.6 1-1.2-1.6-2.4-1.5-.3-1.9-1.2-.4 3-1.1 1.4-.6 1.7 .2 3.5-.8 2.7 .1 2.6 1.4 .4 2.6 2.1 1.2 1.5 1.7 .3 .2 .6 2.2 .8 1.8 0 .8 2.8 2 2.5 1.1 .8 .8 1.9 1.9 2.2-.3 2.3-3.2 2.6 .5 .2-.4 1-2.4-.8-4-.1-.5-1.1-2.2-1.2-.4-3.2-.6-1.2-1.5-.5-.9 2.1-1.1 1.8-.8 2.7-.8 2.3-1 2.3 .6 .6 2.1-.2-.2-1 2.6-.4 1.2-.5 1.6-2.3 .1 .3 2-2.2-.3-1.9 3.2-.8 .3-1.2 .4-3.4 .1-2.4 .1-3.7-.3-1.7-.1-3-1 0-1.3-1.8-1.3 1.7-2.2 .5-.4 .3 2 .8-1.5 .5-.6 1.9-3.7 4.8-.8 .6-3.1 3.8 .1 3.6-.9 2.7 .1 1.6 1.9 1.3 1.1 1.7 1.3 1.1 2.1 1.6-.2 2.8 1 2.7 .6-.8 3.2-3.6 1.7-.5-1.1-2.5 1.6-1.8 2-.1 .1-.4 2.2-2.3 1-.3 .8-2.9 2.3-1.5-.4-3.1 .2-3.1 2.7 1.2 .9 2.1 .7-1.7 1.6-.7 2.8-3.2 .9-1.3 .5-2.4 2.7-1.7-1.1-.1 3.2-.9-.3 3.1 2.1 2.8-3.4 1.9 .2 .6-1.2 .9-.7 .9 0 2.7-2.6-.4-1.9-1.3-.7 1.9-3.4 .3-1.6 .1-.2 2.6-3.8 1.1-1.1 1.5-.4-1.5-.7 1.5-1-2.3-2.3 .2-3-3.7-.9-2.5-.4-2.5 1-1.8-1.4-2.4-.1-1.1 1.7-5.1-1.7-1.3-2.1 .6-2.6-2.3-1 2-2.3 .6 1.8-.9-2.9 1-1.1-.7-2.6-2-2.7 .4 0-3-.9-2.8-.8-2.4-.7-2.6-1.3-1.8 1.9-3.6-.2-3.1 1.9-1-.6-1.4 0-3.8-.5-3 4-3.5 1.7-.6 .9-1.7 .7 .4 2.2-3.7 1.1-.6 .2-2-.4-.4 0-3 1.9-4.8 .9-2.5 .1-1.6-1.3-3.2-.5-3.4 1.5-1.7 1.2-3.8-1.9-1 .3-1.7-1.7-2 .5-2.7-1-2.8-.7-3.5 1.5-3-2.9-1.6 1.4-1.5 .1-3.5 1.5-3.4 1.7-.4 1.7-2.5 0-.2 1.4M628.4 731.2l-1.9-1.3 0-.7-1-2.7 1.2-.9 4.5-2.2 1.1-.8 3.4 1.5 .6 .5 4-1.3 2.5-2.3 2.4 .3 1.6 .4 3.1-.3 .9-1.3 2.5-.6-.5-1.6 1.9-1.9-.1-3.6-1.6 .4-1.7-1.1-1.8-1.1-3.5-1.8-2.5-1.2-2.3 .4-1-1.3-1.9-.1-3.3 4.3-1 1.4-1.4-1-3.8 1.1-2.6-.3-2-3.9-2.3-2.7 1.5-.8 1.9-2 .8-1.5 3.5 .1 .3 1.4 4 .3 3.5 1.9 1.1 1.3 2.4 1.1 .9 1.5 .2 1 .5 1.1 .1 .1-.9 1.9-3.3 2.6 .7 .9-1.1 1.5 0 2.5 .4 .9 1.1 1.8 4.2-2.1 2 1 2.1-1.7 2-1.8 1.5-1.4 2.8 .7 3.9 0-1.8-.2 .9-3.2 1.3-2.6-.2-.7 .5-1 0-2.1 .1-2.4-.8-.6 .6-.6 .2-2.1 .4-.7-2.8-1.1-3.9-.9-3.8-.5-1.1-1-2.3-2.8-1.9 .6-3.7-.6-1.6 .2-3-2-1.8 .7-2.2 .7-3.4 1.6-1.8 2.5-.5 .3 2.8 .5 3.8 .3 1.6-.5-.9-1.1-1.8-1.7-4 .8-.6 .9-.9 1.8 1.1 .3 1.6 1.2 2.7 2.4 1.7 0 3.9-.3 2.8-.3 0-2.9 2.3-.3 4.3-.9 .9 .1 1.5-.4 1.2-1.7-.8-2.4-.1-2.4-2.3-1.1-2.8 1.2-3.6 .4-1.5 .7-2.5 2.8-.2 .5-.7 0 2.8 1.5-2.7 1-2.6 3.3 .2 .6 1.2 2.7 .5 4.4 .9-.8-.8 0 2.2 2.3 2.5 .8 1.9 3.1-.2 0 1.5 .1 3.3-1.6 4.3 .4 1.4-1.2 2.4 .1 4.3 .6 2.9-1.7 .2 .9 2.7-2.7 .2-1.2-1 .9-1-2.1 .2-3-1.9 .4-1.4-1.6-.5-2.4 .9-3.8-1.9-1.6-1.2-2.3 .1-.1 1.8-1.7 1.6-2.7 1.2 1.8 .3-1.8 1.8-2.1 2.5-1.6 2.4 .1 2.6 1.8 .7 1.6 2.6 1.6-2.2 .5-1.5 1.1-2.5-.3-.6-.6-2.7-.6 .6-3 3.3-.6 2.1-1.9 2.1-1 1.6-.7 4.1 .9 1.6 1.9 4-.7 2.1-.1 2.2-.2 0 1.9-2.6 1.6-.1 1.3 1.1 1.9-2.2 .4-2.3 2.9-3.1-1-1.2 1.7-3 2.3-.9 .9 0 .5 1.6 .7-.2 3-1.3 2.1-.2 .1-2 2.1-1.8 .5-.7 2.5-2.9-.9-2.1 .6M521.7 712.2l-2.4 .3-2.7 .1-3.1-2.7-.3-1.2 .5-1.3-.2-2.1 .2-.6-.3-2.3 3.2-1.7 3 .5 1.9 .4 1.6 2 .9 1.3-.7 .8-2.5 .9-1.8 1.1-3.5 .2-2.4-.2-1.3 1.6-2.5 .4-1.8 3-2.3 2.2-2.1-.9-3.9 .4-2.4 .8 4.6 1.3 3.1-.2 3.4-.8 .2-2.3 3.3 .4 3.1-2.3 1.7 1.1 1.4-.8 2.5 .5 2 2.2 3.5-.5 1.5-1.2 3.9 .8 1.2-2.8 1.8 0 1.5-.8-1.6-1.5 1.9-2.2 .7-1-1.5-.4-1.2-1.6-2 .1-1.8 1.9-3.7 0-3-1.9-2.9 .1-2.4-2.2-2.1-2.5-.5 .6-.7-1.6 2-2.1 3.3 .7 3-2.9 1.5-1.5 2.5 3.1 .2 2.3-.3 2.7-3.3 1.4-3.8 0-1-2.4-2.2-1.8 1.6-1.7 2.4-1 2.3-.9 3-.8 .9-1.5 2.3 2.1 3-.5 2.6 0 3.3-.5 3.5-.4 1.1-2.4 0-2.7 1.8 0 1.8 .7-.2-1.8 .6-.5-.6-2.2-2.6-2.8-1.8 .4-.8-1.9-4.6-.2-1.7 .8-3.1 .8-1.1 2.5 1.5 1.5 2.2 .4 1.3 1.9 3.2 2.9 .5 .6 .4 4.2-1.8 1.5 .3-1.2-1.3 .9 1.2 1.5-.6-.3 .7 3.3 .4 1.4 .9-.6 3.9 3.7 1.4-1.1 1.7 1.5 5.5 0 2 .6 2.6 2.3 2.1 .9 0 .3 .4 1 1.5 1.4-.1 3 1.8 .2-.2 1.2 .9 1.7 1.9 .6 3.1 2.1 4.9-.4 .4-.6 1.4 .8 3.2-.4 3.2 1.6 1.9-1.5 2.2 1.3 2.3 2.9 1.3 1.3 2.6 1.6 .8-.1 2.5-.6 2.7-.4 2.6-.7 .2 1.5 2.2 1.6 5.6-1.3 2.2 1.6 3.4-1 2.3-.3 3.4-1.9 .7-1.9-.2-1.9-.4 .7 .7-2.3-1.8-2.5-.8-2.2-2.7-2.3-3.5 1.2-2.3 .4-1 1.9-1.6 2.3-1.4 2.3 .9 1.7 1.3 .5 1.3 .7-.6 1.2 4.2 1.2 2.1 .4 1.5 1.1 3.4 .5 2.2 1.2 3.3-1.4 2.7 .6 1.3-2.3 1.5-.2 2.1 1.1 2 0 2.1-.9 4.1 .3 2.9 1.3 3 1.2-3.8 1.9-3.3 1.6-4.4-1.2-.6-.8-.7-.3-1.8-1.7-2 .6 .2-3.3 .1-2.9 1.6-1.5 1 1.7 2.9-1.1 2.7-1.7 1.6-1.4 .7-1.5 1.1-1.6-1-.6-1.1-2.3-1-2M594.5 705l-.8 1-2.8 .5-1.6 2.3-.3-.4-.4 3.7-.3 .5 .6 .8-1.4 1.3 1.8-1 3.4 3 2.7-1.3 1.1-1-1.9-.4-2.7-.9-3.5 1.6-1.5 1.9 1 0-.5 2.6 1.3 0 2.2 .2 1.8 2.6 .7 .9 2.9-.8 2.7 .2 2.4-.8 .2-.8-.6-2.1 1-4.5-4-1.1-1.8 .1-.6-2.3-1.3-1.7-2.6 4.2-2.7 .1-1.7-.3-1.7 .8-3 1.2-2.3 .7-1.5 1.2-1.9 .6-4.1 1.2-1.6 0-.7 1-1.5-.8-1.3-1.3 .8-2.1 1.5-.9 .9 .1 2.2-.8 1.9-3.2 1.5-.1 2.5 1.1 3.2-.5 3.1-2 2.9 1.3 1.1 2 2.6 1.6-.6 2.4-.6 .7-.2 2.9-.8 .5-.1-.2 1.8 .8 .8 .1 3.7-1.1 2.3 .3 2.5-.5 1.1-.1 0-1.3-.6-1.1-1.7-.2-4.2-.3-2.4 2.3-.8-.4-1.4 2.8-1.9 1.3 1.2 1.3 1.8 2.1-1.7 1-3.6-.1-1.4-1.7-3.4-1.1-.7-.5-2.8-.8-1.9-1.8-1.6-1-.5-1-1.2-2.4 .6-3.4 0 .3-4.1 1.9-1.4 1.7-2.6-2-2.6 .9-1.7 1.6 1.2 0 4.1 .6 1.1 1.2 3 .3 .7 .6 4.8 .3 2.4-.9 3.2 .5 1.2 .2 3.2-.9 2.1-.2 .3-3.3 2.9-.8 1.3-2.2 2.3-.7 .8-.3 1.8-1.6-.1-1.4 2.5-.5-.4-2.4 .5-1.3 4.8-.9 2.2 .7 3 1.1 3-.6 .9 1.5 3.5 0 2.3 1.1 .9-2.4 3.1 0 2.6-2 1.9 .1 3.6 1.6 2.2 0 5-.6 2.6-1.1 1.5-.1 1.2-.4 2.8-.2 1.5 .4 1.9 2.3 .8-1 1 1.1 4.1-.3 3.2 3 1.8 0 2-1.6 4.7-.9 1.7 0-1.2-2.3 3.2-1.6 1.6-2.3 2-.1 3.4 .9-.3-2.8 1.6-3 .8-1.4-.9 .3 1.4-2.2-2.7-1.3-4.4 0 1 1.4-2.6-3-1.9-2.1-3.8-.6-1.8-1.1-2.7-1-2.4 .5-3.7-.6-3 .3-2.9-1.3-2 .2-2.3-1.2-1.5-1.2-1.2-1.8 3.6-3.2 3.4 1.2 2.3-1 .7 2.5 1.7 1.8-2.7 .9-3.2-.1-2.2-1.5-1.2-.4 1.1-1.1-1.3-1.9 2.8 .1 2.5-.8 3-2 2.4-.4 3.1-.4 2.3 2.2 1 .2 1.4 .5 1.6 2.9 3 .7M786.6 574l1.1-3.3-1.1-2.1-3.2-1-2.7 1.6-2 2.2 .5 1 1.8 .3-.2 1.9 1 .8-.1 3.7 2.2 .8 1.9 .8 2.6 1.8 4-3 2.9 2.4 1.9-1.1 .8-.1 2.6 1.5 2 1.3 3 1.3 1.1 .2 2.3 .8-.3 2.6 .2 1-1.3 1.9-1.2 1.2-3.5-1.4 0-1.1 .2-.2 2.6-1.8 1-3.2 1 0 3.2 1.5 2.9 .8 2.6 2.3 1.4 0-.7 1.8-.4 2.4 0 .6 .5 1-.3 .4 .6 1.4-.9 1.8-.6 3 .1 1.9 1.1-.3-1.3 1.4-3.2 2.5-1.8 1.8-3.3-.5-3.1 1.8-2.8 .4 1.1 .5 .6 .5 1.1 1.2 1.1 2.3 3.4-.3 3.1 2.4 1.9-1.3 2.2-1.2-1.5-.1-3.1-1.9-2.8 1.3-2.4 1.5 .9 1.3 2.6-.1 6.8-1.1 .4 0 1.1 .1-.8-1.9-.8-.5-2.6-3.5 1.6-.5 .5-.2 2.1-3.7-.7-4.1 .2-.7 2-.3 2.9-.1 .2-1.8 .7-1.5 2.3-2 1.5-.9 .4 1.2 2.6-2.3 2.9-.9 .8-1.5 1.6-2.2-.4-1.4 1.5-.8 1.9-2.5 5.4 .5 .6 0 4-2.3 1.6 1.9 .5 1.6-1.9 1.7-2.6 1.4-1.1 1.1-1.4-.8-.8 0-.1-3.7-.1-2.7 .4-.4 .2-1.2 3.4-.4 4.3-.7 3.4-2 1.4-1.7 2.5-2.2-.7-.7-3.3 0-2-.7-1-2.3-1.6-1.7-1.5 3.3-2.7-.5-2 1.9 1.4 2.8-1.5 .9 2-1.8 3.6 2.1 2.6 1 1.2 0 2.6 1.1 3.6 1.1 1-.2 1.9 2.9-.5 .7-.4 1.3-1.4 1.8-3 .8-2.3 1.7-2.4-.3-1.2 .7-4.2-2.2-1.1-.8-2.1-1.8-1.5-.3-1.5-1.2-2.4-1.5-4.1-1.7 1.6-1.6-3.5 4.1-4.2-.7-5-2.2-1.8-.9 .2-2.4-.6-.2-.3-3.1-1-.2 .8-.2 2.2-1.1-1-1 .6-2.9-.4-3.2-2.5-.6-.7-2.5-1.1-.7 .4-.2 .9-1.8 3.5-.9 .9 0 3-1.1 2.6-.9 1.3-2.4 2.5-.7 2.6 2.9 2 2.2 5.1-1.2-.3-.7 4.7 0 1.7-.4-1.3-.8-2.6-1.1-1.1 2-3.9 .3-3.2-.8M714.2 623.2l-1.8-2.1-.9-.4-4.7 .3-2-.6-2.6 .8-2.3 1.7-3.3 1.1-1.7 .2-4-1.6-2.1-2.3-1.8-.6-3.3-1-.8-.4 1.6-.7-.7-1.6 3.2-2.2 2.5-1.4 1-1.5 3.3-.1 1.9-.8 2.2 2 2.3 0 2 0 1.7 3.2 .6 1.8-1.4 1.1-3-1.5-1.6-.1-1.2-1.6-2.5 0 1.7-3.9 2-1 3.1-.3 3.1 .1 2.3 2.4 2.7 .6 .7-.5 .3-.4 1.3 1 .2 1.5-.4 2.4-1.9 1.3-4 .2-2.5 2.2-2.1 1.1-2.8-.1-2.2 1-2.4 1.3-2.2 .6-3.1 2.1-1.7-.6-2.1 2.4 1.2 1.6 1.3 1.4-.4-.1 .4 2.5 2 2.7 .6 2.1 .9-.9 .5 1.2-1.4 .8-2.8 3.6-1.1 .7-.9-2.7 0-.4 .1-3.5-1.9-1.7-.1-3 1.1-1.1 .3 .5-.6-2.4 2-.5-.7 .1 .9-1.4-1.6-3.4-1.3 .1 .2-2.2 2.7-3 2.1-.3 .1 1.1 3.7-3 .4-.1 1.8-1.9 3.1-.9 1.1 0-.4-1.7-.9-.7-1.8-.8-1.5-.7-3.3-1.6-2.7-.1-3 1.5 .8 .5 .3 3-1.4 1.4-.2 2.1-.2 .3 1.2 .1 .5 2.5 .5 .6 2.4 .9 3.1 1.4 2.2-.5 3.7 .2 1.7-2.5 2.2 .1 3.2-1.6 1.5-1.3 .1-.6 2.4-1.5 .5-2.4-3.2-2.4-1.9-.8-2.3 1.1-2.2 .3-1.5 3.7 .2-1.4-.1 .1 4.5 1.1 3.1 .9 1.2-1.1-.2-2.9-1.6-.1-2.6 .6-4.9 1.5-.6-1-1.1 1.5-.5 1.9-.9 1.5-2.7 1 0 1 .6 .3-.8 .3-3.2 1.8-4.5 1-1.3 .3-.2-2.7 .7-1.1 2.9-1.7 2-.9 2.4-.6 3.9 0 .8 0 2.5-.8 1.6 1 .2 4.5-1.9 2.9-.6 0 .7 2-.6 3.4 1.2-.7 .9 2.7 3.1-3.2 1.4-.9-.6-1.5-3.6-1.8-2.5-1.3-2.1 .8-1.3 2.7 .1 3.9 1.3-.7 .6 .9 2.3 1.6 2.3 1 2.6-.9 2.4 .1 1.6-1.6-.5-1.5 .4-3.4-.3-.2-.7-2.4 1.3-3.6 2.7-1.2 1.3-.2 1.7 .5 .2 .2 2.3-1.5-.4-2.2M732.6 664.3l-1.2-1.2 .4-1.8-3.1-1.2-1.6 0-1.1 1.6-3.2-.1-4.4-2 0-2.7-2-.6 .1-.6 2-1.7 2-2.1-.3-.3-3-1.3-2.3-2.8-.2-.2-.7-3.4-2.9-.5-3.2-.6-4.1-1.1-2.1-2.3-.4 0-3.4-1.3 0-.4-2 1.9-2.8 1.5-4.7-1.4-.5 .7-2.5 .5 1.2 1.8 1.8 .6 4.3-.6 2.1 .9 .8 2.8 2.3 .4 2.8 .9 2.5-2 1.6 1.2 3.7-.1 1.7 .6 2.4-1.8 1.1-1.1-2-1.3-.2-1.9-1.8-.1-3.5-.6-2.4-1.4-2.6 1.6-.7 .6-2.6-.6 .4 .7-3.9 .9-2.9 .7-.7-1.9-3.1-.3-.4-.5-.6-2.8 2.4-.6 1.2-1.8 1.3 3 .8 .5-1.8 1-2.3 2.5-1.5-2.2-1.8-2.7 1.6-1 1.9-1.6 2.2 2.2 3-1.5 .5-1.2 1.2 .5 .9-3.8 .5-.2 1.6-2.3-1.2-.9-1.3-2.6 1.1 .6 .8-.7 .8-2.7 1.4-1.5 2.5 .2 2.7 1.6 3.3-1.8 1.4 .3 5.4-1.8 1.8-1.6-1-2.7-.7-.8-1.5 .5-1.6-.9-.6-3-3.9-.1-.4-2.2-1.3-1.9-1.9-.2 .7-1 2.3-3 2.3 .1 2.7 2.5-1.6 1.2-4.8-1.7-1.4 .8-.5 .4 .3-1.7 .3-.1 1.9-1.9 1.7-1.8 .2-3 3.5 .9 1.3-2.7 .3-1.6 .5-.2 2.3-1.5 .9-1.4 1.1-.5 .4-1.9 1.4-1.8 1.4-2.3 1-.1 2.9-.7 1.9-1 1.3-1.1 2.7-.9 3.7-.5 .5-1.9 2.5-1.7 .9-.3 1-2.1 1.1-2.4 4.4-.7 1.6 .3 .8-1.2 2.5-1.6 .6-.2 1.2-1.2 3.4-.7 3.5-1.5 3.2 .6 .8 .5 1.6-.9 3.3-3.2 .7-1 1.6 .3 2.3-1.9 2-1 .1 1.2 4 .9 1.4-.6 2.1 0 2.1-3 3.6 0 4.6 1.8 1.1 2.1 2.3 2.3-.5 1.3 1 1.8 .5 2.2 .2 1.1 1.8-.4 1.4 1 2.5 2.2 1.3-1.6 2.6 1 2.9-.4 1.2 0-.9-2.5 1.5-3.3 .8 1-.1-3.3-2.5-1.3-.7-2 .7-1.5 .2-.8-.5-1.9 1-.4-.4-1.7-.4-1.3-1-3.7M876.5 635.5l1.3-1.4 1.8 .3 1.2-1.1 2.7 .9 2.2-2.1 2.9-.9 4.3 .4 .1-1.1 1.7-.5-.1-1-.2-1.6-.9-1.5-2.8-1.7-2.5-.4-1.6-.3-2.9 .4-.8-.8-2.1 2.6-.2 1.6 1.3 2.3 1.9 .3 3 1.5 1.6-.5 1.4 0 3.4 1.5 5.2-1.7 2.2-.7-.9-3 .1-1.8-3.3-.3 0-1.5-1.2-1.5-3.1 .1-3.1 1.4 1.1 .7 .2 .7 2.2 .9 4.2-1.5 .3-1.2-2.8-1.1-1.1-.7-3.7-2.6-.8-1.9-.9 .6-3.5 .1-2.1-1.4-2.7 .6-3.7 2.4-.8-1.1-2.3 3.3-1.3 1.8-2.5-.9-2 1.1-2-1.8-2.9 .7-2.5 2.5-1.5-1.8-.3 1.3-2.5 .8-.6 3.9-.8 1-.8 1.5 .3 1.4 .6 1.8-.1 2.6 2.3 2.4 2.9-.1-.1 .9 1.7 1.5 1.7 2.2 1.8-.6 .9 .6 2 1.2 4.4-.2 .7 3-2.4 2.3-3 .2-4 2-.5 2.1-1.4-1.1-.3 1.1-3.8-1.2-2 0-2.7 1.1-3.1-1.3-2.8 .3-3.5-2.5-3.5-1.2-2.7 .5 .8 0 .8-2.3-1.5-2.3 .5-2.2-1.4-2.6 .4-1.6 .5 1.1 1.4-.8 2.2-2.6-1.9-3.2 .2-.1-1.3 0-.4-1.3-1.1-1.3-.6-3.3 1.2-1.7 1.9-1.7 .4-1.5 1.5-1.7 2.6 .7 2.9 1.4 2.6-.2 1.9 1.6 3.1 1.5 1.3 .4-1.1 .4-3.8 3.7 .6-.1-.2-.4-2.5 1.8-3.8 2.3-1 1.1-2.6-1.3-3.8-.9-1.3-2.1-1.1-2 .1 1.2 .8-1.6 2-.2 1.1-2.3 3.6-.4 1.7-.2 2.9 2.9 1.8 .1 .2 2.2 .6 1.5 1.6 2.2 .2 1.8 .4 3.5-2.2-1.5-2.1 2-3.3-1.4-4.4 1.8-.8 1.4-2.3-.2-3.4 .5-2.2 .5-.3-1.2-2.9 .7-2.3 2.1-.3 0-1.8 3.7-.7 1.7-2.9 .7-2.1-.3-3.3 .9-2.7 1-.7 1.4-1.3 .9 .8 1.3-1.4 .3-3.6 1.6 .1 2.2 .8 2 1.8 1.5 3.9 .6 1.1-.8 2.5-.9 .9-.4-.8-2.1 .3-1.3-1.9-3.2-4.2-.8-1.8-.4-2.5 .2-2.6 .9-.2-.1-3.1 1.5-1.7 2.2M748.1 614.1l3.3-.6 2.9 .6 1.3-.1 1.9-1.7 2.5 1.6 2.5 2.3 .8-.5 4.8 0 2.7 1.4 3.5 .4 4.2-.3-1.1 1.2-2.3 2.7-3.4 2-1.7 0-2.6-.8-4.4-.5-.6 .8-1.5-2.3-1.6-2.8-.8-2-.9-.3-.8-2.1-1.3-.4-1.1-1.4 1.3-2.2-.1-3.3 1.9-1.2 2.7 1 2.8-.1 0 2 .7 1.9-.8 1.2-1.8 1.9-4.2-2.9-.1-2.4 1-.3-.3-1.1 0-2 2.4 .3 2.1-2-2.8-1.7-1.3-2.4-.6-.5-3.5-2.1 0-.4 0-2.4-3.2-.8-1.9 1-4.2-.6-1.7 .2 .4 1.3-5.1 .7-.6 .4-2 1-3 1.1-2.2 .4-2.6 .6-3.1-1.6-.7 .2-2.9-2-2.5-.9-1.8-1.9-2-1.5-2 1.1-2.8-.1-1.8-.8-2.6-.1-1.5 .9-1.2-.2-3.4 1.9-.8 1.7-1.6 .3-1.1 1.9-2.1 1.8 1.4 1.4 .6 4 .4 1.4 3.2-.1 1-1.1 2.2 1.2 2.7 .9 2.8-.2 2.8 .8 .8-.3 3.6 1.7 1.3 2 .4 1.6-1.8 .3-1.7 1.2-1.1 2-.9 2.6-2.4 0-1.5 .4-2.5-.1-2 .1-1.1 1.2-2-.5-.8-2-3.7-1.7-1.8-1.3-1.9-.6-2.5-2.1-3.7 1-4.1-1.1 .8 .8 .2-3.6 .8-1.8 2.9 1 1.4-1.6 .2-1.6 .5-1 1.5-.6 2.9-3.2 2 .6 2.2-1.6 .4-.9 3.2-1.4 3-.1 3.2 2.1 1.3 1.8 1.3-.5 .2 .7 .2 1.5-.7 2.5-1.7 2.8-2.9 .3-3.1-.3-2.4-.6-1.3-1.7-4 .8 .4-2.1-.6 .1-2.5-1.8-3.3-.1-.9-2.4 .1-2.1-2.1-.6 2.3-1.6 1.8-2-1.2-1.4 .3-.7 4.7-2.5 2-1 3.4 1.7 2.1 1.9 1.6 .6 4.2 .1 1.4-1.1 2.1 .5 1.7-2.8 2-1-.8-2.2-2.3-.5 1.5 .6-3.8-1.6-.2-1.8-4.6 0-2.9-.6-2.4-.6-2.6 0-1.7 .8-.6 .6 .6 1.4 .5 .9 1.1 2.7 2.5 2-.6 .6 1.3 .5 2 2.1 1.5 1.4 2.9 1.2 .8 1 2.1 2.3 .6 .8 2.1-.3 .9 1.7 1.4 1.3M767.2 658.8l-1.8-.3 1.2-.8 .5-1.9 2.3-3.1 .2-.7 3-.3-.8-2.1 4-2.1 2.3 1 2.6-1.2 1.7-.8 3.6 .2 1.3-2.9 .6 .6-.5-1.1 .8-2.9 0-1.1-.5-.9-1.9-.7-3.1-1.9-1.3-1.6-1.9 .3-2.9 1.2-1.4 2.1-2.5 1.7 1.2 2.1-1.3 4.1 1.4-.4-.9 .7-1.8 1.1-1.5 .8-2.2 1.2-1.7-.3-2.5-.5-3.6-.1-1.7-.1 1-3 .6-1.5 .1-1.4 .9-2 .8-.4 .5-1.1 1.6-2.6-.7-2.5 1.7-1.4-1.4-.5 .3-1.2 .6-1.6 .3-.9 0-.9 1.9-3.8-.9 .2-2.4-.8-1-.8-4-2.4-5-1-2.6 .1-1.6-.5-3.1 .4-2.4 0-.9 .6-2.8-.1-2.2 1.6-1.3 2.1-.2-1.3-1.3 1.3-4.1-1.1-2.6 .3-1.4-2.7 1.8-2.5 2.8-.3 1.7 .6 1.8 .1 2.5 1.9 .8 .4 1.9 1.4 .1 5-2.6-.8-1.3 .9-2.7 .7-1.7 1.7-1.8 1.1 3.4 3.2 1.8 .2-.5-.7 2.7 2.4 1.9 1.7-.7 .8 .1 .9 .8 3.1 2.4 1.8 0 .8 1.9 3.1 1.9 1.3 1.3-.4 2.1 2.6 .4-1 2.4-.6 3.5 .5 4.4 1.8 2.7 .5 .6 1.4 1.5 2.1 2.1 1.9 1.4 1-1.6 .6-.5-.5 2.5 .8 4.3 2.3 3.8-.7 .6-.5 1.4-1.7 2.3-.4 1.3-.2 .6-1.3-.2-2.2 1.9 0 2.6-2-1.4 .3 1.5-3.1 1.3-3 1.4 0 2.4 0 .8-1.7 3.4-1.7 1.3-1.1 2.2-1.3 4.1-1.2 1.5 .7 2.5 .9 .6-.6 4.8 1.2 2.2 .7 5.2-2.4-1.1-.5 1.7-.3 2-2 3.8-1.3 1.5 .3 1.7 1 1 1.4 3.1 .7 .2 2-3.6 1.2 .8-.2-4.6-.9-2.3-.8-2.9-1-.3-3.3 1-1.3 2.3-1.7 2.3 .5 2.5 .1 1.9 .5 1.7 .7-.7 .8 1.9 0-1.9 1.2-4-.9 .3-1.3-.4 .7 3.3-.3 1.9-1.3 .6-.7-2 2.3-2.7 1.3-.4-.7 0 .5-1.8-.4-.6-.4-1.9-1.1-3.2-1.2 1.9-3-2.5-1.6 .2 .6-.3-3.1 1.4-1.1 .3-1.3M778.4 600.8l-2.6-2-.8 .7-1.2-1.2-.5-3.1 1.4 0-1.5-.1 1.7-2.8 .6-3-1-1.7 1.9-3.3-1-1.2 1.6-1.4-.4-2.7 2.7-.9 .6 0 1.9 0 2.6-1.4 1.5-1.3 2.5 1.1 2.4 3.8-.1 .5 .9 3.2 1 1.1-2.7-2.2-.8-.4-2.9-1-1.3 0 1.6-3-1.8-.6 3.4-2.5 0-2.1-2.1-.4 .4-2.8-1.9-1.1-.7-.5-2.9-1.3-1 .8-3.7-.4-2.8 .7-4.1-.1-2.7 .5-2.3-.9-3.1 .6-1.7 .2-2 1.5-.4 1 .1 1.6-2.8 1.6-1.5 1.2 3.3 1.4 3.6-.6 2.3-.7 .9-1.6-1.4-.3-2.5-.3-.7-2.9-5.6 .2-2.4 .1-.7 0-1.9-1.8-3.1 1.6-2.5-.5-3.6-.4-2.6 0-2.7 .6-1.8-1.1-1.1 .6-1.5 2.2-1.1 .6-1.7 2.5 1.3 .9 1.1 .1-.7 2.5 .9 1.1 1.4 4.2 1.6 1.4 .9-1.8 .9-.1 1.7-3.2 .4-.1 1-.7-1.2-2-1.7-1.6-3.5-.4-2.4 1.5-4.9-1.5-3.6-.7-1.5 1.7-.6 .5-1.5 1.3-3.3 1.4-.8 1.2-1.2 1.6-.6 1.9-1.2 2.8-.2 1.1-1.6 .9-.1-.3-1.8 1-2.6 1.5 .8 1.8-2.8 0-2 4.2 .3 2.6 3.1-.4 4.4-1.8 1 .8 .8 1.2 3.9-.6 2.3 .9 3.5-1.3 1.3 2.9 1.4-1.2 1.4 2 1.7 1 2.4 .9-.4 1.4-1.9 2.6 .2 1.9-1.6 1.4-1 .4-.8 1.2-4.4 .9-1.5 .6-1.9-.4-1.8 2.2-2.9-2.1-2.1 .2-2-1.6 .8-4.3-2.6-.2-1.1-2.8-.9 .8-1.7-2.5-1.2-1.5 1.6-1.3-.4-2.8 .2-2.4 3-1.3 .2 0 2.4-.8 4.5 1.5 2.5 1.8 .9-.1 .9 1.3-.2 4.1 1.7-.2-1.4 .3 .3 1.7 0 2.1 2.5-.8 2.7 3.3 3 1.2 2 1.9 1.8 0 .3 .9 2.6 .4 3.1-.7 2.6-1.3 .7 2.1 2.5 2.6-.3 2.1-1.3 .7-1.3 3.2-3 1.2-2.2 1.5-2.9 1.3-1.2-1.6-2.2-1-.6-3.8 1.6-1.7 2.5 .2 3.4-1.6 2.8 .6 1.6 .5-.1 1.2-1.7 2.9 1.4 2.2M875.3 603.2l-1.9 1.6 3.1-.3 1.9 3.1 .5 .9-1.4 .4-.1 0-1 2.9-1.4 1.4-2.7 1.4-.7 1.9-1.6 2.1-.1 2.5 1.3 1.3 1.9 3.5 .9 .8 .9 .9 4.4 2.7 2.7-.9 .8-.3 .3-1.3 1 .7 2.8 2.7-2.9 .2-2.5 3.8-1.1 1.6-2.7-.4 .2 .3-2.2 1.3-3.7 1.8-.2 .9-.6 2.3 2.4 2.3-1.1 1.3-1.8 .6-1.1 1-3.4-.6-2.5 1.9-2.8 .6-.8 .4-3.1 1.6-.9 3.1-2.5 1.8-2.2-1.2-1.1-.2-3.4-.2-3-1-3.9-.4 .4-.5-1.6-1-.5-3.4 2.5 .2 2.3-1.4 2.4 .5 .8 1-2.2 2.3-3 .1-2.2-.7-3-1.7-.6 .4-1.1-1.1 .8-2.9 .3-2.9 .5-.7 0-2.8-2.6 2.1-2.1-1.7-2.4-2-2.4 .9-2.1-.8 1.6 2.3 0 1.4 2.2 1.1 .7 .2 2.5 1.7 0 .8 1.7-1.1 3.1-1.4 1.2-1 .2-2.5 1.2-1.9 .2-.7 1.1 1.4 4-1.1 2-1.4 3.3-.2 1.1 .3 .7 2.8 .8 4-1.1 .6-3.4 2-.9-.9-.9-3.8 1.3-1 1.8-1 1.1 .4 1.9 1.3 4.4 .8 1.3 1.5 1.5-1.3 .7 .9 2.5 1.7 1.4 1.3 4.2-.4 2.9 .2 2.8-3.6 .3-1.1 1.5-.2 2-1 3.1-.6 2.2-.5-1.4 1.1 .1 1.7-3.9 .1-1.8 1-1.8 1.6-2.8 1.2 .3 4.3-1-1.3-2.7 1.3-1 1.8-2.3 .9-3 .4-2 .3-3.2 2.8 .8 .6-1.5-.3 .6 1.8-2.7-.6-4.1 1.5 0 1.5 .4 0-2 .3 .3 1.2 2.6-1.8 1.3-.3 2.7 .1 .1-2.9 1.3-1.3 1.9 .6 1.7 .3-.2-3.7-1-2.4 2.5-.6 .8-1.3 3.2-.1 1.7-.7 2.6 0 2.7-2.2 3 .5 2.6 .6 .8-1.3 4-2.1 2.2 1-.2-2.1 2-1.1-1.2-.6 2-2.1-.6 .5-1.2-2.7-.5-3.4 1.5-1.3 .2-2.6 .3-.4 3.9-.2 2.6 1.4 1 3.2-1.2 0 .6 1.5-2.5 0-2.9 0-2.2-2.2 1.4-2.5-1.4-1.5-1.9-1.1-.2-.2 .1-3.2-.9-.6-3.2-.5M864.3 567l.4 1.4-1.7 .5-2.7 1.1-2.2-.2-4.2 .7-.9-2.5-.7-.3-1.6-1.4 .8-2.4 2.7-.6 3.5-1.5 2.5 2.7 2.7 1.7-1.6 2.6-2.3 1.8-3 1.1 .6 .9-2.2-.4-1.2-.8-3.9-.6-2.2-1.8-2.7-1.7-1.6-.1 2.7-2.3 1.2-2.7 2.4 .1 4.2 1.6 2.6 1.6-.8 1-.7 .7-1.2-.5-2.1 2.5-.7 2.9-3.1 .5-3.9 .5-2.4 .7-1.9 .8-2.4 1.5-2.2 1.6-1.6-.3-1.7-.7-1.3 1.3-1.2-2-2.7-.1-4.2-.8-.9-.1-5.6-1.5 1-1.7-1.5-2-2.9-.5-1.5 0-4.4 2.1-1.8-2.3-3.5 .5-2.7-.2-3.9-1.7-1.7 .6-1.6 1.6-1.3-2.2-2-1.4-1.5-.3-3.7 0-3.1-.5-2.2 .5-1.2 .6-2.6 1.8-2.9 .8-2.2 2-2.3-.2-3 1.8-1.8-.5-3.8-.6-2.7 .5-1.8 .8-1.1 1.6-.9 1.3-1.6 .6-2.1-1.4-2.9-1.8-3.1 .7-.8-2.8-2.1 1.6-1.6-1.5-1.9-.1-2-.5-2.7-1.3-1.5-.4-3.4-3.3 .3-.9-2.3-.2-3.3-.8-.2-.6-.8-1.5-2.8-.4-1.8-.3-4.1-1.4-2.7 .1-.1-1.6-2 2.3-3 2.4 .9 1.2 1.9 1.5 3.6-1.6 2.3-.9 2.2-1.1 1.2 0 .4-1.1-2.4-1.5-2.4-1.1 .9-1.8 1.5-2.2 2.1-1.5 1.4 .2 1 .1 3.6-2.9 3.5 3.8 1.7 .8 .3 .2 3.7 .7-.3 3 .6 2.4-1.6 3.4 1.1 1-.4 0 .7 1.4-.6 0 .8 2.2 .4 2.1 4.6 1.6 2.6 .5 1.7 1.1 2.1-2.7 1.5-1.6 3.2 1.5 3.9-.5 2.3 .4 2.4 .1 3.6-1.5 1.2 1 1.2-1.5 1.2-2.4 3-3.6 4.1 .1 .7-1.9 2.2-.8 .7 .7 2.7-1.2 2 1 2.5 2-.3 .7-.9 1.1-3.3 1.9-2.3-2.7-2.7 1.6-2.9 .4-1.6 1.5-2.9-1.8-.4-.7-3.6-2.4-1.4 .6-.3-1.8 1.6-1.9 2.9-2 2-.8 3.5 .4 1.5 2.4 .3 1.4 .3 2.5 3.4 1.8 0 .5 3.4 1.8 1.6-.5 1.3 2.2 1.5-.8 1.6 1.3 3 .7-.5 .8 1.6 1.4M794 589.5l2.9-1.6 2.3-.6 1.2 .2 4-.3 1.4 1.4 1.6-2 .7 2.4 1.6 3 0 1.8-2.7 .2-2.2 3.2-2.3 0-2 .2-1.1-.6-2.3 1.7-2.3 1.4-2.3-.9-2.9 .4-3.2-.9-5.1 .6-1.3-1.5-.7-.9-2-1.1-3.7-1.8-.8-.4-1.3-.5-2.7-1.1-1.1-1.6-1.4-1.2-.3-1.3-2.4-.8-2-.1-1.1 .5-3.6 .7-1.7 1.6 .8 2.4-1.2 1.6 3.8-.1 2.6 .8 2.8 1.4 3.6 .4 2.4-1.2 1-.5 .1-1.5-3.1-1.8-3 .3-2.6 .9-2.2 .1-1.6-.9-2 1.3-2.2 .1 .9 3.2-.2 .5 1.2 2.1 2.1 2 2.2-.3 2.5-1 1.7 .1-.6 .2-.5-2 .7-3.1-.4-2.1 2.7-1.3 .3-2.5 3.9 .1 3.5-.2 2.8-1.8 1.4-1 2.1-.4 .7 .5 2.7-2.5 1.6-.3 1.2-.6 3.6-1.3 2.2-1.6 3.1 0 1.2-.8 1.1-1.3 .6-.6 .1-1.5-1.9-2.5-2-.1-2.8-1.4-.6-2.3-4.8 0-3.4-1.3-1.7 .4-3.2 4.3-.5 1.6-3.8 .8-.8 1-2.8-.3-2.6 1.2-3.3-.9-2.8 .5-1.2-1.5-2.8 2.5-1 3.3-1.5-.6-1.1 2.4 0 1.6-1.4-.4-1.2 .8-.3 2.2-.6 2.1-2 1.5-1.6 1.4 1 .4-1.6 3.5-1.6 .1 1.1 1.9 .1 2.2-.7 4.1-1.1-.9 1.8 .8 .6 1.5 2.6 2.6-1.9 .9 .1-.3 1.9 2.4 .3 3.6 .4 1.1 1 1.6-.9 .5 2.3 1.9 .2 3-.5 1.2 1.8 .6 1.9-.9 4.3 2.8 .6 1.8-.9 1.6 4-.7 2.6 .4 3.1-.5 2.5-1.4 3.1-2.7 3.2 1.4 1.4-.8 5.2 .5 2.5 2.1-.4-1 3.5-1.9 2 .4 2.7-.1 3.3-1.6 2.1-.7 4-.1 2.6 1.7-.7 1.5 .8 1.7-1.5 2.7-1.6 .3-3.5 .2-3.4 1.2-2.5-1.7-1.7-1.8-.1 .6 1-1.3 2-1.8 1.7-.7 2.7-1.3 2-2.1 2.1-1 2.5-1.9 2 .3 .2-.5 .9-1.8-2.4-1.8 .9-3.4-1.6 1.9-1.2-.1-3.3 .4-.8-.8-1.4 1.8-.9 1.3-.9 0 .2 1M744.8 557.7l1.9-2.4 2.7 .5 2.5-.5 3.8 3 1.9-.3 .8 .4-1.4 2.6 1.1 1.4 .5-.6-2.4-.4-3 .7-3.7 0-1.2-.1-1.9-1-1.3-.1-2.1-.7-3.6-3.1-2 .9-1.4-1.5-1.5-1-1.3-3.1-1.3-.2-.8-3.4 .8 2.4 2.9-1 2.9-1.6 4.4-.3 .6-.2 2.9 .4 3 .5 1.7-1.4 1.4 3 3.3 .8 1.3 1.7-2.8 .8-.1 4.4-1.8-.6 .2 1.5-1.6 3.1-.5-3.1-2.6 1.7-2-1.1-.4-.3-.8-3.8 .6-1.2 1.2-1 .4-2.7 .5-.8 1.2-1.6-1.8-.7-2.6-2.2-3.8 1.2-2.5 1.7 .1 1.9 1.5 .7 0 .2-1.3 1.1 .4 2.1-1.9 2.4-.4 3.2 .9-.7 0 2.6-.5 1.2 .1 1.6 1.5-1.2 2.8 2.7 3.1 2.8 2.6-.3 3.1-2.5 3.2 1.5 1.9-.3 1.4-.5 1.6 1.9 1.6 0 1.1 1.8 2.1 2 4-.2 2.5 .8 1.1 2 1.7 1.1 2.6-.3 1.5-1.2 .1-1.3-3.9 .1-1.3-.4-.5 2.7 .1 .2 .7 3.8 4.7-1.8 1.6-.4 2.1-3.1 1.4-1.4 1.6-3.3 2-1-.1-.9 1-1.4 .9-1.7 2-1.4-.2-1.8 .7 .5 1.3-2.1 .3-1.6 3.2 .2 3.2 .6 2.6-.3 .7-1.3 1.9-3.4 1.5-1.1-.3-.8 3-1.4 2.4-1.4 1.5-.8 2.6-.6 2.1-1.9 2.9 1.8 1.9-.7 .8 1.8 2.2 1.5-1 1 .1 2.5-1.3 2.2 .9 1-1.9 2.2-.9 1.5-.4 0-2.7-.9-2.7-.1-4.9 2.3-3.3-1.1-.7 1.6-3.7 .7-2-.7-2.9 1.2-2.6 1.7-2.9 1.5 .6 .6 1.2 2.7 .4 .6 2.5-1.4 4.6 1.6 2.7 .8 3 .8 1.8-.6 1.6 1.4 4.3 1.3 2.2-1.5 .8 .5 3-1.9 .3 1.5 3.3-1.3 1.6-1.6 1.5-3.3-.4 .3-5.4 .8-1.8-1-.9 .1-2.3 .8-2.6-.6-1.3 1.7-3.8-2-1.4 .8-2.9-.2-3.8-1.7-2.7-1.9-1.1-1.2-.2-2.6 1.1 1.1 1.3-1.8 .4 .1 4.6-.6 4.3-1.5 1.6 2.7 1.2 2 1.3-.1-.9 .8-.6 2.3-2.9 .5-2-.4M721.9 632.6l.3 2.6-3 3.1 1.3 .8 1.5 .1 .3 1.4 2.5 1.7 2.6 1.8 1.9-.1-1.4-.4 1 3.6 .5 2.1-1.4 .9 1.1 3.4 0 .6 .7 2.6 1.2 1.7-.2 .6-3.9 .7-.1 1.5 .6 .3 1.9 1.4 3.1-.3 2.8 1.1 3.2 1.1-1.3 1 2.5 1.8 4.2 .8 3.2-.2 3.5-.2 1.2-.9 1.8-1.3 1.2-.1 4.9-.3 1.4 1 3.9-2 .6-1-1.1 1-.1-2.2-.4-.6-.5-2-2.5-1.4-3.7 .3-2.9-.7-3.7 2.9 .7 .5 1.6 2.1-.6 0 3.6 .7 3 .2 3 .2 5 1.6-.2 .7 2.8 .4 .6 .6 4-1 2.2-2.5 1.2-.3-.2-3.1 1.6-.9 0-1.7-1.4-1.9-2.6-.5-1.2 2.1-.9 2.5-.8 1.5 1.7 .7 3.4 .8 2.1-.8 3.3-1.7 .4 0 0-1.9 1.6-.7 .1 .2 1.4-2.2 2.8 1.1 1.1-2.8-1.1-1.6 3.2-1.5 1.7-.4 .7-1.2 .3-2.7-.2-3.7-.9 .8-1.1-2.3 .3-1.6-4.5 .6-1-.4-3.2-1.9-1.1-1.4-1.8-1.2-2.3-1.6-2.8-.6-3.7 2.4-1.7 1.9-1.8 0-1.2 .5-.3 2.1 2 .2-.9 2.4-.7 2.6 2.2-.3 .4-.1-2.4 3 .8 .4-3.3 1.5-2.7 .3-2.6-.6-2.9-2.4 3.6-3.5 1.3-.5 3.1 .6 2.3 1.3 1.3-.3-.1 3.2-1.9 2.9-2 0 .2 2.2 .4 1.3-.9 .8-2.7 .8-4.4 1.2-.6 2.5-3 1.8-1.2 .4-4.7 1-2.1 .6-1.7 .8-1.1 .8-3.8 .6 .5-.9-1.9 .7-2.9-.9-.5-2.8 1-3 2.4-.7 3.3 1.1 4 1.9 .2 1.7 0 2.7-1.1 2.8-1.2-1.4-1.9-1.5-3.1-1.7-1.8-.3-.6-2.3 1.5-1.6 2.7 1.8 3.3 2.1 0 2.6-2.3 .9-4-.2-1.3-.1-.7-2.8-1.9-4.2-.4-.9-.7 .4-.5-1.9-1.3-1.6-3.8-.9-.7 0-.5-1.9 1.2-3.9-.7-1.5 .5-.7 1.7-1.8 1.2-.1 .9-1.2 4.6-1.4-.4 1.5 2.3 .1 .2 2.6-.4-.5 1.8 3.2-1 .6 1.1 .6 .7 2.1 2.1 1.7 3.1-.1M860.9 613l-2.8-.3 .9 4.4 .2 2.1 1 .9 2.3-.3-.6 1.9-.9-.7-2.1 1.4-.4 2.2-3.5 .6-.7-2.2-1.4-3 0-2.1 2.9-.5 3.7-2.7 1.6-.8 2.2 1.3 2.3 .5 1.4-1.3 2.2-1.3 .1-2.7 2.1-.4 1.1-1.3 .3 .5-.6-1.8 2.2 .1 1.4-1.2 2.6-.6 2.5 .2 2.2 1 .2 1.1 1.2 1-2.6 1.3-.3 .8-3.2 1.9-.8 .8 .4 .3-.8 1.5 0 2.8 1.5 1.9 2.9-.9 2.1 0 2.3-1.4 .6-1.1-1.5-1.6-1.5 .9-2.2 .5-1.7-.1-1.3 1.4-.1 1.2 2.2 2.4 .9-.1 1.8-1.1 2.2-.2 2.2-2.2-.2-1.8-2.7-.9-.7-1.3-1.4-.8-2-1-2.5-.5-3.1 2.4-1.6-.1-2.5-.2-3 3.1 1.7 1.5-2.9 .8-1.6 1.3-.6 2.6-.6-.4-3 .6-1.2 2.4-2.2-.5-2 1.3-2.3 .2-2-.4-2 2.1-2.7 .1-2.4 .5-1.5 1.8-1.3-1.8-.9 1 .2 4.5-.6 2.6 2.8-.3 .7 1.7 3.4 .5 3-1.2 3.4 1.2 3.1 .4 3-1 2.6 1 1.4-.1-.2 1.7 1.5 .7 1.9 2.5-1.7 1.1-1.8 2-3.4 2.6-3.7 1.2-.8 .7-1.5-2-.1 2.5-3.1-.1-3.2-1-5.1-.5-1.7 2.9-.1-.7-3.2 2.9-2.1 .8-.5 .7-1.9 2.5 .4-.3 1.2 1.9 1.1 4.5-.7-.5 4.2-1.9 .8 .6-.3-1.7 2.4-2.1-1.8-1.9-1.3-2.2-1.1-1.3-1.2-.9-2.4-3.6 .4-.6-2.3-1.1 .5-1 2.2-.3 1.2-1.3 .5-.8 2.6-.3 1.6-2.3 .2-.4-2.4-.7-3.2 .1-1.7-.4-1.1 1.5 2.3-.1 1.7-.1 3.4 1.1 3.3 .3 2.1 .7 3.7-.1-.3 1.4 1.1 3.1-1.2 .3-3.1-.3-.3-1.8-2.4-.2-1-.7-.1-2.9 1.2-.5-1.1-1.4 .4-.5-.1-3.6-2.1 .6-4.1-1.5 .1-.7-3.7 2.6-2 1.4-2-.1-2.7 1.8-1.6 2.1-.1 0-2.3 .9-2.6-.2-1.6-1.3-.9-3.9 .6-1.4 2.7-1 .3-1 1.9-.3 1.2-2.7 2.2-1 3.5 .8 3.2-.1 1.8 .2M844.7 611.7l-2.8 .2-2.1 .1-2.8 1.5-3.1 1-.4 2.4-1 1.8-1.5 2.2-.9-.1-3.1 2.1-.9 .1-.3 .1-.9 1-4.3-.2-2.3-.3-3 2.1-2.7-1.7 0 .9-1.5 2.7 1.6 1.5 2-2.1 .8-1.9 3.5-1.7 .8 .3 1.6 .6 2.2-1.3 4.7-2 2.1-.5 3.1 1.3 1.3 1.8-.9 1.2-1.9 1.7-1.8-1.2-3 1.1-1.7-.6-1-3.1 1.7-.4 3.3-1.9 3.4 2.5 2.8 .1 2.3 .6 .3 .8 .6 0-.8 3.5-2.8 1.8-4.9 .5-2.8 .2-.9-1.6-3.6-1.2 1.5-1.1 1.6-1.8 3.8 .2 3.2-.3 1.8-.3 1 1.9 1.9 .3-1.1 1.4-2.5 1.6-3.8 0-3.3-2-.9-1 2.3-1.7 .2-.2 1.5-2.4 5.1 2.7 .6 2.2-.2 1.3-1.4 1 .1-.4-1.7 1.3-2.9 2.9-3.8-1.4-.9-.2 1.8-.4 1.7-1.6 1.8-.1 1.6-1.1 2.9-.1 3.7 .1 .7 1.5 1.8 1.6 2.2 1 .7-.4 .3 2.2 1.6 1.9 0 2.4 1.7-.6 2.7 2.9 2 1.3 .5 .1 1.4 0 .2 1.7 3.8-1 3.2-.3 2.3-2.4-.8-.3 1.5-2.4-.1-.1 2.2-1.3 .8-1.4 3.1-.2 3.2-.8 1.6 .8 3.6 1 1.7-1.4 2.6 .8 2 .6 1.7 2.7-2.5 1-1.2 .7-3.5-1.3-3.4 .7-.3 0-3 1.5-1.2 .1-1.2 .3-3.4 2.4-2 3.1-.4-1.4 1.3 3 1.2-.7 3-.1-.2-2.7 2.9-.6-2-3.8 4.2-.9 .8-.2 1-.5 1 .2 4.3-1.8 2.2-.7-.1-.7 .6-2 .7-2.3 1.1 .1 3-1.8 .6-1.2 .7-3 .9-.7 2.3-1.2 2.1 1.5 1.2-2.8 3.8 1.6 3.1-2.2 1.7 1.7-2.4 1.5-.6 2.5-2.7-.4-1.5 2.3-2.3 .2-3.5-.5-2.8 3-.7-.5-1.8 1.6-1.4 1.1 2.1 .9-.2-.5 1.9-2 2.5-1.4-.4-2.9-1.7-.1-1.1-.9-1.5-1.6-.7-1.5-2.9-.2-.7 1.3-3.1 1.5-1.6 .7-1.8 .1-1.3-.6 1.9 2.3 1.7 2.2 1.3 0 3.1 .2 .6-1-.5-.5-3.8-1.4-3.1 2.5-1.2 .6M804.1 610.1l-1.3-3.1 0-2.3-3.1 1.1-2.4 .8-2 2.8 .5 1.5 .4 1.3 1.3 1.2 3.8-.1 2.6 0 1.8-4 .3-.6 1.5 .2-.4-2.6 .4-1.7 1.4-.7 2.4-1.5 3.5-.5 2.7 .3 .8 2.6 3.3 1.2-.1 2.1 4 1.4 .7 1.6 1.1 1.8 2.2-.7 1 1.6 .2 .4 3.1-.6 2.5-.1 1.8 .6 1.7-.7 3.8-.1 2-1.3 .5 .2-.7-3.3-2.6-1.3-2.1-.8-3.3 .7-1.7 1.1-3 .9 .1 1.6 .4 2-2.5 .7-4.2 .9-.4 1.3-3.3 1.2-1.8-.9-1.6-1.8-2.6-2.1-1.6-1.1 .1-1.1 .7-1.4-1.3-3.2 3-.3 2.6 .8 2.2 .5 2.6-1.6 .4 3.6-.9 1.6-.5 .5-1.4 3.2-1.5 .1-3.3 .7-1.6 .4-1.4 .4-1.2 1.3-3.4-1.9-3.2-2.1-1-.3-3.9-1.6-2-1.6-1.8 1.8-1.3 2.1-1.9 .8 .7 .1-.1 3.9 3-.6 4.9 .8 2.4-1-1.4-.9-2.8-2.4-3.1 .4-.8 1.4 1.5 1 1 2.1 3.7 1.1 1.1-1.7 2.7 .1 1.8 .5 .6-2.8 3.7-.3 3.2-.8 1.1-2.3 3.8 1.1 1.7-.8 2.7 .8 2.2-1.3 2.3 .4 1.4-2 2.2 2.1 2.1 1.3 5.2-.2 1.2 2-.4 2.1 1.5 .1 1.7 .8-.9 1.8-.1 1.9-1.9 2.1 .6-.9-.8 1.8 2 1.8-1.8 4.3-.8 1.3-.2 1.1 .5-1.2-.6 2.6-.7 .1 .8 3 1.4 3.7-.9 .2-4 1.7-2.6-.9-1.6 1-2.3 .3-1.4 .3-1.1-.2-3.5 1.3-4.6 1.4-3.3-.3-3.2 .4-1.2 1.1-2.6-1.1-2.6 .2-2-1.7-2.2-.1-2-2.1-1.6-2.1-1.1-.6-1.1-1.2 .3-.6 1.6-1.7 2.7-1.2 1.8 .9 1.6-2.8 1.4-1.2 1-.6-1-2.4 2.5-1.2 1.7-1.5 .5-.9-1.1-2.1 3.6-3.4 2-1.3 2.9-1 .2 .9-1.2-2.4-.2-.2-2.9-2.8-1.4-3.1-3.6 .7-2.1-.3-2.9 .2-1.9-1.1-2.1-.7-3.9-1.2-1.7 .6-2.1 .7-3.1 3-1.4 0-3.4 .5-2.4 2.7-1.6-2-3.6 1M688.6 631.7l2.3-1.4 .7 .4 2.3-1.1 4 .3 1.7-.7 2.5-1.7 1.8-2.3 4.2 2.3 2.8 .9 2.4-2.4 1.2-1.6 3.3-.1 1-2 .7-1.5 1.6-1.1 3-1.6-.5-.7-1-1.7-2.2-.5-1.2-1.1-.5-.3-2-1.8-3.3-1.9 1.5-2.5-2-2.5 1.5-2.5 3.6-.3 2.4 1.8 2.9 1 1.8 2.5 1.4 2 .8 .9-1.2 2-2.6 .8-3 .8-2.2-1.5-1.5 .1-2.8-.9-1.9 2.5-1.9 .6-4.4 3.4-1.7 .8-.8 .9-1.8 .8 .1 1-2.1 .5-.1 1.8-1.3 1.3-1.6 1.5 .2 2.4 0-.5 1.3 1.8 2.4 .2 1.7-1.2-.9-1.2 1.5-1.1-3.4-1.2-2.1-1.4-.5 1.8-2.1 1.5-1.3 0-2.6 2.5 4.3 2.2 3.4 .9 0 .6 1.5-1.4 .2-.7 2.8-4.4 .8-2.6 .9-1.5 .5 .1 1.8-.9 3.7-1.9-.5-1.3 1.8-1.5-1.6-3-2.6-.6-1.2-1-4-.2-1.1-.8-1.8 2.3-1.5 1.9 3.7 1.5 1.9-.8 2.1-1.1-.6-1.6-4.4 .6-.8-.7-2.5 .2 1.7 1 3.4 2.2 1.7-1.9 .4-1.2 1-.9 .5-2.1-1.2-2.4-.9 1.2-2.6-.9-1.2-.7 2.1-3.8 .8-1 2.2-1.2 2.2-.3 2.3 2.5 3.5 .6 1.1 .7 2.3-.7 1.2 1.2 .1 .8 2 1.9-.1 1.3 .3 1.6 1.2 1.9 .6 .8 1.7 2.5 .4-.8 3.9 3.4 2.7-.4 .2 .2 2.1-1.2 2.5-.8 .2-.9 .9-1.7 2.4-.5-.6-2.4-.1-1.3 2.3-.5 .1-2.7 3.8-.9 1.3-2.3 .7-1.8 2.3-1.5 2.7-1.6 .6 .1 2.3-.3 1.8 .7 2.1 0 2.8-.3 3.3 .7 .7 1.9 2.8 1.4 .8 1.2 1.6 3 .1-1.4-3 .8-3.8 .1 .3-.8-.6-1-.9-2.6 1.8-2.4 3.5 .1 3.8-.4 .1 .5 .9 2 1.4 1.4 .1 3.4-.9-1-1.5 .4-4 .5-.4 2.8-1.4 .3-3.4 .6-4.6 1.1 1.4 .8-.9 1.6 1.5 1.3 1.1 .8 2.8 1.7 2.1 0 4 1.3 1.6 .1 2.9-.5 .9 1.1 2.8 .3 3 0M757.8 635.4l-1.8 1.9-1-.3 1.6 2.4-1.1 2.5-.7 1.4 1.1 2.4 2.1 .8 1.5 2.1 1.9-.9 .3 2.9 1.9-.5 3.2 .8 2.4 .9 3.5 1.2 .5 2.3 0 2.3 1.7 1.1 .6-.1-2.7 1-1.7 1.7-1.7 .1-2.4 .2-1.7-3.4-.1-1.8-.2-.2 1.5-2.3 1.6-.3 4.7-.8 .8 2 3.3 2.4 2.6 2.2 1.3 1.3 1.7-1.9 3.4-.5 1.7-.5 .5-.6 .4-1.7 1.6-3.3 0 .4-1.5-.3-2.3 0-2.9-.6-2.1 .3 .2 1.1-2.1 1.4-.9 1.7 1.7 1.5 1.1-1.4 3-.6 .7-1.1 2.5-.5 .7-2.1 .2-.3 6.5-1.3 1.5-1.3 2.8-.6 1.1-2.9-.5-.9 2.7-.1 3.5 .7 2.3-1.9 3.9 .7 1.9 2.6 .6 0-1.4 1.4-.6 2.6-1.6 .1-4.3-.9-2.3 0-2.9 .9-1.2-1.8-1.3 1.6-2.6-1.6-.4-.4-1.1-2.7-1.3 .8 .5-2.4-3.6 0-5.1 1.6-.6 1.4-.7 1.8 1.1 2-.8 .8 4.5-1 3 0-.1-1.2-.6-2.9-1.8-.1-2.9-1.1 .1-1.3-2 2.1-.2 1.1 .9 2.6 .8 .6 1.5 1.4 3.6 .8 1.6-1.4 4.7 .8 .9 .2 .2 2.2-2.7 .1-4.3 .2-2.4-.8-.9 2.2-1.5 2.9-3-1.6-3.4-.5 .3-1.3-2-3.3-2.6 .9-1.7-1.2-4 2.9-.7 2.9 .3-.7 1.4 1.4 2.7 1.5 1.5-2.5 2.8 .5 2.1 .7 4.7-.4 2.5-1.3 2-1.9 2-.3-.2-1.1-.2-1.8-.7-2.4-3.4-3.2-3.7-2.1-4-.1-.5 .2-2.5-.5-1-.2-2.7-4-1.6-.7-2.5 .3-1.2 1.6-2.1 .8-1.5 1-1.1 2.5-3 1-1.3 2.2-.6 0-1.4 1.3 1 4 0 2.1 1.9 2.2 .7-.5 1.6-1 1.6 1.9 2.2-2.1 5.1-.1 2.4-1.7 1.5 .4-.5-2.8 .3-1.8-.8 1.5-2-2.1-1.5-1.9-3-2.3-.8 .6-2.4 .8-4 1.3-1.8 0-2.5 1-4.3 1.6-2.1-1.7-2.7-.5-1.7-1.1-1.1 .2-2.5-1.6-.8-.9-.2-1.1 1.6-1.5 .7-3.1-.2-.1M709.9 644.3l2.2 .4 2.2 2.5 1.6 2 2.2 2.4-.3-1.4 3.7 .7 2.1-2 2.5-.3 3.2-.7-.2-.4 2.5-3.1 3 .2 1-2.5 3.6-1.2 2.3-.5-.6-2.2 3.4-.5-.8-2.2 1.5 .8 1.1-3.4 1.8-1.2 2.3-.4 2.7 .3 2.9-.3 3.8 1.5 1.2 .5 .2 2.2-.9-.1 .5 2.6-4.7 1.1-2.5-.4-1.2 .2-1.9 2.7-3-1.5-2.8 1.9-3.8-1.1-3 3.5-1.6-.4-2.5 .6-2.6-1.4-.8-.3 .1-.7-5.7-1.7-4-.6 .8-.9 .2-1 .4-2.6-1.6-2.4 1.7 .3 1.3-3.3 .7-.1 1-.2-.4-3.7-1.3-.9-2.1-.6 1.5-2-1-2.9-2-.3-1-3 2.5 .4 3.3-.7 2.5 1.5 .9 1.2 .4 .8-2.1 1.7 .7 1.1-.5 1.2-1.8 1.1-2.5 2.1-3.3 1-2.6 .2-1.5-.5-1-1-5.4-.9-1.4-1-1.5 .4-2.7-2.2-2.1-1.5 .8-1.4-1.3-.5-.8-2.9-.5-1.4-.4-1.4 .7-2.9-1.2-1.2 2-1.1-1.7-1.1-2.5-1.5-.1-.3-.6-2.6 1.9-1.8-.7-1.4 3.2-.5 2.1-1 3.8 .3 2.3-.6 1.4 .8 2.2-.7 4.4 1.6 2.1 .8 2.4 .6 2.1-1.8 1.4-1.7 2.2-.1 3.9 1.1 1.4-.8 2.4-1.5 3-1.2 2.9 .9 1.9 2.4 4.1-.1 .7-.5 .9 .8 2.7 1.3 3.1-.1 2.1-1.5 4 1.2 2.8 1.4 2.4 1.2 2.9 .6 .2-.2 3.2 .7 1.2 2.2-1.4 1.6 .1 .6-.6 2.8 1 2.4-2.1-1.2-1 1-1.6 1.1-4 1.5-1.3 .7-2.2 1.4-3.3 1-2.5-1.7-.4 2.3 .6 1.2-.3 4.1 .7 .3 3.3 .4 2.2-1.1 2.1-.1 3.4 .6 2.6 .4 2.7-.7 .3-.3 2.1-2.2 1.3-.9 .5-1.1-.6-1.8 .4-.5-1.4-2.4-.8-1.3-1.8 1-1.5-3.9 .1-2.3-.1 .7-1-1.7-3.6 .6-3.6-.2-2.1-.6-.6 1-3.6 1.1-.5 .9 1.3 .3 1.8 3.6 .7 1.7 1.8 1.5 .9 1.5 2.4 .9 1.3 2 .4 1.5-.4 1 .4 2.3M683.2 619.9l.9-.8 .5-3.1 1.7-.9 .2 .7 3.4-1.9 3-.5 2-.2 1.9-1.3 4.6 .1 1 1.6 2.6-.2 2.8 .6 3.5-1.8 2.4 2.7 2.5-2.9 3.6 1.5 .2 .3 1.8-.2 2.3 .4 3.3 1 2.4 .3 1.5-.4 1.2 1.2 2.2-.9 1.7-1.3 2.4 3.3 6 .5 3.7-.6-.3 1.3 .5 .1 .2 3.3-.3 2.1-1.6 .5-4.1-.3 .9 1.5-.9 1.7-2.6-.9-1.5 2.8-2.5 2.3-.8 1.7 3.1 2.9 1.2-.5 .8 3.2 1.9 0 2.1-2.5 0-2.2-2.5-.4-.8 .1-1.5 1-1.9-1.9-1.8 0-2.5 2.2-3.2 .1-5.1 .4-2 1.3-2.2-1.2-3.4-1.3-.5-1.5-2-.9-1.4 .4-3.4-2.1 .6-2.7 .2-1.6 1.3-1.5 3.1-.4 3.5-1 2.9 .7 1.5 1.8 3.8-1.2 2.2 .9 1.3 2 3.1-.5 3.1-.7 .7-.8 2.2-.1 4.3 3.4 1 1.1 .6 1.8 2 .1-.4 .9 3.2 2.3 1 .8 4-.4 4.3 1 1.5-.7 1.1 .8 2.4 1.3 2.1 .6 .3 .5-.4 2.3-.9 1.9-.9 3.4-2.7 .7-.8 .5 .1-1.2-1.5 2.1-2.2 2-1.5 2.1-2.1 .1-2.4 1.2-2.5 .7-1.7 1.8-1.7 1.2-1-.1-1.2-1.8-3.4-1.7-1.3 .9-4.6-.8-.3-1.6-.2-.8-.8-4.5-1.2-1.5 2.3-1.4 1.6 1.2 3.4-.2 1.2 1.1 2.9 .8 2.8 .4 1.1 1.6-3.3 1.5 2.2 2.8-.2 .3-2.3 .1-1.5 1.5-3.1 1.4-2.7 .9-3.5 .2-.6 0-1.2 .2-2.6-.4-3.5-1.5-1.1 .1-2.4 1-2.9-2.8 .3 .2-1.4-2.5 .9-1.6 4.3-2.6 1 2.2 .8 2.7 .1 2.3 .7 2.7 3-1.2 1.9 .1 2.5-.6 1.5-.6 3.6 .1 2.4-.7 1.6 .5 2.8-1.2 2.6 .9 2.8-1.5 2.2-1.3 1.8-.9 .9-1.2 2.8-.6 1.3-1.2-.5-.9 1.1-1.5-1.7-2.6-1.1-1.6-3.3-.3-1.2-1.3-1.1-1.7 1.5-.4-1.6-3.2 .2-.7-1.2 .7 3-1.1 1.3-2.7 1.5-2.5-1.9 .4-2.9-1.6-2.4-.1-2-2.8M780.8 605.4l.6-2-.7-1.4-1.7 .5-1.1-1.4-3-1.7-2.9-1.7-2.7-.7-3.1 1.6-3.1 1.5-1.1 .4-.8 1.3-.9-.1-2.9 1.2-.6 .7-3.5 2.8-1.9-.4-2.8 2.1 1 1.7-.1 .8-2.4 1-.5 3.5-.4 .7-.8 2.7-.5 2.3-1.8 0 1 2.1-2.1 1.1 .3 2-3.7 .9-1.7 .6-1 .5-1.5-.1 1.9 1.1-2.4 3.1-1.9 .1-1.5 .9-1.8 3.2-3.5-1.9-.7 2.1-.8 2.9 .6 .7 2.5 .9 2.2 1.2 4.1 .9 .6-.2 1.8 .1 3.4-2.4-.4-2.7 1.2-1.3-2.2-1.3 1.3-1.5-3.8-.8-2.4 .7-3.4-1.7-1.9-.7-4 .8-1.3 2.6-.3 1 .5 2.5 1.6 1.1 1.9 1.5 1.6 .1 1.4 2 1.1 0 3.6-1.3 1.3-.8 3.3 .8 3.2 2 1.3-3.1 4-.6 2.5-.2 2 .7 2.1-.3 2.4 0 1.5 1.1 3.4 .3 2.5-.9 1.7 1.2-.4 2.3 2.7-1 .4 2.9 .9 1.3-2.9 2.4-.8 .7-1.3 1.4-2 .1-3.6 1.6-3.3 1.7-2.4-1.2-.4 2.1-3.3-.3-2.1-1.9-.6 .5-1.4-2-.9-1.4-1.4-1.6-3.4-3.4-.8-3.3 .2 1.9-1.9-2.5 .9-1 1.8-1.7 1.7-2.3 .6-.1 .8-.6 1.7-1.9 .6-1.4 1.3-2.1 2-1.8 .6-1.9-.1-.2 1.1-.3 1.1-3.6-.5-2.3 1.5 .2-.1-2.6 1.1-2.3-.9-1.3-.3 .3 1.7-2.8-.2-1.8-.8-1.9-1.9-1.3-.1 .2 0 .3-1.4-3.3-3.5-1.8-.1 .3-3.2 0-2.7 .7-2.2 1.6-1.7 1.6-.9 1.6-1.7-.4-1 .3-3.9 2.5-2.4 .4-3.3-1.2-1.6 .1-2.9-2-2.3-2-.2 1.6-3.2 2.7-.6-.6-.3 .1-2.3 3.8 .1 .6-2.8 .8-.1 .7-1.4 2.5-2.8 2.9-.8-2.2-1.7-.4-3-1.1-2.6-.5-2.6 1-1.7 .3-2.1-2.5-3-2-.6-2.4 3.5-.3 1.1-2.6 .6-.2 2.5-2.5 2.9-.4 1.6 0 1.9-2 1.8-2.2 .4 .4 1 1.3 3.4-1.2 .3-.7 2.7-1.6 3 0 3.1-.6M781.8 631.2l-1.3 2.2-3.2 .5-3.3-.1-1.1 .4-2.1-.7-2.4-1.4-3-.7-.2-2 .1-.4 3.2-2 2.4 .3-1.7 .7 4-1.6 1.2 .4 3.6 1.1-1.3 1.7-.2 .9-1.3 1.1-1.4 1.1-1.8 1.3-1.2-.4-4.3 .5-.9 1.3-2.7-.6-2.3 3.1-.7-.7 1.2 1.8 1.5 .7 2.8 .2 1.5 .5 1.7 2.9 3.7-.4 2.3 .1 2.3 .2 3.6-.5 2.8-.3 3.7 .3 2.2-2.1 1.5-1 2.6-.4 3.4-.9 1.1-1.9 .3-1.1 2.5-1.8 3.2-2.1 3.3 .2 1.3 .1 1.4 2 1.4 1.4 1.4 1.2-.4 1.9-.6 .9-2.1-.7-2.2 2.9-1.5 .7-4.5-1-2.1-1.6-2-.1-2.6-.2-1.7 .7-1.2-.5-3.5 .6-3.1 .2-2.5 .8-3.9 1.2-.9 .1-4 .7-2-.9-1.4-.9-1.5-.1-2.5 .1-3-1.6-3-1.9-1.7-.1-2.8-2.1-1.8-1-.5 1.2-3.8-1.6-1.5-.8-3.4-.8-2.1 1.8-2.5 .9 1.9 3-1.3 0 1.5 .5 1.9 3.7 2.6 .4 1.3 1.7 2.6-.9 1.7 .8 2.2-.7 1.3 1.4 2.4-.6 1.8-1.1 1.7-1.6-.1-.5-.5-2 .6 .1-1.7-.6-.9-3.4-1.8-1.8 .2-1.1 1.4-1.4 4.1-2.5 .2-.8 .2-2.1 2.1 1.1 .8 1.1 1.6-3.8 .5-2.9-1.9-1.5-.2-2.1-3-2-1-.9-.7-1 .7-1.4-1.6-.7-.6-2.2-.6-2.2-2-1.6-1.3-2.1-.5-1.2 1.5-2.1 .3-.4-2.5-2.3 3.5 .1 3 2.2 1.9 .7 2.7 1.5 .2 1.7 .3 .8 1.4 3.1 .7 .3 1.6-.6 .1 1.9 1.2 1.9-1 2.3-1 1.4-2.2-1.4-3.3-1.8-.8-.9-.7-2.3 1.9 .4 1.7 .5 3.4-.8 2-1.2 .6 0 4.2 .7 .9-1 .7 1-1.8 2.5-4-.1-.9-.4 .4-2 .3-1.6 1.3-1.2 1.9-1.2 1.5-1.8 2.5-.1 3.4 2.8 2.9 .5 1.5-1.2 2.3 0 1.4 .5 2.2-1.2 3.3 .3 2.1-.4 1.1-1.6 1.2-1-1.7 .1-3.9-2.9-2.6 0-2.2 .1-3 .1-2.8 .4M793.6 617.4l-2.5 .5-4.4 1.3-3.7-.9-1-.9-1.7-.3 .1 1.2-1.9 3-.8-.6-1 2-.3 2.5 1.4 1.6 .7 2.9 1.3 .4 2.4 .1 .2 1.5 .4 1.2-2.2 2-2.9 1.4-2.9 .8-3.1 1.5-2.5 .3-2.8-2.8-.2-.2 2.1-2.4 .8-1.9 1 .4 .8-1.6 4.7-1.1 1.4-2.3 3.7 3.2 2.1-.3 1 1.2-.3 3-1.5 .9-3.6 .2-3.7-.6-2-.3-3.6-.9 .1 .6-2.4-2.1 1.6-1.9 .4-.5 1-1.1 2.6 .6 1.5-.5 2.3-1.4 1.1 .2 3.2 .8 0 4-.3 .7-4-.9-3 .6-1 1.8-2.9-2-.3-.7-3.1-1-2.5-.3-.8 .1-1.6-2.1-.2-2.4 0-1.6-.2-1.9-.4-1.8 .4-1.4 1.2-1.6 2.2-1.4 2.6-1.6 1.6 1.2 2.7 0 3 1.3 4.1-.2 1.8 3 2.7 1.1 1.8 1.4 2.7 0 1.3 .5 1.6 3 1.9-.1-.4 2.1 1.3 .9-.6 .5-2.2 2.3-.4 3.2-1.9 2.2-.8 2.1-1.4-1.3-2.9 .2-1.7 1.9-2.1-2.8-2.3-.7-1.9-1.4-.8-1.4-1.2-1.3-4.3-1.4-3 1.5-.8 1.8 1 1.7 2.4 .2 3 .3 1.7-.3 .7-1.9-1.5-2.9-1.9 1.1-.8-1.8-4.6 .2-1.7 1.6-2.5 .2 .1 2.2-1.9 1.7-1.5 2.6-3.6 .4-1.8 0-3.9-.1-2.8-1.9-2.3 1.2-1-2-.9-1-1.5-1.5 1.3-2.1-.3-2.6-1.6-.6 1.2-1.3-.8 1.2-.1-3-.8-1.6-.6-1.6 .3-1.2 4.1-1.4-.5-.6 4-1.6 3.3-.8 .5 .8 .1-2.8 2.4 .7 1.6-1.1 3.9-4.4 1 1.5 3.5-1.8 1.4-1.9 0-.1 3.5 .9 2.7 .4 2.8 .9 1.6 .9 1.3 .2-.3 1.3 .2 2.2-2 .7-3.2-2.1-1.1-.6 0-1.4 .4-1.8-.9 .3 .8-2.3-1.7-2.3-1.5-2.5-1.1 .6 2-.5-1.4-2 .8-.6-2.1-3.5-1.8 2.9-1.6 .8-4.2-.2-.8 1.2-1.2 1.2-2.2 1.7-.8-1.3-3 3.2-.3 .5-4.3-1.3-1.7 3.8-.2 1-.5 1.9 1.5 .8M825.6 602.7l-2.6-.2-2.7-1.1-3.3-1.2-2-1-2.6 .4-1.2-.8-1.8-1.2-2 .1-2.3 0-2.2 .8-2.2-.8-4.6 1.4-2.5-.9-1.7 1.2-2.9 .1-2.7 .2-2.7 1.3-.8 1.7-2.3 .5-5-2.6-.3 1.1-2.8-.3-2.1-1.3-3.2-1.3-3.6-.4-1.3 1.6-2.4 1-.9 1.7-3.9 .4-1.6 3.3-1.5-.1-1.4-1 1.1 2.3-3.7 1.1-1.4 .3-1.5 2.5-5 2.2-2.1 0-2.1 .2-2.5 1.9-.5 .2 1 .7-2 3.2-.2 1.2-2.3 .3-.3 1.4-.4-.1-2.7 1.5-2.6 1.2-1 2.2-2.5 1.3-.3 2.1-1.4-.2-1.2 2.9 1.6 3.9 .5-.5-1.9 .9 1.7 3.1-.2 1.4 .6 1.9-1.9 .9 .3 2 2.4-.3 0 2.9 1.3 2.2 2.7-.3 1.6 .4 0 2.8-2.1 2.1-4 .6-1.4-3.1-2.6-.2-3.4-1.9-.2-.5-1.2 1-2.2-3.7-.1-1.5 .3-.7-3.5 .1-2.3-2.3-.8-.5-.4 2.9 3.5-1 4.4 .5 .2-.5 2.2-.2 4.4 .6 1 .9 .5 .9-.6 2 2.2 .5 .2 1.4 1.8 1.7 2.2 .7 3-1 4.5 .4 1.1 2.2 4.1 .5 1.9-.8 1.7 1.2 3.6 .1 2-.6 3.8-1 2.7 .8-.3-2.3 1.1-.3 2.1-1.4 .3-1.7 .9-.7 1.3-1.6 2.1-1.8 2.3 1.6 2.7 .7 2.8-.8 .3 3.4-.8 1.2-1.3 1.1-1.1 1.1-3.7 .4-2.2-2.2-2 .9-2.7-3.4-.2 .8-3.4-1.1-3.5-.7-3.4-2.3-.9-.5-.6-.5 1.2-2 1.5-2.2 4.8 .7-.1 1.4 1.8 2.7-1.2 1.2-2.1-.9-1.4-.9-.1-1.9 1.3 .5 1.7-.9 .9-1.4 4.3-.7 2.9-.6 2.1-.6 1.6-1.1 2.8-2.2 2-1.2-.6-2.5 .2 0-.6-.7-2.8-1.3 .5-1-2.6-2.5-2.3-.7 .5-.4-2.9-1.1-2.2-.3-1.7-1.7-3.2-2-1.2 .5-3.8-1.4-3.3-1-1.9-.3-1.1 .2-3.4-2.4-.8-.8-2.7 .7-.7-.2-1.8-2-1.2-1-4.2-1-2.5 .1-2.8 2.3-.4 2.7 .4-.5 .9 1.2M729.4 603.4l.9-.2 2.3 .1 4.1-.8 3.2 1.3 2.9 0 2.8 1.5 2.1 .2 1.2 0 2.8 .7-.5-.8-.5-2.3-2.3-2.8-1.9-1.3-2 1.4 2.5-3 2.5-1.4 .6-.9 3.2 1.1 3-.8 2.8 .8 2.2 2 2.7-2.1 1.6 2.8 3.6-.4 2.5 2.4-1.7 1.9-.2 1.7-1.1 1.6 .1 2.4-.1-.2-1.9 .7 1 3.7 .5 1.2 .8 2.5-1.1 2.7-.1-.7-4.9 .7-1.4-1.6-3.8-.2 .1-.5 0-2-.5-2.3 .5-1.2 3.6-.1 1.4 .4 3.5 .1 .4 .9 .6 .6-.3 3.5-2.9 .6-2 1.7-4-1.5-3.3 1.2-2.6 .2-2.3-1.4-1.8-.9-3-2.9 .3-1.1-.4-.5-.9-2.1-1.5-1.4-.5-2.8 .8 .8-.9-1.2-1.2-1.9 .7-3.5 2.8-.5 1.5-2.1 2.4 .7 1.1 .7 2.1-2 2.7 2 1.7 1.8 1.7 .7 2.9-.1 1.4-2.1-.9-2 4.4 .4 1.9 .5 0-.5-2.1-1-2.6-.7 0 1-3.8 .3-2.5 3.2-2.5 1.9-.7 .6-.9 1.7-3.9 .7-1.7-.7-.5 2.1-1.3 1.3-1.7 1.8-.3 1.5-1.5-.7-3.5 1.1-.9 1.4-3.4-1.8-.9-2.2 .1-1.6 .1-.4 2.5-1 2.7-.5 3.6 .3 4.4-.9 1.8-2 1.5 .9 .5-.9 2.6-2.1-.3-.1 .3-2.9-1.2 1.4-2.7 1.1-.4 .3-.6 2.8-2.7 .3-4 1.2-1.7-1-2.1 .9-2 1.5-1.8 .9-2.9 1.4-2.4 1.4-2.1-1-1.9-2.8-4.8-.5-2.3-1.5-3.3 .4-1.3 1-2.4 .3-1.2 .5-4.1-1-1.7 .1-.4-1.9 1.4-3-.5-2.1 .8-2.2 1.4-.3 0 2 2.6 .3 4.7 1.2 2 1.5 1.3 1.8 3.9-.4 3.6 2.1 1.2-.2-.2-1.5 1.3 .4 1.6-1.3 4.4-1 1.5-.5 1.6-.4 4.8-1.1 3.1 1.6 2-1.4 2 2.3-.2 .6 .2 3 1.4 3.2 3.1 .4 2.9 2.8 .9-1.4 1.3-.2 2.8 1.5 2.3-.4 .7 2.9 1.7 1.8 1.6 .9-.3 .2-1.8 1.2-1.7-1.5-2.6 1.1-1-1.5-1.3-1.7 2.4 .9" stroke="#a67c70" stroke-width="1.600" stroke-opacity="0.860"/>
<path d="M590 452.4L497.6 452.4L497.6 585.9L793.1 585.9L793.1 542.5L719.2 542.5L719.2 585.9M505 485.8L542 485.8M534.6 485.8L534.6 585.9M571.5 452.4L571.5 602.6M460.7 602.6L645.4 602.6L645.4 616M497.6 502.5L571.5 502.5L534.6 535.9L497.6 519.2L571.5 569.2M497.6 569.2L571.5 552.5L497.6 552.5L608.4 535.9M497.6 585.9L553 569.2L497.6 569.2M516.1 502.5L564.1 495.8L534.6 519.2L571.5 529.2M571.5 452.4L719.2 523.8M590 452.4L719.2 523.8M593.7 459.1L719.2 523.8M608.4 465.8L719.2 523.8M623.2 475.8L719.2 523.8M608.4 502.5L719.2 523.8M571.5 485.8L719.2 523.8M630.6 489.1L719.2 523.8M645.4 502.5L719.2 523.8M608.4 535.9L719.2 523.8M590 519.2L719.2 523.8M645.4 542.5L719.2 523.8M663.8 529.2L719.2 523.8M571.5 452.4L608.4 465.8L645.4 482.5L682.3 502.5L719.2 523.8L682.3 535.9L719.2 532.5L663.8 539.2L719.2 523.8M626.9 529.2L663.8 552.5L626.9 569.2M645.4 529.2L700.8 552.5L608.4 585.9M626.9 552.5L626.9 585.9L719.2 585.9M645.4 535.9L663.8 542.5L608.4 522.5M571.5 575.9L608.4 585.9L626.9 569.2M645.4 585.9L719.2 562.6L663.8 535.9M645.4 562.6L682.3 575.9L645.4 535.9M571.5 575.9L663.8 542.5L645.4 535.9M645.4 575.9L700.8 569.2L663.8 569.2M645.4 552.5L608.4 585.9L590 535.9M571.5 552.5L663.8 585.9L571.5 585.9M590 562.6L608.4 562.6L682.3 535.9M626.9 575.9L682.3 542.5L626.9 552.5M608.4 575.9L645.4 569.2L571.5 535.9M571.5 569.2L626.9 542.5L590 585.9M571.5 529.2L719.2 562.6L608.4 522.5M590 529.2L682.3 575.9L608.4 535.9M663.8 535.9L608.4 562.6L682.3 569.2M571.5 552.5L719.2 535.9L645.4 585.9M590 569.2L663.8 535.9L590 585.9M590 562.6L663.8 569.2L571.5 522.5M608.4 552.5L663.8 585.9L590 585.9M590 562.6L608.4 552.5L663.8 552.5M645.4 529.2L626.9 552.5L700.8 522.5M590 535.9L626.9 542.5L608.4 552.5M590 562.6L700.8 575.9L608.4 522.5M608.4 582.6L793.1 579.9M682.3 577.2L793.1 577.2M719.2 572.6L793.1 575.2M682.3 567.9L793.1 570.6M571.5 563.9L793.1 566.6M571.5 558.5L793.1 555.9M645.4 554.5L793.1 557.2M682.3 549.2L793.1 549.2M682.3 545.2L793.1 542.5M645.4 563.6L682.3 560.2L719.2 558.5M626.9 579.7L710 578.4L793.1 578.4M590 582L654.6 580L719.2 586.6M590 567.1L636.1 570.8L682.3 569.4M590 561.9L636.1 563L682.3 557.7M663.8 542L728.5 541.4L793.1 545.9M571.5 583.7L682.3 580.4L793.1 581.6M571.5 542.8L682.3 541.7L793.1 543M608.4 553.1L663.8 549.1L719.2 557.6M663.8 561.2L673.1 558L682.3 558.7M682.3 554.2L700.8 555.4L719.2 552.3M682.3 545.6L737.7 542L793.1 550.6M571.5 563.2L682.3 561.9L793.1 564.5M571.5 584.7L626.9 588L682.3 588.8M626.9 573.9L673.1 574.8L719.2 571.4M626.9 559.7L710 556.9L793.1 564.1M571.5 552.2L645.4 551.4L719.2 552.4M663.8 575.1L673.1 575.1L682.3 573.9M608.4 544.7L645.4 545.8L682.3 548.5M645.4 558.3L682.3 556.3L719.2 560M630.8 546L585.3 558.3L566 540.2M617.7 527.2L580.4 569.7L562.1 521.1M556.3 572.7L598.2 528.8L539.7 578.3M636 522.2L570.1 554.3L650.8 527.1M574.1 544.4L636.2 539.5L640.3 540.9M567.7 521.7L589.6 546.1L619.7 563.8M571.2 534.9L623.4 544.1L585.5 569.9M614.1 563L648.8 534.7L658.1 574.9M545.8 543.3L632.4 560.4L544.4 569.4M619.8 563.8L641.1 537.2L601.7 580.2M558 525.4L620.5 525.7L597.4 516M551 520.3L639.4 569.1L586.1 523M574.7 549.5L580 529.3L535.4 545.9M602.1 545.7L653.6 562L575.6 517M544.8 519L651.1 527.1L550.1 566.4M574.9 576.1L593.4 523.9L651.6 565.1M608.9 581.4L616.4 580.3L577.5 554.4M563 515L582.5 530.5L588.4 580.2M589.7 532.2L665 554.3L660.1 522.5M588.2 532.8L608.8 529.7L607.3 536.6M612.9 550.3L622.8 532.6L605.1 571.6M587.7 516L587 542.2L654.5 524.5M597.6 560.2L573.4 549.9L568.8 549.4M577.1 574.2L557.3 559.9L602.2 579.6M629.4 542.6L673.7 575.2L546.3 571.4M630.8 548.9L665.6 534.5L585.3 566.1M585.6 557.6L663.2 526.4L650.1 547.5M545.8 551.8L560.2 566.9L622.7 517.3M538.3 571.2L558.1 565.5L625.4 566.3M586.2 545.9L625.5 531.4L612.9 534.7M607.1 518.1L559.5 544.5L638.2 541.5M590.2 519.1L619.8 569.5L561.7 546.3M595.2 572.6L664.9 544.9L578.2 570.5M596.9 517.2L579.7 535.8L559 576.1M626.5 572.8L567.1 559.3L589.2 519.8M590.8 530.8L580.4 544.8L634.9 576.2M593.5 556.3L653.8 560.9L623.1 540.2M570.1 509.3L655.2 534.3L595.1 581M613.4 537.5L663.7 553.7L558.4 574.9M552.4 571L590.2 542.1L607.4 573.6M608.4 485.8L608.4 569.2M590 485.8L663.8 519.2M608.4 502.5L663.8 552.5M608.4 502.5L608.4 569.2M571.5 519.2L663.8 519.2M590 502.5L663.8 552.5M608.4 519.2L608.4 569.2M590 535.9L663.8 552.5M608.4 469.1L645.4 535.9M590 535.9L626.9 519.2M571.5 502.5L682.3 535.9M590 519.2L663.8 552.5M608.4 519.2L608.4 535.9M590 485.8L608.4 569.2" stroke="#e17dc4" stroke-width="1.350" stroke-opacity="0.760"/>
</g>
<path d="M460.7 782.9v2.4M534.6 782.9v2.4M608.4 782.9v2.4M682.3 782.9v2.4M756.2 782.9v2.4M830.0 782.9v2.4M903.9 782.9v2.4M438.3 469.1h-2.4M438.3 535.9h-2.4M438.3 602.6h-2.4M438.3 669.4h-2.4M438.3 736.1h-2.4" stroke="#333" stroke-width="0.700"/>
<rect x="438.3" y="421.2" width="486.3" height="361.7" stroke="#4a4a4a" stroke-width="1.100"/>
<rect x="937" y="424.200" width="53.600" height="73.800" rx="1.800" fill="#fff" stroke="#dcdcdc" stroke-width="0.800"/>
<path d="M939.200 430.3H952.800" stroke="#62a0cb" stroke-width="1.250"/>
<path d="M939.200 440.4H952.800" stroke="#ffa556" stroke-width="1.250"/>
<path d="M939.200 450.6H952.800" stroke="#6bbc6b" stroke-width="1.250"/>
<path d="M939.200 460.7H952.800" stroke="#e26868" stroke-width="1.250"/>
<path d="M939.200 470.8H952.800" stroke="#b494d0" stroke-width="1.250"/>
<path d="M939.200 481.0H952.800" stroke="#ae887f" stroke-width="1.250"/>
<path d="M939.200 491.1H952.800" stroke="#eba0d4" stroke-width="1.250"/>
</svg>
<span class="t" style="left:957.50px;top:426.00px;line-height:8px;font-size:6.1px;letter-spacing:0.005px;color:#222;font-family:'DejaVu Sans',sans-serif;">Profile_57</span>
<span class="t" style="left:957.50px;top:437.00px;line-height:8px;font-size:6.1px;letter-spacing:0.005px;color:#222;font-family:'DejaVu Sans',sans-serif;">Profile_50</span>
<span class="t" style="left:957.50px;top:447.00px;line-height:8px;font-size:6.1px;letter-spacing:0.005px;color:#222;font-family:'DejaVu Sans',sans-serif;">Profile_49</span>
<span class="t" style="left:957.50px;top:457.00px;line-height:8px;font-size:6.1px;letter-spacing:0.005px;color:#222;font-family:'DejaVu Sans',sans-serif;">Profile_47</span>
<span class="t" style="left:957.50px;top:467.00px;line-height:8px;font-size:6.1px;letter-spacing:0.005px;color:#222;font-family:'DejaVu Sans',sans-serif;">Profile_46</span>
<span class="t" style="left:957.50px;top:477.00px;line-height:8px;font-size:6.1px;letter-spacing:0.005px;color:#222;font-family:'DejaVu Sans',sans-serif;">Profile_48</span>
<span class="t" style="left:957.50px;top:487.00px;line-height:8px;font-size:6.1px;letter-spacing:0.005px;color:#222;font-family:'DejaVu Sans',sans-serif;">Profile_43</span>
<span class="t" style="left:576.25px;top:408.00px;line-height:13px;font-size:9.8px;letter-spacing:-0.029px;font-weight:700;color:#111;font-family:'DejaVu Sans',sans-serif;">Torque vs Motor Speed - Campaign_04</span>
<span class="t" style="left:458.60px;top:788.00px;line-height:9px;font-size:6.6px;color:#1a1a1a;font-family:'DejaVu Sans',sans-serif;">0</span>
<span class="t" style="left:526.17px;top:788.00px;line-height:9px;font-size:6.6px;letter-spacing:0.005px;color:#1a1a1a;font-family:'DejaVu Sans',sans-serif;">1000</span>
<span class="t" style="left:600.04px;top:788.00px;line-height:9px;font-size:6.6px;letter-spacing:0.005px;color:#1a1a1a;font-family:'DejaVu Sans',sans-serif;">2000</span>
<span class="t" style="left:673.91px;top:788.00px;line-height:9px;font-size:6.6px;letter-spacing:0.005px;color:#1a1a1a;font-family:'DejaVu Sans',sans-serif;">3000</span>
<span class="t" style="left:747.78px;top:788.00px;line-height:9px;font-size:6.6px;letter-spacing:0.005px;color:#1a1a1a;font-family:'DejaVu Sans',sans-serif;">4000</span>
<span class="t" style="left:821.65px;top:788.00px;line-height:9px;font-size:6.6px;letter-spacing:0.005px;color:#1a1a1a;font-family:'DejaVu Sans',sans-serif;">5000</span>
<span class="t" style="left:895.52px;top:788.00px;line-height:9px;font-size:6.6px;letter-spacing:0.005px;color:#1a1a1a;font-family:'DejaVu Sans',sans-serif;">6000</span>
<span class="t" style="left:420.80px;top:466.00px;line-height:9px;font-size:6.6px;color:#1a1a1a;font-family:'DejaVu Sans',sans-serif;">200</span>
<span class="t" style="left:420.80px;top:533.00px;line-height:9px;font-size:6.6px;color:#1a1a1a;font-family:'DejaVu Sans',sans-serif;">100</span>
<span class="t" style="left:429.20px;top:600.00px;line-height:9px;font-size:6.6px;color:#1a1a1a;font-family:'DejaVu Sans',sans-serif;">0</span>
<span class="t" style="left:415.30px;top:667.00px;line-height:9px;font-size:6.6px;letter-spacing:-0.006px;color:#1a1a1a;font-family:'DejaVu Sans',sans-serif;">−100</span>
<span class="t" style="left:415.30px;top:733.00px;line-height:9px;font-size:6.6px;letter-spacing:-0.006px;color:#1a1a1a;font-family:'DejaVu Sans',sans-serif;">−200</span>
<span class="t" style="left:641.75px;top:797.00px;line-height:11px;font-size:8.4px;letter-spacing:0.016px;color:#222;font-family:'DejaVu Sans',sans-serif;">Motor Speed (rpm)</span>
<div class="abs" style="left:407px;top:602px;width:0;height:0;transform:rotate(-90deg)"><span class="t" style="left:-27.00px;top:-5.00px;line-height:11px;font-size:8.7px;letter-spacing:0.051px;color:#222;font-family:'DejaVu Sans',sans-serif;">Torque (Nm)</span></div>
</div>
</div>

<!-- CHAT -->
<div id="chat">
<div class="abs" style="left:-1026px;top:-36px;width:0;height:0">
<span class="t" style="left:1046.30px;top:48.00px;line-height:15px;font-size:11.4px;letter-spacing:-0.568px;color:#3b3b3b;">CHAT</span>
<div class="abs" style="left:1044.700px;top:65px;width:31.300px;height:1px;background:#005fb8"></div>
<svg class="abs" style="left:1190.300px;top:47.400px" width="14" height="14" viewBox="0 0 14 14"><path d="M6.900 0.300V13.500M0.300 6.900H13.500" stroke="#3b3b3b" stroke-width="1.200" fill="none"/></svg>
<svg class="abs" style="left:1209.30px;top:51.45px" width="9.80" height="5.90" viewBox="-1 -1 9.80 5.90"><path d="M0 0L3.90 3.90L7.80 0" fill="none" stroke="#3b3b3b" stroke-width="1.1"/></svg>
<svg class="abs" style="left:1231.300px;top:47.800px" width="14" height="14" viewBox="0 0 14 14" fill="none" stroke="#3b3b3b" stroke-width="1.150" stroke-linecap="round" stroke-linejoin="round"><path d="M1.500 4.200A6 6 0 1 1 .9 7M.9 1.300V4.400H4"/><path d="M6.800 3.900V7.300H9.500"/></svg>
<svg class="abs" style="left:1256px;top:46px" width="18" height="18" viewBox="1256 46 18 18" fill="none" stroke="#3b3b3b" stroke-width="1.100" stroke-linejoin="round"><path d="M1263.67 47.80L1265.93 47.80L1265.92 49.63L1267.38 50.24L1268.67 48.93L1270.27 50.53L1268.96 51.82L1269.57 53.28L1271.40 53.27L1271.40 55.53L1269.57 55.52L1268.96 56.98L1270.27 58.27L1268.67 59.87L1267.38 58.56L1265.92 59.17L1265.93 61.00L1263.67 61.00L1263.68 59.17L1262.22 58.56L1260.93 59.87L1259.33 58.27L1260.64 56.98L1260.03 55.52L1258.20 55.53L1258.20 53.27L1260.03 53.28L1260.64 51.82L1259.33 50.53L1260.93 48.93L1262.22 50.24L1263.68 49.63z"/><circle cx="1264.8" cy="54.4" r="2"/></svg>
<svg class="abs" style="left:1286.30px;top:52.50px" width="13.0" height="4" viewBox="0 0 13.0 4"><circle cx="1.20" cy="2" r="1.1" fill="#3b3b3b"/><circle cx="5.70" cy="2" r="1.1" fill="#3b3b3b"/><circle cx="10.20" cy="2" r="1.1" fill="#3b3b3b"/></svg>
<div class="abs" style="left:1311.500px;top:47px;width:1px;height:15px;background:#c4c4c4"></div>
<svg class="abs" style="left:1325px;top:48.200px" width="15" height="13" viewBox="0 0 15 13" fill="none" stroke="#3b3b3b" stroke-width="1.200"><path d="M0.700 4.200V2.200A1.500 1.500 0 0 1 2.200.7H4.400M9.900.7H12.100A1.500 1.500 0 0 1 13.600 2.200V4.200M13.600 8.700V10.700A1.500 1.500 0 0 1 12.100 12.200H9.900M4.400 12.200H2.200A1.500 1.500 0 0 1 .7 10.700V8.700"/></svg>
<svg class="abs" style="left:1354.300px;top:50px" width="11" height="10" viewBox="0 0 11 10"><path d="M0.500 0.500l9.400 9M9.900.5L0.500 9.500" stroke="#3b3b3b" stroke-width="1.150" fill="none"/></svg>
<div class="abs" style="left:1043.500px;top:225px;width:322px;height:13.500px;border:1px solid #e6e6e6;border-radius:4.500px;background:#f8f8f8"></div>
<div class="abs" style="left:1036.4px;top:130.4px;width:329.30px;height:54.10px;border:1px solid #e6e6e6;border-radius:4.500px;background:#f8f8f8"></div><svg class="abs" style="left:1057.20px;top:151.80px" width="7.20" height="12.40" viewBox="-1 -1 7.20 12.40"><path d="M0 0L5.20 5.20L0 10.40" fill="none" stroke="#3b3b3b" stroke-width="1.2"/></svg><span class="t" style="left:1072.90px;top:140.00px;line-height:18px;font-size:13.5px;letter-spacing:-0.233px;color:#3b3b3b;">Ran Connect to ODS Server –<span style="color:#767676"> ODSBox-</span></span><span class="t" style="left:1072.90px;top:161.00px;line-height:18px;font-size:13.5px;letter-spacing:-0.426px;color:#767676;">JAQueL (MCP Server)</span><svg class="abs" style="left:1334.00px;top:152.40px" width="16" height="11" viewBox="0 0 16 11"><path d="M0.800 6L4.800 9.700L14.600 0.800" fill="none" stroke="#388a34" stroke-width="1.250"/></svg>
<div class="abs" style="left:1043.5px;top:245.3px;width:324.20px;height:54.00px;border:1px solid #e6e6e6;border-radius:4.500px;background:#f8f8f8"></div><svg class="abs" style="left:1063.20px;top:266.00px" width="7.20" height="12.40" viewBox="-1 -1 7.20 12.40"><path d="M0 0L5.20 5.20L0 10.40" fill="none" stroke="#3b3b3b" stroke-width="1.2"/></svg><span class="t" style="left:1078.70px;top:254.00px;line-height:18px;font-size:13.5px;letter-spacing:-0.395px;color:#3b3b3b;">Ran Execute ODS Query –<span style="color:#767676"> ODSBox-</span></span><span class="t" style="left:1078.70px;top:275.00px;line-height:18px;font-size:13.5px;letter-spacing:-0.463px;color:#767676;">JAQueL (MCP Server)</span><svg class="abs" style="left:1337.00px;top:266.60px" width="16" height="11" viewBox="0 0 16 11"><path d="M0.800 6L4.800 9.700L14.600 0.800" fill="none" stroke="#388a34" stroke-width="1.250"/></svg>
<div class="abs" style="left:1048.2px;top:399px;width:324.20px;height:54.00px;border:1px solid #e6e6e6;border-radius:4.500px;background:#f8f8f8"></div><svg class="abs" style="left:1067.80px;top:420.00px" width="7.20" height="12.40" viewBox="-1 -1 7.20 12.40"><path d="M0 0L5.20 5.20L0 10.40" fill="none" stroke="#3b3b3b" stroke-width="1.2"/></svg><span class="t" style="left:1083.40px;top:408.00px;line-height:18px;font-size:13.5px;letter-spacing:-0.333px;color:#3b3b3b;">Ran Check Entity Schema –<span style="color:#767676"> ODSBox-</span></span><span class="t" style="left:1083.40px;top:428.00px;line-height:18px;font-size:13.5px;letter-spacing:-0.463px;color:#767676;">JAQueL (MCP Server)</span><svg class="abs" style="left:1342.50px;top:420.60px" width="16" height="11" viewBox="0 0 16 11"><path d="M0.800 6L4.800 9.700L14.600 0.800" fill="none" stroke="#388a34" stroke-width="1.250"/></svg>
<div class="abs" style="left:1032.6px;top:73.5px;width:347.80px;height:46.90px;background:#cfe3fa;border:1px solid #2f5293;box-shadow:inset 0 0 0 .65px #2f5293;border-radius:10.500px"></div><span class="t" style="left:1130.10px;top:88.00px;line-height:23px;font-size:18px;letter-spacing:0.601px;color:#454545;">Connect to server</span>
<div class="abs" style="left:1032.6px;top:190.6px;width:347.80px;height:46.40px;background:#cfe3fa;border:1px solid #2f5293;box-shadow:inset 0 0 0 .65px #2f5293;border-radius:10.500px"></div><span class="t" style="left:1066.30px;top:204.00px;line-height:23px;font-size:18px;letter-spacing:0.696px;color:#454545;">What kind of data is in the server</span>
<div class="abs" style="left:1035.9px;top:350.6px;width:347.40px;height:46.50px;background:#cfe3fa;border:1px solid #2f5293;box-shadow:inset 0 0 0 .65px #2f5293;border-radius:10.500px"></div><span class="t" style="left:1087.20px;top:364.00px;line-height:23px;font-size:18px;letter-spacing:0.785px;color:#454545;">Compare the individual tests</span>
<div class="abs" style="left:1038.3px;top:638.3px;width:347.10px;height:45.70px;background:#cfe3fa;border:1px solid #2f5293;box-shadow:inset 0 0 0 .65px #2f5293;border-radius:10.500px"></div><span class="t" style="left:1076.40px;top:651.00px;line-height:23px;font-size:18px;letter-spacing:0.752px;color:#454545;">Convert this into a nice Web UI</span>
<span class="t" style="left:1047.30px;top:309.00px;line-height:18px;font-size:13.5px;letter-spacing:-0.044px;color:#3b3b3b;">The server contains data related to </span>
<span class="t" style="left:1258.09px;top:309.00px;line-height:18px;font-size:13.5px;letter-spacing:-0.044px;font-weight:700;color:#3b3b3b;">Electric Motor</span>
<span class="t" style="left:1047.30px;top:330.00px;line-height:18px;font-size:13.5px;letter-spacing:-0.018px;font-weight:700;color:#3b3b3b;">Temperature</span>
<span class="t" style="left:1127.88px;top:330.00px;line-height:18px;font-size:13.5px;letter-spacing:-0.018px;color:#3b3b3b;"> testing:</span>
<span class="t" style="left:1047.30px;top:462.00px;line-height:18px;font-size:13.5px;letter-spacing:0.095px;font-weight:700;color:#3b3b3b;">Compared measurements:</span>
<div class="abs" style="left:1060px;top:506px;width:5px;height:5px;border-radius:50%;background:#3b3b3b"></div>
<span class="t" style="left:1073.10px;top:501.00px;line-height:18px;font-size:13.5px;letter-spacing:0.300px;font-weight:700;color:#3b3b3b;">Coolant</span>
<span class="t" style="left:1125.45px;top:501.00px;line-height:18px;font-size:13.5px;letter-spacing:0.300px;color:#3b3b3b;"> temperature</span>
<div class="abs" style="left:1060px;top:527px;width:5px;height:5px;border-radius:50%;background:#3b3b3b"></div>
<span class="t" style="left:1073.10px;top:522.00px;line-height:18px;font-size:13.5px;letter-spacing:0.248px;font-weight:700;color:#3b3b3b;">Stator_winding</span>
<span class="t" style="left:1174.07px;top:522.00px;line-height:18px;font-size:13.5px;letter-spacing:0.248px;color:#3b3b3b;"> temperature</span>
<div class="abs" style="left:1060px;top:548px;width:5px;height:5px;border-radius:50%;background:#3b3b3b"></div>
<span class="t" style="left:1073.10px;top:543.00px;line-height:18px;font-size:13.5px;letter-spacing:0.300px;font-weight:700;color:#3b3b3b;">Stator_tooth</span>
<span class="t" style="left:1156.95px;top:543.00px;line-height:18px;font-size:13.5px;letter-spacing:0.300px;color:#3b3b3b;"> temperature</span>
<div class="abs" style="left:1060px;top:569px;width:5px;height:5px;border-radius:50%;background:#3b3b3b"></div>
<span class="t" style="left:1073.10px;top:564.00px;line-height:18px;font-size:13.5px;letter-spacing:0.257px;font-weight:700;color:#3b3b3b;">Pm</span>
<span class="t" style="left:1094.63px;top:564.00px;line-height:18px;font-size:13.5px;letter-spacing:0.257px;color:#3b3b3b;"> (Permanent magnet temperature)</span>
<div class="abs" style="left:1060px;top:590px;width:5px;height:5px;border-radius:50%;background:#3b3b3b"></div>
<span class="t" style="left:1073.10px;top:585.00px;line-height:18px;font-size:13.5px;letter-spacing:0.273px;font-weight:700;color:#3b3b3b;">Speed</span>
<span class="t" style="left:1114.98px;top:585.00px;line-height:18px;font-size:13.5px;letter-spacing:0.273px;color:#3b3b3b;"> (Motor speed)</span>
<div class="abs" style="left:1060px;top:611px;width:5px;height:5px;border-radius:50%;background:#3b3b3b"></div>
<span class="t" style="left:1073.10px;top:606.00px;line-height:18px;font-size:13.5px;letter-spacing:0.225px;font-weight:700;color:#3b3b3b;">Torque</span>
<div class="abs" style="left:1042.600px;top:696px;width:323px;height:93.300px;border:1px solid #d4d4d4;border-radius:5px;background:#fff"></div>
<div class="abs" style="left:1049.300px;top:703.500px;width:98.900px;height:19.800px;border:1px solid #d8d8d8;border-radius:4px"></div>
<svg class="abs" style="left:1055px;top:708px" width="12" height="12" viewBox="0 0 12 12" fill="none" stroke="#3b3b3b" stroke-width="1.050" stroke-linecap="round"><path d="M4.200 7.600L8.300 3.500a1.300 1.300 0 0 0-1.800-1.800L1.900 6.300a2.300 2.300 0 0 0 3.200 3.200L9.800 4.800"/></svg>
<span class="t" style="left:1072.60px;top:705.00px;line-height:16px;font-size:12.4px;letter-spacing:-0.574px;color:#3b3b3b;">Add Context...</span>
<span class="t" style="left:1049.10px;top:734.00px;line-height:18px;font-size:13.5px;letter-spacing:0.019px;color:#767676;">Describe what to build next</span>
<span class="t" style="left:1055.20px;top:764.00px;line-height:16px;font-size:12.4px;letter-spacing:-0.358px;color:#3b3b3b;">Agent</span>
<svg class="abs" style="left:1089.70px;top:769.50px" width="9.60" height="5.80" viewBox="-1 -1 9.60 5.80"><path d="M0 0L3.80 3.80L7.60 0" fill="none" stroke="#3b3b3b" stroke-width="1.05"/></svg>
<span class="t" style="left:1115.40px;top:764.00px;line-height:16px;font-size:12.4px;letter-spacing:-0.703px;color:#3b3b3b;">Claude Sonnet 4.5</span>
<svg class="abs" style="left:1209.50px;top:769.50px" width="9.60" height="5.80" viewBox="-1 -1 9.60 5.80"><path d="M0 0L3.80 3.80L7.60 0" fill="none" stroke="#3b3b3b" stroke-width="1.05"/></svg>
<svg class="abs" style="left:1232.500px;top:763.500px" width="17" height="17" viewBox="0 0 17 17" fill="none" stroke="#3b3b3b" stroke-width="1.200" stroke-linejoin="round"><path d="M2.200 1.200v3.200a2.200 2.200 0 0 0 1.400 2v7.700a1.100 1.100 0 0 0 2.200 0V6.400a2.200 2.200 0 0 0 1.400-2V1.200M4.700 1v3"/><path d="M11.900 1h1.600v4.300h-1.600zM12.700 5.300v2.200M10.700 8.600a1.100 1.100 0 0 1 1.100-1.100h1.800a1.100 1.100 0 0 1 1.100 1.100v5.500a1.100 1.100 0 0 1-1.100 1.100h-1.800a1.100 1.100 0 0 1-1.100-1.100z"/></svg>
<svg class="abs" style="left:1312px;top:764.500px" width="18" height="16" viewBox="0 0 18 16" fill="none" stroke="#b4b4b4" stroke-width="1.150" stroke-linejoin="round" stroke-linecap="round"><path d="M5.800 11.600H4.100a3.300 3.300 0 0 1-.3-6.600 4.700 4.700 0 0 1 9.100.9 2.700 2.700 0 0 1 2.100 1.600"/><path d="M7.200 7.600l8.800 3.200-8.200 3.600 1.200-3.400zM9 11l3.600-.1"/></svg>
<svg class="abs" style="left:1340.300px;top:765.300px" width="14" height="14" viewBox="0 0 14 14"><path d="M6.900 0.300V13.500M0.300 6.900H13.500" stroke="#b4b4b4" stroke-width="1.150" fill="none"/></svg>
</div>
</div>

<!-- STATUS BAR -->
<div id="status">
<div class="abs" style="left:0;top:-808px;width:0;height:0">
<svg class="abs" style="left:10.500px;top:812.500px" width="12" height="14" viewBox="0 0 12 14" fill="none" stroke="#3b3b3b" stroke-width="1.200"><path d="M0.600 5.300L4.600 9.200L0.600 13.100M10.900 0.900L7.400 4.300L10.900 7.700"/></svg>
<svg class="abs" style="left:42.500px;top:809.500px" width="16" height="18" viewBox="0 0 16 18" fill="none" stroke="#3b3b3b" stroke-width="1.100"><circle cx="3.300" cy="3" r="2"/><circle cx="3.300" cy="15" r="2"/><path d="M3.300 5V13M3.300 10.300c2.600 0 5.600-.4 6.200-2.600"/><path d="M9.200 7.400a1.600 1.600 0 1 1 3.200 0" /><circle cx="10.800" cy="12.200" r="4.600" fill="#2b2b2b" stroke="none"/><path d="M10.800 9.800v4.800M8.400 12.200h4.800M9.100 10.500l3.400 3.400M12.500 10.500l-3.400 3.400" stroke="#f8f8f8" stroke-width="0.900"/></svg>
<span class="t" style="left:62.00px;top:811.00px;line-height:16px;font-size:12.5px;letter-spacing:-0.100px;color:#3b3b3b;">UV-version*</span>
<svg class="abs" style="left:134.500px;top:812.500px" width="16" height="15" viewBox="0 0 16 15"><path d="M5 10.300H3.900a3.200 3.200 0 0 1-.4-6.400 4.500 4.500 0 0 1 8.700.9 2.600 2.600 0 0 1 1.800 1.500" fill="none" stroke="#3b3b3b" stroke-width="1.150" stroke-linecap="round"/><circle cx="10.600" cy="9.800" r="4.600" fill="#2b2b2b"/><path d="M10.600 12.300V7.600M8.500 9.500l2.100-2.100 2.100 2.100" fill="none" stroke="#f8f8f8" stroke-width="1.100"/></svg>
<svg class="abs" style="left:167.600px;top:811.600px" width="15" height="15" viewBox="0 0 15 15" fill="none" stroke="#3b3b3b" stroke-width="1.100"><circle cx="7.500" cy="7.500" r="6.500"/><path d="M4.900 4.900l5.200 5.200M10.100 4.900l-5.200 5.200"/></svg>
<span class="t" style="left:186.90px;top:811.00px;line-height:16px;font-size:12.5px;letter-spacing:-0.353px;color:#3b3b3b;">0</span>
<svg class="abs" style="left:198px;top:811.500px" width="15" height="15" viewBox="0 0 15 15" fill="none" stroke="#3b3b3b" stroke-width="1.100" stroke-linejoin="round"><path d="M7.500 1.300L14 13.500H1z"/><path d="M7.500 5.600V9.600M7.500 10.800V12"/></svg>
<span class="t" style="left:216.90px;top:811.00px;line-height:16px;font-size:12.5px;letter-spacing:-0.353px;color:#3b3b3b;">0</span>
<svg class="abs" style="left:1323px;top:809px" width="22" height="19" viewBox="1323 809 22 19" fill="none" stroke="#2b2b2b"><circle cx="1330.200" cy="814.900" r="2.900" stroke-width="1.400"/><circle cx="1337" cy="814.900" r="2.900" stroke-width="1.400"/><path d="M1327.300 816.800C1325.300 818 1325.200 820.300 1325.800 822.300C1328 825.700 1339.200 825.700 1341.400 822.300C1342 820.300 1341.900 818 1339.900 816.800" stroke-width="1.900"/><path d="M1331.400 820.300V822.700M1335.600 820.300V822.700" stroke-width="1.300"/></svg>
<svg class="abs" style="left:1361px;top:810px" width="15" height="17" viewBox="0 0 15 17" fill="none" stroke="#3b3b3b" stroke-width="1.150" stroke-linejoin="round"><path d="M7.800 2.300A4.400 4.400 0 0 0 2.700 6.700v3.500L1.300 12.800H11.900L10.500 10.200V7.800M5 13v.5a1.600 1.600 0 0 0 3.200 0V13"/><circle cx="10.800" cy="4" r="2.700" fill="#2b2b2b" stroke="none"/></svg>
<div class="abs" style="left:371.400px;top:806px;width:651.900px;height:4.500px;background:#fff"></div>
<div class="abs" style="left:369.700px;top:806px;width:1.700px;height:4.500px;background:#5d5bb5"></div>
<div class="abs" style="left:389.600px;top:806px;width:615.400px;height:4.500px;box-shadow:-1px 0 0 #f4f4f4,1px 0 0 #f4f4f4"></div>
</div>
</div>

</div>
</body>
</html>
